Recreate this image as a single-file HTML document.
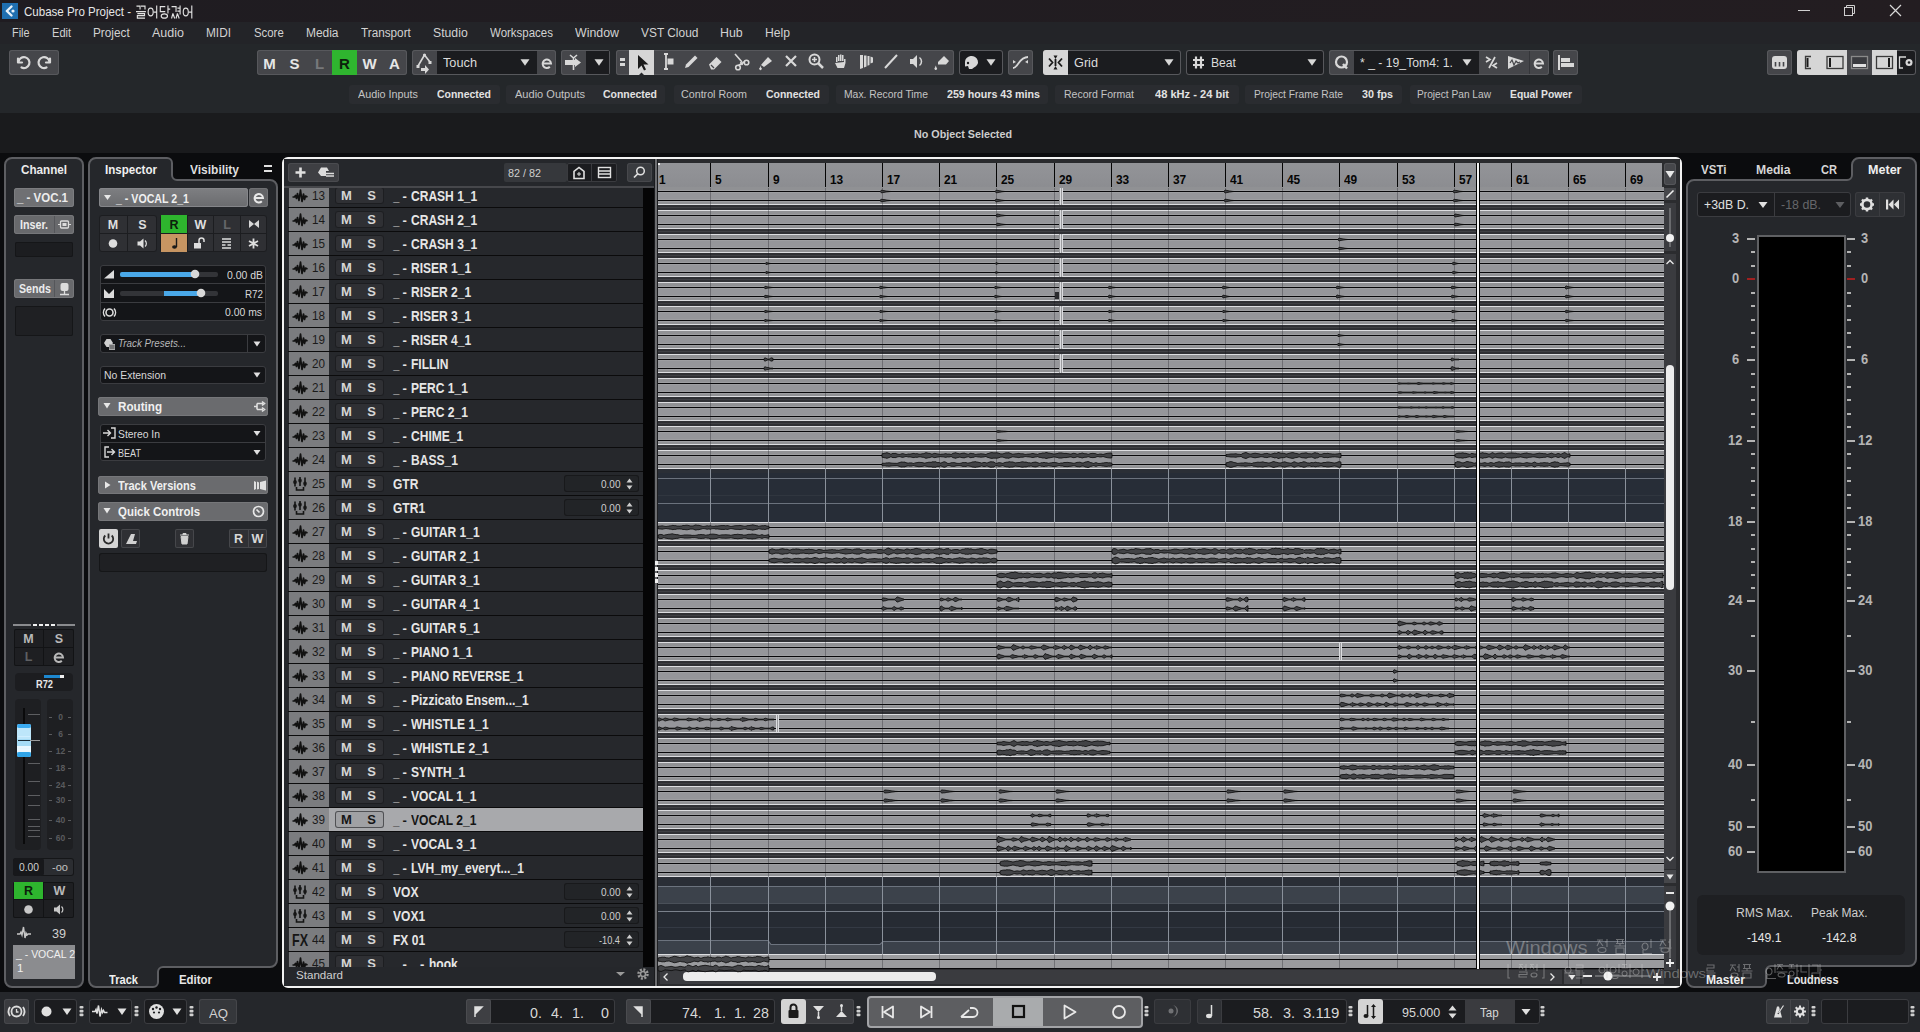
<!DOCTYPE html><html><head><meta charset="utf-8"><style>
html,body{margin:0;padding:0;}
body{width:1920px;height:1032px;overflow:hidden;position:relative;background:#0b0c0e;font-family:"Liberation Sans",sans-serif;}
.a{position:absolute;box-sizing:border-box;}
.t{white-space:nowrap;}
svg.a{overflow:visible;}
</style></head><body>
<div class="a" style="left:0px;top:0px;width:1920px;height:22px;background:linear-gradient(to right,#1f1c21,#231d21);"></div>
<div class="a" style="left:0px;top:22px;width:1920px;height:22px;background:#232428;"></div>
<div class="a" style="left:0px;top:44px;width:1920px;height:69px;background:#24272a;"></div>
<div class="a" style="left:0px;top:113px;width:1920px;height:40px;background:#1a1b1d;"></div>
<div class="a" style="left:0px;top:153px;width:1920px;height:839px;background:#0b0c0e;"></div>
<div class="a" style="left:0px;top:992px;width:1920px;height:40px;background:#25272b;"></div>
<svg class="a" style="left:2px;top:3px;" width="16" height="16" viewBox="0 0 16 16"><rect x="0" y="0" width="16" height="16" fill="#1f6fb0"/><path d="M9.5 3.5 L4.8 8 L9.5 12.5" stroke="#e8f2fa" stroke-width="2.4" fill="none" stroke-linecap="round" stroke-linejoin="round"/><circle cx="11" cy="8" r="1.6" fill="#e8f2fa"/></svg>
<div class="a t" style="left:24.00px;top:5.00px;font-size:13px;line-height:13px;color:#e6e6e6;transform:scaleX(0.8867);transform-origin:0 0;">Cubase Pro Project -</div>
<svg class="a" style="left:136px;top:5px;" width="64" height="14" viewBox="0 0 64 14"><g stroke="#e2e2e2" stroke-width="1.25" fill="none" transform="scale(0.9 1)">
<path d="M0.5 1h4v3.5M5.5 1h4.5v3.5M0 6.5h11M1.5 8.5h8v2.2h-8v2.3h8.5"/>
<g transform="translate(13 0)"><ellipse cx="3.3" cy="7" rx="2.8" ry="3.8"/><path d="M10 0.5v13M6.5 7h3.5"/></g>
<g transform="translate(26 0)"><path d="M6.5 1.5h-5.5v5h5.5M9.5 0.5v8M9.5 4h2.5"/><ellipse cx="5.5" cy="11" rx="3.5" ry="2.2"/></g>
<g transform="translate(39 0)"><path d="M0.5 1.5h5v5.5M10 0.5v9M7 3h3M7 6h3M2 8.5l-1.5 5M2 8.5l2 5M7 8.5l-1.5 5M7 8.5l2 5"/></g>
<g transform="translate(52 0)"><ellipse cx="3.3" cy="7" rx="2.8" ry="3.8"/><path d="M10 0.5v13M6.5 7h3.5"/></g>
</g></svg>
<div class="a" style="left:1798px;top:10px;width:12px;height:1px;background:#d0d0d0;"></div>
<svg class="a" style="left:1843px;top:4px;" width="14" height="14" viewBox="0 0 14 14"><rect x="1.5" y="3.5" width="8" height="8" fill="none" stroke="#d0d0d0" stroke-width="1"/><path d="M3.5 3.5V1.5h8v8h-2" fill="none" stroke="#d0d0d0" stroke-width="1"/></svg>
<svg class="a" style="left:1889px;top:4px;" width="14" height="14" viewBox="0 0 14 14"><path d="M1 1L12 12M12 1L1 12" stroke="#d8d8d8" stroke-width="1.2"/></svg>
<div class="a t" style="left:11.50px;top:27.42px;font-size:12.5px;line-height:12.5px;color:#d2d2d2;transform:scaleX(0.8688);transform-origin:0 0;">File</div>
<div class="a t" style="left:51.70px;top:27.42px;font-size:12.5px;line-height:12.5px;color:#d2d2d2;transform:scaleX(0.8867);transform-origin:0 0;">Edit</div>
<div class="a t" style="left:93.30px;top:27.42px;font-size:12.5px;line-height:12.5px;color:#d2d2d2;transform:scaleX(0.9433);transform-origin:0 0;">Project</div>
<div class="a t" style="left:152.00px;top:27.42px;font-size:12.5px;line-height:12.5px;color:#d2d2d2;">Audio</div>
<div class="a t" style="left:206.00px;top:27.42px;font-size:12.5px;line-height:12.5px;color:#d2d2d2;transform:scaleX(0.9475);transform-origin:0 0;">MIDI</div>
<div class="a t" style="left:254.00px;top:27.42px;font-size:12.5px;line-height:12.5px;color:#d2d2d2;transform:scaleX(0.9095);transform-origin:0 0;">Score</div>
<div class="a t" style="left:306.00px;top:27.42px;font-size:12.5px;line-height:12.5px;color:#d2d2d2;transform:scaleX(0.9546);transform-origin:0 0;">Media</div>
<div class="a t" style="left:361.00px;top:27.42px;font-size:12.5px;line-height:12.5px;color:#d2d2d2;transform:scaleX(0.9391);transform-origin:0 0;">Transport</div>
<div class="a t" style="left:433.00px;top:27.42px;font-size:12.5px;line-height:12.5px;color:#d2d2d2;transform:scaleX(0.9790);transform-origin:0 0;">Studio</div>
<div class="a t" style="left:490.00px;top:27.42px;font-size:12.5px;line-height:12.5px;color:#d2d2d2;transform:scaleX(0.9191);transform-origin:0 0;">Workspaces</div>
<div class="a t" style="left:575.00px;top:27.42px;font-size:12.5px;line-height:12.5px;color:#d2d2d2;transform:scaleX(0.9897);transform-origin:0 0;">Window</div>
<div class="a t" style="left:640.60px;top:27.42px;font-size:12.5px;line-height:12.5px;color:#d2d2d2;transform:scaleX(0.9532);transform-origin:0 0;">VST Cloud</div>
<div class="a t" style="left:720.00px;top:27.42px;font-size:12.5px;line-height:12.5px;color:#d2d2d2;transform:scaleX(0.9899);transform-origin:0 0;">Hub</div>
<div class="a t" style="left:765.00px;top:27.42px;font-size:12.5px;line-height:12.5px;color:#d2d2d2;transform:scaleX(0.9724);transform-origin:0 0;">Help</div>
<div class="a" style="left:9px;top:50px;width:50px;height:25px;background:#45464a;box-shadow:inset 0 0 0 1px #57585c;border-radius:3px;"></div>
<svg class="a" style="left:9px;top:50px;" width="50" height="25" viewBox="0 0 50 25"><g fill="none" stroke="#d8d8d8" stroke-width="2.2" stroke-linecap="round" stroke-linejoin="round">
<path d="M9 8.5v4h4"/><path d="M9.5 12a5.5 5.5 0 1 1 3 5.5"/>
<path d="M41 8.5v4h-4"/><path d="M40.5 12a5.5 5.5 0 1 0 -3 5.5"/></g></svg>
<div class="a" style="left:257px;top:50px;width:150px;height:25px;background:#45464a;box-shadow:inset 0 0 0 1px #57585c;border-radius:3px;"></div>
<div class="a" style="left:332px;top:50px;width:25px;height:25px;background:#2fb52f;"></div>
<div class="a t" style="left:263.25px;top:55.80px;font-size:15px;line-height:15px;color:#e6e6e6;font-weight:bold;">M</div>
<div class="a t" style="left:289.50px;top:55.80px;font-size:15px;line-height:15px;color:#e6e6e6;font-weight:bold;">S</div>
<div class="a t" style="left:314.92px;top:55.80px;font-size:15px;line-height:15px;color:#77787b;font-weight:bold;">L</div>
<div class="a t" style="left:339.08px;top:55.80px;font-size:15px;line-height:15px;color:#0c200c;font-weight:bold;">R</div>
<div class="a t" style="left:362.42px;top:55.80px;font-size:15px;line-height:15px;color:#e6e6e6;font-weight:bold;">W</div>
<div class="a t" style="left:389.08px;top:55.80px;font-size:15px;line-height:15px;color:#e6e6e6;font-weight:bold;">A</div>
<div class="a" style="left:412px;top:50px;width:144px;height:25px;background:#45464a;box-shadow:inset 0 0 0 1px #57585c;border-radius:3px;"></div>
<div class="a" style="left:437px;top:51px;width:100px;height:23px;background:#1b1c1f;"></div>
<svg class="a" style="left:412px;top:50px;" width="25" height="25" viewBox="0 0 25 25"><g stroke="#d8d8d8" stroke-width="1.6" fill="none"><path d="M12.5 5L6 16M12.5 5L18 12"/></g><circle cx="12.5" cy="5" r="1.6" fill="#d8d8d8"/><rect x="4.5" y="15" width="3" height="3" fill="#d8d8d8"/><rect x="16.5" y="11" width="3" height="3" fill="#d8d8d8"/><path d="M9 18h4v-3l4 4.5l-4 4.5v-3h-4z" fill="#d8d8d8"/></svg>
<div class="a t" style="left:443.00px;top:57.42px;font-size:12.5px;line-height:12.5px;color:#dcdcdc;transform:scaleX(1.0193);transform-origin:0 0;">Touch</div>
<svg class="a" style="left:520px;top:57px;" width="10" height="10" viewBox="0 0 10 10"><path d="M0.5 2.25H9.5L5 8.75z" fill="#d8d8d8"/></svg>
<svg class="a" style="left:537px;top:50px;" width="19" height="25" viewBox="0 0 19 25"><path d="M5.5 13.5h8.5a4.2 4.2 0 1 0 -1.2 3.2" fill="none" stroke="#d8d8d8" stroke-width="2"/></svg>
<div class="a" style="left:561px;top:50px;width:49px;height:25px;background:#45464a;box-shadow:inset 0 0 0 1px #57585c;border-radius:3px;"></div>
<div class="a" style="left:586px;top:51px;width:23px;height:23px;background:#1b1c1f;"></div>
<svg class="a" style="left:561px;top:50px;" width="25" height="25" viewBox="0 0 25 25"><path d="M4 10h6v5H4z M14 8l6 4.5l-6 4.5z" fill="#d8d8d8"/><path d="M9 5l3.5 3l3.5-3M12.5 8v12" stroke="#d8d8d8" stroke-width="1.6" fill="none"/><rect x="10" y="10" width="4" height="5" fill="#d8d8d8"/></svg>
<svg class="a" style="left:594px;top:57px;" width="10" height="10" viewBox="0 0 10 10"><path d="M0.5 2.25H9.5L5 8.75z" fill="#d8d8d8"/></svg>
<div class="a" style="left:616px;top:50px;width:338px;height:25px;background:#45464a;box-shadow:inset 0 0 0 1px #57585c;border-radius:3px;"></div>
<svg class="a" style="left:616px;top:50px;" width="13" height="25" viewBox="0 0 13 25"><rect x="4" y="8" width="5" height="3" fill="#d8d8d8"/><rect x="4" y="13" width="5" height="3" fill="#d8d8d8"/></svg>
<div class="a" style="left:629px;top:50px;width:25px;height:25px;background:#d6d6d6;"></div>
<svg class="a" style="left:629px;top:50px;" width="25" height="25" viewBox="0 0 25 25"><path d="M9 5v14l3.5-3.5l2.5 5l2-1l-2.5-5h5z" fill="#1a1a1a"/><path d="M10 25l2.5-2.5l2.5 2.5z" fill="#25272b"/></svg>
<svg class="a" style="left:654px;top:49px;" width="25" height="25" viewBox="0 0 25 25"><path d="M10 5h4M12 5v15M10 20h4" stroke="#d8d8d8" stroke-width="1.8" fill="none"/><rect x="13.5" y="9.5" width="6" height="6" fill="#d8d8d8"/></svg>
<svg class="a" style="left:679px;top:49px;" width="25" height="25" viewBox="0 0 25 25"><path d="M6 19l1-3.5l9-9l2.5 2.5l-9 9z" fill="#d8d8d8"/></svg>
<svg class="a" style="left:704px;top:49px;" width="25" height="25" viewBox="0 0 25 25"><path d="M5 15.5l7.5-7.5l5 5l-7.5 7.5h-3z" fill="#d8d8d8"/><path d="M7 16l3 3" stroke="#45464a" stroke-width="1.3"/></svg>
<svg class="a" style="left:729px;top:49px;" width="25" height="25" viewBox="0 0 25 25"><g stroke="#d8d8d8" stroke-width="1.6" fill="none"><path d="M6 5l7 8M11.5 13l2 3"/><circle cx="17.5" cy="13.5" r="2.3"/><circle cx="9" cy="18.5" r="2.3"/><path d="M16 12.5L9.5 16.5"/></g></svg>
<svg class="a" style="left:754px;top:49px;" width="25" height="25" viewBox="0 0 25 25"><path d="M7 16l7-8l4 4l-8 6z" fill="#d8d8d8"/><path d="M6 18.5a1.3 1.3 0 1 0 1 0l-.5-2z" fill="#d8d8d8"/></svg>
<svg class="a" style="left:779px;top:49px;" width="25" height="25" viewBox="0 0 25 25"><path d="M7 7l10 10M17 7L7 17" stroke="#d8d8d8" stroke-width="2.2"/></svg>
<svg class="a" style="left:804px;top:49px;" width="25" height="25" viewBox="0 0 25 25"><circle cx="10.5" cy="10.5" r="5" stroke="#d8d8d8" stroke-width="2" fill="none"/><path d="M14 14l5 5" stroke="#d8d8d8" stroke-width="2.5"/><path d="M10.5 8v5M8 10.5h5" stroke="#d8d8d8" stroke-width="1.6"/></svg>
<svg class="a" style="left:829px;top:49px;" width="25" height="25" viewBox="0 0 25 25"><path d="M7 13v-5h1.5v5M9 12v-6h1.5v6M11 12v-6.5h1.5v6.5M13 12v-6h1.5v6M15 13v-3h1.5v4l-1.5 5h-6.5l-2.5-5z" fill="#d8d8d8"/></svg>
<svg class="a" style="left:854px;top:49px;" width="25" height="25" viewBox="0 0 25 25"><path d="M6 6h3v13l-3 1zM10 6.5h2.5v11l-2.5 1zM13.5 7h2v9l-2 .8zM16.5 7.5l2.5 1v5l-2.5 1z" fill="#d8d8d8"/></svg>
<svg class="a" style="left:879px;top:49px;" width="25" height="25" viewBox="0 0 25 25"><path d="M6 19L18 6" stroke="#d8d8d8" stroke-width="2"/></svg>
<svg class="a" style="left:904px;top:49px;" width="25" height="25" viewBox="0 0 25 25"><path d="M6 10h3l4-4v13l-4-4h-3z" fill="#d8d8d8"/><path d="M15.5 8.5a5 5 0 0 1 0 8" stroke="#d8d8d8" stroke-width="1.5" fill="none"/></svg>
<svg class="a" style="left:929px;top:49px;" width="25" height="25" viewBox="0 0 25 25"><path d="M9 13l6-6l5 5l-3 3.5h-8z" fill="#d8d8d8"/><path d="M6 18.5a1.3 1.3 0 1 0 1.5 0l-.7-2z" fill="#d8d8d8"/></svg>
<div class="a" style="left:959px;top:50px;width:44px;height:25px;background:#1b1c1f;box-shadow:inset 0 0 0 1px #57585c;border-radius:3px;"></div>
<svg class="a" style="left:959px;top:50px;" width="25" height="25" viewBox="0 0 25 25"><path d="M6 12a6.5 6 0 1 1 9 5.5l-2 1.5h-3l-1-3l-3 .5z" fill="#d8d8d8"/><circle cx="9" cy="13" r="1.2" fill="#1b1c1f"/></svg>
<svg class="a" style="left:986px;top:57px;" width="10" height="10" viewBox="0 0 10 10"><path d="M0.5 2.25H9.5L5 8.75z" fill="#d8d8d8"/></svg>
<div class="a" style="left:1008px;top:50px;width:25px;height:25px;background:#45464a;box-shadow:inset 0 0 0 1px #57585c;border-radius:3px;"></div>
<svg class="a" style="left:1008px;top:50px;" width="25" height="25" viewBox="0 0 25 25"><path d="M5 18c5 0 6-11 15-11" stroke="#d8d8d8" stroke-width="1.8" fill="none"/><path d="M5 10l3 2l-3 1.5zM20 10l-3 2l3 1.5z" fill="#d8d8d8"/></svg>
<div class="a" style="left:1043px;top:50px;width:138px;height:25px;background:#1b1c1f;box-shadow:inset 0 0 0 1px #57585c;border-radius:3px;"></div>
<div class="a" style="left:1043px;top:50px;width:25px;height:25px;background:#d6d6d6;border-radius:3px;border-top-right-radius:0;border-bottom-right-radius:0;"></div>
<svg class="a" style="left:1043px;top:50px;" width="25" height="25" viewBox="0 0 25 25"><g stroke="#1a1a1a" stroke-width="1.8" fill="none"><path d="M6 8.5l3.5 4l-3.5 4M19 8.5l-3.5 4l3.5 4M12.5 9v7"/></g><path d="M10.5 5.5h4l-2 3.5zM10.5 19.5h4l-2-3.5z" fill="#1a1a1a"/></svg>
<div class="a t" style="left:1074.00px;top:57.42px;font-size:12.5px;line-height:12.5px;color:#dcdcdc;transform:scaleX(1.0163);transform-origin:0 0;">Grid</div>
<svg class="a" style="left:1164px;top:57px;" width="10" height="10" viewBox="0 0 10 10"><path d="M0.5 2.25H9.5L5 8.75z" fill="#d8d8d8"/></svg>
<div class="a" style="left:1186px;top:50px;width:138px;height:25px;background:#1b1c1f;box-shadow:inset 0 0 0 1px #57585c;border-radius:3px;"></div>
<svg class="a" style="left:1186px;top:50px;" width="25" height="25" viewBox="0 0 25 25"><path d="M10 6.5v12M15 6.5v12M7 10h11M7 15h11" stroke="#d8d8d8" stroke-width="2.2"/></svg>
<div class="a t" style="left:1211.00px;top:57.42px;font-size:12.5px;line-height:12.5px;color:#dcdcdc;transform:scaleX(0.9722);transform-origin:0 0;">Beat</div>
<svg class="a" style="left:1307px;top:57px;" width="10" height="10" viewBox="0 0 10 10"><path d="M0.5 2.25H9.5L5 8.75z" fill="#d8d8d8"/></svg>
<div class="a" style="left:1329px;top:50px;width:220px;height:25px;background:#45464a;box-shadow:inset 0 0 0 1px #57585c;border-radius:3px;"></div>
<div class="a" style="left:1354px;top:51px;width:125px;height:23px;background:#1b1c1f;"></div>
<svg class="a" style="left:1329px;top:50px;" width="25" height="25" viewBox="0 0 25 25"><circle cx="12.5" cy="12" r="5.5" stroke="#d8d8d8" stroke-width="2.2" fill="none"/><path d="M14 14l4 4.5" stroke="#d8d8d8" stroke-width="2.4"/></svg>
<div class="a t" style="left:1360.00px;top:57.42px;font-size:12.5px;line-height:12.5px;color:#dcdcdc;transform:scaleX(0.9770);transform-origin:0 0;">* _ - 19_Tom4: 1.</div>
<svg class="a" style="left:1462px;top:57px;" width="10" height="10" viewBox="0 0 10 10"><path d="M0.5 2.25H9.5L5 8.75z" fill="#d8d8d8"/></svg>
<svg class="a" style="left:1479px;top:50px;" width="25" height="25" viewBox="0 0 25 25"><path d="M7 7l4 2.5l-4 2.5M10 18l6-11M18 13l-4 2.5l4 2.5" stroke="#d8d8d8" stroke-width="1.7" fill="none"/></svg>
<svg class="a" style="left:1504px;top:50px;" width="25" height="25" viewBox="0 0 25 25"><path d="M4 6l16 5l-16 8z" fill="#d8d8d8"/><path d="M6 13l2-3l2 5l2-4l2 2l2-1" stroke="#45464a" stroke-width="1.2" fill="none"/></svg>
<div class="a" style="left:1529px;top:51px;width:1px;height:23px;background:#35363a;"></div>
<svg class="a" style="left:1529px;top:50px;" width="19" height="25" viewBox="0 0 19 25"><path d="M5.5 13.5h8.5a4.2 4.2 0 1 0 -1.2 3.2" fill="none" stroke="#d8d8d8" stroke-width="2"/></svg>
<div class="a" style="left:1553px;top:50px;width:25px;height:25px;background:#45464a;box-shadow:inset 0 0 0 1px #57585c;border-radius:3px;"></div>
<svg class="a" style="left:1553px;top:50px;" width="25" height="25" viewBox="0 0 25 25"><rect x="5" y="5" width="2" height="15" fill="#d8d8d8"/><rect x="8" y="8" width="9" height="4" fill="#d8d8d8"/><rect x="8" y="13" width="13" height="4" fill="#d8d8d8"/></svg>
<div class="a" style="left:1767px;top:50px;width:25px;height:25px;background:#45464a;box-shadow:inset 0 0 0 1px #57585c;border-radius:3px;"></div>
<svg class="a" style="left:1767px;top:50px;" width="25" height="25" viewBox="0 0 25 25"><rect x="5" y="6" width="15" height="13" rx="3" fill="#d8d8d8"/><path d="M8.5 12v4.5M12.5 12v4.5M16.5 12v4.5" stroke="#45464a" stroke-width="1.6"/></svg>
<div class="a" style="left:1797px;top:50px;width:119px;height:25px;background:#1b1c1f;box-shadow:inset 0 0 0 1px #57585c;border-radius:3px;"></div>
<div class="a" style="left:1797px;top:50px;width:50px;height:25px;background:#d6d6d6;border-radius:3px;border-top-right-radius:0;border-bottom-right-radius:0;"></div>
<div class="a" style="left:1847px;top:50px;width:25px;height:25px;background:#46474b;"></div>
<div class="a" style="left:1872px;top:50px;width:25px;height:25px;background:#d6d6d6;"></div>
<svg class="a" style="left:1797px;top:50px;" width="25" height="25" viewBox="0 0 25 25"><path d="M14 6.5H8.5v12H14" stroke="#3a3a3a" stroke-width="1.3" fill="none"/><rect x="9.5" y="8" width="2" height="9" fill="#1a1a1a"/></svg>
<svg class="a" style="left:1822px;top:50px;" width="25" height="25" viewBox="0 0 25 25"><rect x="5" y="6.5" width="16" height="12" stroke="#3a3a3a" stroke-width="1.3" fill="none"/><rect x="7" y="8" width="2" height="9" fill="#1a1a1a"/></svg>
<svg class="a" style="left:1847px;top:50px;" width="25" height="25" viewBox="0 0 25 25"><rect x="4.5" y="6.5" width="16" height="12" stroke="#8a8a8a" stroke-width="1.3" fill="#3a3b3f"/><rect x="6" y="14" width="13" height="3" fill="#e0e0e0"/></svg>
<svg class="a" style="left:1872px;top:50px;" width="25" height="25" viewBox="0 0 25 25"><rect x="4.5" y="6.5" width="16" height="12" stroke="#3a3a3a" stroke-width="1.3" fill="none"/><rect x="16" y="8" width="2" height="9" fill="#1a1a1a"/></svg>
<svg class="a" style="left:1897px;top:50px;" width="19" height="25" viewBox="0 0 19 25"><path d="M9 7H2.5v11H6" stroke="#d8d8d8" stroke-width="1.3" fill="none"/><circle cx="12" cy="12.5" r="3.5" fill="#d8d8d8"/><circle cx="12" cy="12.5" r="1.3" fill="#1b1c1f"/></svg>
<div class="a" style="left:349px;top:85px;width:151px;height:19px;background:#2a2c30;border-radius:3px;"></div>
<div class="a t" style="left:358.00px;top:89.27px;font-size:11.5px;line-height:11.5px;color:#c4c4c4;transform:scaleX(0.9384);transform-origin:0 0;">Audio Inputs</div>
<div class="a t" style="left:437.00px;top:89.27px;font-size:11.5px;line-height:11.5px;color:#e2e2e2;font-weight:bold;transform:scaleX(0.9087);transform-origin:0 0;">Connected</div>
<div class="a" style="left:506px;top:85px;width:159px;height:19px;background:#2a2c30;border-radius:3px;"></div>
<div class="a t" style="left:515.00px;top:89.27px;font-size:11.5px;line-height:11.5px;color:#c4c4c4;transform:scaleX(0.9605);transform-origin:0 0;">Audio Outputs</div>
<div class="a t" style="left:603.00px;top:89.27px;font-size:11.5px;line-height:11.5px;color:#e2e2e2;font-weight:bold;transform:scaleX(0.9087);transform-origin:0 0;">Connected</div>
<div class="a" style="left:674px;top:85px;width:155px;height:19px;background:#2a2c30;border-radius:3px;"></div>
<div class="a t" style="left:681.00px;top:89.27px;font-size:11.5px;line-height:11.5px;color:#c4c4c4;transform:scaleX(0.9303);transform-origin:0 0;">Control Room</div>
<div class="a t" style="left:766.00px;top:89.27px;font-size:11.5px;line-height:11.5px;color:#e2e2e2;font-weight:bold;transform:scaleX(0.9087);transform-origin:0 0;">Connected</div>
<div class="a" style="left:836px;top:85px;width:212px;height:19px;background:#2a2c30;border-radius:3px;"></div>
<div class="a t" style="left:844.00px;top:89.27px;font-size:11.5px;line-height:11.5px;color:#c4c4c4;transform:scaleX(0.9003);transform-origin:0 0;">Max. Record Time</div>
<div class="a t" style="left:947.00px;top:89.27px;font-size:11.5px;line-height:11.5px;color:#e2e2e2;font-weight:bold;transform:scaleX(0.9267);transform-origin:0 0;">259 hours 43 mins</div>
<div class="a" style="left:1055px;top:85px;width:184px;height:19px;background:#2a2c30;border-radius:3px;"></div>
<div class="a t" style="left:1064.00px;top:89.27px;font-size:11.5px;line-height:11.5px;color:#c4c4c4;transform:scaleX(0.9128);transform-origin:0 0;">Record Format</div>
<div class="a t" style="left:1155.00px;top:89.27px;font-size:11.5px;line-height:11.5px;color:#e2e2e2;font-weight:bold;transform:scaleX(0.9649);transform-origin:0 0;">48 kHz - 24 bit</div>
<div class="a" style="left:1245px;top:85px;width:157px;height:19px;background:#2a2c30;border-radius:3px;"></div>
<div class="a t" style="left:1254.00px;top:89.27px;font-size:11.5px;line-height:11.5px;color:#c4c4c4;transform:scaleX(0.8927);transform-origin:0 0;">Project Frame Rate</div>
<div class="a t" style="left:1362.00px;top:89.27px;font-size:11.5px;line-height:11.5px;color:#e2e2e2;font-weight:bold;transform:scaleX(0.9327);transform-origin:0 0;">30 fps</div>
<div class="a" style="left:1410px;top:85px;width:172px;height:19px;background:#2a2c30;border-radius:3px;"></div>
<div class="a t" style="left:1417.00px;top:89.27px;font-size:11.5px;line-height:11.5px;color:#c4c4c4;transform:scaleX(0.8837);transform-origin:0 0;">Project Pan Law</div>
<div class="a t" style="left:1510.00px;top:89.27px;font-size:11.5px;line-height:11.5px;color:#e2e2e2;font-weight:bold;transform:scaleX(0.8983);transform-origin:0 0;">Equal Power</div>
<div class="a t" style="left:914.00px;top:129.27px;font-size:11.5px;line-height:11.5px;color:#cdcdcd;font-weight:bold;transform:scaleX(0.9350);transform-origin:0 0;">No Object Selected</div>
<svg class="a" style="left:0px;top:150px;" width="90" height="845" viewBox="0 0 90 845"><path d="M12 8 H76 a7 7 0 0 1 7 7 V830 a7 7 0 0 1 -7 7 H12 a7 7 0 0 1 -7 -7 V15 a7 7 0 0 1 7 -7z" fill="#25272b" stroke="#5d5e62" stroke-width="2"/></svg>
<div class="a t" style="left:21.00px;top:163.00px;font-size:13px;line-height:13px;color:#ececec;font-weight:bold;transform:scaleX(0.8970);transform-origin:0 0;">Channel</div>
<div class="a" style="left:14px;top:188px;width:60px;height:19px;background:#6f7073;box-shadow:inset 0 0 0 1px #7c7d80;border-radius:3px;"></div>
<div class="a t" style="left:17.00px;top:192.42px;font-size:12.5px;line-height:12.5px;color:#ececec;font-weight:bold;transform:scaleX(0.9177);transform-origin:0 0;">_ - VOC.1</div>
<div class="a" style="left:14px;top:215px;width:60px;height:19px;background:#68696c;box-shadow:inset 0 0 0 1px #76777a;border-radius:3px;"></div>
<div class="a" style="left:54px;top:216px;width:1px;height:17px;background:#55565a;"></div>
<div class="a t" style="left:20.00px;top:219.42px;font-size:12.5px;line-height:12.5px;color:#ececec;font-weight:bold;transform:scaleX(0.8573);transform-origin:0 0;">Inser.</div>
<svg class="a" style="left:55px;top:215px;" width="19" height="19" viewBox="0 0 19 19"><rect x="5.5" y="6" width="8" height="7" rx="1" fill="none" stroke="#dcdcdc" stroke-width="1.3"/><rect x="7.5" y="8" width="4" height="3" fill="#dcdcdc"/><path d="M3 9.5h2.5M13.5 9.5h2.5" stroke="#dcdcdc" stroke-width="1.2"/></svg>
<div class="a" style="left:15px;top:242px;width:58px;height:15px;background:#1c1d20;box-shadow:inset 0 0 0 1px #151618;border-radius:2px;"></div>
<div class="a" style="left:14px;top:279px;width:60px;height:19px;background:#68696c;box-shadow:inset 0 0 0 1px #76777a;border-radius:3px;"></div>
<div class="a" style="left:54px;top:280px;width:1px;height:17px;background:#55565a;"></div>
<div class="a t" style="left:19.00px;top:283.42px;font-size:12.5px;line-height:12.5px;color:#ececec;font-weight:bold;transform:scaleX(0.8530);transform-origin:0 0;">Sends</div>
<svg class="a" style="left:55px;top:279px;" width="19" height="19" viewBox="0 0 19 19"><rect x="5.5" y="4" width="8" height="8" rx="2" fill="#dcdcdc"/><path d="M9.5 12v3M5 15.5h9" stroke="#dcdcdc" stroke-width="1.3"/></svg>
<div class="a" style="left:15px;top:306px;width:58px;height:30px;background:#1f2023;box-shadow:inset 0 0 0 1px #151618;border-radius:2px;"></div>
<div class="a" style="left:13px;top:624px;width:18px;height:2px;background:#8a8b8e;"></div>
<div class="a" style="left:33px;top:624px;width:4px;height:2px;background:#f0f0f0;"></div>
<div class="a" style="left:39px;top:624px;width:4px;height:2px;background:#f0f0f0;"></div>
<div class="a" style="left:45px;top:624px;width:4px;height:2px;background:#f0f0f0;"></div>
<div class="a" style="left:51px;top:624px;width:4px;height:2px;background:#f0f0f0;"></div>
<div class="a" style="left:57px;top:624px;width:18px;height:2px;background:#8a8b8e;"></div>
<div class="a" style="left:14px;top:629px;width:60px;height:37px;background:#1e1f22;box-shadow:inset 0 0 0 1px #121315;border-radius:2px;"></div>
<div class="a" style="left:43px;top:630px;width:1px;height:35px;background:#121315;"></div>
<div class="a" style="left:15px;top:647px;width:58px;height:1px;background:#121315;"></div>
<div class="a t" style="left:23.29px;top:633.42px;font-size:12.5px;line-height:12.5px;color:#b8b8b8;font-weight:bold;">M</div>
<div class="a t" style="left:54.83px;top:633.42px;font-size:12.5px;line-height:12.5px;color:#b8b8b8;font-weight:bold;">S</div>
<div class="a t" style="left:24.68px;top:651.42px;font-size:12.5px;line-height:12.5px;color:#5f6063;font-weight:bold;">L</div>
<svg class="a" style="left:44px;top:648px;" width="30" height="18" viewBox="0 0 30 18"><path d="M10.5 9.5h8.5a4.2 4.2 0 1 0 -1.2 3.2" fill="none" stroke="#b8b8b8" stroke-width="2"/></svg>
<div class="a" style="left:15px;top:673px;width:58px;height:18px;background:#1c1d20;border-radius:4px;"></div>
<div class="a" style="left:44px;top:675px;width:17px;height:3px;background:#1d88d0;"></div>
<div class="a" style="left:60px;top:675px;width:4px;height:3px;background:#f0f0f0;"></div>
<div class="a t" style="left:35.50px;top:679.27px;font-size:11.5px;line-height:11.5px;color:#e8e8e8;font-weight:bold;transform:scaleX(0.8058);transform-origin:0 0;">R72</div>
<div class="a" style="left:15px;top:699px;width:26px;height:151px;background:#1e1f22;border-radius:4px;"></div>
<div class="a" style="left:47px;top:699px;width:26px;height:151px;background:#1e1f22;border-radius:4px;"></div>
<div class="a" style="left:23px;top:708px;width:2px;height:136px;background:#0a0a0b;"></div>
<div class="a" style="left:28px;top:714px;width:12px;height:1px;background:#5d5e61;"></div>
<div class="a" style="left:28px;top:763px;width:12px;height:1px;background:#5d5e61;"></div>
<div class="a" style="left:28px;top:781px;width:12px;height:1px;background:#5d5e61;"></div>
<div class="a" style="left:28px;top:795px;width:12px;height:1px;background:#5d5e61;"></div>
<div class="a" style="left:28px;top:805px;width:12px;height:1px;background:#5d5e61;"></div>
<div class="a" style="left:28px;top:819px;width:12px;height:1px;background:#5d5e61;"></div>
<div class="a" style="left:28px;top:826px;width:12px;height:1px;background:#5d5e61;"></div>
<div class="a" style="left:28px;top:830px;width:12px;height:1px;background:#5d5e61;"></div>
<div class="a" style="left:28px;top:836px;width:12px;height:1px;background:#5d5e61;"></div>
<div class="a" style="left:17px;top:724px;width:14px;height:33px;background:#a6dcf6;border-radius:2px;"></div>
<div class="a" style="left:17px;top:724px;width:14px;height:4px;background:#3aaaf0;border-radius:2px;"></div>
<div class="a" style="left:17px;top:728px;width:14px;height:11px;background:#bde6fa;"></div>
<div class="a" style="left:17px;top:746px;width:14px;height:6px;background:#eaf8ff;"></div>
<div class="a" style="left:17px;top:752px;width:14px;height:5px;background:#2fa4e8;border-radius:2px;"></div>
<div class="a" style="left:18px;top:736px;width:12px;height:1px;background:#cfeeff;"></div>
<div class="a" style="left:18px;top:740px;width:12px;height:1px;background:#1a2a33;"></div>
<div class="a" style="left:30px;top:740px;width:10px;height:1px;background:#9a9a9a;"></div>
<div class="a" style="left:18px;top:748px;width:12px;height:1px;background:#e6f6ff;"></div>
<div class="a t" style="left:58.14px;top:713.30px;font-size:8.5px;line-height:8.5px;color:#5a5b5e;font-weight:bold;">0</div>
<div class="a" style="left:49px;top:717px;width:3px;height:1px;background:#5a5b5e;"></div>
<div class="a" style="left:68px;top:717px;width:3px;height:1px;background:#5a5b5e;"></div>
<div class="a t" style="left:58.14px;top:730.30px;font-size:8.5px;line-height:8.5px;color:#5a5b5e;font-weight:bold;">6</div>
<div class="a" style="left:49px;top:734px;width:3px;height:1px;background:#5a5b5e;"></div>
<div class="a" style="left:68px;top:734px;width:3px;height:1px;background:#5a5b5e;"></div>
<div class="a t" style="left:55.77px;top:747.30px;font-size:8.5px;line-height:8.5px;color:#5a5b5e;font-weight:bold;">12</div>
<div class="a" style="left:49px;top:751px;width:3px;height:1px;background:#5a5b5e;"></div>
<div class="a" style="left:68px;top:751px;width:3px;height:1px;background:#5a5b5e;"></div>
<div class="a t" style="left:55.77px;top:764.30px;font-size:8.5px;line-height:8.5px;color:#5a5b5e;font-weight:bold;">18</div>
<div class="a" style="left:49px;top:768px;width:3px;height:1px;background:#5a5b5e;"></div>
<div class="a" style="left:68px;top:768px;width:3px;height:1px;background:#5a5b5e;"></div>
<div class="a t" style="left:55.77px;top:781.30px;font-size:8.5px;line-height:8.5px;color:#5a5b5e;font-weight:bold;">24</div>
<div class="a" style="left:49px;top:785px;width:3px;height:1px;background:#5a5b5e;"></div>
<div class="a" style="left:68px;top:785px;width:3px;height:1px;background:#5a5b5e;"></div>
<div class="a t" style="left:55.77px;top:796.30px;font-size:8.5px;line-height:8.5px;color:#5a5b5e;font-weight:bold;">30</div>
<div class="a" style="left:49px;top:800px;width:3px;height:1px;background:#5a5b5e;"></div>
<div class="a" style="left:68px;top:800px;width:3px;height:1px;background:#5a5b5e;"></div>
<div class="a t" style="left:55.77px;top:816.30px;font-size:8.5px;line-height:8.5px;color:#5a5b5e;font-weight:bold;">40</div>
<div class="a" style="left:49px;top:820px;width:3px;height:1px;background:#5a5b5e;"></div>
<div class="a" style="left:68px;top:820px;width:3px;height:1px;background:#5a5b5e;"></div>
<div class="a t" style="left:55.77px;top:834.30px;font-size:8.5px;line-height:8.5px;color:#5a5b5e;font-weight:bold;">60</div>
<div class="a" style="left:49px;top:838px;width:3px;height:1px;background:#5a5b5e;"></div>
<div class="a" style="left:68px;top:838px;width:3px;height:1px;background:#5a5b5e;"></div>
<div class="a" style="left:13px;top:858px;width:61px;height:18px;background:#2b2d31;box-shadow:inset 0 0 0 1px #151618;border-radius:3px;"></div>
<div class="a" style="left:13px;top:858px;width:31px;height:18px;background:#17181b;border-radius:3px;"></div>
<div class="a t" style="left:18.50px;top:862.27px;font-size:11.5px;line-height:11.5px;color:#d0d0d0;transform:scaleX(0.8935);transform-origin:0 0;">0.00</div>
<div class="a t" style="left:51.50px;top:862.27px;font-size:11.5px;line-height:11.5px;color:#c0c0c0;transform:scaleX(0.9626);transform-origin:0 0;">-oo</div>
<div class="a" style="left:13px;top:882px;width:61px;height:36px;background:#1e1f22;box-shadow:inset 0 0 0 1px #121315;border-radius:2px;"></div>
<div class="a" style="left:14px;top:882px;width:29px;height:17px;background:#2eb52e;"></div>
<div class="a" style="left:43px;top:883px;width:1px;height:34px;background:#121315;"></div>
<div class="a" style="left:14px;top:899px;width:59px;height:1px;background:#121315;"></div>
<div class="a t" style="left:23.99px;top:885.42px;font-size:12.5px;line-height:12.5px;color:#0c200c;font-weight:bold;">R</div>
<div class="a t" style="left:53.60px;top:885.42px;font-size:12.5px;line-height:12.5px;color:#b8b8b8;font-weight:bold;">W</div>
<svg class="a" style="left:14px;top:900px;" width="29" height="18" viewBox="0 0 29 18"><circle cx="14.5" cy="9.5" r="4.3" fill="#c8c8c8"/></svg>
<svg class="a" style="left:44px;top:900px;" width="30" height="18" viewBox="0 0 30 18"><path d="M10 7.5h2.5l3.5-3v10l-3.5-3H10z" fill="#c8c8c8"/><path d="M17.5 6.5a4 4 0 0 1 0 6" stroke="#c8c8c8" stroke-width="1.2" fill="none"/></svg>
<svg class="a" style="left:16px;top:925px;" width="16" height="16" viewBox="0 0 16 16"><path d="M1 9h3l1-2l1 3l1.5-8l1.5 11l1-5l1 2l1-1h3" stroke="#c8c8c8" stroke-width="1.4" fill="none"/></svg>
<div class="a t" style="left:51.50px;top:928.42px;font-size:12.5px;line-height:12.5px;color:#d0d0d0;transform:scaleX(1.0069);transform-origin:0 0;">39</div>
<div class="a" style="left:13px;top:945px;width:62px;height:34px;background:#8b8c8f;"></div>
<div class="a t" style="left:16.00px;top:949.27px;font-size:11.5px;line-height:11.5px;color:#f0f0f0;transform:scaleX(0.9110);transform-origin:0 0;">_ - VOCAL 2</div>
<div class="a t" style="left:17.00px;top:963.27px;font-size:11.5px;line-height:11.5px;color:#f0f0f0;">1</div>
<svg class="a" style="left:80px;top:150px;" width="210" height="845" viewBox="0 0 210 845"><path d="M96 158 H167 a5 5 0 0 1 5 5 V175 a5 5 0 0 0 5 5 H270 a7 7 0 0 1 7 7 V960 a7 7 0 0 1 -7 7 H163 a5 5 0 0 0 -5 5 V982 a5 5 0 0 1 -5 5 H96 a7 7 0 0 1 -7 -7 V165 a7 7 0 0 1 7 -7z" transform="translate(-80 -150)" fill="#25272b" stroke="#5d5e62" stroke-width="2"/></svg>
<div class="a t" style="left:104.50px;top:163.00px;font-size:13px;line-height:13px;color:#f0f0f0;font-weight:bold;transform:scaleX(0.8887);transform-origin:0 0;">Inspector</div>
<div class="a t" style="left:190.00px;top:163.00px;font-size:13px;line-height:13px;color:#dedede;font-weight:bold;transform:scaleX(0.9206);transform-origin:0 0;">Visibility</div>
<div class="a" style="left:264px;top:165px;width:8px;height:2px;background:#e0e0e0;"></div>
<div class="a" style="left:264px;top:170px;width:8px;height:2px;background:#e0e0e0;"></div>
<div class="a" style="left:99px;top:188px;width:149px;height:19px;background:linear-gradient(#7e7f82,#6a6b6e);box-shadow:inset 0 0 0 1px #85868a;border-radius:3px;"></div>
<div class="a" style="left:249px;top:188px;width:19px;height:19px;background:#636467;box-shadow:inset 0 0 0 1px #707174;border-radius:3px;"></div>
<svg class="a" style="left:99px;top:188px;" width="20" height="19" viewBox="0 0 20 19"><path d="M5 7h7l-3.5 5z" fill="#e8e8e8"/></svg>
<div class="a t" style="left:116.00px;top:192.00px;font-size:13px;line-height:13px;color:#f0f0f0;font-weight:bold;transform:scaleX(0.8170);transform-origin:0 0;">_ - VOCAL 2_1</div>
<svg class="a" style="left:249px;top:188px;" width="19" height="19" viewBox="0 0 19 19"><path d="M5.5 10h8.5a4.2 4.2 0 1 0 -1.2 3.2" fill="none" stroke="#e8e8e8" stroke-width="2"/></svg>
<div class="a" style="left:99px;top:215px;width:58px;height:37px;background:#2f3034;box-shadow:inset 0 0 0 1px #1c1d20;border-radius:3px;"></div>
<div class="a" style="left:160px;top:215px;width:107px;height:37px;background:#2f3034;box-shadow:inset 0 0 0 1px #1c1d20;border-radius:3px;"></div>
<div class="a" style="left:127px;top:216px;width:1px;height:35px;background:#1c1d20;"></div>
<div class="a" style="left:100px;top:233px;width:56px;height:1px;background:#1c1d20;"></div>
<div class="a" style="left:161px;top:215px;width:26px;height:18px;background:#2eb52e;"></div>
<div class="a" style="left:161px;top:234px;width:26px;height:18px;background:#c79562;"></div>
<div class="a" style="left:187px;top:216px;width:1px;height:35px;background:#1c1d20;"></div>
<div class="a" style="left:213px;top:216px;width:1px;height:35px;background:#1c1d20;"></div>
<div class="a" style="left:240px;top:216px;width:1px;height:35px;background:#1c1d20;"></div>
<div class="a" style="left:161px;top:233px;width:105px;height:1px;background:#1c1d20;"></div>
<div class="a t" style="left:107.79px;top:218.92px;font-size:12.5px;line-height:12.5px;color:#dedede;font-weight:bold;">M</div>
<div class="a t" style="left:138.33px;top:218.92px;font-size:12.5px;line-height:12.5px;color:#dedede;font-weight:bold;">S</div>
<div class="a t" style="left:169.49px;top:218.92px;font-size:12.5px;line-height:12.5px;color:#0c200c;font-weight:bold;">R</div>
<div class="a t" style="left:194.60px;top:218.92px;font-size:12.5px;line-height:12.5px;color:#dedede;font-weight:bold;">W</div>
<div class="a t" style="left:223.18px;top:218.92px;font-size:12.5px;line-height:12.5px;color:#66676a;font-weight:bold;">L</div>
<svg class="a" style="left:240px;top:215px;" width="27" height="18" viewBox="0 0 27 18"><path d="M9 5l5 4l-5 4zM19 5l-5 4l5 4z" fill="#d8d8d8"/></svg>
<svg class="a" style="left:99px;top:234px;" width="28" height="18" viewBox="0 0 28 18"><circle cx="14" cy="9.5" r="4.3" fill="#dedede"/></svg>
<svg class="a" style="left:128px;top:234px;" width="29" height="18" viewBox="0 0 29 18"><path d="M9.5 7.5h2.5l3.5-3v10l-3.5-3H9.5z" fill="#dedede"/><path d="M17 6.5a4 4 0 0 1 0 6" stroke="#dedede" stroke-width="1.2" fill="none"/></svg>
<svg class="a" style="left:161px;top:234px;" width="26" height="18" viewBox="0 0 26 18"><path d="M15.5 4v9" stroke="#1a1a1a" stroke-width="1.4"/><ellipse cx="13.5" cy="13" rx="2.4" ry="1.7" fill="#1a1a1a"/></svg>
<svg class="a" style="left:187px;top:234px;" width="26" height="18" viewBox="0 0 26 18"><rect x="7" y="9" width="7" height="5.5" fill="#dedede"/><path d="M12 9V6.5a2.5 2.5 0 0 1 5 0V8" stroke="#dedede" stroke-width="1.5" fill="none"/></svg>
<svg class="a" style="left:213px;top:234px;" width="27" height="18" viewBox="0 0 27 18"><path d="M9 5h9M9 8h9M9 11h3.5M14.5 11h3.5M9 14h9" stroke="#dedede" stroke-width="1.4"/></svg>
<svg class="a" style="left:240px;top:234px;" width="27" height="18" viewBox="0 0 27 18"><path d="M13.5 4.5v10M9 7l9 5M18 7l-9 5" stroke="#dedede" stroke-width="1.8"/></svg>
<div class="a" style="left:100px;top:265px;width:166px;height:56px;background:#141518;box-shadow:inset 0 0 0 1px #3b3c40;border-radius:3px;"></div>
<div class="a" style="left:101px;top:283px;width:164px;height:1px;background:#3b3c40;"></div>
<div class="a" style="left:101px;top:302px;width:164px;height:1px;background:#3b3c40;"></div>
<svg class="a" style="left:100px;top:265px;" width="25" height="18" viewBox="0 0 25 18"><path d="M4 13.5L14 5v8.5z" fill="#dcdcdc"/></svg>
<div class="a" style="left:120px;top:272px;width:98px;height:5px;background:#333438;border-radius:2px;"></div>
<div class="a" style="left:120px;top:272px;width:75px;height:5px;background:#4aa8e8;border-radius:2px;"></div>
<svg class="a" style="left:190px;top:269px;" width="10" height="10" viewBox="0 0 10 10"><circle cx="5" cy="5" r="4.3" fill="#d8d8d8"/></svg>
<div class="a t" style="left:227.00px;top:270.27px;font-size:11.5px;line-height:11.5px;color:#d8d8d8;transform:scaleX(0.9081);transform-origin:0 0;">0.00 dB</div>
<svg class="a" style="left:100px;top:284px;" width="25" height="18" viewBox="0 0 25 18"><path d="M4 5l5 5l5-5v9H4z" fill="#dcdcdc"/></svg>
<div class="a" style="left:120px;top:291px;width:98px;height:5px;background:#333438;border-radius:2px;"></div>
<div class="a" style="left:164px;top:291px;width:37px;height:5px;background:#4aa8e8;"></div>
<svg class="a" style="left:196px;top:288px;" width="10" height="10" viewBox="0 0 10 10"><circle cx="5" cy="5" r="4.3" fill="#d8d8d8"/></svg>
<div class="a t" style="left:245.00px;top:289.27px;font-size:11.5px;line-height:11.5px;color:#d8d8d8;transform:scaleX(0.8532);transform-origin:0 0;">R72</div>
<svg class="a" style="left:100px;top:303px;" width="25" height="18" viewBox="0 0 25 18"><circle cx="9.5" cy="9.5" r="3.5" fill="none" stroke="#dcdcdc" stroke-width="1.6"/><path d="M5 5.5a6 6 0 0 0 0 8M14 5.5a6 6 0 0 1 0 8" stroke="#dcdcdc" stroke-width="1.5" fill="none"/></svg>
<div class="a t" style="left:225.00px;top:307.27px;font-size:11.5px;line-height:11.5px;color:#d8d8d8;transform:scaleX(0.9045);transform-origin:0 0;">0.00 ms</div>
<div class="a" style="left:100px;top:334px;width:166px;height:19px;background:#141518;box-shadow:inset 0 0 0 1px #3b3c40;border-radius:3px;"></div>
<div class="a" style="left:247px;top:335px;width:1px;height:17px;background:#3b3c40;"></div>
<svg class="a" style="left:100px;top:334px;" width="20" height="19" viewBox="0 0 20 19"><path d="M4 9l2.5-4h4l2.5 4l-2.5 4h-4z" fill="#d0d0d0"/><rect x="9" y="10" width="6" height="6" fill="#aaaaaa"/><path d="M9.5 12h5M9.5 14h5" stroke="#141518" stroke-width=".7"/></svg>
<div class="a t" style="left:118.00px;top:338.27px;font-size:11.5px;line-height:11.5px;color:#b8b8b8;font-style:italic;transform:scaleX(0.8536);transform-origin:0 0;">Track Presets...</div>
<svg class="a" style="left:248px;top:334px;" width="18" height="19" viewBox="0 0 18 19"><path d="M5.5 7.5h7l-3.5 5z" fill="#e0e0e0"/></svg>
<div class="a" style="left:100px;top:366px;width:166px;height:18px;background:#141518;box-shadow:inset 0 0 0 1px #3b3c40;border-radius:3px;"></div>
<div class="a t" style="left:104.00px;top:370.27px;font-size:11.5px;line-height:11.5px;color:#d8d8d8;transform:scaleX(0.9064);transform-origin:0 0;">No Extension</div>
<svg class="a" style="left:248px;top:365px;" width="18" height="19" viewBox="0 0 18 19"><path d="M5.5 7.5h7l-3.5 5z" fill="#e0e0e0"/></svg>
<div class="a" style="left:98px;top:397px;width:170px;height:19px;background:#6a6b6e;box-shadow:inset 0 0 0 1px #76777a;border-radius:3px;"></div>
<svg class="a" style="left:98px;top:397px;" width="20" height="19" viewBox="0 0 20 19"><path d="M5.5 6h7l-3.5 5.5z" fill="#e8e8e8"/></svg>
<div class="a t" style="left:117.50px;top:400.07px;font-size:13.5px;line-height:13.5px;color:#f0f0f0;font-weight:bold;transform:scaleX(0.8630);transform-origin:0 0;">Routing</div>
<svg class="a" style="left:250px;top:397px;" width="18" height="19" viewBox="0 0 18 19"><path d="M4 9.5h3M7 6.5v6M7 6.5h6M7 12.5h6M12 4.5l2.5 2l-2.5 2M12 10.5l2.5 2l-2.5 2" stroke="#e0e0e0" stroke-width="1.6" fill="none"/></svg>
<div class="a" style="left:100px;top:424px;width:166px;height:37px;background:#141518;box-shadow:inset 0 0 0 1px #3b3c40;border-radius:3px;"></div>
<div class="a" style="left:101px;top:442px;width:164px;height:1px;background:#3b3c40;"></div>
<svg class="a" style="left:100px;top:424px;" width="20" height="18" viewBox="0 0 20 18"><path d="M3 9h7M7.5 6l3 3l-3 3M11 4h4v10h-4" stroke="#d8d8d8" stroke-width="1.4" fill="none"/></svg>
<div class="a t" style="left:118.00px;top:429.27px;font-size:11.5px;line-height:11.5px;color:#d8d8d8;transform:scaleX(0.8999);transform-origin:0 0;">Stereo In</div>
<svg class="a" style="left:248px;top:424px;" width="18" height="18" viewBox="0 0 18 18"><path d="M5.5 7h7l-3.5 5z" fill="#e0e0e0"/></svg>
<svg class="a" style="left:100px;top:443px;" width="20" height="18" viewBox="0 0 20 18"><path d="M9 4H5v10h4M7 9h7M11.5 6l3 3l-3 3" stroke="#d8d8d8" stroke-width="1.4" fill="none"/></svg>
<div class="a t" style="left:118.00px;top:448.27px;font-size:11.5px;line-height:11.5px;color:#d8d8d8;transform:scaleX(0.7881);transform-origin:0 0;">BEAT</div>
<svg class="a" style="left:248px;top:443px;" width="18" height="18" viewBox="0 0 18 18"><path d="M5.5 7h7l-3.5 5z" fill="#e0e0e0"/></svg>
<div class="a" style="left:98px;top:476px;width:170px;height:18px;background:#6a6b6e;box-shadow:inset 0 0 0 1px #76777a;border-radius:3px;"></div>
<svg class="a" style="left:98px;top:476px;" width="20" height="18" viewBox="0 0 20 18"><path d="M7 5.5v7l5.5-3.5z" fill="#e8e8e8"/></svg>
<div class="a t" style="left:117.50px;top:479.07px;font-size:13.5px;line-height:13.5px;color:#f0f0f0;font-weight:bold;transform:scaleX(0.8184);transform-origin:0 0;">Track Versions</div>
<svg class="a" style="left:250px;top:476px;" width="18" height="18" viewBox="0 0 18 18"><path d="M4 5l2 1v7l-2 1zM7 5.5l2 1v6.5l-2 .5zM10 6l6-1.5v10l-6-1.5z" fill="#e0e0e0"/></svg>
<div class="a" style="left:98px;top:502px;width:170px;height:19px;background:#6a6b6e;box-shadow:inset 0 0 0 1px #76777a;border-radius:3px;"></div>
<svg class="a" style="left:98px;top:502px;" width="20" height="19" viewBox="0 0 20 19"><path d="M5.5 6h7l-3.5 5.5z" fill="#e8e8e8"/></svg>
<div class="a t" style="left:117.50px;top:505.07px;font-size:13.5px;line-height:13.5px;color:#f0f0f0;font-weight:bold;transform:scaleX(0.8474);transform-origin:0 0;">Quick Controls</div>
<svg class="a" style="left:250px;top:502px;" width="18" height="19" viewBox="0 0 18 19"><circle cx="8.5" cy="9.5" r="5" fill="none" stroke="#e8e8e8" stroke-width="1.7"/><path d="M6.5 7.5l3 3" stroke="#e8e8e8" stroke-width="1.7"/></svg>
<div class="a" style="left:99px;top:529px;width:19px;height:19px;background:#d4d4d4;border-radius:2px;"></div>
<svg class="a" style="left:99px;top:529px;" width="19" height="19" viewBox="0 0 19 19"><path d="M6.3 6.5a4.7 4.7 0 1 0 6.4 0" stroke="#2a2a2a" stroke-width="1.8" fill="none"/><path d="M9.5 4.5v5" stroke="#2a2a2a" stroke-width="1.8"/></svg>
<div class="a" style="left:121px;top:529px;width:19px;height:19px;background:#2f3034;box-shadow:inset 0 0 0 1px #46474b;border-radius:2px;"></div>
<svg class="a" style="left:121px;top:529px;" width="19" height="19" viewBox="0 0 19 19"><path d="M5 15h10l1-3h-4l2-7h-4z" fill="#d0d0d0"/></svg>
<div class="a" style="left:175px;top:529px;width:19px;height:19px;background:#2f3034;box-shadow:inset 0 0 0 1px #46474b;border-radius:2px;"></div>
<svg class="a" style="left:175px;top:529px;" width="19" height="19" viewBox="0 0 19 19"><path d="M5 6h9M8 6V4.5h3V6M6 7.5h7l-1 7.5H7z" stroke="#d0d0d0" stroke-width="1" fill="#d0d0d0"/></svg>
<div class="a" style="left:229px;top:529px;width:38px;height:19px;background:#2f3034;box-shadow:inset 0 0 0 1px #46474b;border-radius:2px;"></div>
<div class="a" style="left:248px;top:530px;width:1px;height:17px;background:#46474b;"></div>
<div class="a t" style="left:233.99px;top:533.42px;font-size:12.5px;line-height:12.5px;color:#d8d8d8;font-weight:bold;">R</div>
<div class="a t" style="left:251.60px;top:533.42px;font-size:12.5px;line-height:12.5px;color:#d8d8d8;font-weight:bold;">W</div>
<div class="a" style="left:99px;top:553px;width:168px;height:19px;background:#1f2023;box-shadow:inset 0 0 0 1px #151618;border-radius:3px;"></div>
<div class="a t" style="left:109.00px;top:973.00px;font-size:13px;line-height:13px;color:#f0f0f0;font-weight:bold;transform:scaleX(0.8536);transform-origin:0 0;">Track</div>
<div class="a t" style="left:178.50px;top:973.00px;font-size:13px;line-height:13px;color:#e6e6e6;font-weight:bold;transform:scaleX(0.8787);transform-origin:0 0;">Editor</div>
<div class="a" style="left:282px;top:157px;width:1400px;height:831px;background:#25272b;border-radius:6px;border:2px solid #f2f2f2;"></div>
<div class="a" style="left:288px;top:184px;width:355px;height:23px;background:#26282c;"></div>
<div class="a" style="left:289px;top:184px;width:40px;height:23px;background:#7b7c7f;"></div>
<div class="a" style="left:288px;top:184px;width:1px;height:23px;background:#2a2b2e;"></div>
<div class="a" style="left:288px;top:207px;width:355px;height:1px;background:#0b0b0c;"></div>
<div class="a" style="left:335px;top:187px;width:49px;height:17px;background:#2f3034;box-shadow:inset 0 0 0 1px #1d1e21;border-radius:3px;"></div>
<div class="a t" style="left:341.09px;top:188.50px;font-size:13px;line-height:13px;color:#d6d6d6;font-weight:bold;">M</div>
<div class="a t" style="left:367.16px;top:188.50px;font-size:13px;line-height:13px;color:#d6d6d6;font-weight:bold;">S</div>
<svg class="a" style="left:292px;top:189px;" width="16" height="14" viewBox="0 0 16 14"><path d="M0.5 8H2.5L3.5 6.5L4.5 9.5L5.5 4.5L7 11.5L8.5 1L10 12.5L11.5 5L12.5 10.5L13.5 7L15.5 8" stroke="#111111" stroke-width="1.7" fill="none" stroke-linejoin="round"/></svg>
<div class="a t" style="left:312.00px;top:189.00px;font-size:13px;line-height:13px;color:#1a1a1a;transform:scaleX(0.8990);transform-origin:0 0;">13</div>
<div class="a t" style="left:393.30px;top:191.69px;font-size:11px;line-height:11px;color:#e6e6e6;font-weight:bold;">_</div>
<div class="a t" style="left:402.50px;top:190.00px;font-size:13px;line-height:13px;color:#e6e6e6;font-weight:bold;">-</div>
<div class="a t" style="left:411.00px;top:188.73px;font-size:14.5px;line-height:14.5px;color:#e6e6e6;font-weight:bold;transform:scaleX(0.8300);transform-origin:0 0;">CRASH 1_1</div>
<div class="a" style="left:288px;top:208px;width:355px;height:23px;background:#26282c;"></div>
<div class="a" style="left:289px;top:208px;width:40px;height:23px;background:#7b7c7f;"></div>
<div class="a" style="left:288px;top:208px;width:1px;height:23px;background:#2a2b2e;"></div>
<div class="a" style="left:288px;top:231px;width:355px;height:1px;background:#0b0b0c;"></div>
<div class="a" style="left:335px;top:211px;width:49px;height:17px;background:#2f3034;box-shadow:inset 0 0 0 1px #1d1e21;border-radius:3px;"></div>
<div class="a t" style="left:341.09px;top:212.50px;font-size:13px;line-height:13px;color:#d6d6d6;font-weight:bold;">M</div>
<div class="a t" style="left:367.16px;top:212.50px;font-size:13px;line-height:13px;color:#d6d6d6;font-weight:bold;">S</div>
<svg class="a" style="left:292px;top:213px;" width="16" height="14" viewBox="0 0 16 14"><path d="M0.5 8H2.5L3.5 6.5L4.5 9.5L5.5 4.5L7 11.5L8.5 1L10 12.5L11.5 5L12.5 10.5L13.5 7L15.5 8" stroke="#111111" stroke-width="1.7" fill="none" stroke-linejoin="round"/></svg>
<div class="a t" style="left:312.00px;top:213.00px;font-size:13px;line-height:13px;color:#1a1a1a;transform:scaleX(0.8990);transform-origin:0 0;">14</div>
<div class="a t" style="left:393.30px;top:215.69px;font-size:11px;line-height:11px;color:#e6e6e6;font-weight:bold;">_</div>
<div class="a t" style="left:402.50px;top:214.00px;font-size:13px;line-height:13px;color:#e6e6e6;font-weight:bold;">-</div>
<div class="a t" style="left:411.00px;top:212.73px;font-size:14.5px;line-height:14.5px;color:#e6e6e6;font-weight:bold;transform:scaleX(0.8300);transform-origin:0 0;">CRASH 2_1</div>
<div class="a" style="left:288px;top:232px;width:355px;height:23px;background:#26282c;"></div>
<div class="a" style="left:289px;top:232px;width:40px;height:23px;background:#7b7c7f;"></div>
<div class="a" style="left:288px;top:232px;width:1px;height:23px;background:#2a2b2e;"></div>
<div class="a" style="left:288px;top:255px;width:355px;height:1px;background:#0b0b0c;"></div>
<div class="a" style="left:335px;top:235px;width:49px;height:17px;background:#2f3034;box-shadow:inset 0 0 0 1px #1d1e21;border-radius:3px;"></div>
<div class="a t" style="left:341.09px;top:236.50px;font-size:13px;line-height:13px;color:#d6d6d6;font-weight:bold;">M</div>
<div class="a t" style="left:367.16px;top:236.50px;font-size:13px;line-height:13px;color:#d6d6d6;font-weight:bold;">S</div>
<svg class="a" style="left:292px;top:237px;" width="16" height="14" viewBox="0 0 16 14"><path d="M0.5 8H2.5L3.5 6.5L4.5 9.5L5.5 4.5L7 11.5L8.5 1L10 12.5L11.5 5L12.5 10.5L13.5 7L15.5 8" stroke="#111111" stroke-width="1.7" fill="none" stroke-linejoin="round"/></svg>
<div class="a t" style="left:312.00px;top:237.00px;font-size:13px;line-height:13px;color:#1a1a1a;transform:scaleX(0.8990);transform-origin:0 0;">15</div>
<div class="a t" style="left:393.30px;top:239.69px;font-size:11px;line-height:11px;color:#e6e6e6;font-weight:bold;">_</div>
<div class="a t" style="left:402.50px;top:238.00px;font-size:13px;line-height:13px;color:#e6e6e6;font-weight:bold;">-</div>
<div class="a t" style="left:411.00px;top:236.73px;font-size:14.5px;line-height:14.5px;color:#e6e6e6;font-weight:bold;transform:scaleX(0.8300);transform-origin:0 0;">CRASH 3_1</div>
<div class="a" style="left:288px;top:256px;width:355px;height:23px;background:#26282c;"></div>
<div class="a" style="left:289px;top:256px;width:40px;height:23px;background:#7b7c7f;"></div>
<div class="a" style="left:288px;top:256px;width:1px;height:23px;background:#2a2b2e;"></div>
<div class="a" style="left:288px;top:279px;width:355px;height:1px;background:#0b0b0c;"></div>
<div class="a" style="left:335px;top:259px;width:49px;height:17px;background:#2f3034;box-shadow:inset 0 0 0 1px #1d1e21;border-radius:3px;"></div>
<div class="a t" style="left:341.09px;top:260.50px;font-size:13px;line-height:13px;color:#d6d6d6;font-weight:bold;">M</div>
<div class="a t" style="left:367.16px;top:260.50px;font-size:13px;line-height:13px;color:#d6d6d6;font-weight:bold;">S</div>
<svg class="a" style="left:292px;top:261px;" width="16" height="14" viewBox="0 0 16 14"><path d="M0.5 8H2.5L3.5 6.5L4.5 9.5L5.5 4.5L7 11.5L8.5 1L10 12.5L11.5 5L12.5 10.5L13.5 7L15.5 8" stroke="#111111" stroke-width="1.7" fill="none" stroke-linejoin="round"/></svg>
<div class="a t" style="left:312.00px;top:261.00px;font-size:13px;line-height:13px;color:#1a1a1a;transform:scaleX(0.8990);transform-origin:0 0;">16</div>
<div class="a t" style="left:393.30px;top:263.69px;font-size:11px;line-height:11px;color:#e6e6e6;font-weight:bold;">_</div>
<div class="a t" style="left:402.50px;top:262.00px;font-size:13px;line-height:13px;color:#e6e6e6;font-weight:bold;">-</div>
<div class="a t" style="left:411.00px;top:260.73px;font-size:14.5px;line-height:14.5px;color:#e6e6e6;font-weight:bold;transform:scaleX(0.8300);transform-origin:0 0;">RISER 1_1</div>
<div class="a" style="left:288px;top:280px;width:355px;height:23px;background:#26282c;"></div>
<div class="a" style="left:289px;top:280px;width:40px;height:23px;background:#7b7c7f;"></div>
<div class="a" style="left:288px;top:280px;width:1px;height:23px;background:#2a2b2e;"></div>
<div class="a" style="left:288px;top:303px;width:355px;height:1px;background:#0b0b0c;"></div>
<div class="a" style="left:335px;top:283px;width:49px;height:17px;background:#2f3034;box-shadow:inset 0 0 0 1px #1d1e21;border-radius:3px;"></div>
<div class="a t" style="left:341.09px;top:284.50px;font-size:13px;line-height:13px;color:#d6d6d6;font-weight:bold;">M</div>
<div class="a t" style="left:367.16px;top:284.50px;font-size:13px;line-height:13px;color:#d6d6d6;font-weight:bold;">S</div>
<svg class="a" style="left:292px;top:285px;" width="16" height="14" viewBox="0 0 16 14"><path d="M0.5 8H2.5L3.5 6.5L4.5 9.5L5.5 4.5L7 11.5L8.5 1L10 12.5L11.5 5L12.5 10.5L13.5 7L15.5 8" stroke="#111111" stroke-width="1.7" fill="none" stroke-linejoin="round"/></svg>
<div class="a t" style="left:312.00px;top:285.00px;font-size:13px;line-height:13px;color:#1a1a1a;transform:scaleX(0.8990);transform-origin:0 0;">17</div>
<div class="a t" style="left:393.30px;top:287.69px;font-size:11px;line-height:11px;color:#e6e6e6;font-weight:bold;">_</div>
<div class="a t" style="left:402.50px;top:286.00px;font-size:13px;line-height:13px;color:#e6e6e6;font-weight:bold;">-</div>
<div class="a t" style="left:411.00px;top:284.73px;font-size:14.5px;line-height:14.5px;color:#e6e6e6;font-weight:bold;transform:scaleX(0.8300);transform-origin:0 0;">RISER 2_1</div>
<div class="a" style="left:288px;top:304px;width:355px;height:23px;background:#26282c;"></div>
<div class="a" style="left:289px;top:304px;width:40px;height:23px;background:#7b7c7f;"></div>
<div class="a" style="left:288px;top:304px;width:1px;height:23px;background:#2a2b2e;"></div>
<div class="a" style="left:288px;top:327px;width:355px;height:1px;background:#0b0b0c;"></div>
<div class="a" style="left:335px;top:307px;width:49px;height:17px;background:#2f3034;box-shadow:inset 0 0 0 1px #1d1e21;border-radius:3px;"></div>
<div class="a t" style="left:341.09px;top:308.50px;font-size:13px;line-height:13px;color:#d6d6d6;font-weight:bold;">M</div>
<div class="a t" style="left:367.16px;top:308.50px;font-size:13px;line-height:13px;color:#d6d6d6;font-weight:bold;">S</div>
<svg class="a" style="left:292px;top:309px;" width="16" height="14" viewBox="0 0 16 14"><path d="M0.5 8H2.5L3.5 6.5L4.5 9.5L5.5 4.5L7 11.5L8.5 1L10 12.5L11.5 5L12.5 10.5L13.5 7L15.5 8" stroke="#111111" stroke-width="1.7" fill="none" stroke-linejoin="round"/></svg>
<div class="a t" style="left:312.00px;top:309.00px;font-size:13px;line-height:13px;color:#1a1a1a;transform:scaleX(0.8990);transform-origin:0 0;">18</div>
<div class="a t" style="left:393.30px;top:311.69px;font-size:11px;line-height:11px;color:#e6e6e6;font-weight:bold;">_</div>
<div class="a t" style="left:402.50px;top:310.00px;font-size:13px;line-height:13px;color:#e6e6e6;font-weight:bold;">-</div>
<div class="a t" style="left:411.00px;top:308.73px;font-size:14.5px;line-height:14.5px;color:#e6e6e6;font-weight:bold;transform:scaleX(0.8300);transform-origin:0 0;">RISER 3_1</div>
<div class="a" style="left:288px;top:328px;width:355px;height:23px;background:#26282c;"></div>
<div class="a" style="left:289px;top:328px;width:40px;height:23px;background:#7b7c7f;"></div>
<div class="a" style="left:288px;top:328px;width:1px;height:23px;background:#2a2b2e;"></div>
<div class="a" style="left:288px;top:351px;width:355px;height:1px;background:#0b0b0c;"></div>
<div class="a" style="left:335px;top:331px;width:49px;height:17px;background:#2f3034;box-shadow:inset 0 0 0 1px #1d1e21;border-radius:3px;"></div>
<div class="a t" style="left:341.09px;top:332.50px;font-size:13px;line-height:13px;color:#d6d6d6;font-weight:bold;">M</div>
<div class="a t" style="left:367.16px;top:332.50px;font-size:13px;line-height:13px;color:#d6d6d6;font-weight:bold;">S</div>
<svg class="a" style="left:292px;top:333px;" width="16" height="14" viewBox="0 0 16 14"><path d="M0.5 8H2.5L3.5 6.5L4.5 9.5L5.5 4.5L7 11.5L8.5 1L10 12.5L11.5 5L12.5 10.5L13.5 7L15.5 8" stroke="#111111" stroke-width="1.7" fill="none" stroke-linejoin="round"/></svg>
<div class="a t" style="left:312.00px;top:333.00px;font-size:13px;line-height:13px;color:#1a1a1a;transform:scaleX(0.8990);transform-origin:0 0;">19</div>
<div class="a t" style="left:393.30px;top:335.69px;font-size:11px;line-height:11px;color:#e6e6e6;font-weight:bold;">_</div>
<div class="a t" style="left:402.50px;top:334.00px;font-size:13px;line-height:13px;color:#e6e6e6;font-weight:bold;">-</div>
<div class="a t" style="left:411.00px;top:332.73px;font-size:14.5px;line-height:14.5px;color:#e6e6e6;font-weight:bold;transform:scaleX(0.8300);transform-origin:0 0;">RISER 4_1</div>
<div class="a" style="left:288px;top:352px;width:355px;height:23px;background:#26282c;"></div>
<div class="a" style="left:289px;top:352px;width:40px;height:23px;background:#7b7c7f;"></div>
<div class="a" style="left:288px;top:352px;width:1px;height:23px;background:#2a2b2e;"></div>
<div class="a" style="left:288px;top:375px;width:355px;height:1px;background:#0b0b0c;"></div>
<div class="a" style="left:335px;top:355px;width:49px;height:17px;background:#2f3034;box-shadow:inset 0 0 0 1px #1d1e21;border-radius:3px;"></div>
<div class="a t" style="left:341.09px;top:356.50px;font-size:13px;line-height:13px;color:#d6d6d6;font-weight:bold;">M</div>
<div class="a t" style="left:367.16px;top:356.50px;font-size:13px;line-height:13px;color:#d6d6d6;font-weight:bold;">S</div>
<svg class="a" style="left:292px;top:357px;" width="16" height="14" viewBox="0 0 16 14"><path d="M0.5 8H2.5L3.5 6.5L4.5 9.5L5.5 4.5L7 11.5L8.5 1L10 12.5L11.5 5L12.5 10.5L13.5 7L15.5 8" stroke="#111111" stroke-width="1.7" fill="none" stroke-linejoin="round"/></svg>
<div class="a t" style="left:312.00px;top:357.00px;font-size:13px;line-height:13px;color:#1a1a1a;transform:scaleX(0.8990);transform-origin:0 0;">20</div>
<div class="a t" style="left:393.30px;top:359.69px;font-size:11px;line-height:11px;color:#e6e6e6;font-weight:bold;">_</div>
<div class="a t" style="left:402.50px;top:358.00px;font-size:13px;line-height:13px;color:#e6e6e6;font-weight:bold;">-</div>
<div class="a t" style="left:411.00px;top:356.73px;font-size:14.5px;line-height:14.5px;color:#e6e6e6;font-weight:bold;transform:scaleX(0.8300);transform-origin:0 0;">FILLIN</div>
<div class="a" style="left:288px;top:376px;width:355px;height:23px;background:#26282c;"></div>
<div class="a" style="left:289px;top:376px;width:40px;height:23px;background:#7b7c7f;"></div>
<div class="a" style="left:288px;top:376px;width:1px;height:23px;background:#2a2b2e;"></div>
<div class="a" style="left:288px;top:399px;width:355px;height:1px;background:#0b0b0c;"></div>
<div class="a" style="left:335px;top:379px;width:49px;height:17px;background:#2f3034;box-shadow:inset 0 0 0 1px #1d1e21;border-radius:3px;"></div>
<div class="a t" style="left:341.09px;top:380.50px;font-size:13px;line-height:13px;color:#d6d6d6;font-weight:bold;">M</div>
<div class="a t" style="left:367.16px;top:380.50px;font-size:13px;line-height:13px;color:#d6d6d6;font-weight:bold;">S</div>
<svg class="a" style="left:292px;top:381px;" width="16" height="14" viewBox="0 0 16 14"><path d="M0.5 8H2.5L3.5 6.5L4.5 9.5L5.5 4.5L7 11.5L8.5 1L10 12.5L11.5 5L12.5 10.5L13.5 7L15.5 8" stroke="#111111" stroke-width="1.7" fill="none" stroke-linejoin="round"/></svg>
<div class="a t" style="left:312.00px;top:381.00px;font-size:13px;line-height:13px;color:#1a1a1a;transform:scaleX(0.8990);transform-origin:0 0;">21</div>
<div class="a t" style="left:393.30px;top:383.69px;font-size:11px;line-height:11px;color:#e6e6e6;font-weight:bold;">_</div>
<div class="a t" style="left:402.50px;top:382.00px;font-size:13px;line-height:13px;color:#e6e6e6;font-weight:bold;">-</div>
<div class="a t" style="left:411.00px;top:380.73px;font-size:14.5px;line-height:14.5px;color:#e6e6e6;font-weight:bold;transform:scaleX(0.8300);transform-origin:0 0;">PERC 1_1</div>
<div class="a" style="left:288px;top:400px;width:355px;height:23px;background:#26282c;"></div>
<div class="a" style="left:289px;top:400px;width:40px;height:23px;background:#7b7c7f;"></div>
<div class="a" style="left:288px;top:400px;width:1px;height:23px;background:#2a2b2e;"></div>
<div class="a" style="left:288px;top:423px;width:355px;height:1px;background:#0b0b0c;"></div>
<div class="a" style="left:335px;top:403px;width:49px;height:17px;background:#2f3034;box-shadow:inset 0 0 0 1px #1d1e21;border-radius:3px;"></div>
<div class="a t" style="left:341.09px;top:404.50px;font-size:13px;line-height:13px;color:#d6d6d6;font-weight:bold;">M</div>
<div class="a t" style="left:367.16px;top:404.50px;font-size:13px;line-height:13px;color:#d6d6d6;font-weight:bold;">S</div>
<svg class="a" style="left:292px;top:405px;" width="16" height="14" viewBox="0 0 16 14"><path d="M0.5 8H2.5L3.5 6.5L4.5 9.5L5.5 4.5L7 11.5L8.5 1L10 12.5L11.5 5L12.5 10.5L13.5 7L15.5 8" stroke="#111111" stroke-width="1.7" fill="none" stroke-linejoin="round"/></svg>
<div class="a t" style="left:312.00px;top:405.00px;font-size:13px;line-height:13px;color:#1a1a1a;transform:scaleX(0.8990);transform-origin:0 0;">22</div>
<div class="a t" style="left:393.30px;top:407.69px;font-size:11px;line-height:11px;color:#e6e6e6;font-weight:bold;">_</div>
<div class="a t" style="left:402.50px;top:406.00px;font-size:13px;line-height:13px;color:#e6e6e6;font-weight:bold;">-</div>
<div class="a t" style="left:411.00px;top:404.73px;font-size:14.5px;line-height:14.5px;color:#e6e6e6;font-weight:bold;transform:scaleX(0.8300);transform-origin:0 0;">PERC 2_1</div>
<div class="a" style="left:288px;top:424px;width:355px;height:23px;background:#26282c;"></div>
<div class="a" style="left:289px;top:424px;width:40px;height:23px;background:#7b7c7f;"></div>
<div class="a" style="left:288px;top:424px;width:1px;height:23px;background:#2a2b2e;"></div>
<div class="a" style="left:288px;top:447px;width:355px;height:1px;background:#0b0b0c;"></div>
<div class="a" style="left:335px;top:427px;width:49px;height:17px;background:#2f3034;box-shadow:inset 0 0 0 1px #1d1e21;border-radius:3px;"></div>
<div class="a t" style="left:341.09px;top:428.50px;font-size:13px;line-height:13px;color:#d6d6d6;font-weight:bold;">M</div>
<div class="a t" style="left:367.16px;top:428.50px;font-size:13px;line-height:13px;color:#d6d6d6;font-weight:bold;">S</div>
<svg class="a" style="left:292px;top:429px;" width="16" height="14" viewBox="0 0 16 14"><path d="M0.5 8H2.5L3.5 6.5L4.5 9.5L5.5 4.5L7 11.5L8.5 1L10 12.5L11.5 5L12.5 10.5L13.5 7L15.5 8" stroke="#111111" stroke-width="1.7" fill="none" stroke-linejoin="round"/></svg>
<div class="a t" style="left:312.00px;top:429.00px;font-size:13px;line-height:13px;color:#1a1a1a;transform:scaleX(0.8990);transform-origin:0 0;">23</div>
<div class="a t" style="left:393.30px;top:431.69px;font-size:11px;line-height:11px;color:#e6e6e6;font-weight:bold;">_</div>
<div class="a t" style="left:402.50px;top:430.00px;font-size:13px;line-height:13px;color:#e6e6e6;font-weight:bold;">-</div>
<div class="a t" style="left:411.00px;top:428.73px;font-size:14.5px;line-height:14.5px;color:#e6e6e6;font-weight:bold;transform:scaleX(0.8300);transform-origin:0 0;">CHIME_1</div>
<div class="a" style="left:288px;top:448px;width:355px;height:23px;background:#26282c;"></div>
<div class="a" style="left:289px;top:448px;width:40px;height:23px;background:#7b7c7f;"></div>
<div class="a" style="left:288px;top:448px;width:1px;height:23px;background:#2a2b2e;"></div>
<div class="a" style="left:288px;top:471px;width:355px;height:1px;background:#0b0b0c;"></div>
<div class="a" style="left:335px;top:451px;width:49px;height:17px;background:#2f3034;box-shadow:inset 0 0 0 1px #1d1e21;border-radius:3px;"></div>
<div class="a t" style="left:341.09px;top:452.50px;font-size:13px;line-height:13px;color:#d6d6d6;font-weight:bold;">M</div>
<div class="a t" style="left:367.16px;top:452.50px;font-size:13px;line-height:13px;color:#d6d6d6;font-weight:bold;">S</div>
<svg class="a" style="left:292px;top:453px;" width="16" height="14" viewBox="0 0 16 14"><path d="M0.5 8H2.5L3.5 6.5L4.5 9.5L5.5 4.5L7 11.5L8.5 1L10 12.5L11.5 5L12.5 10.5L13.5 7L15.5 8" stroke="#111111" stroke-width="1.7" fill="none" stroke-linejoin="round"/></svg>
<div class="a t" style="left:312.00px;top:453.00px;font-size:13px;line-height:13px;color:#1a1a1a;transform:scaleX(0.8990);transform-origin:0 0;">24</div>
<div class="a t" style="left:393.30px;top:455.69px;font-size:11px;line-height:11px;color:#e6e6e6;font-weight:bold;">_</div>
<div class="a t" style="left:402.50px;top:454.00px;font-size:13px;line-height:13px;color:#e6e6e6;font-weight:bold;">-</div>
<div class="a t" style="left:411.00px;top:452.73px;font-size:14.5px;line-height:14.5px;color:#e6e6e6;font-weight:bold;transform:scaleX(0.8300);transform-origin:0 0;">BASS_1</div>
<div class="a" style="left:288px;top:472px;width:355px;height:23px;background:#26282c;"></div>
<div class="a" style="left:289px;top:472px;width:40px;height:23px;background:#7b7c7f;"></div>
<div class="a" style="left:288px;top:472px;width:1px;height:23px;background:#2a2b2e;"></div>
<div class="a" style="left:288px;top:495px;width:355px;height:1px;background:#0b0b0c;"></div>
<div class="a" style="left:335px;top:475px;width:49px;height:17px;background:#2f3034;box-shadow:inset 0 0 0 1px #1d1e21;border-radius:3px;"></div>
<div class="a t" style="left:341.09px;top:476.50px;font-size:13px;line-height:13px;color:#d6d6d6;font-weight:bold;">M</div>
<div class="a t" style="left:367.16px;top:476.50px;font-size:13px;line-height:13px;color:#d6d6d6;font-weight:bold;">S</div>
<svg class="a" style="left:292px;top:476px;" width="16" height="16" viewBox="0 0 16 16"><path d="M3 1.5v9M8 1v9M13 1.5v9M4.5 11v3h7v-3" stroke="#151515" stroke-width="1.6" fill="none"/><rect x="1.3" y="4" width="3.4" height="4" rx="1.5" fill="#151515"/><rect x="6.3" y="2.5" width="3.4" height="4" rx="1.5" fill="#151515"/><rect x="11.3" y="5.5" width="3.4" height="4" rx="1.5" fill="#151515"/></svg>
<div class="a t" style="left:312.00px;top:477.00px;font-size:13px;line-height:13px;color:#1a1a1a;transform:scaleX(0.8990);transform-origin:0 0;">25</div>
<div class="a t" style="left:393.00px;top:476.73px;font-size:14.5px;line-height:14.5px;color:#e6e6e6;font-weight:bold;transform:scaleX(0.8300);transform-origin:0 0;">GTR</div>
<div class="a" style="left:564px;top:475px;width:75px;height:17px;background:#222427;box-shadow:inset 0 0 0 1px #18191b;border-radius:3px;"></div>
<div class="a t" style="left:600.50px;top:479.27px;font-size:11.5px;line-height:11.5px;color:#cfcfcf;transform:scaleX(0.8712);transform-origin:0 0;">0.00</div>
<svg class="a" style="left:625px;top:476px;" width="10" height="16" viewBox="0 0 10 16"><path d="M1.5 6.5h6l-3-4z M1.5 9.5h6l-3 4z" fill="#cfcfcf"/></svg>
<div class="a" style="left:288px;top:496px;width:355px;height:23px;background:#26282c;"></div>
<div class="a" style="left:289px;top:496px;width:40px;height:23px;background:#7b7c7f;"></div>
<div class="a" style="left:288px;top:496px;width:1px;height:23px;background:#2a2b2e;"></div>
<div class="a" style="left:288px;top:519px;width:355px;height:1px;background:#0b0b0c;"></div>
<div class="a" style="left:335px;top:499px;width:49px;height:17px;background:#2f3034;box-shadow:inset 0 0 0 1px #1d1e21;border-radius:3px;"></div>
<div class="a t" style="left:341.09px;top:500.50px;font-size:13px;line-height:13px;color:#d6d6d6;font-weight:bold;">M</div>
<div class="a t" style="left:367.16px;top:500.50px;font-size:13px;line-height:13px;color:#d6d6d6;font-weight:bold;">S</div>
<svg class="a" style="left:292px;top:500px;" width="16" height="16" viewBox="0 0 16 16"><path d="M3 1.5v9M8 1v9M13 1.5v9M4.5 11v3h7v-3" stroke="#151515" stroke-width="1.6" fill="none"/><rect x="1.3" y="4" width="3.4" height="4" rx="1.5" fill="#151515"/><rect x="6.3" y="2.5" width="3.4" height="4" rx="1.5" fill="#151515"/><rect x="11.3" y="5.5" width="3.4" height="4" rx="1.5" fill="#151515"/></svg>
<div class="a t" style="left:312.00px;top:501.00px;font-size:13px;line-height:13px;color:#1a1a1a;transform:scaleX(0.8990);transform-origin:0 0;">26</div>
<div class="a t" style="left:393.00px;top:500.73px;font-size:14.5px;line-height:14.5px;color:#e6e6e6;font-weight:bold;transform:scaleX(0.8300);transform-origin:0 0;">GTR1</div>
<div class="a" style="left:564px;top:499px;width:75px;height:17px;background:#222427;box-shadow:inset 0 0 0 1px #18191b;border-radius:3px;"></div>
<div class="a t" style="left:600.50px;top:503.27px;font-size:11.5px;line-height:11.5px;color:#cfcfcf;transform:scaleX(0.8712);transform-origin:0 0;">0.00</div>
<svg class="a" style="left:625px;top:500px;" width="10" height="16" viewBox="0 0 10 16"><path d="M1.5 6.5h6l-3-4z M1.5 9.5h6l-3 4z" fill="#cfcfcf"/></svg>
<div class="a" style="left:288px;top:520px;width:355px;height:23px;background:#26282c;"></div>
<div class="a" style="left:289px;top:520px;width:40px;height:23px;background:#7b7c7f;"></div>
<div class="a" style="left:288px;top:520px;width:1px;height:23px;background:#2a2b2e;"></div>
<div class="a" style="left:288px;top:543px;width:355px;height:1px;background:#0b0b0c;"></div>
<div class="a" style="left:335px;top:523px;width:49px;height:17px;background:#2f3034;box-shadow:inset 0 0 0 1px #1d1e21;border-radius:3px;"></div>
<div class="a t" style="left:341.09px;top:524.50px;font-size:13px;line-height:13px;color:#d6d6d6;font-weight:bold;">M</div>
<div class="a t" style="left:367.16px;top:524.50px;font-size:13px;line-height:13px;color:#d6d6d6;font-weight:bold;">S</div>
<svg class="a" style="left:292px;top:525px;" width="16" height="14" viewBox="0 0 16 14"><path d="M0.5 8H2.5L3.5 6.5L4.5 9.5L5.5 4.5L7 11.5L8.5 1L10 12.5L11.5 5L12.5 10.5L13.5 7L15.5 8" stroke="#111111" stroke-width="1.7" fill="none" stroke-linejoin="round"/></svg>
<div class="a t" style="left:312.00px;top:525.00px;font-size:13px;line-height:13px;color:#1a1a1a;transform:scaleX(0.8990);transform-origin:0 0;">27</div>
<div class="a t" style="left:393.30px;top:527.69px;font-size:11px;line-height:11px;color:#e6e6e6;font-weight:bold;">_</div>
<div class="a t" style="left:402.50px;top:526.00px;font-size:13px;line-height:13px;color:#e6e6e6;font-weight:bold;">-</div>
<div class="a t" style="left:411.00px;top:524.73px;font-size:14.5px;line-height:14.5px;color:#e6e6e6;font-weight:bold;transform:scaleX(0.8300);transform-origin:0 0;">GUITAR 1_1</div>
<div class="a" style="left:288px;top:544px;width:355px;height:23px;background:#26282c;"></div>
<div class="a" style="left:289px;top:544px;width:40px;height:23px;background:#7b7c7f;"></div>
<div class="a" style="left:288px;top:544px;width:1px;height:23px;background:#2a2b2e;"></div>
<div class="a" style="left:288px;top:567px;width:355px;height:1px;background:#0b0b0c;"></div>
<div class="a" style="left:335px;top:547px;width:49px;height:17px;background:#2f3034;box-shadow:inset 0 0 0 1px #1d1e21;border-radius:3px;"></div>
<div class="a t" style="left:341.09px;top:548.50px;font-size:13px;line-height:13px;color:#d6d6d6;font-weight:bold;">M</div>
<div class="a t" style="left:367.16px;top:548.50px;font-size:13px;line-height:13px;color:#d6d6d6;font-weight:bold;">S</div>
<svg class="a" style="left:292px;top:549px;" width="16" height="14" viewBox="0 0 16 14"><path d="M0.5 8H2.5L3.5 6.5L4.5 9.5L5.5 4.5L7 11.5L8.5 1L10 12.5L11.5 5L12.5 10.5L13.5 7L15.5 8" stroke="#111111" stroke-width="1.7" fill="none" stroke-linejoin="round"/></svg>
<div class="a t" style="left:312.00px;top:549.00px;font-size:13px;line-height:13px;color:#1a1a1a;transform:scaleX(0.8990);transform-origin:0 0;">28</div>
<div class="a t" style="left:393.30px;top:551.69px;font-size:11px;line-height:11px;color:#e6e6e6;font-weight:bold;">_</div>
<div class="a t" style="left:402.50px;top:550.00px;font-size:13px;line-height:13px;color:#e6e6e6;font-weight:bold;">-</div>
<div class="a t" style="left:411.00px;top:548.73px;font-size:14.5px;line-height:14.5px;color:#e6e6e6;font-weight:bold;transform:scaleX(0.8300);transform-origin:0 0;">GUITAR 2_1</div>
<div class="a" style="left:288px;top:568px;width:355px;height:23px;background:#26282c;"></div>
<div class="a" style="left:289px;top:568px;width:40px;height:23px;background:#7b7c7f;"></div>
<div class="a" style="left:288px;top:568px;width:1px;height:23px;background:#2a2b2e;"></div>
<div class="a" style="left:288px;top:591px;width:355px;height:1px;background:#0b0b0c;"></div>
<div class="a" style="left:335px;top:571px;width:49px;height:17px;background:#2f3034;box-shadow:inset 0 0 0 1px #1d1e21;border-radius:3px;"></div>
<div class="a t" style="left:341.09px;top:572.50px;font-size:13px;line-height:13px;color:#d6d6d6;font-weight:bold;">M</div>
<div class="a t" style="left:367.16px;top:572.50px;font-size:13px;line-height:13px;color:#d6d6d6;font-weight:bold;">S</div>
<svg class="a" style="left:292px;top:573px;" width="16" height="14" viewBox="0 0 16 14"><path d="M0.5 8H2.5L3.5 6.5L4.5 9.5L5.5 4.5L7 11.5L8.5 1L10 12.5L11.5 5L12.5 10.5L13.5 7L15.5 8" stroke="#111111" stroke-width="1.7" fill="none" stroke-linejoin="round"/></svg>
<div class="a t" style="left:312.00px;top:573.00px;font-size:13px;line-height:13px;color:#1a1a1a;transform:scaleX(0.8990);transform-origin:0 0;">29</div>
<div class="a t" style="left:393.30px;top:575.69px;font-size:11px;line-height:11px;color:#e6e6e6;font-weight:bold;">_</div>
<div class="a t" style="left:402.50px;top:574.00px;font-size:13px;line-height:13px;color:#e6e6e6;font-weight:bold;">-</div>
<div class="a t" style="left:411.00px;top:572.73px;font-size:14.5px;line-height:14.5px;color:#e6e6e6;font-weight:bold;transform:scaleX(0.8300);transform-origin:0 0;">GUITAR 3_1</div>
<div class="a" style="left:288px;top:592px;width:355px;height:23px;background:#26282c;"></div>
<div class="a" style="left:289px;top:592px;width:40px;height:23px;background:#7b7c7f;"></div>
<div class="a" style="left:288px;top:592px;width:1px;height:23px;background:#2a2b2e;"></div>
<div class="a" style="left:288px;top:615px;width:355px;height:1px;background:#0b0b0c;"></div>
<div class="a" style="left:335px;top:595px;width:49px;height:17px;background:#2f3034;box-shadow:inset 0 0 0 1px #1d1e21;border-radius:3px;"></div>
<div class="a t" style="left:341.09px;top:596.50px;font-size:13px;line-height:13px;color:#d6d6d6;font-weight:bold;">M</div>
<div class="a t" style="left:367.16px;top:596.50px;font-size:13px;line-height:13px;color:#d6d6d6;font-weight:bold;">S</div>
<svg class="a" style="left:292px;top:597px;" width="16" height="14" viewBox="0 0 16 14"><path d="M0.5 8H2.5L3.5 6.5L4.5 9.5L5.5 4.5L7 11.5L8.5 1L10 12.5L11.5 5L12.5 10.5L13.5 7L15.5 8" stroke="#111111" stroke-width="1.7" fill="none" stroke-linejoin="round"/></svg>
<div class="a t" style="left:312.00px;top:597.00px;font-size:13px;line-height:13px;color:#1a1a1a;transform:scaleX(0.8990);transform-origin:0 0;">30</div>
<div class="a t" style="left:393.30px;top:599.69px;font-size:11px;line-height:11px;color:#e6e6e6;font-weight:bold;">_</div>
<div class="a t" style="left:402.50px;top:598.00px;font-size:13px;line-height:13px;color:#e6e6e6;font-weight:bold;">-</div>
<div class="a t" style="left:411.00px;top:596.73px;font-size:14.5px;line-height:14.5px;color:#e6e6e6;font-weight:bold;transform:scaleX(0.8300);transform-origin:0 0;">GUITAR 4_1</div>
<div class="a" style="left:288px;top:616px;width:355px;height:23px;background:#26282c;"></div>
<div class="a" style="left:289px;top:616px;width:40px;height:23px;background:#7b7c7f;"></div>
<div class="a" style="left:288px;top:616px;width:1px;height:23px;background:#2a2b2e;"></div>
<div class="a" style="left:288px;top:639px;width:355px;height:1px;background:#0b0b0c;"></div>
<div class="a" style="left:335px;top:619px;width:49px;height:17px;background:#2f3034;box-shadow:inset 0 0 0 1px #1d1e21;border-radius:3px;"></div>
<div class="a t" style="left:341.09px;top:620.50px;font-size:13px;line-height:13px;color:#d6d6d6;font-weight:bold;">M</div>
<div class="a t" style="left:367.16px;top:620.50px;font-size:13px;line-height:13px;color:#d6d6d6;font-weight:bold;">S</div>
<svg class="a" style="left:292px;top:621px;" width="16" height="14" viewBox="0 0 16 14"><path d="M0.5 8H2.5L3.5 6.5L4.5 9.5L5.5 4.5L7 11.5L8.5 1L10 12.5L11.5 5L12.5 10.5L13.5 7L15.5 8" stroke="#111111" stroke-width="1.7" fill="none" stroke-linejoin="round"/></svg>
<div class="a t" style="left:312.00px;top:621.00px;font-size:13px;line-height:13px;color:#1a1a1a;transform:scaleX(0.8990);transform-origin:0 0;">31</div>
<div class="a t" style="left:393.30px;top:623.69px;font-size:11px;line-height:11px;color:#e6e6e6;font-weight:bold;">_</div>
<div class="a t" style="left:402.50px;top:622.00px;font-size:13px;line-height:13px;color:#e6e6e6;font-weight:bold;">-</div>
<div class="a t" style="left:411.00px;top:620.73px;font-size:14.5px;line-height:14.5px;color:#e6e6e6;font-weight:bold;transform:scaleX(0.8300);transform-origin:0 0;">GUITAR 5_1</div>
<div class="a" style="left:288px;top:640px;width:355px;height:23px;background:#26282c;"></div>
<div class="a" style="left:289px;top:640px;width:40px;height:23px;background:#7b7c7f;"></div>
<div class="a" style="left:288px;top:640px;width:1px;height:23px;background:#2a2b2e;"></div>
<div class="a" style="left:288px;top:663px;width:355px;height:1px;background:#0b0b0c;"></div>
<div class="a" style="left:335px;top:643px;width:49px;height:17px;background:#2f3034;box-shadow:inset 0 0 0 1px #1d1e21;border-radius:3px;"></div>
<div class="a t" style="left:341.09px;top:644.50px;font-size:13px;line-height:13px;color:#d6d6d6;font-weight:bold;">M</div>
<div class="a t" style="left:367.16px;top:644.50px;font-size:13px;line-height:13px;color:#d6d6d6;font-weight:bold;">S</div>
<svg class="a" style="left:292px;top:645px;" width="16" height="14" viewBox="0 0 16 14"><path d="M0.5 8H2.5L3.5 6.5L4.5 9.5L5.5 4.5L7 11.5L8.5 1L10 12.5L11.5 5L12.5 10.5L13.5 7L15.5 8" stroke="#111111" stroke-width="1.7" fill="none" stroke-linejoin="round"/></svg>
<div class="a t" style="left:312.00px;top:645.00px;font-size:13px;line-height:13px;color:#1a1a1a;transform:scaleX(0.8990);transform-origin:0 0;">32</div>
<div class="a t" style="left:393.30px;top:647.69px;font-size:11px;line-height:11px;color:#e6e6e6;font-weight:bold;">_</div>
<div class="a t" style="left:402.50px;top:646.00px;font-size:13px;line-height:13px;color:#e6e6e6;font-weight:bold;">-</div>
<div class="a t" style="left:411.00px;top:644.73px;font-size:14.5px;line-height:14.5px;color:#e6e6e6;font-weight:bold;transform:scaleX(0.8300);transform-origin:0 0;">PIANO 1_1</div>
<div class="a" style="left:288px;top:664px;width:355px;height:23px;background:#26282c;"></div>
<div class="a" style="left:289px;top:664px;width:40px;height:23px;background:#7b7c7f;"></div>
<div class="a" style="left:288px;top:664px;width:1px;height:23px;background:#2a2b2e;"></div>
<div class="a" style="left:288px;top:687px;width:355px;height:1px;background:#0b0b0c;"></div>
<div class="a" style="left:335px;top:667px;width:49px;height:17px;background:#2f3034;box-shadow:inset 0 0 0 1px #1d1e21;border-radius:3px;"></div>
<div class="a t" style="left:341.09px;top:668.50px;font-size:13px;line-height:13px;color:#d6d6d6;font-weight:bold;">M</div>
<div class="a t" style="left:367.16px;top:668.50px;font-size:13px;line-height:13px;color:#d6d6d6;font-weight:bold;">S</div>
<svg class="a" style="left:292px;top:669px;" width="16" height="14" viewBox="0 0 16 14"><path d="M0.5 8H2.5L3.5 6.5L4.5 9.5L5.5 4.5L7 11.5L8.5 1L10 12.5L11.5 5L12.5 10.5L13.5 7L15.5 8" stroke="#111111" stroke-width="1.7" fill="none" stroke-linejoin="round"/></svg>
<div class="a t" style="left:312.00px;top:669.00px;font-size:13px;line-height:13px;color:#1a1a1a;transform:scaleX(0.8990);transform-origin:0 0;">33</div>
<div class="a t" style="left:393.30px;top:671.69px;font-size:11px;line-height:11px;color:#e6e6e6;font-weight:bold;">_</div>
<div class="a t" style="left:402.50px;top:670.00px;font-size:13px;line-height:13px;color:#e6e6e6;font-weight:bold;">-</div>
<div class="a t" style="left:411.00px;top:668.73px;font-size:14.5px;line-height:14.5px;color:#e6e6e6;font-weight:bold;transform:scaleX(0.8300);transform-origin:0 0;">PIANO REVERSE_1</div>
<div class="a" style="left:288px;top:688px;width:355px;height:23px;background:#26282c;"></div>
<div class="a" style="left:289px;top:688px;width:40px;height:23px;background:#7b7c7f;"></div>
<div class="a" style="left:288px;top:688px;width:1px;height:23px;background:#2a2b2e;"></div>
<div class="a" style="left:288px;top:711px;width:355px;height:1px;background:#0b0b0c;"></div>
<div class="a" style="left:335px;top:691px;width:49px;height:17px;background:#2f3034;box-shadow:inset 0 0 0 1px #1d1e21;border-radius:3px;"></div>
<div class="a t" style="left:341.09px;top:692.50px;font-size:13px;line-height:13px;color:#d6d6d6;font-weight:bold;">M</div>
<div class="a t" style="left:367.16px;top:692.50px;font-size:13px;line-height:13px;color:#d6d6d6;font-weight:bold;">S</div>
<svg class="a" style="left:292px;top:693px;" width="16" height="14" viewBox="0 0 16 14"><path d="M0.5 8H2.5L3.5 6.5L4.5 9.5L5.5 4.5L7 11.5L8.5 1L10 12.5L11.5 5L12.5 10.5L13.5 7L15.5 8" stroke="#111111" stroke-width="1.7" fill="none" stroke-linejoin="round"/></svg>
<div class="a t" style="left:312.00px;top:693.00px;font-size:13px;line-height:13px;color:#1a1a1a;transform:scaleX(0.8990);transform-origin:0 0;">34</div>
<div class="a t" style="left:393.30px;top:695.69px;font-size:11px;line-height:11px;color:#e6e6e6;font-weight:bold;">_</div>
<div class="a t" style="left:402.50px;top:694.00px;font-size:13px;line-height:13px;color:#e6e6e6;font-weight:bold;">-</div>
<div class="a t" style="left:411.00px;top:692.73px;font-size:14.5px;line-height:14.5px;color:#e6e6e6;font-weight:bold;transform:scaleX(0.8300);transform-origin:0 0;">Pizzicato Ensem..._1</div>
<div class="a" style="left:288px;top:712px;width:355px;height:23px;background:#26282c;"></div>
<div class="a" style="left:289px;top:712px;width:40px;height:23px;background:#7b7c7f;"></div>
<div class="a" style="left:288px;top:712px;width:1px;height:23px;background:#2a2b2e;"></div>
<div class="a" style="left:288px;top:735px;width:355px;height:1px;background:#0b0b0c;"></div>
<div class="a" style="left:335px;top:715px;width:49px;height:17px;background:#2f3034;box-shadow:inset 0 0 0 1px #1d1e21;border-radius:3px;"></div>
<div class="a t" style="left:341.09px;top:716.50px;font-size:13px;line-height:13px;color:#d6d6d6;font-weight:bold;">M</div>
<div class="a t" style="left:367.16px;top:716.50px;font-size:13px;line-height:13px;color:#d6d6d6;font-weight:bold;">S</div>
<svg class="a" style="left:292px;top:717px;" width="16" height="14" viewBox="0 0 16 14"><path d="M0.5 8H2.5L3.5 6.5L4.5 9.5L5.5 4.5L7 11.5L8.5 1L10 12.5L11.5 5L12.5 10.5L13.5 7L15.5 8" stroke="#111111" stroke-width="1.7" fill="none" stroke-linejoin="round"/></svg>
<div class="a t" style="left:312.00px;top:717.00px;font-size:13px;line-height:13px;color:#1a1a1a;transform:scaleX(0.8990);transform-origin:0 0;">35</div>
<div class="a t" style="left:393.30px;top:719.69px;font-size:11px;line-height:11px;color:#e6e6e6;font-weight:bold;">_</div>
<div class="a t" style="left:402.50px;top:718.00px;font-size:13px;line-height:13px;color:#e6e6e6;font-weight:bold;">-</div>
<div class="a t" style="left:411.00px;top:716.73px;font-size:14.5px;line-height:14.5px;color:#e6e6e6;font-weight:bold;transform:scaleX(0.8300);transform-origin:0 0;">WHISTLE 1_1</div>
<div class="a" style="left:288px;top:736px;width:355px;height:23px;background:#26282c;"></div>
<div class="a" style="left:289px;top:736px;width:40px;height:23px;background:#7b7c7f;"></div>
<div class="a" style="left:288px;top:736px;width:1px;height:23px;background:#2a2b2e;"></div>
<div class="a" style="left:288px;top:759px;width:355px;height:1px;background:#0b0b0c;"></div>
<div class="a" style="left:335px;top:739px;width:49px;height:17px;background:#2f3034;box-shadow:inset 0 0 0 1px #1d1e21;border-radius:3px;"></div>
<div class="a t" style="left:341.09px;top:740.50px;font-size:13px;line-height:13px;color:#d6d6d6;font-weight:bold;">M</div>
<div class="a t" style="left:367.16px;top:740.50px;font-size:13px;line-height:13px;color:#d6d6d6;font-weight:bold;">S</div>
<svg class="a" style="left:292px;top:741px;" width="16" height="14" viewBox="0 0 16 14"><path d="M0.5 8H2.5L3.5 6.5L4.5 9.5L5.5 4.5L7 11.5L8.5 1L10 12.5L11.5 5L12.5 10.5L13.5 7L15.5 8" stroke="#111111" stroke-width="1.7" fill="none" stroke-linejoin="round"/></svg>
<div class="a t" style="left:312.00px;top:741.00px;font-size:13px;line-height:13px;color:#1a1a1a;transform:scaleX(0.8990);transform-origin:0 0;">36</div>
<div class="a t" style="left:393.30px;top:743.69px;font-size:11px;line-height:11px;color:#e6e6e6;font-weight:bold;">_</div>
<div class="a t" style="left:402.50px;top:742.00px;font-size:13px;line-height:13px;color:#e6e6e6;font-weight:bold;">-</div>
<div class="a t" style="left:411.00px;top:740.73px;font-size:14.5px;line-height:14.5px;color:#e6e6e6;font-weight:bold;transform:scaleX(0.8300);transform-origin:0 0;">WHISTLE 2_1</div>
<div class="a" style="left:288px;top:760px;width:355px;height:23px;background:#26282c;"></div>
<div class="a" style="left:289px;top:760px;width:40px;height:23px;background:#7b7c7f;"></div>
<div class="a" style="left:288px;top:760px;width:1px;height:23px;background:#2a2b2e;"></div>
<div class="a" style="left:288px;top:783px;width:355px;height:1px;background:#0b0b0c;"></div>
<div class="a" style="left:335px;top:763px;width:49px;height:17px;background:#2f3034;box-shadow:inset 0 0 0 1px #1d1e21;border-radius:3px;"></div>
<div class="a t" style="left:341.09px;top:764.50px;font-size:13px;line-height:13px;color:#d6d6d6;font-weight:bold;">M</div>
<div class="a t" style="left:367.16px;top:764.50px;font-size:13px;line-height:13px;color:#d6d6d6;font-weight:bold;">S</div>
<svg class="a" style="left:292px;top:765px;" width="16" height="14" viewBox="0 0 16 14"><path d="M0.5 8H2.5L3.5 6.5L4.5 9.5L5.5 4.5L7 11.5L8.5 1L10 12.5L11.5 5L12.5 10.5L13.5 7L15.5 8" stroke="#111111" stroke-width="1.7" fill="none" stroke-linejoin="round"/></svg>
<div class="a t" style="left:312.00px;top:765.00px;font-size:13px;line-height:13px;color:#1a1a1a;transform:scaleX(0.8990);transform-origin:0 0;">37</div>
<div class="a t" style="left:393.30px;top:767.69px;font-size:11px;line-height:11px;color:#e6e6e6;font-weight:bold;">_</div>
<div class="a t" style="left:402.50px;top:766.00px;font-size:13px;line-height:13px;color:#e6e6e6;font-weight:bold;">-</div>
<div class="a t" style="left:411.00px;top:764.73px;font-size:14.5px;line-height:14.5px;color:#e6e6e6;font-weight:bold;transform:scaleX(0.8300);transform-origin:0 0;">SYNTH_1</div>
<div class="a" style="left:288px;top:784px;width:355px;height:23px;background:#26282c;"></div>
<div class="a" style="left:289px;top:784px;width:40px;height:23px;background:#7b7c7f;"></div>
<div class="a" style="left:288px;top:784px;width:1px;height:23px;background:#2a2b2e;"></div>
<div class="a" style="left:288px;top:807px;width:355px;height:1px;background:#0b0b0c;"></div>
<div class="a" style="left:335px;top:787px;width:49px;height:17px;background:#2f3034;box-shadow:inset 0 0 0 1px #1d1e21;border-radius:3px;"></div>
<div class="a t" style="left:341.09px;top:788.50px;font-size:13px;line-height:13px;color:#d6d6d6;font-weight:bold;">M</div>
<div class="a t" style="left:367.16px;top:788.50px;font-size:13px;line-height:13px;color:#d6d6d6;font-weight:bold;">S</div>
<svg class="a" style="left:292px;top:789px;" width="16" height="14" viewBox="0 0 16 14"><path d="M0.5 8H2.5L3.5 6.5L4.5 9.5L5.5 4.5L7 11.5L8.5 1L10 12.5L11.5 5L12.5 10.5L13.5 7L15.5 8" stroke="#111111" stroke-width="1.7" fill="none" stroke-linejoin="round"/></svg>
<div class="a t" style="left:312.00px;top:789.00px;font-size:13px;line-height:13px;color:#1a1a1a;transform:scaleX(0.8990);transform-origin:0 0;">38</div>
<div class="a t" style="left:393.30px;top:791.69px;font-size:11px;line-height:11px;color:#e6e6e6;font-weight:bold;">_</div>
<div class="a t" style="left:402.50px;top:790.00px;font-size:13px;line-height:13px;color:#e6e6e6;font-weight:bold;">-</div>
<div class="a t" style="left:411.00px;top:788.73px;font-size:14.5px;line-height:14.5px;color:#e6e6e6;font-weight:bold;transform:scaleX(0.8300);transform-origin:0 0;">VOCAL 1_1</div>
<div class="a" style="left:288px;top:808px;width:355px;height:23px;background:#a8a9ac;"></div>
<div class="a" style="left:289px;top:808px;width:40px;height:23px;background:#8a8b8e;"></div>
<div class="a" style="left:288px;top:808px;width:1px;height:23px;background:#2a2b2e;"></div>
<div class="a" style="left:288px;top:831px;width:355px;height:1px;background:#0b0b0c;"></div>
<div class="a" style="left:335px;top:811px;width:49px;height:17px;background:#a0a1a4;box-shadow:inset 0 0 0 1px #505154;border-radius:3px;"></div>
<div class="a t" style="left:341.09px;top:812.50px;font-size:13px;line-height:13px;color:#151515;font-weight:bold;">M</div>
<div class="a t" style="left:367.16px;top:812.50px;font-size:13px;line-height:13px;color:#151515;font-weight:bold;">S</div>
<svg class="a" style="left:292px;top:813px;" width="16" height="14" viewBox="0 0 16 14"><path d="M0.5 8H2.5L3.5 6.5L4.5 9.5L5.5 4.5L7 11.5L8.5 1L10 12.5L11.5 5L12.5 10.5L13.5 7L15.5 8" stroke="#111111" stroke-width="1.7" fill="none" stroke-linejoin="round"/></svg>
<div class="a t" style="left:312.00px;top:813.00px;font-size:13px;line-height:13px;color:#1a1a1a;transform:scaleX(0.8990);transform-origin:0 0;">39</div>
<div class="a t" style="left:393.30px;top:815.69px;font-size:11px;line-height:11px;color:#151515;font-weight:bold;">_</div>
<div class="a t" style="left:402.50px;top:814.00px;font-size:13px;line-height:13px;color:#151515;font-weight:bold;">-</div>
<div class="a t" style="left:411.00px;top:812.73px;font-size:14.5px;line-height:14.5px;color:#151515;font-weight:bold;transform:scaleX(0.8300);transform-origin:0 0;">VOCAL 2_1</div>
<div class="a" style="left:288px;top:832px;width:355px;height:23px;background:#26282c;"></div>
<div class="a" style="left:289px;top:832px;width:40px;height:23px;background:#7b7c7f;"></div>
<div class="a" style="left:288px;top:832px;width:1px;height:23px;background:#2a2b2e;"></div>
<div class="a" style="left:288px;top:855px;width:355px;height:1px;background:#0b0b0c;"></div>
<div class="a" style="left:335px;top:835px;width:49px;height:17px;background:#2f3034;box-shadow:inset 0 0 0 1px #1d1e21;border-radius:3px;"></div>
<div class="a t" style="left:341.09px;top:836.50px;font-size:13px;line-height:13px;color:#d6d6d6;font-weight:bold;">M</div>
<div class="a t" style="left:367.16px;top:836.50px;font-size:13px;line-height:13px;color:#d6d6d6;font-weight:bold;">S</div>
<svg class="a" style="left:292px;top:837px;" width="16" height="14" viewBox="0 0 16 14"><path d="M0.5 8H2.5L3.5 6.5L4.5 9.5L5.5 4.5L7 11.5L8.5 1L10 12.5L11.5 5L12.5 10.5L13.5 7L15.5 8" stroke="#111111" stroke-width="1.7" fill="none" stroke-linejoin="round"/></svg>
<div class="a t" style="left:312.00px;top:837.00px;font-size:13px;line-height:13px;color:#1a1a1a;transform:scaleX(0.8990);transform-origin:0 0;">40</div>
<div class="a t" style="left:393.30px;top:839.69px;font-size:11px;line-height:11px;color:#e6e6e6;font-weight:bold;">_</div>
<div class="a t" style="left:402.50px;top:838.00px;font-size:13px;line-height:13px;color:#e6e6e6;font-weight:bold;">-</div>
<div class="a t" style="left:411.00px;top:836.73px;font-size:14.5px;line-height:14.5px;color:#e6e6e6;font-weight:bold;transform:scaleX(0.8300);transform-origin:0 0;">VOCAL 3_1</div>
<div class="a" style="left:288px;top:856px;width:355px;height:23px;background:#26282c;"></div>
<div class="a" style="left:289px;top:856px;width:40px;height:23px;background:#7b7c7f;"></div>
<div class="a" style="left:288px;top:856px;width:1px;height:23px;background:#2a2b2e;"></div>
<div class="a" style="left:288px;top:879px;width:355px;height:1px;background:#0b0b0c;"></div>
<div class="a" style="left:335px;top:859px;width:49px;height:17px;background:#2f3034;box-shadow:inset 0 0 0 1px #1d1e21;border-radius:3px;"></div>
<div class="a t" style="left:341.09px;top:860.50px;font-size:13px;line-height:13px;color:#d6d6d6;font-weight:bold;">M</div>
<div class="a t" style="left:367.16px;top:860.50px;font-size:13px;line-height:13px;color:#d6d6d6;font-weight:bold;">S</div>
<svg class="a" style="left:292px;top:861px;" width="16" height="14" viewBox="0 0 16 14"><path d="M0.5 8H2.5L3.5 6.5L4.5 9.5L5.5 4.5L7 11.5L8.5 1L10 12.5L11.5 5L12.5 10.5L13.5 7L15.5 8" stroke="#111111" stroke-width="1.7" fill="none" stroke-linejoin="round"/></svg>
<div class="a t" style="left:312.00px;top:861.00px;font-size:13px;line-height:13px;color:#1a1a1a;transform:scaleX(0.8990);transform-origin:0 0;">41</div>
<div class="a t" style="left:393.30px;top:863.69px;font-size:11px;line-height:11px;color:#e6e6e6;font-weight:bold;">_</div>
<div class="a t" style="left:402.50px;top:862.00px;font-size:13px;line-height:13px;color:#e6e6e6;font-weight:bold;">-</div>
<div class="a t" style="left:411.00px;top:860.73px;font-size:14.5px;line-height:14.5px;color:#e6e6e6;font-weight:bold;transform:scaleX(0.8300);transform-origin:0 0;">LVH_my_everyt..._1</div>
<div class="a" style="left:288px;top:880px;width:355px;height:23px;background:#26282c;"></div>
<div class="a" style="left:289px;top:880px;width:40px;height:23px;background:#7b7c7f;"></div>
<div class="a" style="left:288px;top:880px;width:1px;height:23px;background:#2a2b2e;"></div>
<div class="a" style="left:288px;top:903px;width:355px;height:1px;background:#0b0b0c;"></div>
<div class="a" style="left:335px;top:883px;width:49px;height:17px;background:#2f3034;box-shadow:inset 0 0 0 1px #1d1e21;border-radius:3px;"></div>
<div class="a t" style="left:341.09px;top:884.50px;font-size:13px;line-height:13px;color:#d6d6d6;font-weight:bold;">M</div>
<div class="a t" style="left:367.16px;top:884.50px;font-size:13px;line-height:13px;color:#d6d6d6;font-weight:bold;">S</div>
<svg class="a" style="left:292px;top:884px;" width="16" height="16" viewBox="0 0 16 16"><path d="M3 1.5v9M8 1v9M13 1.5v9M4.5 11v3h7v-3" stroke="#151515" stroke-width="1.6" fill="none"/><rect x="1.3" y="4" width="3.4" height="4" rx="1.5" fill="#151515"/><rect x="6.3" y="2.5" width="3.4" height="4" rx="1.5" fill="#151515"/><rect x="11.3" y="5.5" width="3.4" height="4" rx="1.5" fill="#151515"/></svg>
<div class="a t" style="left:312.00px;top:885.00px;font-size:13px;line-height:13px;color:#1a1a1a;transform:scaleX(0.8990);transform-origin:0 0;">42</div>
<div class="a t" style="left:393.00px;top:884.73px;font-size:14.5px;line-height:14.5px;color:#e6e6e6;font-weight:bold;transform:scaleX(0.8300);transform-origin:0 0;">VOX</div>
<div class="a" style="left:564px;top:883px;width:75px;height:17px;background:#222427;box-shadow:inset 0 0 0 1px #18191b;border-radius:3px;"></div>
<div class="a t" style="left:600.50px;top:887.27px;font-size:11.5px;line-height:11.5px;color:#cfcfcf;transform:scaleX(0.8712);transform-origin:0 0;">0.00</div>
<svg class="a" style="left:625px;top:884px;" width="10" height="16" viewBox="0 0 10 16"><path d="M1.5 6.5h6l-3-4z M1.5 9.5h6l-3 4z" fill="#cfcfcf"/></svg>
<div class="a" style="left:288px;top:904px;width:355px;height:23px;background:#26282c;"></div>
<div class="a" style="left:289px;top:904px;width:40px;height:23px;background:#7b7c7f;"></div>
<div class="a" style="left:288px;top:904px;width:1px;height:23px;background:#2a2b2e;"></div>
<div class="a" style="left:288px;top:927px;width:355px;height:1px;background:#0b0b0c;"></div>
<div class="a" style="left:335px;top:907px;width:49px;height:17px;background:#2f3034;box-shadow:inset 0 0 0 1px #1d1e21;border-radius:3px;"></div>
<div class="a t" style="left:341.09px;top:908.50px;font-size:13px;line-height:13px;color:#d6d6d6;font-weight:bold;">M</div>
<div class="a t" style="left:367.16px;top:908.50px;font-size:13px;line-height:13px;color:#d6d6d6;font-weight:bold;">S</div>
<svg class="a" style="left:292px;top:908px;" width="16" height="16" viewBox="0 0 16 16"><path d="M3 1.5v9M8 1v9M13 1.5v9M4.5 11v3h7v-3" stroke="#151515" stroke-width="1.6" fill="none"/><rect x="1.3" y="4" width="3.4" height="4" rx="1.5" fill="#151515"/><rect x="6.3" y="2.5" width="3.4" height="4" rx="1.5" fill="#151515"/><rect x="11.3" y="5.5" width="3.4" height="4" rx="1.5" fill="#151515"/></svg>
<div class="a t" style="left:312.00px;top:909.00px;font-size:13px;line-height:13px;color:#1a1a1a;transform:scaleX(0.8990);transform-origin:0 0;">43</div>
<div class="a t" style="left:393.00px;top:908.73px;font-size:14.5px;line-height:14.5px;color:#e6e6e6;font-weight:bold;transform:scaleX(0.8300);transform-origin:0 0;">VOX1</div>
<div class="a" style="left:564px;top:907px;width:75px;height:17px;background:#222427;box-shadow:inset 0 0 0 1px #18191b;border-radius:3px;"></div>
<div class="a t" style="left:600.50px;top:911.27px;font-size:11.5px;line-height:11.5px;color:#cfcfcf;transform:scaleX(0.8712);transform-origin:0 0;">0.00</div>
<svg class="a" style="left:625px;top:908px;" width="10" height="16" viewBox="0 0 10 16"><path d="M1.5 6.5h6l-3-4z M1.5 9.5h6l-3 4z" fill="#cfcfcf"/></svg>
<div class="a" style="left:288px;top:928px;width:355px;height:23px;background:#26282c;"></div>
<div class="a" style="left:289px;top:928px;width:40px;height:23px;background:#7b7c7f;"></div>
<div class="a" style="left:288px;top:928px;width:1px;height:23px;background:#2a2b2e;"></div>
<div class="a" style="left:288px;top:951px;width:355px;height:1px;background:#0b0b0c;"></div>
<div class="a" style="left:335px;top:931px;width:49px;height:17px;background:#2f3034;box-shadow:inset 0 0 0 1px #1d1e21;border-radius:3px;"></div>
<div class="a t" style="left:341.09px;top:932.50px;font-size:13px;line-height:13px;color:#d6d6d6;font-weight:bold;">M</div>
<div class="a t" style="left:367.16px;top:932.50px;font-size:13px;line-height:13px;color:#d6d6d6;font-weight:bold;">S</div>
<div class="a t" style="left:292.00px;top:931.53px;font-size:16.5px;line-height:16.5px;color:#151515;font-weight:bold;transform:scaleX(0.7588);transform-origin:0 0;">FX</div>
<div class="a t" style="left:312.00px;top:933.00px;font-size:13px;line-height:13px;color:#1a1a1a;transform:scaleX(0.8990);transform-origin:0 0;">44</div>
<div class="a t" style="left:393.00px;top:932.73px;font-size:14.5px;line-height:14.5px;color:#e6e6e6;font-weight:bold;transform:scaleX(0.8300);transform-origin:0 0;">FX 01</div>
<div class="a" style="left:564px;top:931px;width:75px;height:17px;background:#222427;box-shadow:inset 0 0 0 1px #18191b;border-radius:3px;"></div>
<div class="a t" style="left:599.00px;top:935.27px;font-size:11.5px;line-height:11.5px;color:#cfcfcf;transform:scaleX(0.8011);transform-origin:0 0;">-10.4</div>
<svg class="a" style="left:625px;top:932px;" width="10" height="16" viewBox="0 0 10 16"><path d="M1.5 6.5h6l-3-4z M1.5 9.5h6l-3 4z" fill="#cfcfcf"/></svg>
<div class="a" style="left:288px;top:952px;width:355px;height:23px;background:#26282c;"></div>
<div class="a" style="left:289px;top:952px;width:40px;height:23px;background:#7b7c7f;"></div>
<div class="a" style="left:288px;top:952px;width:1px;height:23px;background:#2a2b2e;"></div>
<div class="a" style="left:288px;top:975px;width:355px;height:1px;background:#0b0b0c;"></div>
<div class="a" style="left:335px;top:955px;width:49px;height:17px;background:#2f3034;box-shadow:inset 0 0 0 1px #1d1e21;border-radius:3px;"></div>
<div class="a t" style="left:341.09px;top:956.50px;font-size:13px;line-height:13px;color:#d6d6d6;font-weight:bold;">M</div>
<div class="a t" style="left:367.16px;top:956.50px;font-size:13px;line-height:13px;color:#d6d6d6;font-weight:bold;">S</div>
<svg class="a" style="left:292px;top:957px;" width="16" height="14" viewBox="0 0 16 14"><path d="M0.5 8H2.5L3.5 6.5L4.5 9.5L5.5 4.5L7 11.5L8.5 1L10 12.5L11.5 5L12.5 10.5L13.5 7L15.5 8" stroke="#111111" stroke-width="1.7" fill="none" stroke-linejoin="round"/></svg>
<div class="a t" style="left:312.00px;top:957.00px;font-size:13px;line-height:13px;color:#1a1a1a;transform:scaleX(0.8990);transform-origin:0 0;">45</div>
<div class="a t" style="left:393.30px;top:959.69px;font-size:11px;line-height:11px;color:#e6e6e6;font-weight:bold;">_</div>
<div class="a t" style="left:402.50px;top:958.00px;font-size:13px;line-height:13px;color:#e6e6e6;font-weight:bold;">-</div>
<div class="a t" style="left:411.00px;top:959.69px;font-size:11px;line-height:11px;color:#e6e6e6;font-weight:bold;">_</div>
<div class="a t" style="left:420.00px;top:958.00px;font-size:13px;line-height:13px;color:#e6e6e6;font-weight:bold;">-</div>
<div class="a t" style="left:429.00px;top:956.73px;font-size:14.5px;line-height:14.5px;color:#e6e6e6;font-weight:bold;transform:scaleX(0.8300);transform-origin:0 0;">hook</div>
<div class="a" style="left:284px;top:159px;width:371px;height:28px;background:#25272b;"></div>
<div class="a" style="left:284px;top:186px;width:371px;height:2px;background:#46474b;"></div>
<div class="a" style="left:288px;top:163px;width:51px;height:19px;background:#3e3f43;box-shadow:inset 0 0 0 1px #4a4b4f;border-radius:3px;"></div>
<svg class="a" style="left:288px;top:163px;" width="25" height="19" viewBox="0 0 25 19"><path d="M12.5 4.5v10M7.5 9.5h10" stroke="#e0e0e0" stroke-width="2.6"/></svg>
<svg class="a" style="left:313px;top:163px;" width="25" height="19" viewBox="0 0 25 19"><path d="M5 9.5l3-5h6l2 3.5h-3v5h-5z" fill="#dcdcdc"/><path d="M13 10.5h8M13 13h8" stroke="#dcdcdc" stroke-width="1.6"/></svg>
<div class="a" style="left:504px;top:163px;width:63px;height:19px;background:#36383c;border-radius:2px;"></div>
<div class="a t" style="left:508.00px;top:167.77px;font-size:11.5px;line-height:11.5px;color:#cfcfcf;transform:scaleX(0.9383);transform-origin:0 0;">82 / 82</div>
<div class="a" style="left:567px;top:163px;width:50px;height:19px;background:#1b1c1f;box-shadow:inset 0 0 0 1px #3a3b3f;border-radius:2px;"></div>
<div class="a" style="left:591px;top:164px;width:1px;height:17px;background:#3a3b3f;"></div>
<svg class="a" style="left:567px;top:163px;" width="24" height="19" viewBox="0 0 24 19"><path d="M7 15.5V8.5l5-4l5 4v7z" fill="none" stroke="#e0e0e0" stroke-width="1.6"/><path d="M12 9v4M10 11h4" stroke="#e0e0e0" stroke-width="1"/></svg>
<svg class="a" style="left:592px;top:163px;" width="25" height="19" viewBox="0 0 25 19"><rect x="6.5" y="4.5" width="12" height="10" fill="none" stroke="#e0e0e0" stroke-width="1.4"/><path d="M7 8h11M7 11h11" stroke="#e0e0e0" stroke-width="1.6"/></svg>
<div class="a" style="left:627px;top:163px;width:25px;height:19px;background:#3a3c40;box-shadow:inset 0 0 0 1px #47484c;border-radius:3px;"></div>
<svg class="a" style="left:627px;top:163px;" width="25" height="19" viewBox="0 0 25 19"><circle cx="13.5" cy="8" r="3.8" fill="none" stroke="#e0e0e0" stroke-width="1.5"/><path d="M11 10.5l-4 4" stroke="#e0e0e0" stroke-width="1.7"/></svg>
<div class="a" style="left:284px;top:967px;width:371px;height:19px;background:#25272b;"></div>
<div class="a t" style="left:296.00px;top:970.27px;font-size:11.5px;line-height:11.5px;color:#cfcfcf;transform:scaleX(1.0069);transform-origin:0 0;">Standard</div>
<svg class="a" style="left:614px;top:968px;" width="14" height="14" viewBox="0 0 14 14"><path d="M2 4h9l-4.5 4z" fill="#9a9a9a"/></svg>
<svg class="a" style="left:635px;top:966px;" width="16" height="16" viewBox="0 0 16 16"><circle cx="8" cy="8" r="4.5" fill="none" stroke="#9a9a9a" stroke-width="2.5" stroke-dasharray="2 1.5"/><circle cx="8" cy="8" r="2.5" fill="none" stroke="#9a9a9a" stroke-width="1.5"/></svg>
<div class="a" style="left:643px;top:188px;width:12px;height:779px;background:#050506;"></div>
<div class="a" style="left:654px;top:159px;width:1px;height:827px;background:#1a1b1e;"></div>
<div class="a" style="left:655px;top:159px;width:2px;height:827px;background:#6c6d70;"></div>
<div class="a" style="left:657px;top:159px;width:1px;height:827px;background:#1e1f22;"></div>
<div class="a" style="left:658px;top:188px;width:1006px;height:781px;background:#2b2d31;"></div>
<div class="a" style="left:658px;top:187px;width:1006px;height:782px;background:repeating-linear-gradient(to bottom,#dcdde0 0px,#dcdde0 1px,#909194 1px,#909194 4px,#9d9ea1 4px,#9d9ea1 5px,#070709 5px,#070709 6px,#9d9ea1 6px,#9d9ea1 7px,#95969a 7px,#95969a 13px,#9d9ea1 13px,#9d9ea1 14px,#070709 14px,#070709 15px,#9d9ea1 15px,#9d9ea1 16px,#909194 16px,#909194 18px,#dcdde0 18px,#dcdde0 19px,#2f3034 19px,#2f3034 21px,#3f4044 21px,#3f4044 22px,#2f3034 22px,#2f3034 24px);background-position:0 -1px;"></div>
<div class="a" style="left:710px;top:188px;width:1px;height:781px;background:rgba(20,20,25,0.30);"></div>
<div class="a" style="left:768px;top:188px;width:1px;height:781px;background:rgba(20,20,25,0.30);"></div>
<div class="a" style="left:825px;top:188px;width:1px;height:781px;background:rgba(20,20,25,0.30);"></div>
<div class="a" style="left:882px;top:188px;width:1px;height:781px;background:rgba(20,20,25,0.30);"></div>
<div class="a" style="left:939px;top:188px;width:1px;height:781px;background:rgba(20,20,25,0.30);"></div>
<div class="a" style="left:996px;top:188px;width:1px;height:781px;background:rgba(20,20,25,0.30);"></div>
<div class="a" style="left:1054px;top:188px;width:1px;height:781px;background:rgba(20,20,25,0.30);"></div>
<div class="a" style="left:1111px;top:188px;width:1px;height:781px;background:rgba(20,20,25,0.30);"></div>
<div class="a" style="left:1168px;top:188px;width:1px;height:781px;background:rgba(20,20,25,0.30);"></div>
<div class="a" style="left:1225px;top:188px;width:1px;height:781px;background:rgba(20,20,25,0.30);"></div>
<div class="a" style="left:1282px;top:188px;width:1px;height:781px;background:rgba(20,20,25,0.30);"></div>
<div class="a" style="left:1339px;top:188px;width:1px;height:781px;background:rgba(20,20,25,0.30);"></div>
<div class="a" style="left:1397px;top:188px;width:1px;height:781px;background:rgba(20,20,25,0.30);"></div>
<div class="a" style="left:1454px;top:188px;width:1px;height:781px;background:rgba(20,20,25,0.30);"></div>
<div class="a" style="left:1511px;top:188px;width:1px;height:781px;background:rgba(20,20,25,0.30);"></div>
<div class="a" style="left:1568px;top:188px;width:1px;height:781px;background:rgba(20,20,25,0.30);"></div>
<div class="a" style="left:1625px;top:188px;width:1px;height:781px;background:rgba(20,20,25,0.30);"></div>
<div class="a" style="left:658px;top:469px;width:1006px;height:53px;background:#272d37;"></div>
<div class="a" style="left:658px;top:469px;width:1006px;height:4px;background:#2b2f36;"></div>
<div class="a" style="left:658px;top:478px;width:1006px;height:1px;background:#6b727d;"></div>
<div class="a" style="left:658px;top:503px;width:1006px;height:1px;background:#6b727d;"></div>
<div class="a" style="left:658px;top:495px;width:1006px;height:1px;background:#30363f;"></div>
<div class="a" style="left:658px;top:877px;width:1006px;height:77px;background:#262b33;"></div>
<div class="a" style="left:658px;top:877px;width:1006px;height:9px;background:#2a2e36;"></div>
<div class="a" style="left:658px;top:886px;width:1006px;height:17px;background:#3c424b;"></div>
<div class="a" style="left:658px;top:886px;width:1006px;height:1px;background:#6c737e;"></div>
<div class="a" style="left:658px;top:903px;width:1006px;height:1px;background:#4a5059;"></div>
<div class="a" style="left:658px;top:904px;width:1006px;height:7px;background:#282d35;"></div>
<div class="a" style="left:658px;top:911px;width:1006px;height:1px;background:#7a818b;"></div>
<div class="a" style="left:658px;top:927px;width:1006px;height:1px;background:#343a44;"></div>
<svg class="a" style="left:658px;top:936px;" width="1006" height="18" viewBox="0 0 1006 18"><path d="M0 4H110L113 8H222L225 5H1006V18H0z" fill="#3b414a"/><path d="M0 4.5H110L113 8.5H222L225 5.5H1006" stroke="#6c737e" stroke-width="1.2" fill="none"/></svg>
<div class="a" style="left:658px;top:954px;width:1006px;height:15px;background:#9a9b9e;"></div>
<div class="a" style="left:658px;top:954px;width:1006px;height:1px;background:#dcdde0;"></div>
<div class="a" style="left:658px;top:959px;width:1006px;height:1px;background:#070709;"></div>
<div class="a" style="left:658px;top:968px;width:1006px;height:1px;background:#070709;"></div>
<div class="a" style="left:710px;top:469px;width:1px;height:53px;background:#8a919b;"></div>
<div class="a" style="left:710px;top:877px;width:1px;height:77px;background:#8a919b;"></div>
<div class="a" style="left:710px;top:954px;width:1px;height:15px;background:rgba(20,20,25,0.30);"></div>
<div class="a" style="left:768px;top:469px;width:1px;height:53px;background:#8a919b;"></div>
<div class="a" style="left:768px;top:877px;width:1px;height:77px;background:#8a919b;"></div>
<div class="a" style="left:768px;top:954px;width:1px;height:15px;background:rgba(20,20,25,0.30);"></div>
<div class="a" style="left:825px;top:469px;width:1px;height:53px;background:#8a919b;"></div>
<div class="a" style="left:825px;top:877px;width:1px;height:77px;background:#8a919b;"></div>
<div class="a" style="left:825px;top:954px;width:1px;height:15px;background:rgba(20,20,25,0.30);"></div>
<div class="a" style="left:882px;top:469px;width:1px;height:53px;background:#8a919b;"></div>
<div class="a" style="left:882px;top:877px;width:1px;height:77px;background:#8a919b;"></div>
<div class="a" style="left:882px;top:954px;width:1px;height:15px;background:rgba(20,20,25,0.30);"></div>
<div class="a" style="left:939px;top:469px;width:1px;height:53px;background:#8a919b;"></div>
<div class="a" style="left:939px;top:877px;width:1px;height:77px;background:#8a919b;"></div>
<div class="a" style="left:939px;top:954px;width:1px;height:15px;background:rgba(20,20,25,0.30);"></div>
<div class="a" style="left:996px;top:469px;width:1px;height:53px;background:#8a919b;"></div>
<div class="a" style="left:996px;top:877px;width:1px;height:77px;background:#8a919b;"></div>
<div class="a" style="left:996px;top:954px;width:1px;height:15px;background:rgba(20,20,25,0.30);"></div>
<div class="a" style="left:1054px;top:469px;width:1px;height:53px;background:#8a919b;"></div>
<div class="a" style="left:1054px;top:877px;width:1px;height:77px;background:#8a919b;"></div>
<div class="a" style="left:1054px;top:954px;width:1px;height:15px;background:rgba(20,20,25,0.30);"></div>
<div class="a" style="left:1111px;top:469px;width:1px;height:53px;background:#8a919b;"></div>
<div class="a" style="left:1111px;top:877px;width:1px;height:77px;background:#8a919b;"></div>
<div class="a" style="left:1111px;top:954px;width:1px;height:15px;background:rgba(20,20,25,0.30);"></div>
<div class="a" style="left:1168px;top:469px;width:1px;height:53px;background:#8a919b;"></div>
<div class="a" style="left:1168px;top:877px;width:1px;height:77px;background:#8a919b;"></div>
<div class="a" style="left:1168px;top:954px;width:1px;height:15px;background:rgba(20,20,25,0.30);"></div>
<div class="a" style="left:1225px;top:469px;width:1px;height:53px;background:#8a919b;"></div>
<div class="a" style="left:1225px;top:877px;width:1px;height:77px;background:#8a919b;"></div>
<div class="a" style="left:1225px;top:954px;width:1px;height:15px;background:rgba(20,20,25,0.30);"></div>
<div class="a" style="left:1282px;top:469px;width:1px;height:53px;background:#8a919b;"></div>
<div class="a" style="left:1282px;top:877px;width:1px;height:77px;background:#8a919b;"></div>
<div class="a" style="left:1282px;top:954px;width:1px;height:15px;background:rgba(20,20,25,0.30);"></div>
<div class="a" style="left:1339px;top:469px;width:1px;height:53px;background:#8a919b;"></div>
<div class="a" style="left:1339px;top:877px;width:1px;height:77px;background:#8a919b;"></div>
<div class="a" style="left:1339px;top:954px;width:1px;height:15px;background:rgba(20,20,25,0.30);"></div>
<div class="a" style="left:1397px;top:469px;width:1px;height:53px;background:#8a919b;"></div>
<div class="a" style="left:1397px;top:877px;width:1px;height:77px;background:#8a919b;"></div>
<div class="a" style="left:1397px;top:954px;width:1px;height:15px;background:rgba(20,20,25,0.30);"></div>
<div class="a" style="left:1454px;top:469px;width:1px;height:53px;background:#8a919b;"></div>
<div class="a" style="left:1454px;top:877px;width:1px;height:77px;background:#8a919b;"></div>
<div class="a" style="left:1454px;top:954px;width:1px;height:15px;background:rgba(20,20,25,0.30);"></div>
<div class="a" style="left:1511px;top:469px;width:1px;height:53px;background:#8a919b;"></div>
<div class="a" style="left:1511px;top:877px;width:1px;height:77px;background:#8a919b;"></div>
<div class="a" style="left:1511px;top:954px;width:1px;height:15px;background:rgba(20,20,25,0.30);"></div>
<div class="a" style="left:1568px;top:469px;width:1px;height:53px;background:#8a919b;"></div>
<div class="a" style="left:1568px;top:877px;width:1px;height:77px;background:#8a919b;"></div>
<div class="a" style="left:1568px;top:954px;width:1px;height:15px;background:rgba(20,20,25,0.30);"></div>
<div class="a" style="left:1625px;top:469px;width:1px;height:53px;background:#8a919b;"></div>
<div class="a" style="left:1625px;top:877px;width:1px;height:77px;background:#8a919b;"></div>
<div class="a" style="left:1625px;top:954px;width:1px;height:15px;background:rgba(20,20,25,0.30);"></div>
<div class="a" style="left:658px;top:159px;width:1006px;height:4px;background:#2a2b2e;"></div>
<div class="a" style="left:658px;top:163px;width:1004px;height:24px;background:linear-gradient(#939498,#8c8d91);"></div>
<div class="a" style="left:658px;top:163px;width:2px;height:2px;background:#f0f0f0;"></div>
<div class="a t" style="left:659.00px;top:174.42px;font-size:12.5px;line-height:12.5px;color:#050505;font-weight:bold;transform:scaleX(0.9500);transform-origin:0 0;">1</div>
<div class="a" style="left:710px;top:163px;width:1px;height:24px;background:#050505;"></div>
<div class="a t" style="left:715.30px;top:174.42px;font-size:12.5px;line-height:12.5px;color:#050505;font-weight:bold;transform:scaleX(0.9500);transform-origin:0 0;">5</div>
<div class="a" style="left:768px;top:163px;width:1px;height:24px;background:#050505;"></div>
<div class="a t" style="left:773.30px;top:174.42px;font-size:12.5px;line-height:12.5px;color:#050505;font-weight:bold;transform:scaleX(0.9500);transform-origin:0 0;">9</div>
<div class="a" style="left:825px;top:163px;width:1px;height:24px;background:#050505;"></div>
<div class="a t" style="left:830.30px;top:174.42px;font-size:12.5px;line-height:12.5px;color:#050505;font-weight:bold;transform:scaleX(0.9500);transform-origin:0 0;">13</div>
<div class="a" style="left:882px;top:163px;width:1px;height:24px;background:#050505;"></div>
<div class="a t" style="left:887.30px;top:174.42px;font-size:12.5px;line-height:12.5px;color:#050505;font-weight:bold;transform:scaleX(0.9500);transform-origin:0 0;">17</div>
<div class="a" style="left:939px;top:163px;width:1px;height:24px;background:#050505;"></div>
<div class="a t" style="left:944.30px;top:174.42px;font-size:12.5px;line-height:12.5px;color:#050505;font-weight:bold;transform:scaleX(0.9500);transform-origin:0 0;">21</div>
<div class="a" style="left:996px;top:163px;width:1px;height:24px;background:#050505;"></div>
<div class="a t" style="left:1001.30px;top:174.42px;font-size:12.5px;line-height:12.5px;color:#050505;font-weight:bold;transform:scaleX(0.9500);transform-origin:0 0;">25</div>
<div class="a" style="left:1054px;top:163px;width:1px;height:24px;background:#050505;"></div>
<div class="a t" style="left:1059.30px;top:174.42px;font-size:12.5px;line-height:12.5px;color:#050505;font-weight:bold;transform:scaleX(0.9500);transform-origin:0 0;">29</div>
<div class="a" style="left:1111px;top:163px;width:1px;height:24px;background:#050505;"></div>
<div class="a t" style="left:1116.30px;top:174.42px;font-size:12.5px;line-height:12.5px;color:#050505;font-weight:bold;transform:scaleX(0.9500);transform-origin:0 0;">33</div>
<div class="a" style="left:1168px;top:163px;width:1px;height:24px;background:#050505;"></div>
<div class="a t" style="left:1173.30px;top:174.42px;font-size:12.5px;line-height:12.5px;color:#050505;font-weight:bold;transform:scaleX(0.9500);transform-origin:0 0;">37</div>
<div class="a" style="left:1225px;top:163px;width:1px;height:24px;background:#050505;"></div>
<div class="a t" style="left:1230.30px;top:174.42px;font-size:12.5px;line-height:12.5px;color:#050505;font-weight:bold;transform:scaleX(0.9500);transform-origin:0 0;">41</div>
<div class="a" style="left:1282px;top:163px;width:1px;height:24px;background:#050505;"></div>
<div class="a t" style="left:1287.30px;top:174.42px;font-size:12.5px;line-height:12.5px;color:#050505;font-weight:bold;transform:scaleX(0.9500);transform-origin:0 0;">45</div>
<div class="a" style="left:1339px;top:163px;width:1px;height:24px;background:#050505;"></div>
<div class="a t" style="left:1344.30px;top:174.42px;font-size:12.5px;line-height:12.5px;color:#050505;font-weight:bold;transform:scaleX(0.9500);transform-origin:0 0;">49</div>
<div class="a" style="left:1397px;top:163px;width:1px;height:24px;background:#050505;"></div>
<div class="a t" style="left:1402.30px;top:174.42px;font-size:12.5px;line-height:12.5px;color:#050505;font-weight:bold;transform:scaleX(0.9500);transform-origin:0 0;">53</div>
<div class="a" style="left:1454px;top:163px;width:1px;height:24px;background:#050505;"></div>
<div class="a t" style="left:1459.30px;top:174.42px;font-size:12.5px;line-height:12.5px;color:#050505;font-weight:bold;transform:scaleX(0.9500);transform-origin:0 0;">57</div>
<div class="a" style="left:1511px;top:163px;width:1px;height:24px;background:#050505;"></div>
<div class="a t" style="left:1516.30px;top:174.42px;font-size:12.5px;line-height:12.5px;color:#050505;font-weight:bold;transform:scaleX(0.9500);transform-origin:0 0;">61</div>
<div class="a" style="left:1568px;top:163px;width:1px;height:24px;background:#050505;"></div>
<div class="a t" style="left:1573.30px;top:174.42px;font-size:12.5px;line-height:12.5px;color:#050505;font-weight:bold;transform:scaleX(0.9500);transform-origin:0 0;">65</div>
<div class="a" style="left:1625px;top:163px;width:1px;height:24px;background:#050505;"></div>
<div class="a t" style="left:1630.30px;top:174.42px;font-size:12.5px;line-height:12.5px;color:#050505;font-weight:bold;transform:scaleX(0.9500);transform-origin:0 0;">69</div>
<div class="a" style="left:1662px;top:159px;width:18px;height:28px;background:#2b2c2f;"></div>
<div class="a" style="left:1664px;top:163px;width:12px;height:22px;background:#46474b;box-shadow:inset 0 0 0 1px #55565a;border-radius:3px;"></div>
<svg class="a" style="left:1664px;top:163px;" width="12" height="22" viewBox="0 0 12 22"><path d="M1.5 8h9l-4.5 7z" fill="#e8e8e8"/></svg>
<div class="a" style="left:1664px;top:187px;width:16px;height:799px;background:#2b2c2f;"></div>
<div class="a" style="left:1664px;top:188px;width:12px;height:12px;background:#46474b;"></div>
<svg class="a" style="left:1664px;top:188px;" width="12" height="12" viewBox="0 0 12 12"><path d="M2.5 9.5l7-7" stroke="#f0f0f0" stroke-width="1.6"/></svg>
<div class="a" style="left:1664px;top:203px;width:12px;height:48px;background:#3a3b3f;"></div>
<div class="a" style="left:1669px;top:208px;width:2px;height:39px;background:#6a6b6e;"></div>
<svg class="a" style="left:1665px;top:233px;" width="10" height="10" viewBox="0 0 10 10"><circle cx="5" cy="5" r="4" fill="#f2f2f2"/></svg>
<div class="a" style="left:1664px;top:254px;width:12px;height:615px;background:#3a3b3f;"></div>
<svg class="a" style="left:1664px;top:256px;" width="12" height="12" viewBox="0 0 12 12"><path d="M2.5 8l3.5-3.5l3.5 3.5" stroke="#e8e8e8" stroke-width="1.3" fill="none"/></svg>
<div class="a" style="left:1666px;top:365px;width:8px;height:225px;background:#ececec;border-radius:4px;"></div>
<svg class="a" style="left:1664px;top:853px;" width="12" height="12" viewBox="0 0 12 12"><path d="M2.5 4l3.5 3.5l3.5-3.5" stroke="#e8e8e8" stroke-width="1.3" fill="none"/></svg>
<div class="a" style="left:1664px;top:870px;width:12px;height:13px;background:#46474b;"></div>
<svg class="a" style="left:1664px;top:870px;" width="12" height="13" viewBox="0 0 12 13"><path d="M2.5 4.5h7l-3.5 5z" fill="#e8e8e8"/></svg>
<div class="a" style="left:1664px;top:886px;width:12px;height:84px;background:#3a3b3f;"></div>
<div class="a" style="left:1666px;top:892px;width:8px;height:2px;background:#e8e8e8;"></div>
<div class="a" style="left:1669px;top:908px;width:2px;height:50px;background:#6a6b6e;"></div>
<svg class="a" style="left:1665px;top:901px;" width="10" height="10" viewBox="0 0 10 10"><circle cx="5" cy="5" r="4.5" fill="#f2f2f2"/></svg>
<svg class="a" style="left:1664px;top:957px;" width="12" height="12" viewBox="0 0 12 12"><path d="M6 2v8M2 6h8" stroke="#f0f0f0" stroke-width="1.8"/></svg>
<div class="a" style="left:658px;top:969px;width:1006px;height:17px;background:#2b2c2f;"></div>
<div class="a" style="left:660px;top:970px;width:902px;height:14px;background:#3a3b3f;"></div>
<svg class="a" style="left:660px;top:970px;" width="12" height="14" viewBox="0 0 12 14"><path d="M7.5 3.5l-3.5 3.5l3.5 3.5" stroke="#e8e8e8" stroke-width="1.3" fill="none"/></svg>
<div class="a" style="left:683px;top:972px;width:253px;height:9px;background:#ececec;border-radius:4px;"></div>
<div class="a" style="left:1564px;top:970px;width:16px;height:14px;background:#46474b;"></div>
<svg class="a" style="left:1564px;top:970px;" width="16" height="14" viewBox="0 0 16 14"><path d="M4.5 5h7l-3.5 5z" fill="#e8e8e8"/></svg>
<div class="a" style="left:1582px;top:970px;width:82px;height:14px;background:#3a3b3f;"></div>
<div class="a" style="left:1583px;top:975px;width:9px;height:2px;background:#e8e8e8;"></div>
<div class="a" style="left:1595px;top:975px;width:55px;height:2px;background:#6a6b6e;"></div>
<svg class="a" style="left:1603px;top:971px;" width="10" height="10" viewBox="0 0 10 10"><circle cx="5" cy="5" r="4.5" fill="#f2f2f2"/></svg>
<svg class="a" style="left:1651px;top:971px;" width="12" height="12" viewBox="0 0 12 12"><path d="M6 2v8M2 6h8" stroke="#f0f0f0" stroke-width="1.8"/></svg>
<div class="a" style="left:655px;top:561px;width:3px;height:4px;background:#f0f0f0;"></div>
<div class="a" style="left:655px;top:567px;width:3px;height:4px;background:#f0f0f0;"></div>
<div class="a" style="left:655px;top:573px;width:3px;height:4px;background:#f0f0f0;"></div>
<div class="a" style="left:655px;top:579px;width:3px;height:4px;background:#f0f0f0;"></div>
<svg class="a" style="left:1546px;top:970px;" width="12" height="14" viewBox="0 0 12 14"><path d="M4.5 3.5l3.5 3.5l-3.5 3.5" stroke="#e8e8e8" stroke-width="1.3" fill="none"/></svg>
<svg class="a" style="left:0;top:0" width="1920" height="1032" viewBox="0 0 1920 1032"><path d="M880 191.5L880 191.5 881 190.4 882 190.2 883 190.5 884 190.6 885 190.8 886 191.0 887 191.1 888 191.2 889 191.3 890 191.4 891 191.5 891 191.5 890 191.6 889 191.7 888 191.8 887 191.9 886 192.0 885 192.2 884 192.4 883 192.5 882 192.8 881 192.6 880 191.5Z M880 200.5L880 200.5 881 199.2 882 199.4 883 199.5 884 199.6 885 199.7 886 199.9 887 200.1 888 200.2 889 200.3 890 200.4 891 200.5 891 200.5 890 200.6 889 200.7 888 200.8 887 200.9 886 201.1 885 201.3 884 201.4 883 201.5 882 201.6 881 201.8 880 200.5Z M995 191.5L995 191.5 996 190.3 997 190.3 998 190.4 999 190.7 1000 190.8 1001 191.0 1002 191.2 1003 191.3 1004 191.4 1005 191.5 1005 191.5 1004 191.6 1003 191.7 1002 191.8 1001 192.0 1000 192.2 999 192.3 998 192.6 997 192.7 996 192.7 995 191.5Z M995 200.5L995 200.5 996 199.1 997 199.3 998 199.5 999 199.7 1000 199.8 1001 200.0 1002 200.1 1003 200.3 1004 200.4 1005 200.5 1005 200.5 1004 200.6 1003 200.7 1002 200.9 1001 201.0 1000 201.2 999 201.3 998 201.5 997 201.7 996 201.9 995 200.5Z M1224 191.5L1224 191.5 1225 190.0 1226 190.2 1227 190.5 1228 190.6 1229 190.9 1230 191.0 1231 191.1 1232 191.3 1233 191.4 1234 191.5 1234 191.5 1233 191.6 1232 191.7 1231 191.9 1230 192.0 1229 192.1 1228 192.4 1227 192.5 1226 192.8 1225 193.0 1224 191.5Z M1224 200.5L1224 200.5 1225 199.1 1226 199.3 1227 199.4 1228 199.7 1229 199.8 1230 200.0 1231 200.2 1232 200.3 1233 200.4 1234 200.5 1234 200.5 1233 200.6 1232 200.7 1231 200.8 1230 201.0 1229 201.2 1228 201.3 1227 201.6 1226 201.7 1225 201.9 1224 200.5Z M1453 191.5L1453 191.5 1454 190.1 1455 190.4 1456 190.4 1457 190.6 1458 190.8 1459 191.0 1460 191.2 1461 191.3 1462 191.4 1463 191.5 1463 191.5 1462 191.6 1461 191.7 1460 191.8 1459 192.0 1458 192.2 1457 192.4 1456 192.6 1455 192.6 1454 192.9 1453 191.5Z M1453 200.5L1453 200.5 1454 199.2 1455 199.4 1456 199.6 1457 199.6 1458 199.9 1459 200.0 1460 200.2 1461 200.3 1462 200.4 1463 200.5 1463 200.5 1462 200.6 1461 200.7 1460 200.8 1459 201.0 1458 201.1 1457 201.4 1456 201.4 1455 201.6 1454 201.8 1453 200.5Z M996 215.5L996 215.5 997 214.0 998 214.2 999 214.4 1000 214.7 1001 214.9 1002 215.0 1003 215.1 1004 215.3 1005 215.4 1006 215.5 1006 215.5 1005 215.6 1004 215.7 1003 215.9 1002 216.0 1001 216.1 1000 216.3 999 216.6 998 216.8 997 217.0 996 215.5Z M996 224.5L996 224.5 997 223.2 998 223.3 999 223.5 1000 223.7 1001 223.9 1002 224.0 1003 224.2 1004 224.3 1005 224.4 1006 224.5 1006 224.5 1005 224.6 1004 224.7 1003 224.8 1002 225.0 1001 225.1 1000 225.3 999 225.5 998 225.7 997 225.8 996 224.5Z M1454 215.5L1454 215.5 1455 214.0 1456 214.1 1457 214.5 1458 214.5 1459 214.7 1460 214.9 1461 215.1 1462 215.3 1463 215.4 1464 215.5 1464 215.5 1463 215.6 1462 215.7 1461 215.9 1460 216.1 1459 216.3 1458 216.5 1457 216.5 1456 216.9 1455 217.0 1454 215.5Z M1454 224.5L1454 224.5 1455 223.1 1456 223.3 1457 223.4 1458 223.6 1459 223.8 1460 224.0 1461 224.2 1462 224.3 1463 224.4 1464 224.5 1464 224.5 1463 224.6 1462 224.7 1461 224.8 1460 225.0 1459 225.2 1458 225.4 1457 225.6 1456 225.7 1455 225.9 1454 224.5Z M1338 239.5L1338 239.5 1339 238.0 1340 238.3 1341 238.6 1342 238.7 1343 238.9 1344 239.0 1345 239.2 1346 239.3 1347 239.4 1348 239.5 1348 239.5 1347 239.6 1346 239.7 1345 239.8 1344 240.0 1343 240.1 1342 240.3 1341 240.4 1340 240.7 1339 241.0 1338 239.5Z M1338 248.5L1338 248.5 1339 247.3 1340 247.4 1341 247.5 1342 247.7 1343 247.8 1344 248.0 1345 248.2 1346 248.3 1347 248.4 1348 248.5 1348 248.5 1347 248.6 1346 248.7 1345 248.8 1344 249.0 1343 249.2 1342 249.3 1341 249.5 1340 249.6 1339 249.7 1338 248.5Z M765 263.5L765 263.5 766 262.5 767 262.7 768 262.9 769 263.2 770 263.4 771 263.5 771 263.5 770 263.6 769 263.8 768 264.1 767 264.3 766 264.5 765 263.5Z M765 272.5L765 272.5 766 271.5 767 271.7 768 271.9 769 272.2 770 272.4 771 272.5 771 272.5 770 272.6 769 272.8 768 273.1 767 273.3 766 273.5 765 272.5Z M995 263.5L995 263.5 996 262.5 997 262.9 998 263.3 999 263.5 999 263.5 998 263.7 997 264.1 996 264.5 995 263.5Z M995 272.5L995 272.5 996 271.6 997 271.9 998 272.3 999 272.5 999 272.5 998 272.7 997 273.1 996 273.4 995 272.5Z M1452 263.5L1452 263.5 1453 262.2 1454 262.5 1455 262.7 1456 262.9 1457 263.2 1458 263.4 1459 263.5 1459 263.5 1458 263.6 1457 263.8 1456 264.1 1455 264.3 1454 264.5 1453 264.8 1452 263.5Z M1452 272.5L1452 272.5 1453 271.2 1454 271.5 1455 271.8 1456 272.0 1457 272.2 1458 272.4 1459 272.5 1459 272.5 1458 272.6 1457 272.8 1456 273.0 1455 273.2 1454 273.5 1453 273.8 1452 272.5Z M764 287.5L764 287.5 765 286.3 766 286.5 767 286.7 768 286.9 769 287.0 770 287.1 771 287.3 772 287.4 773 287.5 773 287.5 772 287.6 771 287.7 770 287.9 769 288.0 768 288.1 767 288.3 766 288.5 765 288.7 764 287.5Z M764 296.5L764 296.5 765 295.2 766 295.6 767 295.6 768 295.8 769 296.0 770 296.2 771 296.3 772 296.4 773 296.5 773 296.5 772 296.6 771 296.7 770 296.8 769 297.0 768 297.2 767 297.4 766 297.4 765 297.8 764 296.5Z M879 287.5L879 287.5 880 286.3 881 286.4 882 286.6 883 286.9 884 287.0 885 287.1 886 287.3 887 287.4 888 287.5 888 287.5 887 287.6 886 287.7 885 287.9 884 288.0 883 288.1 882 288.4 881 288.6 880 288.7 879 287.5Z M879 296.5L879 296.5 880 295.4 881 295.4 882 295.7 883 295.9 884 296.0 885 296.2 886 296.3 887 296.4 888 296.5 888 296.5 887 296.6 886 296.7 885 296.8 884 297.0 883 297.1 882 297.3 881 297.6 880 297.6 879 296.5Z M994 287.5L994 287.5 995 286.4 996 286.6 997 286.8 998 287.0 999 287.1 1000 287.3 1001 287.4 1002 287.5 1002 287.5 1001 287.6 1000 287.7 999 287.9 998 288.0 997 288.2 996 288.4 995 288.6 994 287.5Z M994 296.5L994 296.5 995 295.3 996 295.5 997 295.8 998 295.9 999 296.1 1000 296.3 1001 296.4 1002 296.5 1002 296.5 1001 296.6 1000 296.7 999 296.9 998 297.1 997 297.2 996 297.5 995 297.7 994 296.5Z M1108 287.5L1108 287.5 1109 286.2 1110 286.5 1111 286.6 1112 286.9 1113 287.1 1114 287.2 1115 287.4 1116 287.5 1116 287.5 1115 287.6 1114 287.8 1113 287.9 1112 288.1 1111 288.4 1110 288.5 1109 288.8 1108 287.5Z M1108 296.5L1108 296.5 1109 295.1 1110 295.3 1111 295.7 1112 295.8 1113 296.1 1114 296.2 1115 296.4 1116 296.5 1116 296.5 1115 296.6 1114 296.8 1113 296.9 1112 297.2 1111 297.3 1110 297.7 1109 297.9 1108 296.5Z M1222 287.5L1222 287.5 1223 286.1 1224 286.3 1225 286.6 1226 286.8 1227 287.0 1228 287.2 1229 287.4 1230 287.5 1230 287.5 1229 287.6 1228 287.8 1227 288.0 1226 288.2 1225 288.4 1224 288.7 1223 288.9 1222 287.5Z M1222 296.5L1222 296.5 1223 295.1 1224 295.3 1225 295.6 1226 295.8 1227 296.0 1228 296.2 1229 296.4 1230 296.5 1230 296.5 1229 296.6 1228 296.8 1227 297.0 1226 297.2 1225 297.4 1224 297.7 1223 297.9 1222 296.5Z M1336 287.5L1336 287.5 1337 286.1 1338 286.4 1339 286.6 1340 286.8 1341 287.0 1342 287.1 1343 287.3 1344 287.4 1345 287.5 1345 287.5 1344 287.6 1343 287.7 1342 287.9 1341 288.0 1340 288.2 1339 288.4 1338 288.6 1337 288.9 1336 287.5Z M1336 296.5L1336 296.5 1337 294.9 1338 295.3 1339 295.6 1340 295.7 1341 295.9 1342 296.1 1343 296.2 1344 296.4 1345 296.5 1345 296.5 1344 296.6 1343 296.8 1342 296.9 1341 297.1 1340 297.3 1339 297.4 1338 297.7 1337 298.1 1336 296.5Z M1451 287.5L1451 287.5 1452 286.0 1453 286.5 1454 286.6 1455 286.8 1456 287.1 1457 287.3 1458 287.4 1459 287.5 1459 287.5 1458 287.6 1457 287.7 1456 287.9 1455 288.2 1454 288.4 1453 288.5 1452 289.0 1451 287.5Z M1451 296.5L1451 296.5 1452 295.1 1453 295.4 1454 295.7 1455 295.9 1456 296.0 1457 296.2 1458 296.4 1459 296.5 1459 296.5 1458 296.6 1457 296.8 1456 297.0 1455 297.1 1454 297.3 1453 297.6 1452 297.9 1451 296.5Z M1565 287.5L1565 287.5 1566 285.8 1567 286.4 1568 286.6 1569 286.8 1570 286.9 1571 287.1 1572 287.3 1573 287.4 1574 287.5 1574 287.5 1573 287.6 1572 287.7 1571 287.9 1570 288.1 1569 288.2 1568 288.4 1567 288.6 1566 289.2 1565 287.5Z M1565 296.5L1565 296.5 1566 295.1 1567 295.4 1568 295.5 1569 295.7 1570 295.9 1571 296.1 1572 296.3 1573 296.4 1574 296.5 1574 296.5 1573 296.6 1572 296.7 1571 296.9 1570 297.1 1569 297.3 1568 297.5 1567 297.6 1566 297.9 1565 296.5Z M764 311.5L764 311.5 765 310.3 766 310.6 767 310.8 768 311.0 769 311.1 770 311.2 771 311.3 772 311.4 773 311.5 773 311.5 772 311.6 771 311.7 770 311.8 769 311.9 768 312.0 767 312.2 766 312.4 765 312.7 764 311.5Z M764 320.5L764 320.5 765 319.3 766 319.7 767 319.9 768 320.0 769 320.1 770 320.2 771 320.3 772 320.4 773 320.5 773 320.5 772 320.6 771 320.7 770 320.8 769 320.9 768 321.0 767 321.1 766 321.3 765 321.7 764 320.5Z M879 311.5L879 311.5 880 310.5 881 310.6 882 310.8 883 311.0 884 311.1 885 311.2 886 311.4 887 311.4 888 311.5 888 311.5 887 311.6 886 311.6 885 311.8 884 311.9 883 312.0 882 312.2 881 312.4 880 312.5 879 311.5Z M879 320.5L879 320.5 880 319.4 881 319.7 882 319.8 883 319.9 884 320.1 885 320.2 886 320.3 887 320.4 888 320.5 888 320.5 887 320.6 886 320.7 885 320.8 884 320.9 883 321.1 882 321.2 881 321.3 880 321.6 879 320.5Z M994 311.5L994 311.5 995 310.5 996 310.7 997 310.8 998 311.0 999 311.1 1000 311.3 1001 311.4 1002 311.5 1002 311.5 1001 311.6 1000 311.7 999 311.9 998 312.0 997 312.2 996 312.3 995 312.5 994 311.5Z M994 320.5L994 320.5 995 319.6 996 319.8 997 319.9 998 320.0 999 320.2 1000 320.3 1001 320.4 1002 320.5 1002 320.5 1001 320.6 1000 320.7 999 320.8 998 321.0 997 321.1 996 321.2 995 321.4 994 320.5Z M1108 311.5L1108 311.5 1109 310.3 1110 310.6 1111 310.8 1112 311.0 1113 311.1 1114 311.3 1115 311.4 1116 311.5 1116 311.5 1115 311.6 1114 311.7 1113 311.9 1112 312.0 1111 312.2 1110 312.4 1109 312.7 1108 311.5Z M1108 320.5L1108 320.5 1109 319.2 1110 319.6 1111 319.8 1112 319.9 1113 320.1 1114 320.3 1115 320.4 1116 320.5 1116 320.5 1115 320.6 1114 320.7 1113 320.9 1112 321.1 1111 321.2 1110 321.4 1109 321.8 1108 320.5Z M1222 311.5L1222 311.5 1223 310.4 1224 310.6 1225 310.8 1226 311.0 1227 311.1 1228 311.3 1229 311.4 1230 311.5 1230 311.5 1229 311.6 1228 311.7 1227 311.9 1226 312.0 1225 312.2 1224 312.4 1223 312.6 1222 311.5Z M1222 320.5L1222 320.5 1223 319.4 1224 319.6 1225 319.8 1226 319.9 1227 320.1 1228 320.3 1229 320.4 1230 320.5 1230 320.5 1229 320.6 1228 320.7 1227 320.9 1226 321.1 1225 321.2 1224 321.4 1223 321.6 1222 320.5Z M1451 311.5L1451 311.5 1452 310.4 1453 310.5 1454 310.8 1455 310.9 1456 311.1 1457 311.3 1458 311.4 1459 311.5 1459 311.5 1458 311.6 1457 311.7 1456 311.9 1455 312.1 1454 312.2 1453 312.5 1452 312.6 1451 311.5Z M1451 320.5L1451 320.5 1452 319.3 1453 319.5 1454 319.8 1455 319.9 1456 320.1 1457 320.3 1458 320.4 1459 320.5 1459 320.5 1458 320.6 1457 320.7 1456 320.9 1455 321.1 1454 321.2 1453 321.5 1452 321.7 1451 320.5Z M1565 311.5L1565 311.5 1566 310.1 1567 310.5 1568 310.7 1569 310.9 1570 311.1 1571 311.2 1572 311.3 1573 311.4 1574 311.5 1574 311.5 1573 311.6 1572 311.7 1571 311.8 1570 311.9 1569 312.1 1568 312.3 1567 312.5 1566 312.9 1565 311.5Z M1565 320.5L1565 320.5 1566 319.2 1567 319.5 1568 319.7 1569 319.9 1570 320.1 1571 320.2 1572 320.3 1573 320.4 1574 320.5 1574 320.5 1573 320.6 1572 320.7 1571 320.8 1570 320.9 1569 321.1 1568 321.3 1567 321.5 1566 321.8 1565 320.5Z M1337 335.5L1337 335.5 1338 334.5 1339 334.5 1340 334.8 1341 335.0 1342 335.1 1343 335.3 1344 335.4 1345 335.5 1345 335.5 1344 335.6 1343 335.7 1342 335.9 1341 336.0 1340 336.2 1339 336.5 1338 336.5 1337 335.5Z M1337 344.5L1337 344.5 1338 343.4 1339 343.6 1340 343.8 1341 343.9 1342 344.1 1343 344.3 1344 344.4 1345 344.5 1345 344.5 1344 344.6 1343 344.7 1342 344.9 1341 345.1 1340 345.2 1339 345.4 1338 345.6 1337 344.5Z M764 359.5L764 358.6 765 357.8 766 358.3 767 358.8 768 359.1 769 359.1 770 358.7 771 357.8 772 358.1 773 358.3 773 360.7 772 360.9 771 361.2 770 360.3 769 359.9 768 359.9 767 360.2 766 360.7 765 361.2 764 360.4Z M764 368.5L764 367.6 765 366.7 766 367.2 767 367.4 768 367.5 769 367.8 770 368.1 771 368.1 772 368.1 773 368.1 773 368.9 772 368.9 771 368.9 770 368.9 769 369.2 768 369.5 767 369.6 766 369.8 765 370.3 764 369.4Z M1451 359.5L1451 358.7 1452 357.9 1453 358.4 1454 359.1 1455 359.1 1456 359.1 1457 359.1 1458 359.1 1459 359.1 1459 359.9 1458 359.9 1457 359.9 1456 359.9 1455 359.9 1454 359.9 1453 360.6 1452 361.1 1451 360.3Z M1451 368.5L1451 367.4 1452 366.6 1453 366.8 1454 367.4 1455 367.8 1456 368.1 1457 368.1 1458 368.1 1459 368.1 1459 368.9 1458 368.9 1457 368.9 1456 368.9 1455 369.2 1454 369.6 1453 370.2 1452 370.4 1451 369.6Z M1398 383.5L1398 383.1 1399 382.7 1400 382.9 1401 383.0 1402 383.1 1403 383.1 1404 383.1 1405 383.1 1406 383.1 1407 383.1 1408 382.9 1409 383.0 1410 383.0 1411 383.1 1412 383.1 1413 383.1 1414 383.1 1415 383.1 1416 383.1 1417 383.0 1418 382.6 1419 382.5 1420 382.8 1421 382.9 1422 382.9 1423 383.1 1424 383.1 1425 383.1 1426 383.1 1427 383.1 1428 383.1 1429 383.1 1430 383.1 1431 383.1 1432 383.1 1433 382.7 1434 382.9 1435 383.0 1436 383.1 1437 383.1 1438 383.1 1439 383.1 1440 383.1 1441 383.1 1442 383.1 1443 382.7 1444 382.8 1445 382.9 1446 383.1 1447 383.1 1448 383.1 1449 383.1 1450 383.1 1451 382.6 1452 382.8 1453 383.1 1454 383.1 1454 383.9 1453 383.9 1452 384.2 1451 384.4 1450 383.9 1449 383.9 1448 383.9 1447 383.9 1446 383.9 1445 384.1 1444 384.2 1443 384.3 1442 383.9 1441 383.9 1440 383.9 1439 383.9 1438 383.9 1437 383.9 1436 383.9 1435 384.0 1434 384.1 1433 384.3 1432 383.9 1431 383.9 1430 383.9 1429 383.9 1428 383.9 1427 383.9 1426 383.9 1425 383.9 1424 383.9 1423 383.9 1422 384.1 1421 384.1 1420 384.2 1419 384.5 1418 384.4 1417 384.0 1416 383.9 1415 383.9 1414 383.9 1413 383.9 1412 383.9 1411 383.9 1410 384.0 1409 384.0 1408 384.1 1407 383.9 1406 383.9 1405 383.9 1404 383.9 1403 383.9 1402 383.9 1401 384.0 1400 384.1 1399 384.3 1398 383.9Z M1398 392.5L1398 392.1 1399 391.7 1400 391.8 1401 391.8 1402 392.0 1403 392.1 1404 392.1 1405 392.1 1406 392.1 1407 392.1 1408 392.1 1409 392.1 1410 392.1 1411 392.1 1412 392.1 1413 391.7 1414 391.8 1415 391.9 1416 391.9 1417 392.1 1418 392.1 1419 392.1 1420 392.1 1421 392.1 1422 392.1 1423 392.1 1424 392.1 1425 391.7 1426 392.0 1427 392.1 1428 392.1 1429 392.1 1430 392.1 1431 392.1 1432 392.1 1433 392.0 1434 391.4 1435 391.6 1436 391.8 1437 391.8 1438 392.0 1439 392.1 1440 392.1 1441 392.1 1442 392.1 1443 392.1 1444 392.1 1445 391.9 1446 392.0 1447 392.1 1448 392.1 1449 392.1 1450 392.1 1451 391.6 1452 391.6 1453 391.9 1454 391.9 1454 393.1 1453 393.1 1452 393.4 1451 393.4 1450 392.9 1449 392.9 1448 392.9 1447 392.9 1446 393.0 1445 393.1 1444 392.9 1443 392.9 1442 392.9 1441 392.9 1440 392.9 1439 392.9 1438 393.0 1437 393.2 1436 393.2 1435 393.4 1434 393.6 1433 393.0 1432 392.9 1431 392.9 1430 392.9 1429 392.9 1428 392.9 1427 392.9 1426 393.0 1425 393.3 1424 392.9 1423 392.9 1422 392.9 1421 392.9 1420 392.9 1419 392.9 1418 392.9 1417 392.9 1416 393.1 1415 393.1 1414 393.2 1413 393.3 1412 392.9 1411 392.9 1410 392.9 1409 392.9 1408 392.9 1407 392.9 1406 392.9 1405 392.9 1404 392.9 1403 392.9 1402 393.0 1401 393.2 1400 393.2 1399 393.3 1398 392.9Z M1398 407.5L1398 407.1 1399 406.7 1400 406.9 1401 407.0 1402 407.0 1403 407.1 1404 407.1 1405 407.1 1406 407.1 1407 407.1 1408 407.1 1409 407.1 1410 407.1 1411 406.7 1412 406.9 1413 407.0 1414 407.1 1415 407.1 1416 407.1 1417 407.1 1418 407.1 1419 406.8 1420 407.1 1421 407.1 1422 407.1 1423 407.1 1424 407.1 1425 407.1 1426 406.7 1427 406.9 1428 407.1 1429 407.1 1430 407.1 1431 407.1 1432 407.1 1433 407.1 1434 407.1 1435 407.1 1436 406.9 1437 407.1 1438 407.1 1439 407.1 1440 407.1 1441 407.1 1442 407.0 1443 406.6 1444 406.9 1445 407.1 1446 407.1 1447 407.1 1448 407.1 1449 407.1 1450 407.1 1451 407.0 1452 406.6 1453 406.8 1454 407.1 1454 407.9 1453 408.2 1452 408.4 1451 408.0 1450 407.9 1449 407.9 1448 407.9 1447 407.9 1446 407.9 1445 407.9 1444 408.1 1443 408.4 1442 408.0 1441 407.9 1440 407.9 1439 407.9 1438 407.9 1437 407.9 1436 408.1 1435 407.9 1434 407.9 1433 407.9 1432 407.9 1431 407.9 1430 407.9 1429 407.9 1428 407.9 1427 408.1 1426 408.3 1425 407.9 1424 407.9 1423 407.9 1422 407.9 1421 407.9 1420 407.9 1419 408.2 1418 407.9 1417 407.9 1416 407.9 1415 407.9 1414 407.9 1413 408.0 1412 408.1 1411 408.3 1410 407.9 1409 407.9 1408 407.9 1407 407.9 1406 407.9 1405 407.9 1404 407.9 1403 407.9 1402 408.0 1401 408.0 1400 408.1 1399 408.3 1398 407.9Z M1398 416.5L1398 416.1 1399 415.7 1400 415.9 1401 416.1 1402 416.1 1403 416.1 1404 416.1 1405 415.9 1406 415.6 1407 415.5 1408 415.7 1409 415.9 1410 416.0 1411 416.1 1412 416.1 1413 416.1 1414 416.1 1415 416.0 1416 415.5 1417 415.5 1418 415.7 1419 415.9 1420 416.1 1421 416.1 1422 416.1 1423 416.1 1424 416.1 1425 416.1 1426 415.8 1427 415.9 1428 416.0 1429 416.1 1430 416.1 1431 416.1 1432 416.0 1433 415.4 1434 415.4 1435 415.7 1436 415.8 1437 415.9 1438 416.0 1439 416.1 1440 416.1 1441 416.1 1442 416.1 1443 416.0 1444 415.5 1445 415.5 1446 415.8 1447 415.9 1448 416.0 1449 416.1 1450 416.1 1451 416.1 1452 416.1 1453 416.1 1454 416.1 1454 416.9 1453 416.9 1452 416.9 1451 416.9 1450 416.9 1449 416.9 1448 417.0 1447 417.1 1446 417.2 1445 417.5 1444 417.5 1443 417.0 1442 416.9 1441 416.9 1440 416.9 1439 416.9 1438 417.0 1437 417.1 1436 417.2 1435 417.3 1434 417.6 1433 417.6 1432 417.0 1431 416.9 1430 416.9 1429 416.9 1428 417.0 1427 417.1 1426 417.2 1425 416.9 1424 416.9 1423 416.9 1422 416.9 1421 416.9 1420 416.9 1419 417.1 1418 417.3 1417 417.5 1416 417.5 1415 417.0 1414 416.9 1413 416.9 1412 416.9 1411 416.9 1410 417.0 1409 417.1 1408 417.3 1407 417.5 1406 417.4 1405 417.1 1404 416.9 1403 416.9 1402 416.9 1401 416.9 1400 417.1 1399 417.3 1398 416.9Z M996 431.5L996 431.5 997 430.9 998 430.6 999 430.8 1000 430.8 1001 431.0 1002 431.0 1003 431.1 1004 431.2 1005 431.2 1006 431.3 1007 431.4 1008 431.5 1009 431.5 1009 431.5 1008 431.5 1007 431.6 1006 431.7 1005 431.8 1004 431.8 1003 431.9 1002 432.0 1001 432.0 1000 432.2 999 432.2 998 432.4 997 432.1 996 431.5Z M996 440.5L996 440.5 997 439.9 998 439.6 999 439.7 1000 439.8 1001 439.9 1002 440.1 1003 440.1 1004 440.2 1005 440.3 1006 440.3 1007 440.4 1008 440.5 1009 440.5 1009 440.5 1008 440.5 1007 440.6 1006 440.7 1005 440.7 1004 440.8 1003 440.9 1002 440.9 1001 441.1 1000 441.2 999 441.3 998 441.4 997 441.1 996 440.5Z M1455 431.5L1455 431.5 1456 430.9 1457 430.7 1458 430.7 1459 430.7 1460 430.9 1461 431.0 1462 431.0 1463 431.1 1464 431.2 1465 431.3 1466 431.4 1467 431.4 1468 431.5 1469 431.5 1469 431.5 1468 431.5 1467 431.6 1466 431.6 1465 431.7 1464 431.8 1463 431.9 1462 432.0 1461 432.0 1460 432.1 1459 432.3 1458 432.3 1457 432.3 1456 432.1 1455 431.5Z M1455 440.5L1455 440.5 1456 439.9 1457 439.7 1458 439.7 1459 439.7 1460 439.9 1461 440.0 1462 440.1 1463 440.2 1464 440.2 1465 440.3 1466 440.4 1467 440.4 1468 440.5 1469 440.5 1469 440.5 1468 440.5 1467 440.6 1466 440.6 1465 440.7 1464 440.8 1463 440.8 1462 440.9 1461 441.0 1460 441.1 1459 441.3 1458 441.3 1457 441.3 1456 441.1 1455 440.5Z M882 455.5L882 453.7 883 453.8 884 453.3 885 453.2 886 453.0 887 452.6 888 453.2 889 453.3 890 453.9 891 454.3 892 453.7 893 453.3 894 453.6 895 453.3 896 453.5 897 454.0 898 454.2 899 454.4 900 454.4 901 454.0 902 453.7 903 453.7 904 453.9 905 454.3 906 454.5 907 454.4 908 454.0 909 454.0 910 454.1 911 453.9 912 453.7 913 453.5 914 453.4 915 453.8 916 453.8 917 453.6 918 453.9 919 454.1 920 454.2 921 454.1 922 453.8 923 453.7 924 453.7 925 453.0 926 452.7 927 452.9 928 453.2 929 453.4 930 453.4 931 454.0 932 454.1 933 453.9 934 453.4 935 453.4 936 453.6 937 453.9 938 453.9 939 454.1 940 454.4 941 454.3 942 454.1 943 454.2 944 454.0 945 453.8 946 453.6 947 454.1 948 454.0 949 454.0 950 454.1 951 454.5 952 454.1 953 453.2 954 453.3 955 452.8 956 452.8 957 453.4 958 453.4 959 453.8 960 453.9 961 453.6 962 453.3 963 453.3 964 453.1 965 453.3 966 453.9 967 453.8 968 454.4 969 454.0 970 453.5 971 453.2 972 453.7 973 453.6 974 453.8 975 454.4 976 454.4 977 454.2 978 454.0 979 454.0 980 453.9 981 453.7 982 453.9 983 453.9 984 454.1 985 454.3 986 454.6 987 453.8 988 453.6 989 453.3 990 452.9 991 452.7 992 452.6 993 452.8 994 452.9 995 452.8 996 452.9 997 452.7 998 453.1 999 453.2 1000 453.8 1001 453.9 1002 453.9 1003 453.9 1004 453.4 1005 453.3 1006 452.7 1007 453.1 1008 452.7 1009 452.8 1010 453.3 1011 453.5 1012 454.1 1013 454.2 1014 454.0 1015 453.9 1016 453.7 1017 453.8 1018 453.4 1019 453.4 1020 453.7 1021 453.8 1022 453.8 1023 453.8 1024 454.1 1025 454.4 1026 454.4 1027 454.2 1028 454.1 1029 454.1 1030 453.9 1031 453.9 1032 453.4 1033 453.6 1034 453.6 1035 454.1 1036 453.9 1037 454.3 1038 454.4 1039 453.6 1040 453.7 1041 453.5 1042 453.2 1043 452.9 1044 453.2 1045 452.9 1046 452.5 1047 452.6 1048 453.0 1049 453.1 1050 453.2 1051 453.5 1052 453.6 1053 453.9 1054 454.0 1055 454.1 1056 453.6 1057 453.7 1058 453.3 1059 452.9 1060 453.0 1061 452.9 1062 453.0 1063 453.3 1064 453.4 1065 453.5 1066 453.3 1067 453.6 1068 453.7 1069 453.8 1070 454.1 1071 454.0 1072 453.8 1073 453.3 1074 453.4 1075 453.5 1076 453.8 1077 454.2 1078 454.2 1079 453.7 1080 453.6 1081 453.6 1082 452.9 1083 453.3 1084 453.6 1085 453.8 1086 453.7 1087 453.9 1088 454.3 1089 454.2 1090 453.7 1091 453.5 1092 453.5 1093 453.3 1094 453.6 1095 453.5 1096 453.9 1097 454.3 1098 454.5 1099 454.2 1100 454.0 1101 454.1 1102 454.1 1103 454.6 1104 454.1 1105 453.9 1106 453.6 1107 453.4 1108 453.2 1109 453.2 1110 453.0 1111 453.0 1112 453.5 1112 457.5 1111 458.0 1110 458.0 1109 457.8 1108 457.8 1107 457.6 1106 457.4 1105 457.1 1104 456.9 1103 456.4 1102 456.9 1101 456.9 1100 457.0 1099 456.8 1098 456.5 1097 456.7 1096 457.1 1095 457.5 1094 457.4 1093 457.7 1092 457.5 1091 457.5 1090 457.3 1089 456.8 1088 456.7 1087 457.1 1086 457.3 1085 457.2 1084 457.4 1083 457.7 1082 458.1 1081 457.4 1080 457.4 1079 457.3 1078 456.8 1077 456.8 1076 457.2 1075 457.5 1074 457.6 1073 457.7 1072 457.2 1071 457.0 1070 456.9 1069 457.2 1068 457.3 1067 457.4 1066 457.7 1065 457.5 1064 457.6 1063 457.7 1062 458.0 1061 458.1 1060 458.0 1059 458.1 1058 457.7 1057 457.3 1056 457.4 1055 456.9 1054 457.0 1053 457.1 1052 457.4 1051 457.5 1050 457.8 1049 457.9 1048 458.0 1047 458.4 1046 458.5 1045 458.1 1044 457.8 1043 458.1 1042 457.8 1041 457.5 1040 457.3 1039 457.4 1038 456.6 1037 456.7 1036 457.1 1035 456.9 1034 457.4 1033 457.4 1032 457.6 1031 457.1 1030 457.1 1029 456.9 1028 456.9 1027 456.8 1026 456.6 1025 456.6 1024 456.9 1023 457.2 1022 457.2 1021 457.2 1020 457.3 1019 457.6 1018 457.6 1017 457.2 1016 457.3 1015 457.1 1014 457.0 1013 456.8 1012 456.9 1011 457.5 1010 457.7 1009 458.2 1008 458.3 1007 457.9 1006 458.3 1005 457.7 1004 457.6 1003 457.1 1002 457.1 1001 457.1 1000 457.2 999 457.8 998 457.9 997 458.3 996 458.1 995 458.2 994 458.1 993 458.2 992 458.4 991 458.3 990 458.1 989 457.7 988 457.4 987 457.2 986 456.4 985 456.7 984 456.9 983 457.1 982 457.1 981 457.3 980 457.1 979 457.0 978 457.0 977 456.8 976 456.6 975 456.6 974 457.2 973 457.4 972 457.3 971 457.8 970 457.5 969 457.0 968 456.6 967 457.2 966 457.1 965 457.7 964 457.9 963 457.7 962 457.7 961 457.4 960 457.1 959 457.2 958 457.6 957 457.6 956 458.2 955 458.2 954 457.7 953 457.8 952 456.9 951 456.5 950 456.9 949 457.0 948 457.0 947 456.9 946 457.4 945 457.2 944 457.0 943 456.8 942 456.9 941 456.7 940 456.6 939 456.9 938 457.1 937 457.1 936 457.4 935 457.6 934 457.6 933 457.1 932 456.9 931 457.0 930 457.6 929 457.6 928 457.8 927 458.1 926 458.3 925 458.0 924 457.3 923 457.3 922 457.2 921 456.9 920 456.8 919 456.9 918 457.1 917 457.4 916 457.2 915 457.2 914 457.6 913 457.5 912 457.3 911 457.1 910 456.9 909 457.0 908 457.0 907 456.6 906 456.5 905 456.7 904 457.1 903 457.3 902 457.3 901 457.0 900 456.6 899 456.6 898 456.8 897 457.0 896 457.5 895 457.7 894 457.4 893 457.7 892 457.3 891 456.7 890 457.1 889 457.7 888 457.8 887 458.4 886 458.0 885 457.8 884 457.7 883 457.2 882 457.3Z M882 464.5L882 463.4 883 463.3 884 463.2 885 463.4 886 462.9 887 462.9 888 462.9 889 462.7 890 462.9 891 463.0 892 463.2 893 463.2 894 463.3 895 463.3 896 463.3 897 463.4 898 463.1 899 462.7 900 462.5 901 462.0 902 462.0 903 462.2 904 462.1 905 462.1 906 462.8 907 462.8 908 463.3 909 462.9 910 462.9 911 462.9 912 462.9 913 463.5 914 463.4 915 462.9 916 462.8 917 462.6 918 462.5 919 462.2 920 462.5 921 462.4 922 462.6 923 462.7 924 463.1 925 463.2 926 462.7 927 462.7 928 462.4 929 462.2 930 462.3 931 462.3 932 462.1 933 461.6 934 462.1 935 461.6 936 461.9 937 462.6 938 462.6 939 462.5 940 463.0 941 463.1 942 462.5 943 462.2 944 461.7 945 461.9 946 462.3 947 463.1 948 463.5 949 463.4 950 463.3 951 462.8 952 462.7 953 462.7 954 462.6 955 462.8 956 463.1 957 463.3 958 463.4 959 463.4 960 463.4 961 463.1 962 462.9 963 462.4 964 462.8 965 462.5 966 462.6 967 462.9 968 463.3 969 462.8 970 462.9 971 462.5 972 462.2 973 461.8 974 462.0 975 461.6 976 461.8 977 462.2 978 462.0 979 462.6 980 462.5 981 463.0 982 463.2 983 462.5 984 462.6 985 462.4 986 462.9 987 463.0 988 462.7 989 462.1 990 462.0 991 461.6 992 462.0 993 461.8 994 462.1 995 462.9 996 463.4 997 463.3 998 462.8 999 462.7 1000 462.7 1001 462.9 1002 463.2 1003 463.5 1004 462.7 1005 462.6 1006 462.2 1007 462.2 1008 462.1 1009 461.8 1010 461.7 1011 462.2 1012 461.8 1013 462.2 1014 462.3 1015 463.0 1016 462.8 1017 462.7 1018 462.6 1019 462.5 1020 462.5 1021 461.9 1022 461.9 1023 461.7 1024 462.2 1025 462.1 1026 462.1 1027 462.3 1028 462.8 1029 462.8 1030 462.8 1031 463.2 1032 462.7 1033 462.4 1034 462.3 1035 462.1 1036 462.1 1037 462.5 1038 462.8 1039 463.2 1040 463.4 1041 462.8 1042 462.7 1043 462.8 1044 462.2 1045 462.8 1046 462.8 1047 462.8 1048 463.2 1049 463.3 1050 462.9 1051 462.9 1052 462.7 1053 462.4 1054 462.6 1055 462.6 1056 462.6 1057 462.9 1058 463.2 1059 463.5 1060 463.3 1061 462.9 1062 463.1 1063 462.9 1064 462.5 1065 462.5 1066 462.5 1067 462.4 1068 462.4 1069 462.6 1070 462.7 1071 462.7 1072 463.0 1073 463.1 1074 463.4 1075 463.0 1076 462.8 1077 462.3 1078 462.4 1079 462.2 1080 462.2 1081 462.6 1082 463.0 1083 462.9 1084 462.8 1085 462.0 1086 462.0 1087 461.7 1088 461.5 1089 461.7 1090 462.4 1091 462.8 1092 462.7 1093 463.5 1094 463.3 1095 462.9 1096 462.6 1097 463.0 1098 463.4 1099 463.5 1100 463.4 1101 463.4 1102 463.0 1103 463.0 1104 462.9 1105 462.6 1106 462.7 1107 462.4 1108 462.9 1109 462.8 1110 462.8 1111 463.0 1112 463.2 1112 465.8 1111 466.0 1110 466.2 1109 466.2 1108 466.1 1107 466.6 1106 466.3 1105 466.4 1104 466.1 1103 466.0 1102 466.0 1101 465.6 1100 465.6 1099 465.5 1098 465.6 1097 466.0 1096 466.4 1095 466.1 1094 465.7 1093 465.5 1092 466.3 1091 466.2 1090 466.6 1089 467.3 1088 467.5 1087 467.3 1086 467.0 1085 467.0 1084 466.2 1083 466.1 1082 466.0 1081 466.4 1080 466.8 1079 466.8 1078 466.6 1077 466.7 1076 466.2 1075 466.0 1074 465.6 1073 465.9 1072 466.0 1071 466.3 1070 466.3 1069 466.4 1068 466.6 1067 466.6 1066 466.5 1065 466.5 1064 466.5 1063 466.1 1062 465.9 1061 466.1 1060 465.7 1059 465.5 1058 465.8 1057 466.1 1056 466.4 1055 466.4 1054 466.4 1053 466.6 1052 466.3 1051 466.1 1050 466.1 1049 465.7 1048 465.8 1047 466.2 1046 466.2 1045 466.2 1044 466.8 1043 466.2 1042 466.3 1041 466.2 1040 465.6 1039 465.8 1038 466.2 1037 466.5 1036 466.9 1035 466.9 1034 466.7 1033 466.6 1032 466.3 1031 465.8 1030 466.2 1029 466.2 1028 466.2 1027 466.7 1026 466.9 1025 466.9 1024 466.8 1023 467.3 1022 467.1 1021 467.1 1020 466.5 1019 466.5 1018 466.4 1017 466.3 1016 466.2 1015 466.0 1014 466.7 1013 466.8 1012 467.2 1011 466.8 1010 467.3 1009 467.2 1008 466.9 1007 466.8 1006 466.8 1005 466.4 1004 466.3 1003 465.5 1002 465.8 1001 466.1 1000 466.3 999 466.3 998 466.2 997 465.7 996 465.6 995 466.1 994 466.9 993 467.2 992 467.0 991 467.4 990 467.0 989 466.9 988 466.3 987 466.0 986 466.1 985 466.6 984 466.4 983 466.5 982 465.8 981 466.0 980 466.5 979 466.4 978 467.0 977 466.8 976 467.2 975 467.4 974 467.0 973 467.2 972 466.8 971 466.5 970 466.1 969 466.2 968 465.7 967 466.1 966 466.4 965 466.5 964 466.2 963 466.6 962 466.1 961 465.9 960 465.6 959 465.6 958 465.6 957 465.7 956 465.9 955 466.2 954 466.4 953 466.3 952 466.3 951 466.2 950 465.7 949 465.6 948 465.5 947 465.9 946 466.7 945 467.1 944 467.3 943 466.8 942 466.5 941 465.9 940 466.0 939 466.5 938 466.4 937 466.4 936 467.1 935 467.4 934 466.9 933 467.4 932 466.9 931 466.7 930 466.7 929 466.8 928 466.6 927 466.3 926 466.3 925 465.8 924 465.9 923 466.3 922 466.4 921 466.6 920 466.5 919 466.8 918 466.5 917 466.4 916 466.2 915 466.1 914 465.6 913 465.5 912 466.1 911 466.1 910 466.1 909 466.1 908 465.7 907 466.2 906 466.2 905 466.9 904 466.9 903 466.8 902 467.0 901 467.0 900 466.5 899 466.3 898 465.9 897 465.6 896 465.7 895 465.7 894 465.7 893 465.8 892 465.8 891 466.0 890 466.1 889 466.3 888 466.1 887 466.1 886 466.1 885 465.6 884 465.8 883 465.7 882 465.6Z M1226 455.5L1226 454.6 1227 454.4 1228 454.4 1229 454.2 1230 454.1 1231 453.9 1232 454.0 1233 453.9 1234 454.0 1235 453.8 1236 453.8 1237 454.0 1238 454.3 1239 454.2 1240 454.4 1241 454.6 1242 454.0 1243 453.2 1244 453.2 1245 452.6 1246 452.6 1247 452.8 1248 453.6 1249 453.7 1250 454.2 1251 453.9 1252 453.9 1253 453.4 1254 453.5 1255 453.1 1256 453.4 1257 453.5 1258 453.7 1259 453.8 1260 454.1 1261 454.3 1262 454.2 1263 454.1 1264 453.8 1265 453.5 1266 453.7 1267 453.2 1268 453.8 1269 453.9 1270 454.1 1271 454.4 1272 453.7 1273 453.8 1274 453.2 1275 453.1 1276 453.4 1277 453.3 1278 452.4 1279 452.6 1280 453.0 1281 453.2 1282 453.3 1283 453.4 1284 453.2 1285 453.7 1286 454.0 1287 454.1 1288 453.5 1289 453.4 1290 453.0 1291 452.9 1292 452.6 1293 452.7 1294 452.8 1295 453.4 1296 453.3 1297 453.6 1298 453.8 1299 454.2 1300 454.0 1301 453.6 1302 453.2 1303 453.3 1304 453.1 1305 453.0 1306 452.8 1307 453.1 1308 453.6 1309 453.8 1310 453.7 1311 453.9 1312 453.9 1313 453.4 1314 453.0 1315 452.6 1316 453.0 1317 453.2 1318 453.2 1319 454.1 1320 454.2 1321 454.3 1322 454.2 1323 453.7 1324 453.5 1325 453.4 1326 453.7 1327 453.4 1328 453.3 1329 453.7 1330 453.8 1331 453.8 1332 454.0 1333 454.1 1334 454.0 1335 454.3 1336 453.9 1337 454.0 1338 453.8 1339 453.7 1340 453.7 1341 453.4 1341 457.6 1340 457.3 1339 457.3 1338 457.2 1337 457.0 1336 457.1 1335 456.7 1334 457.0 1333 456.9 1332 457.0 1331 457.2 1330 457.2 1329 457.3 1328 457.7 1327 457.6 1326 457.3 1325 457.6 1324 457.5 1323 457.3 1322 456.8 1321 456.7 1320 456.8 1319 456.9 1318 457.8 1317 457.8 1316 458.0 1315 458.4 1314 458.0 1313 457.6 1312 457.1 1311 457.1 1310 457.3 1309 457.2 1308 457.4 1307 457.9 1306 458.2 1305 458.0 1304 457.9 1303 457.7 1302 457.8 1301 457.4 1300 457.0 1299 456.8 1298 457.2 1297 457.4 1296 457.7 1295 457.6 1294 458.2 1293 458.3 1292 458.4 1291 458.1 1290 458.0 1289 457.6 1288 457.5 1287 456.9 1286 457.0 1285 457.3 1284 457.8 1283 457.6 1282 457.7 1281 457.8 1280 458.0 1279 458.4 1278 458.6 1277 457.7 1276 457.6 1275 457.9 1274 457.8 1273 457.2 1272 457.3 1271 456.6 1270 456.9 1269 457.1 1268 457.2 1267 457.8 1266 457.3 1265 457.5 1264 457.2 1263 456.9 1262 456.8 1261 456.7 1260 456.9 1259 457.2 1258 457.3 1257 457.5 1256 457.6 1255 457.9 1254 457.5 1253 457.6 1252 457.1 1251 457.1 1250 456.8 1249 457.3 1248 457.4 1247 458.2 1246 458.4 1245 458.4 1244 457.8 1243 457.8 1242 457.0 1241 456.4 1240 456.6 1239 456.8 1238 456.7 1237 457.0 1236 457.2 1235 457.2 1234 457.0 1233 457.1 1232 457.0 1231 457.1 1230 456.9 1229 456.8 1228 456.6 1227 456.6 1226 456.4Z M1226 464.5L1226 462.9 1227 462.6 1228 462.5 1229 462.1 1230 461.6 1231 461.7 1232 461.7 1233 462.2 1234 462.5 1235 462.7 1236 462.8 1237 463.3 1238 463.4 1239 463.2 1240 463.2 1241 463.0 1242 463.0 1243 463.0 1244 463.0 1245 462.6 1246 462.9 1247 462.8 1248 463.2 1249 463.1 1250 463.2 1251 463.4 1252 463.6 1253 462.9 1254 462.7 1255 462.8 1256 462.4 1257 462.4 1258 462.0 1259 462.4 1260 462.2 1261 462.3 1262 461.9 1263 461.9 1264 462.2 1265 462.6 1266 462.5 1267 462.7 1268 462.9 1269 463.0 1270 462.8 1271 462.6 1272 462.0 1273 461.7 1274 461.5 1275 462.0 1276 462.2 1277 462.4 1278 462.7 1279 462.9 1280 462.9 1281 462.9 1282 462.5 1283 462.2 1284 461.9 1285 461.8 1286 462.3 1287 462.5 1288 462.9 1289 462.8 1290 463.2 1291 463.1 1292 462.9 1293 462.3 1294 461.8 1295 461.9 1296 462.5 1297 462.9 1298 463.0 1299 463.1 1300 462.6 1301 462.6 1302 462.5 1303 461.8 1304 461.8 1305 461.9 1306 462.3 1307 462.9 1308 462.9 1309 463.0 1310 463.1 1311 462.6 1312 462.5 1313 462.8 1314 462.7 1315 462.2 1316 462.2 1317 462.7 1318 462.7 1319 462.7 1320 463.1 1321 463.0 1322 463.1 1323 462.6 1324 462.5 1325 462.5 1326 462.5 1327 461.9 1328 462.3 1329 461.9 1330 462.5 1331 462.3 1332 462.7 1333 462.7 1334 463.1 1335 462.9 1336 462.7 1337 462.6 1338 461.8 1339 461.8 1340 461.7 1341 462.2 1341 466.8 1340 467.3 1339 467.2 1338 467.2 1337 466.4 1336 466.3 1335 466.1 1334 465.9 1333 466.3 1332 466.3 1331 466.7 1330 466.5 1329 467.1 1328 466.7 1327 467.1 1326 466.5 1325 466.5 1324 466.5 1323 466.4 1322 465.9 1321 466.0 1320 465.9 1319 466.3 1318 466.3 1317 466.3 1316 466.8 1315 466.8 1314 466.3 1313 466.2 1312 466.5 1311 466.4 1310 465.9 1309 466.0 1308 466.1 1307 466.1 1306 466.7 1305 467.1 1304 467.2 1303 467.2 1302 466.5 1301 466.4 1300 466.4 1299 465.9 1298 466.0 1297 466.1 1296 466.5 1295 467.1 1294 467.2 1293 466.7 1292 466.1 1291 465.9 1290 465.8 1289 466.2 1288 466.1 1287 466.5 1286 466.7 1285 467.2 1284 467.1 1283 466.8 1282 466.5 1281 466.1 1280 466.1 1279 466.1 1278 466.3 1277 466.6 1276 466.8 1275 467.0 1274 467.5 1273 467.3 1272 467.0 1271 466.4 1270 466.2 1269 466.0 1268 466.1 1267 466.3 1266 466.5 1265 466.4 1264 466.8 1263 467.1 1262 467.1 1261 466.7 1260 466.8 1259 466.6 1258 467.0 1257 466.6 1256 466.6 1255 466.2 1254 466.3 1253 466.1 1252 465.4 1251 465.6 1250 465.8 1249 465.9 1248 465.8 1247 466.2 1246 466.1 1245 466.4 1244 466.0 1243 466.0 1242 466.0 1241 466.0 1240 465.8 1239 465.8 1238 465.6 1237 465.7 1236 466.2 1235 466.3 1234 466.5 1233 466.8 1232 467.3 1231 467.3 1230 467.4 1229 466.9 1228 466.5 1227 466.4 1226 466.1Z M1455 455.5L1455 454.2 1456 453.9 1457 453.4 1458 453.4 1459 453.0 1460 453.3 1461 453.1 1462 453.0 1463 452.8 1464 453.3 1465 453.3 1466 453.3 1467 453.7 1468 453.9 1469 454.1 1470 454.4 1471 453.7 1472 453.3 1473 453.8 1474 453.7 1475 454.2 1476 453.8 1477 453.9 1478 453.8 1479 453.4 1480 453.1 1481 453.3 1482 452.8 1483 452.7 1484 453.3 1485 453.2 1486 453.3 1487 453.6 1488 453.9 1489 454.1 1490 453.9 1491 453.6 1492 452.7 1493 452.8 1494 453.5 1495 453.9 1496 453.8 1497 453.5 1498 453.2 1499 453.2 1500 453.0 1501 453.0 1502 452.8 1503 453.3 1504 453.5 1505 453.9 1506 454.0 1507 453.4 1508 453.4 1509 453.0 1510 453.2 1511 452.9 1512 453.1 1513 452.9 1514 453.3 1515 453.2 1516 453.2 1517 453.7 1518 453.8 1519 453.7 1520 454.1 1521 454.1 1522 453.7 1523 453.7 1524 453.3 1525 453.3 1526 453.1 1527 452.9 1528 453.5 1529 453.7 1530 453.7 1531 453.8 1532 454.0 1533 454.2 1534 454.1 1535 454.0 1536 453.8 1537 453.6 1538 453.5 1539 453.2 1540 453.2 1541 453.5 1542 453.4 1543 453.6 1544 453.8 1545 453.6 1546 453.9 1547 454.3 1548 454.3 1549 453.8 1550 453.8 1551 453.2 1552 453.2 1553 453.9 1554 453.9 1555 454.4 1556 454.3 1557 453.8 1558 453.5 1559 453.6 1560 454.1 1561 454.4 1562 453.7 1563 453.4 1564 452.7 1565 452.6 1566 453.5 1567 453.9 1568 454.3 1569 454.0 1570 453.8 1570 457.2 1569 457.0 1568 456.7 1567 457.1 1566 457.5 1565 458.4 1564 458.3 1563 457.6 1562 457.3 1561 456.6 1560 456.9 1559 457.4 1558 457.5 1557 457.2 1556 456.7 1555 456.6 1554 457.1 1553 457.1 1552 457.8 1551 457.8 1550 457.2 1549 457.2 1548 456.7 1547 456.7 1546 457.1 1545 457.4 1544 457.2 1543 457.4 1542 457.6 1541 457.5 1540 457.8 1539 457.8 1538 457.5 1537 457.4 1536 457.2 1535 457.0 1534 456.9 1533 456.8 1532 457.0 1531 457.2 1530 457.3 1529 457.3 1528 457.5 1527 458.1 1526 457.9 1525 457.7 1524 457.7 1523 457.3 1522 457.3 1521 456.9 1520 456.9 1519 457.3 1518 457.2 1517 457.3 1516 457.8 1515 457.8 1514 457.7 1513 458.1 1512 457.9 1511 458.1 1510 457.8 1509 458.0 1508 457.6 1507 457.6 1506 457.0 1505 457.1 1504 457.5 1503 457.7 1502 458.2 1501 458.0 1500 458.0 1499 457.8 1498 457.8 1497 457.5 1496 457.2 1495 457.1 1494 457.5 1493 458.2 1492 458.3 1491 457.4 1490 457.1 1489 456.9 1488 457.1 1487 457.4 1486 457.7 1485 457.8 1484 457.7 1483 458.3 1482 458.2 1481 457.7 1480 457.9 1479 457.6 1478 457.2 1477 457.1 1476 457.2 1475 456.8 1474 457.3 1473 457.2 1472 457.7 1471 457.3 1470 456.6 1469 456.9 1468 457.1 1467 457.3 1466 457.7 1465 457.7 1464 457.7 1463 458.2 1462 458.0 1461 457.9 1460 457.7 1459 458.0 1458 457.6 1457 457.6 1456 457.1 1455 456.8Z M1455 464.5L1455 462.6 1456 462.4 1457 461.8 1458 461.5 1459 462.0 1460 461.8 1461 462.7 1462 462.7 1463 463.0 1464 462.6 1465 462.5 1466 461.7 1467 461.6 1468 461.6 1469 461.9 1470 462.2 1471 462.1 1472 462.6 1473 462.8 1474 463.2 1475 463.1 1476 462.7 1477 462.3 1478 462.5 1479 462.9 1480 463.0 1481 463.4 1482 463.2 1483 463.0 1484 462.8 1485 462.6 1486 463.0 1487 463.2 1488 463.4 1489 463.1 1490 462.7 1491 462.5 1492 462.8 1493 463.0 1494 463.5 1495 462.8 1496 462.5 1497 462.3 1498 462.0 1499 461.7 1500 461.9 1501 462.3 1502 462.2 1503 462.5 1504 463.0 1505 462.2 1506 462.1 1507 462.0 1508 462.1 1509 461.7 1510 462.3 1511 462.9 1512 463.5 1513 463.4 1514 463.3 1515 462.9 1516 462.9 1517 463.0 1518 463.0 1519 462.9 1520 462.9 1521 463.1 1522 463.3 1523 463.4 1524 463.3 1525 463.0 1526 462.7 1527 462.6 1528 462.8 1529 463.1 1530 463.0 1531 463.4 1532 463.2 1533 462.8 1534 462.2 1535 462.0 1536 462.9 1537 463.2 1538 463.4 1539 463.4 1540 463.1 1541 462.8 1542 463.1 1543 462.7 1544 462.7 1545 462.6 1546 462.9 1547 462.8 1548 462.9 1549 463.4 1550 463.5 1551 462.7 1552 462.6 1553 462.1 1554 462.1 1555 461.6 1556 462.3 1557 462.0 1558 462.3 1559 462.9 1560 463.4 1561 463.5 1562 463.3 1563 463.3 1564 463.0 1565 463.1 1566 463.0 1567 462.8 1568 462.7 1569 463.2 1570 463.0 1570 466.0 1569 465.8 1568 466.3 1567 466.2 1566 466.0 1565 465.9 1564 466.0 1563 465.7 1562 465.7 1561 465.5 1560 465.6 1559 466.1 1558 466.7 1557 467.0 1556 466.7 1555 467.4 1554 466.9 1553 466.9 1552 466.4 1551 466.3 1550 465.5 1549 465.6 1548 466.1 1547 466.2 1546 466.1 1545 466.4 1544 466.3 1543 466.3 1542 465.9 1541 466.2 1540 465.9 1539 465.6 1538 465.6 1537 465.8 1536 466.1 1535 467.0 1534 466.8 1533 466.2 1532 465.8 1531 465.6 1530 466.0 1529 465.9 1528 466.2 1527 466.4 1526 466.3 1525 466.0 1524 465.7 1523 465.6 1522 465.7 1521 465.9 1520 466.1 1519 466.1 1518 466.0 1517 466.0 1516 466.1 1515 466.1 1514 465.7 1513 465.6 1512 465.5 1511 466.1 1510 466.7 1509 467.3 1508 466.9 1507 467.0 1506 466.9 1505 466.8 1504 466.0 1503 466.5 1502 466.8 1501 466.7 1500 467.1 1499 467.3 1498 467.0 1497 466.7 1496 466.5 1495 466.2 1494 465.5 1493 466.0 1492 466.2 1491 466.5 1490 466.3 1489 465.9 1488 465.6 1487 465.8 1486 466.0 1485 466.4 1484 466.2 1483 466.0 1482 465.8 1481 465.6 1480 466.0 1479 466.1 1478 466.5 1477 466.7 1476 466.3 1475 465.9 1474 465.8 1473 466.2 1472 466.4 1471 466.9 1470 466.8 1469 467.1 1468 467.4 1467 467.4 1466 467.3 1465 466.5 1464 466.4 1463 466.0 1462 466.3 1461 466.3 1460 467.2 1459 467.0 1458 467.5 1457 467.2 1456 466.6 1455 466.4Z M658 527.5L658 526.3 659 526.2 660 526.0 661 526.0 662 525.8 663 525.9 664 526.2 665 526.3 666 526.5 667 526.3 668 526.2 669 526.1 670 525.8 671 525.9 672 525.5 673 525.3 674 525.7 675 525.6 676 525.7 677 526.1 678 526.0 679 526.1 680 526.1 681 525.9 682 526.0 683 525.3 684 525.7 685 525.4 686 525.3 687 525.2 688 525.4 689 525.6 690 525.9 691 526.0 692 525.9 693 526.0 694 525.6 695 525.1 696 524.9 697 525.3 698 525.3 699 525.3 700 525.7 701 525.8 702 526.2 703 526.4 704 526.4 705 526.2 706 526.1 707 525.7 708 525.9 709 526.1 710 525.7 711 525.9 712 526.4 713 526.2 714 526.5 715 526.1 716 525.9 717 526.1 718 526.0 719 525.8 720 525.8 721 525.6 722 525.6 723 525.6 724 525.5 725 525.7 726 525.9 727 525.5 728 525.7 729 525.9 730 526.3 731 526.4 732 526.3 733 526.1 734 525.9 735 525.7 736 525.7 737 525.6 738 525.7 739 525.5 740 525.4 741 525.6 742 525.8 743 525.9 744 526.2 745 526.2 746 526.1 747 525.8 748 525.4 749 525.7 750 525.3 751 525.3 752 525.0 753 524.8 754 525.3 755 525.2 756 525.8 757 525.6 758 526.1 759 526.4 760 525.9 761 526.0 762 525.6 763 525.8 764 525.7 765 525.4 766 525.8 767 526.1 768 526.1 769 526.3 769 528.7 768 528.9 767 528.9 766 529.2 765 529.6 764 529.3 763 529.2 762 529.4 761 529.0 760 529.1 759 528.6 758 528.9 757 529.4 756 529.2 755 529.8 754 529.7 753 530.2 752 530.0 751 529.7 750 529.7 749 529.3 748 529.6 747 529.2 746 528.9 745 528.8 744 528.8 743 529.1 742 529.2 741 529.4 740 529.6 739 529.5 738 529.3 737 529.4 736 529.3 735 529.3 734 529.1 733 528.9 732 528.7 731 528.6 730 528.7 729 529.1 728 529.3 727 529.5 726 529.1 725 529.3 724 529.5 723 529.4 722 529.4 721 529.4 720 529.2 719 529.2 718 529.0 717 528.9 716 529.1 715 528.9 714 528.5 713 528.8 712 528.6 711 529.1 710 529.3 709 528.9 708 529.1 707 529.3 706 528.9 705 528.8 704 528.6 703 528.6 702 528.8 701 529.2 700 529.3 699 529.7 698 529.7 697 529.7 696 530.1 695 529.9 694 529.4 693 529.0 692 529.1 691 529.0 690 529.1 689 529.4 688 529.6 687 529.8 686 529.7 685 529.6 684 529.3 683 529.7 682 529.0 681 529.1 680 528.9 679 528.9 678 529.0 677 528.9 676 529.3 675 529.4 674 529.3 673 529.7 672 529.5 671 529.1 670 529.2 669 528.9 668 528.8 667 528.7 666 528.5 665 528.7 664 528.8 663 529.1 662 529.2 661 529.0 660 529.0 659 528.8 658 528.7Z M658 536.5L658 535.1 659 534.8 660 534.4 661 534.5 662 534.5 663 535.1 664 535.4 665 534.9 666 534.8 667 534.6 668 534.4 669 534.2 670 534.3 671 533.9 672 533.9 673 533.8 674 534.5 675 534.2 676 534.8 677 534.5 678 534.8 679 535.0 680 535.4 681 535.5 682 535.3 683 535.3 684 535.0 685 534.9 686 535.0 687 534.9 688 535.0 689 535.0 690 535.1 691 535.1 692 535.5 693 535.3 694 535.4 695 535.4 696 535.2 697 535.1 698 534.8 699 534.6 700 534.8 701 534.3 702 534.8 703 534.6 704 534.8 705 535.0 706 535.4 707 534.8 708 535.0 709 534.7 710 534.1 711 534.3 712 534.0 713 534.2 714 534.1 715 534.4 716 534.4 717 534.7 718 535.0 719 535.3 720 535.3 721 534.9 722 534.9 723 534.8 724 534.9 725 534.7 726 534.8 727 534.8 728 534.9 729 534.9 730 535.1 731 535.4 732 534.9 733 534.9 734 534.6 735 534.4 736 534.6 737 534.3 738 534.2 739 534.5 740 534.5 741 534.7 742 534.6 743 535.0 744 535.2 745 535.0 746 535.0 747 534.7 748 534.4 749 534.3 750 534.4 751 534.3 752 534.0 753 534.1 754 534.4 755 534.2 756 534.6 757 535.0 758 535.0 759 535.4 760 535.3 761 534.9 762 534.6 763 535.0 764 535.4 765 535.4 766 535.3 767 535.0 768 534.8 769 534.8 769 538.2 768 538.2 767 538.0 766 537.7 765 537.6 764 537.6 763 538.0 762 538.4 761 538.1 760 537.7 759 537.6 758 538.0 757 538.0 756 538.4 755 538.8 754 538.6 753 538.9 752 539.0 751 538.7 750 538.6 749 538.7 748 538.6 747 538.3 746 538.0 745 538.0 744 537.8 743 538.0 742 538.4 741 538.3 740 538.5 739 538.5 738 538.8 737 538.7 736 538.4 735 538.6 734 538.4 733 538.1 732 538.1 731 537.6 730 537.9 729 538.1 728 538.1 727 538.2 726 538.2 725 538.3 724 538.1 723 538.2 722 538.1 721 538.1 720 537.7 719 537.7 718 538.0 717 538.3 716 538.6 715 538.6 714 538.9 713 538.8 712 539.0 711 538.7 710 538.9 709 538.3 708 538.0 707 538.2 706 537.6 705 538.0 704 538.2 703 538.4 702 538.2 701 538.7 700 538.2 699 538.4 698 538.2 697 537.9 696 537.8 695 537.6 694 537.6 693 537.7 692 537.5 691 537.9 690 537.9 689 538.0 688 538.0 687 538.1 686 538.0 685 538.1 684 538.0 683 537.7 682 537.7 681 537.5 680 537.6 679 538.0 678 538.2 677 538.5 676 538.2 675 538.8 674 538.5 673 539.2 672 539.1 671 539.1 670 538.7 669 538.8 668 538.6 667 538.4 666 538.2 665 538.1 664 537.6 663 537.9 662 538.5 661 538.5 660 538.6 659 538.2 658 537.9Z M769 551.5L769 549.9 770 549.7 771 549.4 772 548.7 773 549.2 774 549.4 775 549.7 776 549.9 777 549.7 778 549.8 779 549.7 780 549.0 781 549.1 782 548.7 783 548.8 784 549.1 785 549.2 786 549.4 787 549.1 788 549.6 789 549.9 790 550.1 791 549.7 792 549.4 793 549.0 794 549.3 795 549.2 796 548.9 797 549.0 798 549.2 799 549.1 800 549.6 801 549.9 802 549.6 803 550.1 804 549.7 805 549.7 806 549.3 807 549.6 808 549.4 809 549.0 810 549.5 811 549.5 812 549.4 813 549.7 814 549.8 815 550.2 816 550.3 817 550.2 818 549.5 819 549.5 820 549.5 821 549.8 822 549.8 823 550.3 824 550.5 825 550.1 826 550.1 827 550.1 828 550.0 829 549.8 830 549.8 831 549.8 832 549.5 833 549.7 834 549.9 835 549.7 836 550.1 837 550.2 838 550.1 839 550.5 840 549.8 841 549.9 842 549.6 843 549.5 844 549.3 845 549.0 846 548.9 847 549.2 848 549.2 849 549.5 850 549.3 851 549.7 852 549.8 853 549.9 854 549.3 855 549.2 856 549.1 857 548.8 858 549.1 859 548.8 860 549.1 861 549.8 862 549.7 863 550.3 864 550.3 865 550.2 866 549.8 867 549.7 868 549.5 869 549.8 870 549.9 871 549.7 872 550.2 873 550.0 874 550.3 875 550.1 876 550.2 877 549.9 878 549.4 879 549.5 880 549.5 881 549.4 882 549.8 883 549.9 884 550.2 885 549.7 886 549.2 887 548.4 888 548.2 889 548.0 890 549.1 891 548.9 892 549.6 893 550.0 894 550.0 895 549.9 896 549.2 897 549.1 898 549.0 899 549.5 900 549.6 901 549.7 902 549.8 903 549.9 904 550.1 905 549.8 906 549.1 907 548.9 908 549.1 909 549.4 910 549.9 911 549.7 912 549.3 913 549.5 914 548.9 915 548.7 916 548.4 917 548.4 918 548.8 919 548.9 920 549.0 921 549.4 922 550.0 923 550.0 924 549.9 925 550.0 926 549.5 927 549.5 928 549.2 929 549.2 930 549.7 931 550.0 932 549.8 933 550.2 934 549.6 935 549.3 936 549.1 937 549.0 938 549.1 939 548.4 940 548.8 941 548.9 942 548.9 943 549.7 944 549.6 945 549.3 946 548.8 947 548.7 948 548.7 949 548.7 950 549.7 951 550.3 952 550.0 953 549.7 954 549.7 955 549.4 956 549.6 957 549.4 958 549.6 959 550.0 960 550.3 961 549.9 962 549.5 963 549.2 964 549.4 965 548.8 966 548.7 967 548.9 968 548.5 969 549.1 970 549.0 971 548.8 972 549.2 973 549.7 974 549.5 975 549.8 976 549.5 977 549.2 978 549.1 979 549.0 980 548.6 981 548.7 982 548.5 983 548.9 984 549.4 985 549.5 986 549.7 987 550.1 988 550.1 989 549.7 990 549.2 991 549.3 992 549.1 993 549.4 994 549.4 995 549.8 996 549.8 997 549.9 997 553.1 996 553.2 995 553.2 994 553.6 993 553.6 992 553.9 991 553.7 990 553.8 989 553.3 988 552.9 987 552.9 986 553.3 985 553.5 984 553.6 983 554.1 982 554.5 981 554.3 980 554.4 979 554.0 978 553.9 977 553.8 976 553.5 975 553.2 974 553.5 973 553.3 972 553.8 971 554.2 970 554.0 969 553.9 968 554.5 967 554.1 966 554.3 965 554.2 964 553.6 963 553.8 962 553.5 961 553.1 960 552.7 959 553.0 958 553.4 957 553.6 956 553.4 955 553.6 954 553.3 953 553.3 952 553.0 951 552.7 950 553.3 949 554.3 948 554.3 947 554.3 946 554.2 945 553.7 944 553.4 943 553.3 942 554.1 941 554.1 940 554.2 939 554.6 938 553.9 937 554.0 936 553.9 935 553.7 934 553.4 933 552.8 932 553.2 931 553.0 930 553.3 929 553.8 928 553.8 927 553.5 926 553.5 925 553.0 924 553.1 923 553.0 922 553.0 921 553.6 920 554.0 919 554.1 918 554.2 917 554.6 916 554.6 915 554.3 914 554.1 913 553.5 912 553.7 911 553.3 910 553.1 909 553.6 908 553.9 907 554.1 906 553.9 905 553.2 904 552.9 903 553.1 902 553.2 901 553.3 900 553.4 899 553.5 898 554.0 897 553.9 896 553.8 895 553.1 894 553.0 893 553.0 892 553.4 891 554.1 890 553.9 889 555.0 888 554.8 887 554.6 886 553.8 885 553.3 884 552.8 883 553.1 882 553.2 881 553.6 880 553.5 879 553.5 878 553.6 877 553.1 876 552.8 875 552.9 874 552.7 873 553.0 872 552.8 871 553.3 870 553.1 869 553.2 868 553.5 867 553.3 866 553.2 865 552.8 864 552.7 863 552.7 862 553.3 861 553.2 860 553.9 859 554.2 858 553.9 857 554.2 856 553.9 855 553.8 854 553.7 853 553.1 852 553.2 851 553.3 850 553.7 849 553.5 848 553.8 847 553.8 846 554.1 845 554.0 844 553.7 843 553.5 842 553.4 841 553.1 840 553.2 839 552.5 838 552.9 837 552.8 836 552.9 835 553.3 834 553.1 833 553.3 832 553.5 831 553.2 830 553.2 829 553.2 828 553.0 827 552.9 826 552.9 825 552.9 824 552.5 823 552.7 822 553.2 821 553.2 820 553.5 819 553.5 818 553.5 817 552.8 816 552.7 815 552.8 814 553.2 813 553.3 812 553.6 811 553.5 810 553.5 809 554.0 808 553.6 807 553.4 806 553.7 805 553.3 804 553.3 803 552.9 802 553.4 801 553.1 800 553.4 799 553.9 798 553.8 797 554.0 796 554.1 795 553.8 794 553.7 793 554.0 792 553.6 791 553.3 790 552.9 789 553.1 788 553.4 787 553.9 786 553.6 785 553.8 784 553.9 783 554.2 782 554.3 781 553.9 780 554.0 779 553.3 778 553.2 777 553.3 776 553.1 775 553.3 774 553.6 773 553.8 772 554.3 771 553.6 770 553.3 769 553.1Z M769 560.5L769 559.2 770 559.2 771 558.7 772 558.6 773 558.5 774 558.2 775 558.3 776 558.6 777 558.7 778 558.9 779 559.1 780 558.9 781 559.1 782 558.9 783 558.8 784 558.3 785 558.2 786 558.4 787 558.0 788 558.4 789 558.5 790 558.8 791 559.0 792 559.2 793 558.8 794 558.7 795 558.3 796 558.4 797 558.5 798 558.2 799 558.4 800 558.5 801 558.8 802 558.9 803 558.9 804 558.8 805 558.5 806 558.0 807 558.2 808 557.9 809 558.5 810 558.6 811 558.7 812 558.3 813 558.0 814 557.7 815 557.3 816 557.9 817 557.9 818 558.3 819 559.1 820 558.7 821 558.6 822 558.5 823 558.4 824 558.2 825 557.9 826 557.8 827 557.9 828 558.5 829 558.6 830 558.7 831 558.8 832 559.1 833 558.9 834 558.6 835 558.4 836 558.1 837 557.9 838 558.3 839 558.4 840 558.6 841 559.1 842 558.8 843 558.1 844 557.7 845 557.8 846 558.3 847 558.7 848 559.2 849 558.6 850 558.8 851 558.5 852 558.2 853 558.5 854 559.0 855 559.1 856 558.7 857 558.7 858 558.5 859 558.2 860 558.1 861 558.0 862 557.6 863 558.3 864 558.2 865 558.8 866 558.7 867 559.3 868 559.3 869 559.0 870 558.9 871 558.9 872 558.7 873 558.8 874 558.5 875 558.5 876 558.8 877 558.7 878 559.0 879 558.9 880 558.9 881 559.2 882 559.2 883 558.6 884 558.4 885 558.0 886 557.6 887 557.9 888 558.1 889 559.0 890 558.9 891 558.3 892 558.5 893 558.2 894 557.9 895 558.0 896 557.4 897 557.8 898 557.9 899 557.8 900 558.2 901 558.2 902 558.6 903 558.7 904 558.3 905 558.5 906 557.8 907 557.9 908 557.8 909 558.1 910 558.4 911 559.1 912 558.9 913 558.7 914 558.4 915 558.0 916 558.1 917 558.0 918 558.1 919 558.1 920 558.7 921 558.4 922 559.0 923 559.2 924 558.9 925 558.8 926 558.8 927 558.7 928 558.6 929 558.3 930 558.8 931 558.8 932 559.1 933 559.1 934 558.6 935 558.5 936 557.7 937 557.6 938 557.8 939 557.5 940 557.9 941 557.2 942 557.8 943 558.1 944 558.6 945 558.5 946 559.1 947 558.8 948 558.6 949 558.4 950 558.8 951 558.7 952 559.3 953 559.0 954 558.7 955 558.7 956 558.6 957 558.1 958 558.3 959 557.7 960 557.7 961 558.1 962 558.1 963 557.9 964 558.5 965 558.6 966 558.7 967 559.0 968 558.8 969 558.9 970 558.6 971 558.0 972 558.1 973 558.3 974 558.4 975 558.8 976 558.9 977 559.0 978 558.5 979 558.2 980 558.0 981 558.4 982 558.2 983 557.9 984 557.8 985 558.2 986 557.9 987 558.1 988 558.6 989 558.5 990 559.0 991 559.0 992 558.6 993 558.4 994 558.1 995 558.5 996 558.7 997 559.2 997 561.8 996 562.3 995 562.5 994 562.9 993 562.6 992 562.4 991 562.0 990 562.0 989 562.5 988 562.4 987 562.9 986 563.1 985 562.8 984 563.2 983 563.1 982 562.8 981 562.6 980 563.0 979 562.8 978 562.5 977 562.0 976 562.1 975 562.2 974 562.6 973 562.7 972 562.9 971 563.0 970 562.4 969 562.1 968 562.2 967 562.0 966 562.3 965 562.4 964 562.5 963 563.1 962 562.9 961 562.9 960 563.3 959 563.3 958 562.7 957 562.9 956 562.4 955 562.3 954 562.3 953 562.0 952 561.7 951 562.3 950 562.2 949 562.6 948 562.4 947 562.2 946 561.9 945 562.5 944 562.4 943 562.9 942 563.2 941 563.8 940 563.1 939 563.5 938 563.2 937 563.4 936 563.3 935 562.5 934 562.4 933 561.9 932 561.9 931 562.2 930 562.2 929 562.7 928 562.4 927 562.3 926 562.2 925 562.2 924 562.1 923 561.8 922 562.0 921 562.6 920 562.3 919 562.9 918 562.9 917 563.0 916 562.9 915 563.0 914 562.6 913 562.3 912 562.1 911 561.9 910 562.6 909 562.9 908 563.2 907 563.1 906 563.2 905 562.5 904 562.7 903 562.3 902 562.4 901 562.8 900 562.8 899 563.2 898 563.1 897 563.2 896 563.6 895 563.0 894 563.1 893 562.8 892 562.5 891 562.7 890 562.1 889 562.0 888 562.9 887 563.1 886 563.4 885 563.0 884 562.6 883 562.4 882 561.8 881 561.8 880 562.1 879 562.1 878 562.0 877 562.3 876 562.2 875 562.5 874 562.5 873 562.2 872 562.3 871 562.1 870 562.1 869 562.0 868 561.7 867 561.7 866 562.3 865 562.2 864 562.8 863 562.7 862 563.4 861 563.0 860 562.9 859 562.8 858 562.5 857 562.3 856 562.3 855 561.9 854 562.0 853 562.5 852 562.8 851 562.5 850 562.2 849 562.4 848 561.8 847 562.3 846 562.7 845 563.2 844 563.3 843 562.9 842 562.2 841 561.9 840 562.4 839 562.6 838 562.7 837 563.1 836 562.9 835 562.6 834 562.4 833 562.1 832 561.9 831 562.2 830 562.3 829 562.4 828 562.5 827 563.1 826 563.2 825 563.1 824 562.8 823 562.6 822 562.5 821 562.4 820 562.3 819 561.9 818 562.7 817 563.1 816 563.1 815 563.7 814 563.3 813 563.0 812 562.7 811 562.3 810 562.4 809 562.5 808 563.1 807 562.8 806 563.0 805 562.5 804 562.2 803 562.1 802 562.1 801 562.2 800 562.5 799 562.6 798 562.8 797 562.5 796 562.6 795 562.7 794 562.3 793 562.2 792 561.8 791 562.0 790 562.2 789 562.5 788 562.6 787 563.0 786 562.6 785 562.8 784 562.7 783 562.2 782 562.1 781 561.9 780 562.1 779 561.9 778 562.1 777 562.3 776 562.4 775 562.7 774 562.8 773 562.5 772 562.4 771 562.3 770 561.8 769 561.8Z M1112 551.5L1112 549.7 1113 548.9 1114 548.5 1115 548.7 1116 548.9 1117 549.6 1118 550.4 1119 549.9 1120 549.8 1121 549.7 1122 549.6 1123 549.3 1124 549.3 1125 549.6 1126 550.0 1127 550.0 1128 550.3 1129 549.7 1130 549.8 1131 549.3 1132 549.3 1133 549.5 1134 549.3 1135 548.8 1136 548.4 1137 549.0 1138 548.8 1139 549.2 1140 549.1 1141 549.8 1142 549.7 1143 549.7 1144 549.6 1145 549.1 1146 548.8 1147 548.8 1148 548.8 1149 548.8 1150 548.6 1151 548.6 1152 549.4 1153 549.6 1154 550.1 1155 549.6 1156 549.5 1157 549.6 1158 549.4 1159 549.7 1160 550.3 1161 550.5 1162 550.1 1163 550.1 1164 549.8 1165 549.9 1166 550.0 1167 550.0 1168 550.5 1169 549.9 1170 549.9 1171 549.9 1172 549.5 1173 549.6 1174 549.0 1175 549.2 1176 549.1 1177 549.2 1178 549.6 1179 549.6 1180 550.0 1181 549.8 1182 549.9 1183 549.6 1184 549.3 1185 549.0 1186 549.3 1187 549.2 1188 549.0 1189 548.6 1190 548.5 1191 549.0 1192 549.1 1193 549.3 1194 549.3 1195 549.4 1196 550.0 1197 550.0 1198 549.6 1199 549.3 1200 549.3 1201 549.5 1202 548.9 1203 548.8 1204 548.7 1205 548.7 1206 549.0 1207 549.2 1208 549.3 1209 549.6 1210 549.8 1211 549.8 1212 549.7 1213 549.4 1214 548.6 1215 548.9 1216 548.7 1217 549.6 1218 550.0 1219 550.3 1220 550.1 1221 549.6 1222 549.7 1223 549.5 1224 549.6 1225 549.8 1226 550.2 1227 550.0 1228 549.4 1229 549.2 1230 548.7 1231 549.1 1232 548.9 1233 549.3 1234 550.0 1235 549.9 1236 550.0 1237 549.4 1238 549.6 1239 549.1 1240 549.4 1241 549.3 1242 550.0 1243 550.1 1244 549.6 1245 549.2 1246 548.7 1247 549.1 1248 548.9 1249 548.1 1250 548.6 1251 548.6 1252 548.9 1253 549.0 1254 549.4 1255 549.4 1256 550.2 1257 550.2 1258 549.7 1259 549.5 1260 549.7 1261 549.3 1262 549.1 1263 549.5 1264 549.6 1265 549.7 1266 549.7 1267 550.2 1268 550.1 1269 549.7 1270 549.6 1271 548.9 1272 548.6 1273 548.5 1274 548.9 1275 548.1 1276 548.3 1277 548.4 1278 548.8 1279 548.3 1280 548.7 1281 548.8 1282 549.5 1283 549.3 1284 549.8 1285 548.9 1286 549.0 1287 548.7 1288 548.2 1289 549.0 1290 549.2 1291 549.3 1292 549.3 1293 549.6 1294 549.2 1295 548.5 1296 548.4 1297 548.8 1298 548.4 1299 548.8 1300 548.8 1301 549.3 1302 549.6 1303 549.3 1304 550.5 1305 550.0 1306 549.7 1307 549.8 1308 549.9 1309 549.7 1310 549.6 1311 549.7 1312 549.9 1313 549.9 1314 550.3 1315 549.8 1316 548.9 1317 548.7 1318 548.4 1319 548.8 1320 548.7 1321 548.0 1322 548.8 1323 548.7 1324 548.4 1325 549.2 1326 549.5 1327 549.4 1328 550.2 1329 550.1 1330 549.7 1331 549.6 1332 549.5 1333 549.3 1334 549.1 1335 549.4 1336 549.8 1337 550.0 1338 550.1 1339 549.6 1340 549.3 1341 549.0 1341 554.0 1340 553.7 1339 553.4 1338 552.9 1337 553.0 1336 553.2 1335 553.6 1334 553.9 1333 553.7 1332 553.5 1331 553.4 1330 553.3 1329 552.9 1328 552.8 1327 553.6 1326 553.5 1325 553.8 1324 554.6 1323 554.3 1322 554.2 1321 555.0 1320 554.3 1319 554.2 1318 554.6 1317 554.3 1316 554.1 1315 553.2 1314 552.7 1313 553.1 1312 553.1 1311 553.3 1310 553.4 1309 553.3 1308 553.1 1307 553.2 1306 553.3 1305 553.0 1304 552.5 1303 553.7 1302 553.4 1301 553.7 1300 554.2 1299 554.2 1298 554.6 1297 554.2 1296 554.6 1295 554.5 1294 553.8 1293 553.4 1292 553.7 1291 553.7 1290 553.8 1289 554.0 1288 554.8 1287 554.3 1286 554.0 1285 554.1 1284 553.2 1283 553.7 1282 553.5 1281 554.2 1280 554.3 1279 554.7 1278 554.2 1277 554.6 1276 554.7 1275 554.9 1274 554.1 1273 554.5 1272 554.4 1271 554.1 1270 553.4 1269 553.3 1268 552.9 1267 552.8 1266 553.3 1265 553.3 1264 553.4 1263 553.5 1262 553.9 1261 553.7 1260 553.3 1259 553.5 1258 553.3 1257 552.8 1256 552.8 1255 553.6 1254 553.6 1253 554.0 1252 554.1 1251 554.4 1250 554.4 1249 554.9 1248 554.1 1247 553.9 1246 554.3 1245 553.8 1244 553.4 1243 552.9 1242 553.0 1241 553.7 1240 553.6 1239 553.9 1238 553.4 1237 553.6 1236 553.0 1235 553.1 1234 553.0 1233 553.7 1232 554.1 1231 553.9 1230 554.3 1229 553.8 1228 553.6 1227 553.0 1226 552.8 1225 553.2 1224 553.4 1223 553.5 1222 553.3 1221 553.4 1220 552.9 1219 552.7 1218 553.0 1217 553.4 1216 554.3 1215 554.1 1214 554.4 1213 553.6 1212 553.3 1211 553.2 1210 553.2 1209 553.4 1208 553.7 1207 553.8 1206 554.0 1205 554.3 1204 554.3 1203 554.2 1202 554.1 1201 553.5 1200 553.7 1199 553.7 1198 553.4 1197 553.0 1196 553.0 1195 553.6 1194 553.7 1193 553.7 1192 553.9 1191 554.0 1190 554.5 1189 554.4 1188 554.0 1187 553.8 1186 553.7 1185 554.0 1184 553.7 1183 553.4 1182 553.1 1181 553.2 1180 553.0 1179 553.4 1178 553.4 1177 553.8 1176 553.9 1175 553.8 1174 554.0 1173 553.4 1172 553.5 1171 553.1 1170 553.1 1169 553.1 1168 552.5 1167 553.0 1166 553.0 1165 553.1 1164 553.2 1163 552.9 1162 552.9 1161 552.5 1160 552.7 1159 553.3 1158 553.6 1157 553.4 1156 553.5 1155 553.4 1154 552.9 1153 553.4 1152 553.6 1151 554.4 1150 554.4 1149 554.2 1148 554.2 1147 554.2 1146 554.2 1145 553.9 1144 553.4 1143 553.3 1142 553.3 1141 553.2 1140 553.9 1139 553.8 1138 554.2 1137 554.0 1136 554.6 1135 554.2 1134 553.7 1133 553.5 1132 553.7 1131 553.7 1130 553.2 1129 553.3 1128 552.7 1127 553.0 1126 553.0 1125 553.4 1124 553.7 1123 553.7 1122 553.4 1121 553.3 1120 553.2 1119 553.1 1118 552.6 1117 553.4 1116 554.1 1115 554.3 1114 554.5 1113 554.1 1112 553.3Z M1112 560.5L1112 558.5 1113 558.3 1114 557.7 1115 557.0 1116 557.2 1117 557.5 1118 557.8 1119 558.4 1120 559.2 1121 559.0 1122 558.8 1123 559.1 1124 558.7 1125 558.8 1126 558.5 1127 558.5 1128 558.6 1129 558.3 1130 558.9 1131 558.7 1132 558.7 1133 559.0 1134 559.1 1135 559.1 1136 558.5 1137 558.0 1138 558.0 1139 558.0 1140 557.0 1141 557.8 1142 557.8 1143 558.0 1144 558.9 1145 558.6 1146 558.4 1147 558.5 1148 557.9 1149 557.7 1150 557.9 1151 557.6 1152 557.6 1153 557.4 1154 558.3 1155 558.0 1156 558.4 1157 558.7 1158 559.0 1159 559.3 1160 558.8 1161 558.8 1162 558.5 1163 558.2 1164 558.0 1165 558.2 1166 558.8 1167 558.8 1168 558.8 1169 559.1 1170 558.9 1171 558.7 1172 558.4 1173 557.9 1174 558.3 1175 558.7 1176 559.0 1177 558.8 1178 558.7 1179 558.5 1180 558.3 1181 557.9 1182 557.9 1183 558.5 1184 558.4 1185 558.8 1186 559.0 1187 558.8 1188 558.3 1189 558.3 1190 557.9 1191 558.1 1192 558.1 1193 558.1 1194 558.6 1195 558.8 1196 559.2 1197 559.0 1198 558.7 1199 558.5 1200 558.6 1201 558.5 1202 558.1 1203 558.7 1204 558.6 1205 558.7 1206 559.1 1207 559.0 1208 558.9 1209 558.7 1210 558.4 1211 558.1 1212 558.2 1213 558.2 1214 558.2 1215 558.2 1216 558.8 1217 558.6 1218 559.0 1219 559.4 1220 559.0 1221 559.1 1222 558.8 1223 558.7 1224 558.6 1225 558.4 1226 558.7 1227 558.8 1228 559.3 1229 559.3 1230 558.8 1231 558.2 1232 558.5 1233 558.4 1234 557.9 1235 558.0 1236 557.4 1237 558.1 1238 558.1 1239 558.3 1240 558.3 1241 558.3 1242 558.9 1243 558.6 1244 558.6 1245 558.3 1246 558.2 1247 557.4 1248 557.8 1249 558.0 1250 557.7 1251 558.1 1252 558.7 1253 558.6 1254 559.1 1255 558.6 1256 558.5 1257 558.2 1258 557.7 1259 557.7 1260 557.8 1261 558.5 1262 558.5 1263 558.7 1264 559.2 1265 559.2 1266 559.0 1267 558.9 1268 558.5 1269 558.5 1270 558.4 1271 558.3 1272 558.6 1273 558.5 1274 558.3 1275 558.5 1276 558.6 1277 559.1 1278 559.3 1279 559.1 1280 558.6 1281 558.4 1282 558.3 1283 559.0 1284 559.0 1285 559.1 1286 559.0 1287 559.0 1288 558.7 1289 558.4 1290 558.4 1291 558.4 1292 558.7 1293 558.9 1294 558.9 1295 559.3 1296 558.6 1297 558.3 1298 557.6 1299 557.7 1300 557.1 1301 558.0 1302 558.0 1303 558.2 1304 558.9 1305 558.7 1306 558.5 1307 557.5 1308 557.2 1309 558.0 1310 558.3 1311 558.5 1312 558.6 1313 558.5 1314 557.8 1315 557.6 1316 557.5 1317 557.5 1318 558.0 1319 558.3 1320 558.6 1321 558.8 1322 558.8 1323 558.5 1324 557.9 1325 557.5 1326 557.9 1327 557.9 1328 557.9 1329 558.0 1330 558.2 1331 558.6 1332 558.8 1333 558.6 1334 558.3 1335 558.3 1336 557.6 1337 557.6 1338 557.8 1339 557.2 1340 557.9 1341 558.2 1341 562.8 1340 563.1 1339 563.8 1338 563.2 1337 563.4 1336 563.4 1335 562.7 1334 562.7 1333 562.4 1332 562.2 1331 562.4 1330 562.8 1329 563.0 1328 563.1 1327 563.1 1326 563.1 1325 563.5 1324 563.1 1323 562.5 1322 562.2 1321 562.2 1320 562.4 1319 562.7 1318 563.0 1317 563.5 1316 563.5 1315 563.4 1314 563.2 1313 562.5 1312 562.4 1311 562.5 1310 562.7 1309 563.0 1308 563.8 1307 563.5 1306 562.5 1305 562.3 1304 562.1 1303 562.8 1302 563.0 1301 563.0 1300 563.9 1299 563.3 1298 563.4 1297 562.7 1296 562.4 1295 561.7 1294 562.1 1293 562.1 1292 562.3 1291 562.6 1290 562.6 1289 562.6 1288 562.3 1287 562.0 1286 562.0 1285 561.9 1284 562.0 1283 562.0 1282 562.7 1281 562.6 1280 562.4 1279 561.9 1278 561.7 1277 561.9 1276 562.4 1275 562.5 1274 562.7 1273 562.5 1272 562.4 1271 562.7 1270 562.6 1269 562.5 1268 562.5 1267 562.1 1266 562.0 1265 561.8 1264 561.8 1263 562.3 1262 562.5 1261 562.5 1260 563.2 1259 563.3 1258 563.3 1257 562.8 1256 562.5 1255 562.4 1254 561.9 1253 562.4 1252 562.3 1251 562.9 1250 563.3 1249 563.0 1248 563.2 1247 563.6 1246 562.8 1245 562.7 1244 562.4 1243 562.4 1242 562.1 1241 562.7 1240 562.7 1239 562.7 1238 562.9 1237 562.9 1236 563.6 1235 563.0 1234 563.1 1233 562.6 1232 562.5 1231 562.8 1230 562.2 1229 561.7 1228 561.7 1227 562.2 1226 562.3 1225 562.6 1224 562.4 1223 562.3 1222 562.2 1221 561.9 1220 562.0 1219 561.6 1218 562.0 1217 562.4 1216 562.2 1215 562.8 1214 562.8 1213 562.8 1212 562.8 1211 562.9 1210 562.6 1209 562.3 1208 562.1 1207 562.0 1206 561.9 1205 562.3 1204 562.4 1203 562.3 1202 562.9 1201 562.5 1200 562.4 1199 562.5 1198 562.3 1197 562.0 1196 561.8 1195 562.2 1194 562.4 1193 562.9 1192 562.9 1191 562.9 1190 563.1 1189 562.7 1188 562.7 1187 562.2 1186 562.0 1185 562.2 1184 562.6 1183 562.5 1182 563.1 1181 563.1 1180 562.7 1179 562.5 1178 562.3 1177 562.2 1176 562.0 1175 562.3 1174 562.7 1173 563.1 1172 562.6 1171 562.3 1170 562.1 1169 561.9 1168 562.2 1167 562.2 1166 562.2 1165 562.8 1164 563.0 1163 562.8 1162 562.5 1161 562.2 1160 562.2 1159 561.7 1158 562.0 1157 562.3 1156 562.6 1155 563.0 1154 562.7 1153 563.6 1152 563.4 1151 563.4 1150 563.1 1149 563.3 1148 563.1 1147 562.5 1146 562.6 1145 562.4 1144 562.1 1143 563.0 1142 563.2 1141 563.2 1140 564.0 1139 563.0 1138 563.0 1137 563.0 1136 562.5 1135 561.9 1134 561.9 1133 562.0 1132 562.3 1131 562.3 1130 562.1 1129 562.7 1128 562.4 1127 562.5 1126 562.5 1125 562.2 1124 562.3 1123 561.9 1122 562.2 1121 562.0 1120 561.8 1119 562.6 1118 563.2 1117 563.5 1116 563.8 1115 564.0 1114 563.3 1113 562.7 1112 562.5Z M997 575.5L997 574.2 998 574.1 999 573.7 1000 573.4 1001 573.4 1002 573.3 1003 573.7 1004 573.6 1005 574.1 1006 574.0 1007 573.5 1008 573.4 1009 573.2 1010 572.7 1011 572.7 1012 572.2 1013 572.8 1014 572.3 1015 571.9 1016 572.3 1017 572.5 1018 573.0 1019 573.2 1020 573.3 1021 573.1 1022 573.3 1023 574.0 1024 573.5 1025 573.5 1026 573.3 1027 573.0 1028 573.2 1029 573.3 1030 573.7 1031 573.9 1032 574.1 1033 574.1 1034 573.7 1035 573.7 1036 573.7 1037 573.3 1038 573.5 1039 573.3 1040 573.3 1041 573.6 1042 573.8 1043 574.2 1044 574.2 1045 573.9 1046 573.7 1047 573.0 1048 573.3 1049 573.1 1050 573.5 1051 574.1 1052 573.6 1053 573.1 1054 572.8 1055 572.9 1056 573.0 1057 572.9 1058 572.1 1059 572.6 1060 572.3 1061 572.4 1062 572.9 1063 572.7 1064 573.2 1065 573.1 1066 573.3 1067 573.6 1068 574.1 1069 573.6 1070 573.4 1071 573.2 1072 573.2 1073 573.5 1074 573.8 1075 574.0 1076 574.3 1077 574.1 1078 574.2 1079 574.0 1080 573.6 1081 573.4 1082 573.5 1083 573.3 1084 573.6 1085 573.4 1086 573.7 1087 573.5 1088 573.9 1089 574.0 1090 573.9 1091 574.2 1092 573.9 1093 573.2 1094 572.9 1095 572.8 1096 572.9 1097 573.8 1098 574.0 1099 573.8 1100 573.3 1101 573.7 1102 572.9 1103 573.2 1104 573.4 1105 573.8 1106 573.9 1107 574.0 1108 574.1 1109 574.0 1110 574.1 1111 573.6 1112 573.6 1112 577.4 1111 577.4 1110 576.9 1109 577.0 1108 576.9 1107 577.0 1106 577.1 1105 577.2 1104 577.6 1103 577.8 1102 578.1 1101 577.3 1100 577.7 1099 577.2 1098 577.0 1097 577.2 1096 578.1 1095 578.2 1094 578.1 1093 577.8 1092 577.1 1091 576.8 1090 577.1 1089 577.0 1088 577.1 1087 577.5 1086 577.3 1085 577.6 1084 577.4 1083 577.7 1082 577.5 1081 577.6 1080 577.4 1079 577.0 1078 576.8 1077 576.9 1076 576.7 1075 577.0 1074 577.2 1073 577.5 1072 577.8 1071 577.8 1070 577.6 1069 577.4 1068 576.9 1067 577.4 1066 577.7 1065 577.9 1064 577.8 1063 578.3 1062 578.1 1061 578.6 1060 578.7 1059 578.4 1058 578.9 1057 578.1 1056 578.0 1055 578.1 1054 578.2 1053 577.9 1052 577.4 1051 576.9 1050 577.5 1049 577.9 1048 577.7 1047 578.0 1046 577.3 1045 577.1 1044 576.8 1043 576.8 1042 577.2 1041 577.4 1040 577.7 1039 577.7 1038 577.5 1037 577.7 1036 577.3 1035 577.3 1034 577.3 1033 576.9 1032 576.9 1031 577.1 1030 577.3 1029 577.7 1028 577.8 1027 578.0 1026 577.7 1025 577.5 1024 577.5 1023 577.0 1022 577.7 1021 577.9 1020 577.7 1019 577.8 1018 578.0 1017 578.5 1016 578.7 1015 579.1 1014 578.7 1013 578.2 1012 578.8 1011 578.3 1010 578.3 1009 577.8 1008 577.6 1007 577.5 1006 577.0 1005 576.9 1004 577.4 1003 577.3 1002 577.7 1001 577.6 1000 577.6 999 577.3 998 576.9 997 576.8Z M997 584.5L997 582.3 998 582.0 999 581.5 1000 580.9 1001 581.1 1002 581.8 1003 582.4 1004 582.8 1005 582.3 1006 581.9 1007 581.4 1008 580.9 1009 581.5 1010 581.6 1011 582.2 1012 582.5 1013 583.2 1014 582.9 1015 582.8 1016 582.7 1017 582.5 1018 582.4 1019 582.4 1020 582.6 1021 582.5 1022 582.6 1023 582.8 1024 583.2 1025 583.1 1026 582.7 1027 582.8 1028 582.2 1029 582.0 1030 581.8 1031 581.6 1032 581.9 1033 581.6 1034 581.8 1035 581.7 1036 582.1 1037 582.1 1038 582.4 1039 583.0 1040 582.5 1041 582.4 1042 582.0 1043 581.9 1044 582.0 1045 582.1 1046 581.5 1047 581.2 1048 581.6 1049 581.5 1050 581.5 1051 581.7 1052 582.4 1053 582.3 1054 582.8 1055 582.9 1056 583.0 1057 582.8 1058 582.7 1059 582.6 1060 582.4 1061 581.9 1062 581.9 1063 582.3 1064 582.5 1065 582.6 1066 582.5 1067 582.8 1068 582.9 1069 583.2 1070 583.2 1071 582.6 1072 582.8 1073 582.6 1074 582.4 1075 582.9 1076 583.1 1077 583.1 1078 582.3 1079 582.5 1080 582.3 1081 581.7 1082 581.5 1083 581.5 1084 581.1 1085 580.9 1086 581.5 1087 582.0 1088 581.5 1089 582.2 1090 582.3 1091 582.3 1092 582.5 1093 582.5 1094 582.4 1095 582.1 1096 581.9 1097 582.1 1098 581.4 1099 582.0 1100 582.0 1101 582.2 1102 582.6 1103 582.9 1104 583.0 1105 582.7 1106 582.6 1107 582.3 1108 582.0 1109 581.9 1110 582.3 1111 582.6 1112 582.6 1112 586.4 1111 586.4 1110 586.7 1109 587.1 1108 587.0 1107 586.7 1106 586.4 1105 586.3 1104 586.0 1103 586.1 1102 586.4 1101 586.8 1100 587.0 1099 587.0 1098 587.6 1097 586.9 1096 587.1 1095 586.9 1094 586.6 1093 586.5 1092 586.5 1091 586.7 1090 586.7 1089 586.8 1088 587.5 1087 587.0 1086 587.5 1085 588.1 1084 587.9 1083 587.5 1082 587.5 1081 587.3 1080 586.7 1079 586.5 1078 586.7 1077 585.9 1076 585.9 1075 586.1 1074 586.6 1073 586.4 1072 586.2 1071 586.4 1070 585.8 1069 585.8 1068 586.1 1067 586.2 1066 586.5 1065 586.4 1064 586.5 1063 586.7 1062 587.1 1061 587.1 1060 586.6 1059 586.4 1058 586.3 1057 586.2 1056 586.0 1055 586.1 1054 586.2 1053 586.7 1052 586.6 1051 587.3 1050 587.5 1049 587.5 1048 587.4 1047 587.8 1046 587.5 1045 586.9 1044 587.0 1043 587.1 1042 587.0 1041 586.6 1040 586.5 1039 586.0 1038 586.6 1037 586.9 1036 586.9 1035 587.3 1034 587.2 1033 587.4 1032 587.1 1031 587.4 1030 587.2 1029 587.0 1028 586.8 1027 586.2 1026 586.3 1025 585.9 1024 585.8 1023 586.2 1022 586.4 1021 586.5 1020 586.4 1019 586.6 1018 586.6 1017 586.5 1016 586.3 1015 586.2 1014 586.1 1013 585.8 1012 586.5 1011 586.8 1010 587.4 1009 587.5 1008 588.1 1007 587.6 1006 587.1 1005 586.7 1004 586.2 1003 586.6 1002 587.2 1001 587.9 1000 588.1 999 587.5 998 587.0 997 586.7Z M1455 575.5L1455 573.3 1456 573.2 1457 572.5 1458 572.6 1459 572.9 1460 573.7 1461 573.9 1462 573.5 1463 573.5 1464 572.7 1465 572.5 1466 573.0 1467 572.4 1468 572.4 1469 572.9 1470 572.8 1471 572.6 1472 572.9 1473 573.4 1474 573.3 1475 573.8 1476 574.3 1477 574.2 1478 574.2 1479 573.7 1480 573.7 1481 573.7 1482 573.3 1483 573.7 1484 573.5 1485 573.9 1486 573.7 1487 574.0 1488 574.4 1489 574.3 1490 574.1 1491 574.1 1492 573.7 1493 573.3 1494 573.2 1495 573.4 1496 573.8 1497 574.0 1498 573.6 1499 573.2 1500 572.5 1501 572.8 1502 572.4 1503 572.2 1504 572.6 1505 572.7 1506 572.9 1507 573.2 1508 573.2 1509 574.1 1510 574.0 1511 573.8 1512 573.7 1513 573.7 1514 573.2 1515 573.9 1516 573.9 1517 574.0 1518 574.2 1519 574.2 1520 573.9 1521 573.5 1522 573.5 1523 573.1 1524 573.0 1525 573.3 1526 573.0 1527 573.3 1528 573.1 1529 573.1 1530 573.5 1531 573.4 1532 573.7 1533 573.6 1534 573.8 1535 574.2 1536 574.0 1537 573.8 1538 573.7 1539 573.5 1540 573.8 1541 573.7 1542 573.3 1543 573.4 1544 573.9 1545 573.9 1546 573.8 1547 574.0 1548 574.1 1549 573.9 1550 573.8 1551 573.7 1552 573.1 1553 573.1 1554 573.0 1555 572.9 1556 572.9 1557 573.6 1558 573.6 1559 574.0 1560 574.0 1561 574.3 1562 574.3 1563 574.1 1564 574.1 1565 573.7 1566 573.6 1567 573.5 1568 573.4 1569 573.9 1570 573.9 1571 573.8 1572 574.2 1573 574.3 1574 574.4 1575 573.5 1576 573.0 1577 572.3 1578 572.9 1579 572.9 1580 573.6 1581 573.4 1582 573.1 1583 573.0 1584 572.8 1585 572.5 1586 572.1 1587 572.5 1588 572.3 1589 572.2 1590 572.1 1591 573.0 1592 573.2 1593 573.0 1594 573.5 1595 573.3 1596 574.3 1597 574.3 1598 574.0 1599 573.9 1600 573.6 1601 573.7 1602 573.8 1603 574.3 1604 574.2 1605 574.0 1606 573.2 1607 572.8 1608 572.8 1609 573.3 1610 573.4 1611 573.8 1612 573.4 1613 573.2 1614 573.2 1615 572.4 1616 572.8 1617 572.4 1618 572.7 1619 573.2 1620 573.1 1621 573.4 1622 574.3 1623 573.9 1624 574.0 1625 573.7 1626 573.5 1627 573.8 1628 573.6 1629 573.4 1630 573.4 1631 573.7 1632 573.6 1633 573.8 1634 574.0 1635 573.9 1636 574.1 1637 574.0 1638 573.9 1639 573.6 1640 573.5 1641 573.4 1642 572.9 1643 573.0 1644 572.9 1645 573.2 1646 573.0 1647 573.4 1648 573.5 1649 573.5 1650 573.6 1651 573.7 1652 573.4 1653 572.7 1654 572.7 1655 572.6 1656 573.2 1657 573.3 1658 573.8 1659 573.6 1660 573.5 1661 573.4 1662 573.3 1663 573.3 1663 577.7 1662 577.7 1661 577.6 1660 577.5 1659 577.4 1658 577.2 1657 577.7 1656 577.8 1655 578.4 1654 578.3 1653 578.3 1652 577.6 1651 577.3 1650 577.4 1649 577.5 1648 577.5 1647 577.6 1646 578.0 1645 577.8 1644 578.1 1643 578.0 1642 578.1 1641 577.6 1640 577.5 1639 577.4 1638 577.1 1637 577.0 1636 576.9 1635 577.1 1634 577.0 1633 577.2 1632 577.4 1631 577.3 1630 577.6 1629 577.6 1628 577.4 1627 577.2 1626 577.5 1625 577.3 1624 577.0 1623 577.1 1622 576.7 1621 577.6 1620 577.9 1619 577.8 1618 578.3 1617 578.6 1616 578.2 1615 578.6 1614 577.8 1613 577.8 1612 577.6 1611 577.2 1610 577.6 1609 577.7 1608 578.2 1607 578.2 1606 577.8 1605 577.0 1604 576.8 1603 576.7 1602 577.2 1601 577.3 1600 577.4 1599 577.1 1598 577.0 1597 576.7 1596 576.7 1595 577.7 1594 577.5 1593 578.0 1592 577.8 1591 578.0 1590 578.9 1589 578.8 1588 578.7 1587 578.5 1586 578.9 1585 578.5 1584 578.2 1583 578.0 1582 577.9 1581 577.6 1580 577.4 1579 578.1 1578 578.1 1577 578.7 1576 578.0 1575 577.5 1574 576.6 1573 576.7 1572 576.8 1571 577.2 1570 577.1 1569 577.1 1568 577.6 1567 577.5 1566 577.4 1565 577.3 1564 576.9 1563 576.9 1562 576.7 1561 576.7 1560 577.0 1559 577.0 1558 577.4 1557 577.4 1556 578.1 1555 578.1 1554 578.0 1553 577.9 1552 577.9 1551 577.3 1550 577.2 1549 577.1 1548 576.9 1547 577.0 1546 577.2 1545 577.1 1544 577.1 1543 577.6 1542 577.7 1541 577.3 1540 577.2 1539 577.5 1538 577.3 1537 577.2 1536 577.0 1535 576.8 1534 577.2 1533 577.4 1532 577.3 1531 577.6 1530 577.5 1529 577.9 1528 577.9 1527 577.7 1526 578.0 1525 577.7 1524 578.0 1523 577.9 1522 577.5 1521 577.5 1520 577.1 1519 576.8 1518 576.8 1517 577.0 1516 577.1 1515 577.1 1514 577.8 1513 577.3 1512 577.3 1511 577.2 1510 577.0 1509 576.9 1508 577.8 1507 577.8 1506 578.1 1505 578.3 1504 578.4 1503 578.8 1502 578.6 1501 578.2 1500 578.5 1499 577.8 1498 577.4 1497 577.0 1496 577.2 1495 577.6 1494 577.8 1493 577.7 1492 577.3 1491 576.9 1490 576.9 1489 576.7 1488 576.6 1487 577.0 1486 577.3 1485 577.1 1484 577.5 1483 577.3 1482 577.7 1481 577.3 1480 577.3 1479 577.3 1478 576.8 1477 576.8 1476 576.7 1475 577.2 1474 577.7 1473 577.6 1472 578.1 1471 578.4 1470 578.2 1469 578.1 1468 578.6 1467 578.6 1466 578.0 1465 578.5 1464 578.3 1463 577.5 1462 577.5 1461 577.1 1460 577.3 1459 578.1 1458 578.4 1457 578.5 1456 577.8 1455 577.7Z M1455 584.5L1455 582.8 1456 582.6 1457 581.8 1458 581.4 1459 581.7 1460 581.6 1461 582.4 1462 582.5 1463 582.2 1464 581.9 1465 581.9 1466 581.3 1467 581.7 1468 581.6 1469 581.0 1470 581.2 1471 581.6 1472 581.8 1473 582.2 1474 581.9 1475 582.3 1476 582.8 1477 582.8 1478 582.4 1479 582.2 1480 582.5 1481 582.4 1482 582.2 1483 581.9 1484 582.2 1485 582.5 1486 582.2 1487 582.4 1488 582.8 1489 583.2 1490 583.1 1491 582.8 1492 582.4 1493 582.0 1494 582.1 1495 581.9 1496 582.1 1497 582.0 1498 581.5 1499 582.1 1500 582.4 1501 582.2 1502 582.7 1503 582.8 1504 582.9 1505 582.4 1506 582.0 1507 581.8 1508 581.8 1509 581.4 1510 581.1 1511 581.6 1512 581.0 1513 580.9 1514 581.0 1515 581.4 1516 581.8 1517 581.8 1518 582.2 1519 582.7 1520 583.0 1521 582.7 1522 582.0 1523 582.3 1524 582.0 1525 581.5 1526 581.4 1527 581.7 1528 581.8 1529 582.4 1530 582.6 1531 582.3 1532 582.6 1533 583.0 1534 582.1 1535 581.7 1536 581.8 1537 582.7 1538 582.9 1539 582.6 1540 582.5 1541 582.4 1542 581.6 1543 581.9 1544 581.0 1545 581.1 1546 581.5 1547 581.0 1548 581.7 1549 581.6 1550 582.1 1551 581.8 1552 582.0 1553 582.3 1554 583.5 1555 582.8 1556 582.8 1557 582.5 1558 582.8 1559 583.2 1560 583.4 1561 583.1 1562 583.1 1563 582.9 1564 583.0 1565 582.5 1566 582.8 1567 582.3 1568 582.4 1569 582.7 1570 583.0 1571 582.9 1572 583.2 1573 583.3 1574 583.0 1575 582.3 1576 581.8 1577 582.0 1578 582.1 1579 582.1 1580 582.5 1581 583.1 1582 582.5 1583 582.5 1584 581.9 1585 582.0 1586 582.5 1587 583.2 1588 583.3 1589 582.9 1590 582.9 1591 582.6 1592 582.5 1593 582.8 1594 583.3 1595 582.4 1596 581.9 1597 581.4 1598 581.1 1599 581.0 1600 581.8 1601 581.6 1602 581.8 1603 582.5 1604 583.0 1605 582.8 1606 582.3 1607 582.6 1608 582.9 1609 583.2 1610 583.1 1611 582.9 1612 582.3 1613 582.2 1614 582.1 1615 581.9 1616 581.9 1617 582.1 1618 582.6 1619 582.6 1620 583.2 1621 583.4 1622 583.0 1623 582.9 1624 583.0 1625 582.7 1626 582.5 1627 582.4 1628 582.4 1629 582.7 1630 583.0 1631 582.8 1632 583.1 1633 583.1 1634 583.4 1635 583.3 1636 583.2 1637 583.1 1638 582.7 1639 582.8 1640 582.3 1641 582.2 1642 582.4 1643 582.4 1644 582.6 1645 582.7 1646 583.1 1647 583.0 1648 583.1 1649 583.1 1650 582.4 1651 582.3 1652 582.1 1653 582.2 1654 581.7 1655 582.3 1656 582.5 1657 582.7 1658 582.7 1659 582.9 1660 582.4 1661 581.4 1662 581.4 1663 581.7 1663 587.3 1662 587.6 1661 587.6 1660 586.6 1659 586.1 1658 586.3 1657 586.3 1656 586.5 1655 586.7 1654 587.3 1653 586.8 1652 586.9 1651 586.7 1650 586.6 1649 585.9 1648 585.9 1647 586.0 1646 585.9 1645 586.3 1644 586.4 1643 586.6 1642 586.6 1641 586.8 1640 586.7 1639 586.2 1638 586.3 1637 585.9 1636 585.8 1635 585.7 1634 585.6 1633 585.9 1632 585.9 1631 586.2 1630 586.0 1629 586.3 1628 586.6 1627 586.6 1626 586.5 1625 586.3 1624 586.0 1623 586.1 1622 586.0 1621 585.6 1620 585.8 1619 586.4 1618 586.4 1617 586.9 1616 587.1 1615 587.1 1614 586.9 1613 586.8 1612 586.7 1611 586.1 1610 585.9 1609 585.8 1608 586.1 1607 586.4 1606 586.7 1605 586.2 1604 586.0 1603 586.5 1602 587.2 1601 587.4 1600 587.2 1599 588.0 1598 587.9 1597 587.6 1596 587.1 1595 586.6 1594 585.7 1593 586.2 1592 586.5 1591 586.4 1590 586.1 1589 586.1 1588 585.7 1587 585.8 1586 586.5 1585 587.0 1584 587.1 1583 586.5 1582 586.5 1581 585.9 1580 586.5 1579 586.9 1578 586.9 1577 587.0 1576 587.2 1575 586.7 1574 586.0 1573 585.7 1572 585.8 1571 586.1 1570 586.0 1569 586.3 1568 586.6 1567 586.7 1566 586.2 1565 586.5 1564 586.0 1563 586.1 1562 585.9 1561 585.9 1560 585.6 1559 585.8 1558 586.2 1557 586.5 1556 586.2 1555 586.2 1554 585.5 1553 586.7 1552 587.0 1551 587.2 1550 586.9 1549 587.4 1548 587.3 1547 588.0 1546 587.5 1545 587.9 1544 588.0 1543 587.1 1542 587.4 1541 586.6 1540 586.5 1539 586.4 1538 586.1 1537 586.3 1536 587.2 1535 587.3 1534 586.9 1533 586.0 1532 586.4 1531 586.7 1530 586.4 1529 586.6 1528 587.2 1527 587.3 1526 587.6 1525 587.5 1524 587.0 1523 586.7 1522 587.0 1521 586.3 1520 586.0 1519 586.3 1518 586.8 1517 587.2 1516 587.2 1515 587.6 1514 588.0 1513 588.1 1512 588.0 1511 587.4 1510 587.9 1509 587.6 1508 587.2 1507 587.2 1506 587.0 1505 586.6 1504 586.1 1503 586.2 1502 586.3 1501 586.8 1500 586.6 1499 586.9 1498 587.5 1497 587.0 1496 586.9 1495 587.1 1494 586.9 1493 587.0 1492 586.6 1491 586.2 1490 585.9 1489 585.8 1488 586.2 1487 586.6 1486 586.8 1485 586.5 1484 586.8 1483 587.1 1482 586.8 1481 586.6 1480 586.5 1479 586.8 1478 586.6 1477 586.2 1476 586.2 1475 586.7 1474 587.1 1473 586.8 1472 587.2 1471 587.4 1470 587.8 1469 588.0 1468 587.4 1467 587.3 1466 587.7 1465 587.1 1464 587.1 1463 586.8 1462 586.5 1461 586.6 1460 587.4 1459 587.3 1458 587.6 1457 587.2 1456 586.4 1455 586.2Z M882 599.5L882 598.7 883 597.8 884 598.1 885 598.1 886 598.4 887 598.7 888 599.0 889 599.1 890 599.1 891 599.1 892 599.1 893 599.1 894 599.1 895 599.1 896 598.1 897 597.0 898 597.0 899 597.6 900 597.9 901 598.2 902 598.6 903 598.8 904 599.1 904 599.9 903 600.2 902 600.4 901 600.8 900 601.1 899 601.4 898 602.0 897 602.0 896 600.9 895 599.9 894 599.9 893 599.9 892 599.9 891 599.9 890 599.9 889 599.9 888 600.0 887 600.3 886 600.6 885 600.9 884 600.9 883 601.2 882 600.3Z M882 608.5L882 607.6 883 606.6 884 606.9 885 607.5 886 607.8 887 608.1 888 608.1 889 608.1 890 608.1 891 608.1 892 608.1 893 607.4 894 606.5 895 607.0 896 607.8 897 608.1 898 608.1 899 608.1 900 607.7 901 606.8 902 607.5 903 607.8 904 608.1 904 608.9 903 609.2 902 609.5 901 610.2 900 609.3 899 608.9 898 608.9 897 608.9 896 609.2 895 610.0 894 610.5 893 609.6 892 608.9 891 608.9 890 608.9 889 608.9 888 608.9 887 608.9 886 609.2 885 609.5 884 610.1 883 610.4 882 609.4Z M940 599.5L940 598.7 941 598.0 942 598.2 943 598.7 944 599.1 945 599.1 946 599.1 947 598.4 948 597.7 949 598.2 950 598.6 951 599.1 952 599.1 953 599.1 954 598.2 955 597.4 956 597.6 957 598.0 958 598.6 959 599.1 960 599.1 961 599.1 962 599.1 962 599.9 961 599.9 960 599.9 959 599.9 958 600.4 957 601.0 956 601.4 955 601.6 954 600.8 953 599.9 952 599.9 951 599.9 950 600.4 949 600.8 948 601.3 947 600.6 946 599.9 945 599.9 944 599.9 943 600.3 942 600.8 941 601.0 940 600.3Z M940 608.5L940 607.3 941 605.9 942 606.4 943 607.2 944 607.7 945 608.1 946 608.1 947 608.1 948 608.1 949 608.1 950 607.4 951 606.3 952 606.4 953 606.9 954 607.2 955 607.5 956 607.9 957 608.1 958 608.1 959 608.1 960 608.1 961 608.1 962 607.2 962 609.8 961 608.9 960 608.9 959 608.9 958 608.9 957 608.9 956 609.1 955 609.5 954 609.8 953 610.1 952 610.6 951 610.7 950 609.6 949 608.9 948 608.9 947 608.9 946 608.9 945 608.9 944 609.3 943 609.8 942 610.6 941 611.1 940 609.7Z M997 599.5L997 598.5 998 597.6 999 597.7 1000 598.0 1001 598.4 1002 598.8 1003 599.0 1004 599.1 1005 599.1 1006 599.1 1007 598.3 1008 597.2 1009 597.4 1010 597.5 1011 598.1 1012 598.4 1013 598.9 1014 599.1 1015 599.1 1016 599.1 1017 598.4 1018 597.4 1019 597.5 1019 601.5 1018 601.6 1017 600.6 1016 599.9 1015 599.9 1014 599.9 1013 600.1 1012 600.6 1011 600.9 1010 601.5 1009 601.6 1008 601.8 1007 600.7 1006 599.9 1005 599.9 1004 599.9 1003 600.0 1002 600.2 1001 600.6 1000 601.0 999 601.3 998 601.4 997 600.5Z M997 608.5L997 607.7 998 606.7 999 607.1 1000 607.6 1001 607.9 1002 608.1 1003 608.1 1004 608.1 1005 607.4 1006 606.3 1007 606.6 1008 606.6 1009 606.9 1010 607.2 1011 607.5 1012 607.8 1013 608.0 1014 608.1 1015 608.1 1016 608.1 1017 608.1 1018 608.1 1019 608.1 1019 608.9 1018 608.9 1017 608.9 1016 608.9 1015 608.9 1014 608.9 1013 609.0 1012 609.2 1011 609.5 1010 609.8 1009 610.1 1008 610.4 1007 610.4 1006 610.7 1005 609.6 1004 608.9 1003 608.9 1002 608.9 1001 609.1 1000 609.4 999 609.9 998 610.3 997 609.3Z M1055 599.5L1055 598.3 1056 597.1 1057 597.6 1058 597.8 1059 598.4 1060 598.8 1061 599.1 1062 599.1 1063 598.7 1064 597.9 1065 598.1 1066 598.5 1067 598.7 1068 599.0 1069 599.1 1070 599.1 1071 599.1 1072 598.3 1073 596.9 1074 597.3 1075 597.5 1076 598.1 1077 598.3 1077 600.7 1076 600.9 1075 601.5 1074 601.7 1073 602.1 1072 600.7 1071 599.9 1070 599.9 1069 599.9 1068 600.0 1067 600.3 1066 600.5 1065 600.9 1064 601.1 1063 600.3 1062 599.9 1061 599.9 1060 600.2 1059 600.6 1058 601.2 1057 601.4 1056 601.9 1055 600.7Z M1055 608.5L1055 607.5 1056 606.6 1057 607.5 1058 608.0 1059 608.1 1060 607.4 1061 606.4 1062 606.9 1063 607.5 1064 608.1 1065 608.1 1066 607.3 1067 606.1 1068 606.5 1069 607.0 1070 607.5 1071 608.1 1072 608.1 1073 608.1 1074 607.4 1075 606.6 1076 607.1 1077 607.9 1077 609.1 1076 609.9 1075 610.4 1074 609.6 1073 608.9 1072 608.9 1071 608.9 1070 609.5 1069 610.0 1068 610.5 1067 610.9 1066 609.7 1065 608.9 1064 608.9 1063 609.5 1062 610.1 1061 610.6 1060 609.6 1059 608.9 1058 609.0 1057 609.5 1056 610.4 1055 609.5Z M1226 599.5L1226 598.5 1227 597.6 1228 597.9 1229 597.9 1230 598.4 1231 598.7 1232 598.8 1233 599.1 1234 599.1 1235 599.1 1236 599.1 1237 599.1 1238 599.1 1239 598.3 1240 597.5 1241 598.2 1242 598.9 1243 599.1 1244 599.1 1245 598.3 1246 597.0 1247 597.4 1248 597.8 1248 601.2 1247 601.6 1246 602.0 1245 600.7 1244 599.9 1243 599.9 1242 600.1 1241 600.8 1240 601.5 1239 600.7 1238 599.9 1237 599.9 1236 599.9 1235 599.9 1234 599.9 1233 599.9 1232 600.2 1231 600.3 1230 600.6 1229 601.1 1228 601.1 1227 601.4 1226 600.5Z M1226 608.5L1226 607.6 1227 606.8 1228 607.2 1229 607.4 1230 607.7 1231 608.0 1232 608.1 1233 608.1 1234 607.3 1235 606.1 1236 606.2 1237 606.5 1238 607.1 1239 607.3 1240 607.6 1241 607.9 1242 608.1 1243 608.1 1244 608.1 1245 608.1 1246 607.0 1247 606.1 1248 605.7 1248 611.3 1247 610.9 1246 610.0 1245 608.9 1244 608.9 1243 608.9 1242 608.9 1241 609.1 1240 609.4 1239 609.7 1238 609.9 1237 610.5 1236 610.8 1235 610.9 1234 609.7 1233 608.9 1232 608.9 1231 609.0 1230 609.3 1229 609.6 1228 609.8 1227 610.2 1226 609.4Z M1283 599.5L1283 598.6 1284 597.3 1285 597.9 1286 598.1 1287 598.6 1288 598.9 1289 599.1 1290 599.1 1291 599.1 1292 598.6 1293 597.6 1294 598.1 1295 598.5 1296 598.9 1297 599.1 1298 599.1 1299 599.1 1300 599.1 1301 599.1 1302 599.1 1303 598.4 1304 597.6 1305 597.9 1305 601.1 1304 601.4 1303 600.6 1302 599.9 1301 599.9 1300 599.9 1299 599.9 1298 599.9 1297 599.9 1296 600.1 1295 600.5 1294 600.9 1293 601.4 1292 600.4 1291 599.9 1290 599.9 1289 599.9 1288 600.1 1287 600.4 1286 600.9 1285 601.1 1284 601.7 1283 600.4Z M1283 608.5L1283 607.4 1284 606.2 1285 606.1 1286 606.6 1287 606.9 1288 607.3 1289 607.6 1290 607.9 1291 608.1 1292 608.1 1293 608.1 1294 608.1 1295 607.5 1296 606.6 1297 606.6 1298 606.9 1299 607.3 1300 607.6 1301 607.9 1302 608.1 1303 608.1 1304 608.1 1305 607.7 1305 609.3 1304 608.9 1303 608.9 1302 608.9 1301 609.1 1300 609.4 1299 609.7 1298 610.1 1297 610.4 1296 610.4 1295 609.5 1294 608.9 1293 608.9 1292 608.9 1291 608.9 1290 609.1 1289 609.4 1288 609.7 1287 610.1 1286 610.4 1285 610.9 1284 610.8 1283 609.6Z M1455 599.5L1455 598.7 1456 597.8 1457 598.4 1458 599.1 1459 599.1 1460 598.3 1461 597.3 1462 598.0 1463 598.8 1464 599.1 1465 599.1 1466 599.1 1467 599.1 1468 598.6 1469 597.8 1470 597.9 1471 598.1 1472 598.2 1473 598.4 1474 598.7 1475 598.9 1476 599.1 1477 599.1 1477 599.9 1476 599.9 1475 600.1 1474 600.3 1473 600.6 1472 600.8 1471 600.9 1470 601.1 1469 601.2 1468 600.4 1467 599.9 1466 599.9 1465 599.9 1464 599.9 1463 600.2 1462 601.0 1461 601.7 1460 600.7 1459 599.9 1458 599.9 1457 600.6 1456 601.2 1455 600.3Z M1455 608.5L1455 607.5 1456 606.8 1457 607.4 1458 607.8 1459 608.1 1460 608.1 1461 607.6 1462 606.7 1463 607.3 1464 607.7 1465 608.1 1466 608.1 1467 608.1 1468 608.1 1469 608.1 1470 607.2 1471 605.8 1472 606.2 1473 606.5 1474 607.0 1475 607.0 1476 607.5 1477 607.6 1477 609.4 1476 609.5 1475 610.0 1474 610.0 1473 610.5 1472 610.8 1471 611.2 1470 609.8 1469 608.9 1468 608.9 1467 608.9 1466 608.9 1465 608.9 1464 609.3 1463 609.7 1462 610.3 1461 609.4 1460 608.9 1459 608.9 1458 609.2 1457 609.6 1456 610.2 1455 609.5Z M1512 599.5L1512 598.3 1513 597.2 1514 597.9 1515 598.5 1516 599.0 1517 599.1 1518 599.1 1519 599.1 1520 599.1 1521 599.1 1522 598.5 1523 597.7 1524 598.2 1525 598.5 1526 598.8 1527 599.1 1528 599.1 1529 599.1 1530 598.7 1531 598.0 1532 598.3 1533 598.7 1534 599.1 1534 599.9 1533 600.3 1532 600.7 1531 601.0 1530 600.3 1529 599.9 1528 599.9 1527 599.9 1526 600.2 1525 600.5 1524 600.8 1523 601.3 1522 600.5 1521 599.9 1520 599.9 1519 599.9 1518 599.9 1517 599.9 1516 600.0 1515 600.5 1514 601.1 1513 601.8 1512 600.7Z M1512 608.5L1512 607.5 1513 606.7 1514 606.8 1515 607.3 1516 607.7 1517 607.9 1518 608.1 1519 608.1 1520 608.1 1521 607.7 1522 606.7 1523 607.1 1524 607.3 1525 607.7 1526 608.0 1527 608.1 1528 608.1 1529 607.5 1530 606.6 1531 606.7 1532 607.1 1533 607.4 1534 607.7 1534 609.3 1533 609.6 1532 609.9 1531 610.3 1530 610.4 1529 609.5 1528 608.9 1527 608.9 1526 609.0 1525 609.3 1524 609.7 1523 609.9 1522 610.3 1521 609.3 1520 608.9 1519 608.9 1518 608.9 1517 609.1 1516 609.3 1515 609.7 1514 610.2 1513 610.3 1512 609.5Z M1398 623.5L1398 622.3 1399 621.0 1400 621.2 1401 621.7 1402 622.0 1403 622.1 1404 622.6 1405 622.7 1406 623.1 1407 623.1 1408 623.1 1409 623.1 1410 623.1 1411 623.1 1412 623.1 1413 622.6 1414 622.1 1415 622.3 1416 622.7 1417 623.1 1418 623.1 1419 623.1 1420 623.1 1421 623.1 1422 623.1 1423 622.6 1424 621.9 1425 622.5 1426 623.1 1427 623.1 1428 623.1 1429 622.7 1430 621.9 1431 622.0 1432 622.2 1433 622.6 1434 622.8 1435 623.0 1436 623.1 1437 623.1 1438 622.4 1439 621.7 1440 621.9 1441 622.5 1442 623.0 1443 623.1 1443 623.9 1442 624.0 1441 624.5 1440 625.1 1439 625.3 1438 624.6 1437 623.9 1436 623.9 1435 624.0 1434 624.2 1433 624.4 1432 624.8 1431 625.0 1430 625.1 1429 624.3 1428 623.9 1427 623.9 1426 623.9 1425 624.5 1424 625.1 1423 624.4 1422 623.9 1421 623.9 1420 623.9 1419 623.9 1418 623.9 1417 623.9 1416 624.3 1415 624.7 1414 624.9 1413 624.4 1412 623.9 1411 623.9 1410 623.9 1409 623.9 1408 623.9 1407 623.9 1406 623.9 1405 624.3 1404 624.4 1403 624.9 1402 625.0 1401 625.3 1400 625.8 1399 626.0 1398 624.7Z M1398 632.5L1398 631.4 1399 630.4 1400 630.9 1401 631.5 1402 632.1 1403 632.1 1404 632.1 1405 632.1 1406 632.1 1407 631.2 1408 630.1 1409 631.2 1410 631.8 1411 632.1 1412 632.1 1413 631.4 1414 630.1 1415 630.2 1416 630.6 1417 630.9 1418 631.4 1419 631.6 1420 631.8 1421 632.1 1422 632.1 1423 632.1 1424 631.2 1425 630.0 1426 630.9 1427 631.8 1428 632.1 1429 632.1 1430 632.1 1431 631.5 1432 630.7 1433 630.9 1434 630.9 1435 631.4 1436 631.7 1437 631.9 1438 632.1 1439 632.1 1440 631.7 1441 630.8 1442 630.9 1443 631.2 1443 633.8 1442 634.1 1441 634.2 1440 633.3 1439 632.9 1438 632.9 1437 633.1 1436 633.3 1435 633.6 1434 634.1 1433 634.1 1432 634.3 1431 633.5 1430 632.9 1429 632.9 1428 632.9 1427 633.2 1426 634.1 1425 635.0 1424 633.8 1423 632.9 1422 632.9 1421 632.9 1420 633.2 1419 633.4 1418 633.6 1417 634.1 1416 634.4 1415 634.8 1414 634.9 1413 633.6 1412 632.9 1411 632.9 1410 633.2 1409 633.8 1408 634.9 1407 633.8 1406 632.9 1405 632.9 1404 632.9 1403 632.9 1402 632.9 1401 633.5 1400 634.1 1399 634.6 1398 633.6Z M997 647.5L997 646.6 998 645.5 999 645.6 1000 646.1 1001 646.1 1002 646.5 1003 646.7 1004 646.8 1005 647.1 1006 647.1 1007 647.1 1008 647.1 1009 647.1 1010 647.1 1011 647.1 1012 646.1 1013 644.7 1014 644.9 1015 645.3 1016 645.9 1017 646.2 1018 646.5 1019 646.9 1020 647.1 1021 647.1 1022 646.6 1023 645.8 1024 646.6 1025 647.1 1026 647.1 1027 647.1 1028 647.1 1029 647.1 1030 646.6 1031 645.8 1032 646.0 1033 646.2 1034 646.5 1035 646.7 1036 646.8 1037 647.1 1038 647.1 1039 647.1 1040 647.1 1041 647.1 1042 646.2 1043 645.2 1044 645.1 1045 645.4 1046 645.9 1047 646.2 1048 646.6 1049 646.9 1050 647.1 1051 647.1 1052 647.1 1053 647.1 1054 646.4 1055 645.4 1056 645.9 1057 645.9 1058 646.5 1059 646.7 1060 647.0 1061 647.1 1062 647.1 1063 646.3 1064 645.3 1065 646.1 1066 646.6 1067 647.0 1068 647.1 1069 647.1 1070 646.1 1071 645.0 1072 645.6 1073 646.0 1074 646.5 1075 647.1 1076 647.1 1077 647.1 1078 647.1 1079 646.4 1080 645.1 1081 645.4 1082 645.7 1083 646.3 1084 646.4 1085 646.8 1086 647.1 1087 647.1 1088 647.1 1089 646.2 1090 645.1 1091 645.9 1092 646.8 1093 647.1 1094 647.1 1095 646.7 1096 645.7 1097 645.9 1098 646.2 1099 646.6 1100 646.8 1101 647.1 1102 647.1 1103 647.1 1104 646.6 1105 645.7 1106 646.1 1107 646.4 1108 646.6 1109 647.0 1110 647.1 1111 647.1 1112 647.1 1112 647.9 1111 647.9 1110 647.9 1109 648.0 1108 648.4 1107 648.6 1106 648.9 1105 649.3 1104 648.4 1103 647.9 1102 647.9 1101 647.9 1100 648.2 1099 648.4 1098 648.8 1097 649.1 1096 649.3 1095 648.3 1094 647.9 1093 647.9 1092 648.2 1091 649.1 1090 649.9 1089 648.8 1088 647.9 1087 647.9 1086 647.9 1085 648.2 1084 648.6 1083 648.7 1082 649.3 1081 649.6 1080 649.9 1079 648.6 1078 647.9 1077 647.9 1076 647.9 1075 647.9 1074 648.5 1073 649.0 1072 649.4 1071 650.0 1070 648.9 1069 647.9 1068 647.9 1067 648.0 1066 648.4 1065 648.9 1064 649.7 1063 648.7 1062 647.9 1061 647.9 1060 648.0 1059 648.3 1058 648.5 1057 649.1 1056 649.1 1055 649.6 1054 648.6 1053 647.9 1052 647.9 1051 647.9 1050 647.9 1049 648.1 1048 648.4 1047 648.8 1046 649.1 1045 649.6 1044 649.9 1043 649.8 1042 648.8 1041 647.9 1040 647.9 1039 647.9 1038 647.9 1037 647.9 1036 648.2 1035 648.3 1034 648.5 1033 648.8 1032 649.0 1031 649.2 1030 648.4 1029 647.9 1028 647.9 1027 647.9 1026 647.9 1025 647.9 1024 648.4 1023 649.2 1022 648.4 1021 647.9 1020 647.9 1019 648.1 1018 648.5 1017 648.8 1016 649.1 1015 649.7 1014 650.1 1013 650.3 1012 648.9 1011 647.9 1010 647.9 1009 647.9 1008 647.9 1007 647.9 1006 647.9 1005 647.9 1004 648.2 1003 648.3 1002 648.5 1001 648.9 1000 648.9 999 649.4 998 649.5 997 648.4Z M997 656.5L997 655.3 998 654.2 999 654.1 1000 654.7 1001 655.1 1002 655.2 1003 655.5 1004 655.9 1005 656.1 1006 656.1 1007 656.1 1008 656.1 1009 656.1 1010 656.1 1011 655.5 1012 654.7 1013 654.8 1014 655.1 1015 655.5 1016 655.5 1017 655.8 1018 656.0 1019 656.1 1020 656.1 1021 656.1 1022 656.1 1023 655.7 1024 654.7 1025 655.0 1026 655.3 1027 655.6 1028 656.0 1029 656.1 1030 656.1 1031 656.1 1032 656.1 1033 656.1 1034 655.5 1035 654.6 1036 655.1 1037 655.4 1038 655.9 1039 656.1 1040 656.1 1041 656.1 1042 656.1 1043 656.1 1044 655.2 1045 653.6 1046 654.0 1047 654.5 1048 654.6 1049 655.1 1050 655.4 1051 655.7 1052 655.9 1053 656.1 1054 656.1 1055 656.1 1056 656.1 1057 655.5 1058 654.3 1059 654.7 1060 655.0 1061 655.1 1062 655.5 1063 655.8 1064 656.0 1065 656.1 1066 656.1 1067 656.1 1068 656.1 1069 656.1 1070 655.4 1071 654.1 1072 654.5 1073 655.2 1074 655.4 1075 655.8 1076 656.1 1077 656.1 1078 656.1 1079 656.1 1080 655.5 1081 654.1 1082 654.7 1083 654.9 1084 655.2 1085 655.6 1086 656.0 1087 656.1 1088 656.1 1089 656.1 1090 656.1 1091 656.1 1092 656.1 1093 655.3 1094 654.2 1095 654.6 1096 655.3 1097 655.6 1098 656.1 1099 656.1 1100 656.1 1101 656.1 1102 656.1 1103 655.5 1104 654.7 1105 655.3 1106 656.0 1107 656.1 1108 656.1 1109 656.1 1110 656.1 1111 655.4 1112 654.7 1112 658.3 1111 657.6 1110 656.9 1109 656.9 1108 656.9 1107 656.9 1106 657.0 1105 657.7 1104 658.3 1103 657.5 1102 656.9 1101 656.9 1100 656.9 1099 656.9 1098 656.9 1097 657.4 1096 657.7 1095 658.4 1094 658.8 1093 657.7 1092 656.9 1091 656.9 1090 656.9 1089 656.9 1088 656.9 1087 656.9 1086 657.0 1085 657.4 1084 657.8 1083 658.1 1082 658.3 1081 658.9 1080 657.5 1079 656.9 1078 656.9 1077 656.9 1076 656.9 1075 657.2 1074 657.6 1073 657.8 1072 658.5 1071 658.9 1070 657.6 1069 656.9 1068 656.9 1067 656.9 1066 656.9 1065 656.9 1064 657.0 1063 657.2 1062 657.5 1061 657.9 1060 658.0 1059 658.3 1058 658.7 1057 657.5 1056 656.9 1055 656.9 1054 656.9 1053 656.9 1052 657.1 1051 657.3 1050 657.6 1049 657.9 1048 658.4 1047 658.5 1046 659.0 1045 659.4 1044 657.8 1043 656.9 1042 656.9 1041 656.9 1040 656.9 1039 656.9 1038 657.1 1037 657.6 1036 657.9 1035 658.4 1034 657.5 1033 656.9 1032 656.9 1031 656.9 1030 656.9 1029 656.9 1028 657.0 1027 657.4 1026 657.7 1025 658.0 1024 658.3 1023 657.3 1022 656.9 1021 656.9 1020 656.9 1019 656.9 1018 657.0 1017 657.2 1016 657.5 1015 657.5 1014 657.9 1013 658.2 1012 658.3 1011 657.5 1010 656.9 1009 656.9 1008 656.9 1007 656.9 1006 656.9 1005 656.9 1004 657.1 1003 657.5 1002 657.8 1001 657.9 1000 658.3 999 658.9 998 658.8 997 657.7Z M1398 647.5L1398 646.5 1399 645.4 1400 646.1 1401 646.5 1402 646.9 1403 647.1 1404 647.1 1405 647.1 1406 647.1 1407 646.6 1408 645.9 1409 646.1 1410 646.6 1411 647.1 1412 647.1 1413 647.1 1414 647.1 1415 647.1 1416 647.1 1417 646.4 1418 645.2 1419 646.3 1420 646.9 1421 647.1 1422 647.1 1423 647.1 1424 647.1 1425 646.3 1426 645.6 1427 646.3 1428 646.9 1429 647.1 1430 647.1 1431 646.7 1432 646.0 1433 646.6 1434 647.1 1435 647.1 1436 647.1 1437 646.4 1438 645.6 1439 645.9 1440 646.0 1441 646.4 1442 646.7 1443 647.0 1444 647.1 1445 647.1 1446 647.1 1447 646.7 1448 645.9 1449 646.2 1450 646.8 1451 647.1 1452 647.1 1453 646.4 1454 645.4 1455 645.6 1456 645.7 1457 646.0 1458 646.4 1459 646.6 1460 646.8 1461 647.0 1462 647.1 1463 647.1 1464 647.1 1465 646.6 1466 645.6 1467 646.2 1468 646.3 1469 646.6 1470 647.0 1471 647.1 1472 647.1 1473 647.1 1474 647.1 1475 647.1 1476 646.3 1477 645.0 1478 645.4 1479 645.5 1480 645.9 1481 646.2 1482 646.6 1483 647.0 1484 647.1 1485 647.1 1486 647.1 1487 646.3 1488 645.4 1489 645.3 1490 645.7 1491 645.9 1492 646.2 1493 646.4 1494 646.8 1495 647.0 1496 647.1 1497 647.1 1498 646.1 1499 645.1 1500 645.2 1501 645.8 1502 646.2 1503 646.7 1504 647.1 1505 647.1 1506 646.4 1507 645.2 1508 645.5 1509 645.6 1510 646.1 1511 646.4 1512 646.9 1513 647.1 1514 647.1 1515 646.4 1516 645.7 1517 646.3 1518 647.0 1519 647.1 1520 647.1 1521 647.1 1522 647.1 1523 647.1 1524 646.2 1525 644.8 1526 645.0 1527 645.5 1528 646.0 1529 646.3 1530 646.8 1531 647.1 1532 647.1 1533 646.4 1534 645.3 1535 646.3 1536 646.8 1537 647.1 1538 647.1 1539 646.4 1540 645.4 1541 645.6 1542 646.3 1543 646.7 1544 647.1 1545 647.1 1546 646.4 1547 645.4 1548 646.0 1549 646.6 1550 647.0 1551 647.1 1552 647.1 1553 646.4 1554 645.2 1555 645.2 1556 645.7 1557 646.1 1558 646.2 1559 646.6 1560 646.9 1561 647.1 1562 647.1 1563 647.1 1564 646.2 1565 644.8 1566 645.6 1567 646.3 1568 647.0 1569 647.1 1570 647.1 1570 647.9 1569 647.9 1568 648.0 1567 648.7 1566 649.4 1565 650.2 1564 648.8 1563 647.9 1562 647.9 1561 647.9 1560 648.1 1559 648.4 1558 648.8 1557 648.9 1556 649.3 1555 649.8 1554 649.8 1553 648.6 1552 647.9 1551 647.9 1550 648.0 1549 648.4 1548 649.0 1547 649.6 1546 648.6 1545 647.9 1544 647.9 1543 648.3 1542 648.7 1541 649.4 1540 649.6 1539 648.6 1538 647.9 1537 647.9 1536 648.2 1535 648.7 1534 649.7 1533 648.6 1532 647.9 1531 647.9 1530 648.2 1529 648.7 1528 649.0 1527 649.5 1526 650.0 1525 650.2 1524 648.8 1523 647.9 1522 647.9 1521 647.9 1520 647.9 1519 647.9 1518 648.0 1517 648.7 1516 649.3 1515 648.6 1514 647.9 1513 647.9 1512 648.1 1511 648.6 1510 648.9 1509 649.4 1508 649.5 1507 649.8 1506 648.6 1505 647.9 1504 647.9 1503 648.3 1502 648.8 1501 649.2 1500 649.8 1499 649.9 1498 648.9 1497 647.9 1496 647.9 1495 648.0 1494 648.2 1493 648.6 1492 648.8 1491 649.1 1490 649.3 1489 649.7 1488 649.6 1487 648.7 1486 647.9 1485 647.9 1484 647.9 1483 648.0 1482 648.4 1481 648.8 1480 649.1 1479 649.5 1478 649.6 1477 650.0 1476 648.7 1475 647.9 1474 647.9 1473 647.9 1472 647.9 1471 647.9 1470 648.0 1469 648.4 1468 648.7 1467 648.8 1466 649.4 1465 648.4 1464 647.9 1463 647.9 1462 647.9 1461 648.0 1460 648.2 1459 648.4 1458 648.6 1457 649.0 1456 649.3 1455 649.4 1454 649.6 1453 648.6 1452 647.9 1451 647.9 1450 648.2 1449 648.8 1448 649.1 1447 648.3 1446 647.9 1445 647.9 1444 647.9 1443 648.0 1442 648.3 1441 648.6 1440 649.0 1439 649.1 1438 649.4 1437 648.6 1436 647.9 1435 647.9 1434 647.9 1433 648.4 1432 649.0 1431 648.3 1430 647.9 1429 647.9 1428 648.1 1427 648.7 1426 649.4 1425 648.7 1424 647.9 1423 647.9 1422 647.9 1421 647.9 1420 648.1 1419 648.7 1418 649.8 1417 648.6 1416 647.9 1415 647.9 1414 647.9 1413 647.9 1412 647.9 1411 647.9 1410 648.4 1409 648.9 1408 649.1 1407 648.4 1406 647.9 1405 647.9 1404 647.9 1403 647.9 1402 648.1 1401 648.5 1400 648.9 1399 649.6 1398 648.5Z M1398 656.5L1398 655.6 1399 654.8 1400 655.3 1401 655.7 1402 656.1 1403 656.1 1404 656.1 1405 656.1 1406 656.1 1407 656.1 1408 655.3 1409 654.0 1410 654.7 1411 655.4 1412 656.0 1413 656.1 1414 656.1 1415 656.1 1416 656.1 1417 655.5 1418 654.4 1419 654.7 1420 655.0 1421 655.5 1422 655.9 1423 656.1 1424 656.1 1425 655.5 1426 654.6 1427 655.0 1428 655.6 1429 656.0 1430 656.1 1431 656.1 1432 656.1 1433 656.1 1434 655.2 1435 654.3 1436 654.9 1437 655.7 1438 656.1 1439 656.1 1440 656.1 1441 656.1 1442 655.5 1443 654.6 1444 655.0 1445 655.2 1446 655.4 1447 655.6 1448 655.8 1449 656.1 1450 656.1 1451 656.1 1452 656.1 1453 655.6 1454 654.7 1455 654.9 1456 655.4 1457 655.6 1458 655.8 1459 656.1 1460 656.1 1461 656.1 1462 655.7 1463 654.7 1464 655.3 1465 655.6 1466 656.0 1467 656.1 1468 656.1 1469 656.1 1470 656.1 1471 656.1 1472 656.1 1473 655.4 1474 654.2 1475 654.5 1476 654.6 1477 655.2 1478 655.4 1479 655.9 1480 656.1 1481 656.1 1482 656.1 1483 656.1 1484 655.2 1485 653.7 1486 654.3 1487 654.3 1488 654.7 1489 655.3 1490 655.5 1491 655.9 1492 656.1 1493 656.1 1494 655.0 1495 654.1 1496 654.9 1497 655.9 1498 656.1 1499 656.1 1500 656.1 1501 656.1 1502 656.1 1503 655.4 1504 654.7 1505 655.2 1506 655.7 1507 656.1 1508 656.1 1509 655.5 1510 654.8 1511 655.2 1512 655.7 1513 656.1 1514 656.1 1515 656.1 1516 655.5 1517 654.9 1518 654.9 1519 655.4 1520 655.6 1521 655.9 1522 656.1 1523 656.1 1524 656.1 1525 656.1 1526 656.1 1527 655.6 1528 654.7 1529 655.1 1530 655.0 1531 655.4 1532 655.7 1533 655.7 1534 656.0 1535 656.1 1536 656.1 1537 656.1 1538 656.1 1539 656.1 1540 655.6 1541 655.0 1542 654.9 1543 655.2 1544 655.4 1545 655.7 1546 655.9 1547 656.1 1548 656.1 1549 656.1 1550 656.1 1551 655.7 1552 654.7 1553 655.0 1554 655.4 1555 655.5 1556 655.9 1557 656.1 1558 656.1 1559 656.1 1560 656.1 1561 655.5 1562 654.6 1563 654.8 1564 655.0 1565 655.4 1566 655.7 1567 655.9 1568 656.1 1569 656.1 1570 656.1 1570 656.9 1569 656.9 1568 656.9 1567 657.1 1566 657.3 1565 657.6 1564 658.0 1563 658.2 1562 658.4 1561 657.5 1560 656.9 1559 656.9 1558 656.9 1557 656.9 1556 657.1 1555 657.5 1554 657.6 1553 658.0 1552 658.3 1551 657.3 1550 656.9 1549 656.9 1548 656.9 1547 656.9 1546 657.1 1545 657.3 1544 657.6 1543 657.8 1542 658.1 1541 658.0 1540 657.4 1539 656.9 1538 656.9 1537 656.9 1536 656.9 1535 656.9 1534 657.0 1533 657.3 1532 657.3 1531 657.6 1530 658.0 1529 657.9 1528 658.3 1527 657.4 1526 656.9 1525 656.9 1524 656.9 1523 656.9 1522 656.9 1521 657.1 1520 657.4 1519 657.6 1518 658.1 1517 658.1 1516 657.5 1515 656.9 1514 656.9 1513 656.9 1512 657.3 1511 657.8 1510 658.2 1509 657.5 1508 656.9 1507 656.9 1506 657.3 1505 657.8 1504 658.3 1503 657.6 1502 656.9 1501 656.9 1500 656.9 1499 656.9 1498 656.9 1497 657.1 1496 658.1 1495 658.9 1494 658.0 1493 656.9 1492 656.9 1491 657.1 1490 657.5 1489 657.7 1488 658.3 1487 658.7 1486 658.7 1485 659.3 1484 657.8 1483 656.9 1482 656.9 1481 656.9 1480 656.9 1479 657.1 1478 657.6 1477 657.8 1476 658.4 1475 658.5 1474 658.8 1473 657.6 1472 656.9 1471 656.9 1470 656.9 1469 656.9 1468 656.9 1467 656.9 1466 657.0 1465 657.4 1464 657.7 1463 658.3 1462 657.3 1461 656.9 1460 656.9 1459 656.9 1458 657.2 1457 657.4 1456 657.6 1455 658.1 1454 658.3 1453 657.4 1452 656.9 1451 656.9 1450 656.9 1449 656.9 1448 657.2 1447 657.4 1446 657.6 1445 657.8 1444 658.0 1443 658.4 1442 657.5 1441 656.9 1440 656.9 1439 656.9 1438 656.9 1437 657.3 1436 658.1 1435 658.7 1434 657.8 1433 656.9 1432 656.9 1431 656.9 1430 656.9 1429 657.0 1428 657.4 1427 658.0 1426 658.4 1425 657.5 1424 656.9 1423 656.9 1422 657.1 1421 657.5 1420 658.0 1419 658.3 1418 658.6 1417 657.5 1416 656.9 1415 656.9 1414 656.9 1413 656.9 1412 657.0 1411 657.6 1410 658.3 1409 659.0 1408 657.7 1407 656.9 1406 656.9 1405 656.9 1404 656.9 1403 656.9 1402 656.9 1401 657.3 1400 657.7 1399 658.2 1398 657.4Z M1393 671.5L1393 671.5 1394 669.7 1395 670.0 1396 670.6 1397 671.0 1398 671.3 1399 671.5 1399 671.5 1398 671.7 1397 672.0 1396 672.4 1395 673.0 1394 673.3 1393 671.5Z M1393 680.5L1393 680.5 1394 678.7 1395 679.2 1396 679.7 1397 680.0 1398 680.3 1399 680.5 1399 680.5 1398 680.7 1397 681.0 1396 681.3 1395 681.8 1394 682.3 1393 680.5Z M1340 695.5L1340 694.7 1341 694.0 1342 694.2 1343 694.3 1344 694.5 1345 694.7 1346 695.0 1347 695.1 1348 695.1 1349 695.1 1350 695.1 1351 694.6 1352 693.8 1353 694.4 1354 695.0 1355 695.1 1356 694.4 1357 693.6 1358 693.6 1359 694.0 1360 694.0 1361 694.3 1362 694.6 1363 694.8 1364 695.1 1365 695.1 1366 695.1 1367 695.1 1368 695.1 1369 695.1 1370 694.8 1371 693.9 1372 694.2 1373 694.5 1374 694.7 1375 695.0 1376 695.1 1377 695.1 1378 695.1 1379 695.1 1380 695.1 1381 694.6 1382 693.9 1383 694.4 1384 694.9 1385 695.1 1386 695.1 1387 695.1 1388 694.3 1389 693.0 1390 693.3 1391 693.5 1392 693.9 1393 694.1 1394 694.5 1395 694.8 1396 695.0 1397 695.1 1398 695.1 1399 695.1 1400 695.1 1401 694.5 1402 693.7 1403 694.1 1404 694.4 1405 694.8 1406 695.1 1407 695.1 1408 695.1 1409 694.6 1410 693.7 1411 694.4 1412 695.0 1413 695.1 1414 695.1 1415 694.3 1416 693.3 1417 693.5 1418 693.8 1419 694.0 1420 694.3 1421 694.7 1422 694.9 1423 695.1 1424 695.1 1425 695.1 1426 695.1 1427 694.7 1428 693.7 1429 693.9 1430 694.3 1431 694.5 1432 694.6 1433 694.9 1434 695.1 1435 695.1 1436 695.1 1437 695.1 1438 695.1 1439 694.8 1440 694.2 1441 694.1 1442 694.4 1443 694.6 1444 694.8 1445 695.1 1446 695.1 1447 695.1 1448 694.4 1449 693.3 1450 693.6 1451 693.9 1452 694.1 1453 694.4 1454 694.7 1454 696.3 1453 696.6 1452 696.9 1451 697.1 1450 697.4 1449 697.7 1448 696.6 1447 695.9 1446 695.9 1445 695.9 1444 696.2 1443 696.4 1442 696.6 1441 696.9 1440 696.8 1439 696.2 1438 695.9 1437 695.9 1436 695.9 1435 695.9 1434 695.9 1433 696.1 1432 696.4 1431 696.5 1430 696.7 1429 697.1 1428 697.3 1427 696.3 1426 695.9 1425 695.9 1424 695.9 1423 695.9 1422 696.1 1421 696.3 1420 696.7 1419 697.0 1418 697.2 1417 697.5 1416 697.7 1415 696.7 1414 695.9 1413 695.9 1412 696.0 1411 696.6 1410 697.3 1409 696.4 1408 695.9 1407 695.9 1406 695.9 1405 696.2 1404 696.6 1403 696.9 1402 697.3 1401 696.5 1400 695.9 1399 695.9 1398 695.9 1397 695.9 1396 696.0 1395 696.2 1394 696.5 1393 696.9 1392 697.1 1391 697.5 1390 697.7 1389 698.0 1388 696.7 1387 695.9 1386 695.9 1385 695.9 1384 696.1 1383 696.6 1382 697.1 1381 696.4 1380 695.9 1379 695.9 1378 695.9 1377 695.9 1376 695.9 1375 696.0 1374 696.3 1373 696.5 1372 696.8 1371 697.1 1370 696.2 1369 695.9 1368 695.9 1367 695.9 1366 695.9 1365 695.9 1364 695.9 1363 696.2 1362 696.4 1361 696.7 1360 697.0 1359 697.0 1358 697.4 1357 697.4 1356 696.6 1355 695.9 1354 696.0 1353 696.6 1352 697.2 1351 696.4 1350 695.9 1349 695.9 1348 695.9 1347 695.9 1346 696.0 1345 696.3 1344 696.5 1343 696.7 1342 696.8 1341 697.0 1340 696.3Z M1340 704.5L1340 703.4 1341 702.3 1342 702.5 1343 702.6 1344 702.8 1345 703.2 1346 703.6 1347 703.7 1348 704.1 1349 704.1 1350 704.1 1351 703.7 1352 702.6 1353 703.0 1354 703.4 1355 703.7 1356 703.9 1357 704.1 1358 704.1 1359 703.6 1360 702.9 1361 703.1 1362 703.3 1363 703.7 1364 703.9 1365 704.1 1366 704.1 1367 703.4 1368 702.5 1369 702.8 1370 702.9 1371 703.2 1372 703.7 1373 704.0 1374 704.1 1375 704.1 1376 703.6 1377 702.7 1378 703.0 1379 703.4 1380 703.6 1381 703.8 1382 704.1 1383 704.1 1384 704.1 1385 703.4 1386 702.0 1387 702.8 1388 703.2 1389 703.7 1390 704.1 1391 704.1 1392 704.1 1393 704.1 1394 703.5 1395 702.7 1396 703.2 1397 703.4 1398 703.8 1399 704.1 1400 704.1 1401 704.1 1402 704.1 1403 704.1 1404 704.1 1405 703.5 1406 702.8 1407 702.6 1408 702.8 1409 703.2 1410 703.4 1411 703.6 1412 703.9 1413 704.1 1414 704.1 1415 704.1 1416 703.4 1417 702.7 1418 703.3 1419 703.9 1420 704.1 1421 704.1 1422 704.1 1423 703.6 1424 702.9 1425 702.9 1426 703.3 1427 703.6 1428 703.8 1429 704.1 1430 704.1 1431 704.1 1432 704.1 1433 704.1 1434 704.1 1435 704.1 1436 703.6 1437 702.4 1438 702.7 1439 703.0 1440 703.3 1441 703.7 1442 703.9 1443 704.1 1444 704.1 1445 703.8 1446 702.8 1447 703.4 1448 703.7 1449 703.9 1450 704.1 1451 704.1 1452 704.1 1453 704.1 1454 703.7 1454 705.3 1453 704.9 1452 704.9 1451 704.9 1450 704.9 1449 705.1 1448 705.3 1447 705.6 1446 706.2 1445 705.2 1444 704.9 1443 704.9 1442 705.1 1441 705.3 1440 705.7 1439 706.0 1438 706.3 1437 706.6 1436 705.4 1435 704.9 1434 704.9 1433 704.9 1432 704.9 1431 704.9 1430 704.9 1429 704.9 1428 705.2 1427 705.4 1426 705.7 1425 706.1 1424 706.1 1423 705.4 1422 704.9 1421 704.9 1420 704.9 1419 705.1 1418 705.7 1417 706.3 1416 705.6 1415 704.9 1414 704.9 1413 704.9 1412 705.1 1411 705.4 1410 705.6 1409 705.8 1408 706.2 1407 706.4 1406 706.2 1405 705.5 1404 704.9 1403 704.9 1402 704.9 1401 704.9 1400 704.9 1399 704.9 1398 705.2 1397 705.6 1396 705.8 1395 706.3 1394 705.5 1393 704.9 1392 704.9 1391 704.9 1390 704.9 1389 705.3 1388 705.8 1387 706.2 1386 707.0 1385 705.6 1384 704.9 1383 704.9 1382 704.9 1381 705.2 1380 705.4 1379 705.6 1378 706.0 1377 706.3 1376 705.4 1375 704.9 1374 704.9 1373 705.0 1372 705.3 1371 705.8 1370 706.1 1369 706.2 1368 706.5 1367 705.6 1366 704.9 1365 704.9 1364 705.1 1363 705.3 1362 705.7 1361 705.9 1360 706.1 1359 705.4 1358 704.9 1357 704.9 1356 705.1 1355 705.3 1354 705.6 1353 706.0 1352 706.4 1351 705.3 1350 704.9 1349 704.9 1348 704.9 1347 705.3 1346 705.4 1345 705.8 1344 706.2 1343 706.4 1342 706.5 1341 706.7 1340 705.6Z M658 719.5L658 718.6 659 717.7 660 718.4 661 718.8 662 719.1 663 719.1 664 718.7 665 717.9 666 718.3 667 718.5 668 718.8 669 719.0 670 719.1 671 719.1 672 719.1 673 718.8 674 717.9 675 718.2 676 718.3 677 718.5 678 718.8 679 719.0 680 719.1 681 719.1 682 719.1 683 719.1 684 719.1 685 719.1 686 719.1 687 718.8 688 718.1 689 718.2 690 718.4 691 718.6 692 718.8 693 718.9 694 719.0 695 719.1 696 719.1 697 719.1 698 718.5 699 717.5 700 717.9 701 718.0 702 718.5 703 718.7 704 719.0 705 719.1 706 719.1 707 719.1 708 719.1 709 719.1 710 718.6 711 717.9 712 718.4 713 719.1 714 719.1 715 719.1 716 719.1 717 718.9 718 718.4 719 718.6 720 718.6 721 718.9 722 719.1 723 719.1 724 719.1 725 719.1 726 718.8 727 718.1 728 718.1 729 718.4 730 718.7 731 718.8 732 718.9 733 719.1 734 719.1 735 719.1 736 719.1 737 719.1 738 719.1 739 719.1 740 719.1 741 718.6 742 717.6 743 717.8 744 717.9 745 718.1 746 718.4 747 718.7 748 718.9 749 719.1 750 719.1 751 719.1 752 719.1 753 719.1 754 719.0 755 718.3 756 718.4 757 718.7 758 719.0 759 719.1 760 719.1 761 719.1 762 719.1 763 719.1 764 718.9 765 718.1 766 718.4 767 718.7 768 718.9 769 719.1 770 719.1 771 719.1 772 719.1 773 719.1 774 719.1 774 719.9 773 719.9 772 719.9 771 719.9 770 719.9 769 719.9 768 720.1 767 720.3 766 720.6 765 720.9 764 720.1 763 719.9 762 719.9 761 719.9 760 719.9 759 719.9 758 720.0 757 720.3 756 720.6 755 720.7 754 720.0 753 719.9 752 719.9 751 719.9 750 719.9 749 719.9 748 720.1 747 720.3 746 720.6 745 720.9 744 721.1 743 721.2 742 721.4 741 720.4 740 719.9 739 719.9 738 719.9 737 719.9 736 719.9 735 719.9 734 719.9 733 719.9 732 720.1 731 720.2 730 720.3 729 720.6 728 720.9 727 720.9 726 720.2 725 719.9 724 719.9 723 719.9 722 719.9 721 720.1 720 720.4 719 720.4 718 720.6 717 720.1 716 719.9 715 719.9 714 719.9 713 719.9 712 720.6 711 721.1 710 720.4 709 719.9 708 719.9 707 719.9 706 719.9 705 719.9 704 720.0 703 720.3 702 720.5 701 721.0 700 721.1 699 721.5 698 720.5 697 719.9 696 719.9 695 719.9 694 720.0 693 720.1 692 720.2 691 720.4 690 720.6 689 720.8 688 720.9 687 720.2 686 719.9 685 719.9 684 719.9 683 719.9 682 719.9 681 719.9 680 719.9 679 720.0 678 720.2 677 720.5 676 720.7 675 720.8 674 721.1 673 720.2 672 719.9 671 719.9 670 719.9 669 720.0 668 720.2 667 720.5 666 720.7 665 721.1 664 720.3 663 719.9 662 719.9 661 720.2 660 720.6 659 721.3 658 720.4Z M658 728.5L658 727.7 659 726.8 660 727.3 661 727.7 662 728.1 663 728.1 664 727.8 665 727.0 666 727.4 667 727.5 668 727.8 669 728.1 670 728.1 671 728.1 672 728.1 673 728.1 674 728.1 675 728.1 676 727.6 677 726.8 678 727.2 679 727.3 680 727.7 681 727.8 682 728.1 683 728.1 684 728.1 685 728.1 686 728.1 687 728.1 688 727.7 689 726.9 690 727.1 691 727.7 692 728.1 693 728.1 694 728.1 695 728.1 696 727.8 697 727.2 698 727.7 699 727.9 700 728.1 701 728.1 702 728.1 703 728.1 704 728.1 705 727.8 706 727.2 707 727.4 708 727.4 709 727.6 710 727.9 711 728.0 712 728.1 713 728.1 714 728.1 715 728.1 716 728.1 717 728.1 718 728.1 719 728.1 720 727.7 721 726.9 722 727.5 723 727.7 724 728.1 725 728.1 726 728.1 727 728.1 728 728.1 729 728.1 730 727.7 731 726.6 732 726.7 733 727.2 734 727.4 735 727.6 736 727.8 737 728.0 738 728.1 739 728.1 740 728.1 741 728.1 742 728.1 743 728.1 744 727.7 745 727.1 746 727.6 747 727.9 748 728.1 749 728.1 750 727.6 751 726.6 752 727.2 753 727.5 754 727.6 755 728.0 756 728.1 757 728.1 758 728.1 759 728.1 760 727.8 761 727.3 762 727.5 763 727.7 764 727.9 765 728.1 766 728.1 767 728.1 768 728.1 769 728.1 770 728.1 771 727.7 772 727.0 773 727.1 774 727.3 774 729.7 773 729.9 772 730.0 771 729.3 770 728.9 769 728.9 768 728.9 767 728.9 766 728.9 765 728.9 764 729.1 763 729.3 762 729.5 761 729.7 760 729.2 759 728.9 758 728.9 757 728.9 756 728.9 755 729.0 754 729.4 753 729.5 752 729.8 751 730.4 750 729.4 749 728.9 748 728.9 747 729.1 746 729.4 745 729.9 744 729.3 743 728.9 742 728.9 741 728.9 740 728.9 739 728.9 738 728.9 737 729.0 736 729.2 735 729.4 734 729.6 733 729.8 732 730.3 731 730.4 730 729.3 729 728.9 728 728.9 727 728.9 726 728.9 725 728.9 724 728.9 723 729.3 722 729.5 721 730.1 720 729.3 719 728.9 718 728.9 717 728.9 716 728.9 715 728.9 714 728.9 713 728.9 712 728.9 711 729.0 710 729.1 709 729.4 708 729.6 707 729.6 706 729.8 705 729.2 704 728.9 703 728.9 702 728.9 701 728.9 700 728.9 699 729.1 698 729.3 697 729.8 696 729.2 695 728.9 694 728.9 693 728.9 692 728.9 691 729.3 690 729.9 689 730.1 688 729.3 687 728.9 686 728.9 685 728.9 684 728.9 683 728.9 682 728.9 681 729.2 680 729.3 679 729.7 678 729.8 677 730.2 676 729.4 675 728.9 674 728.9 673 728.9 672 728.9 671 728.9 670 728.9 669 728.9 668 729.2 667 729.5 666 729.6 665 730.0 664 729.2 663 728.9 662 728.9 661 729.3 660 729.7 659 730.2 658 729.3Z M1340 719.5L1340 718.9 1341 718.1 1342 718.2 1343 718.5 1344 718.8 1345 719.0 1346 719.1 1347 719.1 1348 719.1 1349 719.1 1350 718.8 1351 718.2 1352 718.4 1353 718.5 1354 718.6 1355 718.8 1356 719.0 1357 719.1 1358 719.1 1359 719.1 1360 719.1 1361 719.1 1362 718.8 1363 718.1 1364 718.7 1365 719.1 1366 719.1 1367 718.8 1368 718.0 1369 718.7 1370 719.1 1371 719.1 1372 719.1 1373 718.8 1374 718.2 1375 718.5 1376 718.6 1377 718.8 1378 718.9 1379 719.1 1380 719.1 1381 719.1 1382 719.1 1383 718.8 1384 718.2 1385 718.4 1386 718.7 1387 719.0 1388 719.1 1389 719.1 1390 719.1 1391 719.1 1392 718.7 1393 717.9 1394 717.9 1395 718.2 1396 718.3 1397 718.6 1398 718.8 1399 719.0 1400 719.1 1401 719.1 1402 719.1 1403 718.7 1404 718.1 1405 718.6 1406 719.1 1407 719.1 1408 719.0 1409 718.3 1410 718.6 1411 718.6 1412 718.8 1413 718.9 1414 719.1 1415 719.1 1416 719.1 1417 719.1 1418 719.1 1419 719.1 1420 718.9 1421 718.0 1422 718.3 1423 718.6 1424 718.8 1425 718.9 1426 719.1 1427 719.1 1428 719.1 1429 719.1 1430 719.1 1431 719.1 1432 718.7 1433 718.2 1434 718.5 1435 718.7 1436 719.0 1437 719.1 1438 719.1 1439 719.1 1440 719.1 1441 719.1 1442 718.9 1443 718.4 1444 718.6 1445 718.9 1446 719.1 1447 719.1 1448 719.1 1449 719.1 1449 719.9 1448 719.9 1447 719.9 1446 719.9 1445 720.1 1444 720.4 1443 720.6 1442 720.1 1441 719.9 1440 719.9 1439 719.9 1438 719.9 1437 719.9 1436 720.0 1435 720.3 1434 720.5 1433 720.8 1432 720.3 1431 719.9 1430 719.9 1429 719.9 1428 719.9 1427 719.9 1426 719.9 1425 720.1 1424 720.2 1423 720.4 1422 720.7 1421 721.0 1420 720.1 1419 719.9 1418 719.9 1417 719.9 1416 719.9 1415 719.9 1414 719.9 1413 720.1 1412 720.2 1411 720.4 1410 720.4 1409 720.7 1408 720.0 1407 719.9 1406 719.9 1405 720.4 1404 720.9 1403 720.3 1402 719.9 1401 719.9 1400 719.9 1399 720.0 1398 720.2 1397 720.4 1396 720.7 1395 720.8 1394 721.1 1393 721.1 1392 720.3 1391 719.9 1390 719.9 1389 719.9 1388 719.9 1387 720.0 1386 720.3 1385 720.6 1384 720.8 1383 720.2 1382 719.9 1381 719.9 1380 719.9 1379 719.9 1378 720.1 1377 720.2 1376 720.4 1375 720.5 1374 720.8 1373 720.2 1372 719.9 1371 719.9 1370 719.9 1369 720.3 1368 721.0 1367 720.2 1366 719.9 1365 719.9 1364 720.3 1363 720.9 1362 720.2 1361 719.9 1360 719.9 1359 719.9 1358 719.9 1357 719.9 1356 720.0 1355 720.2 1354 720.4 1353 720.5 1352 720.6 1351 720.8 1350 720.2 1349 719.9 1348 719.9 1347 719.9 1346 719.9 1345 720.0 1344 720.2 1343 720.5 1342 720.8 1341 720.9 1340 720.1Z M1340 728.5L1340 727.9 1341 727.3 1342 727.4 1343 727.7 1344 727.9 1345 728.1 1346 728.1 1347 728.1 1348 728.1 1349 728.1 1350 728.1 1351 728.1 1352 727.6 1353 726.7 1354 727.1 1355 727.2 1356 727.6 1357 727.9 1358 728.0 1359 728.1 1360 728.1 1361 728.1 1362 728.1 1363 728.1 1364 728.1 1365 727.9 1366 727.6 1367 727.9 1368 728.1 1369 728.1 1370 728.1 1371 728.1 1372 728.1 1373 727.8 1374 727.0 1375 727.5 1376 727.8 1377 728.1 1378 728.1 1379 727.7 1380 726.8 1381 727.4 1382 727.7 1383 728.1 1384 728.1 1385 728.1 1386 728.1 1387 727.8 1388 727.0 1389 727.3 1390 727.6 1391 727.8 1392 728.1 1393 728.1 1394 728.1 1395 727.8 1396 727.1 1397 727.5 1398 727.9 1399 728.1 1400 728.1 1401 728.1 1402 728.1 1403 728.1 1404 727.9 1405 727.1 1406 727.4 1407 727.7 1408 727.9 1409 728.1 1410 728.1 1411 728.1 1412 728.1 1413 728.1 1414 728.1 1415 728.1 1416 727.8 1417 727.2 1418 727.6 1419 727.9 1420 728.1 1421 728.1 1422 728.1 1423 728.1 1424 728.0 1425 727.3 1426 727.6 1427 727.9 1428 728.1 1429 728.1 1430 728.1 1431 727.7 1432 727.1 1433 727.7 1434 728.1 1435 728.1 1436 728.1 1437 728.1 1438 728.1 1439 728.1 1440 727.8 1441 727.2 1442 727.1 1443 727.5 1444 727.5 1445 727.8 1446 728.0 1447 728.1 1448 728.1 1449 728.1 1449 728.9 1448 728.9 1447 728.9 1446 729.0 1445 729.2 1444 729.5 1443 729.5 1442 729.9 1441 729.8 1440 729.2 1439 728.9 1438 728.9 1437 728.9 1436 728.9 1435 728.9 1434 728.9 1433 729.3 1432 729.9 1431 729.3 1430 728.9 1429 728.9 1428 728.9 1427 729.1 1426 729.4 1425 729.7 1424 729.0 1423 728.9 1422 728.9 1421 728.9 1420 728.9 1419 729.1 1418 729.4 1417 729.8 1416 729.2 1415 728.9 1414 728.9 1413 728.9 1412 728.9 1411 728.9 1410 728.9 1409 728.9 1408 729.1 1407 729.3 1406 729.6 1405 729.9 1404 729.1 1403 728.9 1402 728.9 1401 728.9 1400 728.9 1399 728.9 1398 729.1 1397 729.5 1396 729.9 1395 729.2 1394 728.9 1393 728.9 1392 728.9 1391 729.2 1390 729.4 1389 729.7 1388 730.0 1387 729.2 1386 728.9 1385 728.9 1384 728.9 1383 728.9 1382 729.3 1381 729.6 1380 730.2 1379 729.3 1378 728.9 1377 728.9 1376 729.2 1375 729.5 1374 730.0 1373 729.2 1372 728.9 1371 728.9 1370 728.9 1369 728.9 1368 728.9 1367 729.1 1366 729.4 1365 729.1 1364 728.9 1363 728.9 1362 728.9 1361 728.9 1360 728.9 1359 728.9 1358 729.0 1357 729.1 1356 729.4 1355 729.8 1354 729.9 1353 730.3 1352 729.4 1351 728.9 1350 728.9 1349 728.9 1348 728.9 1347 728.9 1346 728.9 1345 728.9 1344 729.1 1343 729.3 1342 729.6 1341 729.7 1340 729.1Z M997 743.5L997 742.4 998 742.1 999 742.2 1000 742.1 1001 742.1 1002 742.0 1003 741.5 1004 741.6 1005 741.7 1006 742.0 1007 742.0 1008 742.3 1009 742.3 1010 742.4 1011 741.9 1012 741.5 1013 740.9 1014 740.6 1015 741.0 1016 741.7 1017 742.3 1018 742.2 1019 742.1 1020 741.9 1021 741.8 1022 741.5 1023 741.5 1024 741.7 1025 741.8 1026 741.5 1027 741.6 1028 741.7 1029 742.1 1030 742.2 1031 742.1 1032 742.4 1033 741.8 1034 741.3 1035 741.1 1036 741.2 1037 740.3 1038 740.8 1039 741.0 1040 741.0 1041 741.5 1042 741.5 1043 741.8 1044 742.1 1045 741.7 1046 741.5 1047 741.5 1048 741.7 1049 741.9 1050 742.2 1051 742.1 1052 741.9 1053 741.3 1054 741.3 1055 741.3 1056 740.6 1057 741.2 1058 740.5 1059 740.5 1060 740.6 1061 741.0 1062 741.1 1063 741.4 1064 741.7 1065 741.7 1066 741.9 1067 742.1 1068 741.6 1069 741.6 1070 741.4 1071 741.5 1072 741.4 1073 741.0 1074 741.2 1075 741.4 1076 741.6 1077 742.0 1078 741.9 1079 741.6 1080 741.5 1081 741.7 1082 740.9 1083 740.9 1084 741.0 1085 740.4 1086 740.6 1087 740.7 1088 741.3 1089 741.3 1090 741.7 1091 741.9 1092 742.1 1093 741.8 1094 741.5 1095 741.5 1096 741.1 1097 741.2 1098 740.8 1099 741.4 1100 741.2 1101 741.2 1102 741.3 1103 741.3 1104 741.6 1105 741.9 1106 742.0 1107 742.6 1108 742.3 1109 742.4 1110 742.0 1110 745.0 1109 744.6 1108 744.7 1107 744.4 1106 745.0 1105 745.1 1104 745.4 1103 745.7 1102 745.7 1101 745.8 1100 745.8 1099 745.6 1098 746.2 1097 745.8 1096 745.9 1095 745.5 1094 745.5 1093 745.2 1092 744.9 1091 745.1 1090 745.3 1089 745.7 1088 745.7 1087 746.3 1086 746.4 1085 746.6 1084 746.0 1083 746.1 1082 746.1 1081 745.3 1080 745.5 1079 745.4 1078 745.1 1077 745.0 1076 745.4 1075 745.6 1074 745.8 1073 746.0 1072 745.6 1071 745.5 1070 745.6 1069 745.4 1068 745.4 1067 744.9 1066 745.1 1065 745.3 1064 745.3 1063 745.6 1062 745.9 1061 746.0 1060 746.4 1059 746.5 1058 746.5 1057 745.8 1056 746.4 1055 745.7 1054 745.7 1053 745.7 1052 745.1 1051 744.9 1050 744.8 1049 745.1 1048 745.3 1047 745.5 1046 745.5 1045 745.3 1044 744.9 1043 745.2 1042 745.5 1041 745.5 1040 746.0 1039 746.0 1038 746.2 1037 746.7 1036 745.8 1035 745.9 1034 745.7 1033 745.2 1032 744.6 1031 744.9 1030 744.8 1029 744.9 1028 745.3 1027 745.4 1026 745.5 1025 745.2 1024 745.3 1023 745.5 1022 745.5 1021 745.2 1020 745.1 1019 744.9 1018 744.8 1017 744.7 1016 745.3 1015 746.0 1014 746.4 1013 746.1 1012 745.5 1011 745.1 1010 744.6 1009 744.7 1008 744.7 1007 745.0 1006 745.0 1005 745.3 1004 745.4 1003 745.5 1002 745.0 1001 744.9 1000 744.9 999 744.8 998 744.9 997 744.6Z M997 752.5L997 751.0 998 750.2 999 750.2 1000 750.2 1001 750.3 1002 750.8 1003 750.6 1004 750.5 1005 750.5 1006 749.9 1007 749.7 1008 750.1 1009 749.7 1010 749.3 1011 749.4 1012 750.2 1013 750.1 1014 750.1 1015 750.3 1016 750.9 1017 751.6 1018 751.4 1019 751.0 1020 751.2 1021 750.8 1022 750.9 1023 750.9 1024 750.9 1025 751.4 1026 751.4 1027 751.6 1028 750.8 1029 750.7 1030 749.8 1031 749.5 1032 749.8 1033 749.9 1034 750.4 1035 750.6 1036 751.2 1037 750.9 1038 750.9 1039 750.9 1040 750.6 1041 750.9 1042 751.5 1043 750.9 1044 750.4 1045 749.9 1046 750.1 1047 749.7 1048 749.9 1049 750.6 1050 750.8 1051 751.4 1052 751.3 1053 751.1 1054 751.0 1055 751.1 1056 750.8 1057 750.8 1058 750.9 1059 750.6 1060 751.0 1061 750.7 1062 751.1 1063 751.1 1064 751.4 1065 751.4 1066 751.3 1067 751.0 1068 751.2 1069 751.0 1070 750.8 1071 750.4 1072 750.7 1073 750.6 1074 750.1 1075 750.5 1076 750.3 1077 750.7 1078 750.7 1079 750.6 1080 750.7 1081 751.0 1082 751.2 1083 751.3 1084 750.8 1085 750.5 1086 750.6 1087 750.8 1088 751.3 1089 751.0 1090 750.5 1091 750.2 1092 750.1 1093 749.9 1094 750.1 1095 750.6 1096 750.7 1097 751.2 1098 751.3 1099 751.1 1100 751.0 1101 750.7 1102 750.6 1103 750.5 1104 750.6 1105 750.8 1106 750.7 1107 750.9 1108 751.1 1109 751.4 1110 751.2 1110 753.8 1109 753.6 1108 753.9 1107 754.1 1106 754.3 1105 754.2 1104 754.4 1103 754.5 1102 754.4 1101 754.3 1100 754.0 1099 753.9 1098 753.7 1097 753.8 1096 754.3 1095 754.4 1094 754.9 1093 755.1 1092 754.9 1091 754.8 1090 754.5 1089 754.0 1088 753.7 1087 754.2 1086 754.4 1085 754.5 1084 754.2 1083 753.7 1082 753.8 1081 754.0 1080 754.3 1079 754.4 1078 754.3 1077 754.3 1076 754.7 1075 754.5 1074 754.9 1073 754.4 1072 754.3 1071 754.6 1070 754.2 1069 754.0 1068 753.8 1067 754.0 1066 753.7 1065 753.6 1064 753.6 1063 753.9 1062 753.9 1061 754.3 1060 754.0 1059 754.4 1058 754.1 1057 754.2 1056 754.2 1055 753.9 1054 754.0 1053 753.9 1052 753.7 1051 753.6 1050 754.2 1049 754.4 1048 755.1 1047 755.3 1046 754.9 1045 755.1 1044 754.6 1043 754.1 1042 753.5 1041 754.1 1040 754.4 1039 754.1 1038 754.1 1037 754.1 1036 753.8 1035 754.4 1034 754.6 1033 755.1 1032 755.2 1031 755.5 1030 755.2 1029 754.3 1028 754.2 1027 753.4 1026 753.6 1025 753.6 1024 754.1 1023 754.1 1022 754.1 1021 754.2 1020 753.8 1019 754.0 1018 753.6 1017 753.4 1016 754.1 1015 754.7 1014 754.9 1013 754.9 1012 754.8 1011 755.6 1010 755.7 1009 755.3 1008 754.9 1007 755.3 1006 755.1 1005 754.5 1004 754.5 1003 754.4 1002 754.2 1001 754.7 1000 754.8 999 754.8 998 754.8 997 754.0Z M1455 743.5L1455 742.4 1456 742.0 1457 741.7 1458 741.4 1459 741.4 1460 741.5 1461 741.5 1462 741.8 1463 741.8 1464 742.0 1465 742.1 1466 742.0 1467 742.1 1468 741.6 1469 741.6 1470 741.3 1471 741.5 1472 741.0 1473 741.6 1474 741.1 1475 741.2 1476 741.6 1477 741.5 1478 742.0 1479 741.9 1480 742.2 1481 741.9 1482 741.6 1483 741.7 1484 741.2 1485 740.8 1486 741.1 1487 741.2 1488 741.2 1489 741.2 1490 741.4 1491 741.7 1492 742.0 1493 742.6 1494 742.3 1495 742.1 1496 742.0 1497 741.6 1498 741.8 1499 741.8 1500 741.9 1501 742.1 1502 742.0 1503 742.3 1504 742.4 1505 742.3 1506 741.9 1507 741.8 1508 742.0 1509 741.6 1510 741.5 1511 741.4 1512 741.4 1513 742.0 1514 742.0 1515 742.3 1516 742.4 1517 741.9 1518 741.7 1519 741.5 1520 741.6 1521 741.4 1522 740.8 1523 740.7 1524 741.0 1525 740.8 1526 741.1 1527 741.6 1528 741.9 1529 741.9 1530 742.3 1531 742.2 1532 742.0 1533 741.6 1534 741.7 1535 741.4 1536 741.5 1537 741.0 1538 741.5 1539 741.4 1540 741.7 1541 741.5 1542 741.5 1543 741.7 1544 741.9 1545 742.3 1546 741.8 1547 741.9 1548 741.6 1549 741.4 1550 741.4 1551 741.3 1552 740.7 1553 740.8 1554 740.9 1555 740.9 1556 741.2 1557 741.5 1558 741.2 1559 741.6 1560 741.6 1561 741.9 1562 742.3 1563 742.3 1564 741.9 1565 742.0 1566 741.6 1566 745.4 1565 745.0 1564 745.1 1563 744.7 1562 744.7 1561 745.1 1560 745.4 1559 745.4 1558 745.8 1557 745.5 1556 745.8 1555 746.1 1554 746.1 1553 746.2 1552 746.3 1551 745.7 1550 745.6 1549 745.6 1548 745.4 1547 745.1 1546 745.2 1545 744.7 1544 745.1 1543 745.3 1542 745.5 1541 745.5 1540 745.3 1539 745.6 1538 745.5 1537 746.0 1536 745.5 1535 745.6 1534 745.3 1533 745.4 1532 745.0 1531 744.8 1530 744.7 1529 745.1 1528 745.1 1527 745.4 1526 745.9 1525 746.2 1524 746.0 1523 746.3 1522 746.2 1521 745.6 1520 745.4 1519 745.5 1518 745.3 1517 745.1 1516 744.6 1515 744.7 1514 745.0 1513 745.0 1512 745.6 1511 745.6 1510 745.5 1509 745.4 1508 745.0 1507 745.2 1506 745.1 1505 744.7 1504 744.6 1503 744.7 1502 745.0 1501 744.9 1500 745.1 1499 745.2 1498 745.2 1497 745.4 1496 745.0 1495 744.9 1494 744.7 1493 744.4 1492 745.0 1491 745.3 1490 745.6 1489 745.8 1488 745.8 1487 745.8 1486 745.9 1485 746.2 1484 745.8 1483 745.3 1482 745.4 1481 745.1 1480 744.8 1479 745.1 1478 745.0 1477 745.5 1476 745.4 1475 745.8 1474 745.9 1473 745.4 1472 746.0 1471 745.5 1470 745.7 1469 745.4 1468 745.4 1467 744.9 1466 745.0 1465 744.9 1464 745.0 1463 745.2 1462 745.2 1461 745.5 1460 745.5 1459 745.6 1458 745.6 1457 745.3 1456 745.0 1455 744.6Z M1455 752.5L1455 751.2 1456 750.9 1457 751.1 1458 750.6 1459 750.7 1460 750.4 1461 750.4 1462 750.3 1463 750.4 1464 750.5 1465 750.7 1466 750.8 1467 750.9 1468 751.1 1469 751.4 1470 751.0 1471 750.8 1472 750.2 1473 750.3 1474 750.8 1475 751.1 1476 751.0 1477 750.6 1478 750.3 1479 750.3 1480 750.1 1481 750.3 1482 750.6 1483 751.2 1484 751.4 1485 751.1 1486 750.5 1487 750.7 1488 750.6 1489 750.5 1490 750.7 1491 750.8 1492 750.9 1493 751.0 1494 751.3 1495 751.2 1496 750.7 1497 750.5 1498 750.7 1499 750.5 1500 750.6 1501 750.9 1502 751.2 1503 751.2 1504 751.4 1505 750.9 1506 750.5 1507 750.8 1508 751.1 1509 751.3 1510 751.5 1511 751.0 1512 751.1 1513 751.0 1514 751.0 1515 750.7 1516 750.8 1517 750.7 1518 750.6 1519 750.5 1520 750.7 1521 750.9 1522 750.9 1523 750.9 1524 751.1 1525 751.3 1526 750.9 1527 750.7 1528 750.6 1529 750.6 1530 749.9 1531 750.0 1532 750.2 1533 749.5 1534 749.6 1535 750.4 1536 750.1 1537 750.5 1538 750.5 1539 750.5 1540 751.0 1541 751.4 1542 751.0 1543 751.0 1544 750.7 1545 750.6 1546 750.7 1547 750.5 1548 750.7 1549 750.7 1550 750.7 1551 750.9 1552 750.9 1553 751.1 1554 751.4 1555 751.2 1556 751.4 1557 751.2 1558 750.9 1559 750.9 1560 750.6 1561 750.9 1562 750.8 1563 750.6 1564 751.0 1565 750.8 1566 751.0 1566 754.0 1565 754.2 1564 754.0 1563 754.4 1562 754.2 1561 754.1 1560 754.4 1559 754.1 1558 754.1 1557 753.8 1556 753.6 1555 753.8 1554 753.6 1553 753.9 1552 754.1 1551 754.1 1550 754.3 1549 754.3 1548 754.3 1547 754.5 1546 754.3 1545 754.4 1544 754.3 1543 754.0 1542 754.0 1541 753.6 1540 754.0 1539 754.5 1538 754.5 1537 754.5 1536 754.9 1535 754.6 1534 755.4 1533 755.5 1532 754.8 1531 755.0 1530 755.1 1529 754.4 1528 754.4 1527 754.3 1526 754.1 1525 753.7 1524 753.9 1523 754.1 1522 754.1 1521 754.1 1520 754.3 1519 754.5 1518 754.4 1517 754.3 1516 754.2 1515 754.3 1514 754.0 1513 754.0 1512 753.9 1511 754.0 1510 753.5 1509 753.7 1508 753.9 1507 754.2 1506 754.5 1505 754.1 1504 753.6 1503 753.8 1502 753.8 1501 754.1 1500 754.4 1499 754.5 1498 754.3 1497 754.5 1496 754.3 1495 753.8 1494 753.7 1493 754.0 1492 754.1 1491 754.2 1490 754.3 1489 754.5 1488 754.4 1487 754.3 1486 754.5 1485 753.9 1484 753.6 1483 753.8 1482 754.4 1481 754.7 1480 754.9 1479 754.7 1478 754.7 1477 754.4 1476 754.0 1475 753.9 1474 754.2 1473 754.7 1472 754.8 1471 754.2 1470 754.0 1469 753.6 1468 753.9 1467 754.1 1466 754.2 1465 754.3 1464 754.5 1463 754.6 1462 754.7 1461 754.6 1460 754.6 1459 754.3 1458 754.4 1457 753.9 1456 754.1 1455 753.8Z M1340 767.5L1340 766.5 1341 766.1 1342 766.0 1343 765.9 1344 765.6 1345 766.1 1346 766.0 1347 766.3 1348 766.6 1349 766.0 1350 765.9 1351 765.4 1352 765.3 1353 765.0 1354 765.6 1355 765.3 1356 765.8 1357 766.0 1358 766.5 1359 766.2 1360 766.0 1361 766.2 1362 766.1 1363 765.9 1364 765.8 1365 765.8 1366 766.0 1367 765.9 1368 766.3 1369 766.2 1370 766.4 1371 766.4 1372 765.6 1373 765.5 1374 765.4 1375 765.6 1376 766.3 1377 766.3 1378 766.0 1379 765.8 1380 765.7 1381 766.1 1382 766.2 1383 766.4 1384 766.3 1385 766.1 1386 766.1 1387 765.9 1388 765.8 1389 766.3 1390 766.4 1391 766.7 1392 766.3 1393 765.8 1394 765.5 1395 765.5 1396 765.9 1397 765.8 1398 766.4 1399 766.2 1400 766.2 1401 765.9 1402 766.0 1403 766.0 1404 765.9 1405 765.4 1406 765.7 1407 765.9 1408 765.6 1409 765.9 1410 766.2 1411 766.2 1412 766.5 1413 766.5 1414 766.3 1415 765.9 1416 765.9 1417 765.6 1418 766.1 1419 766.3 1420 766.2 1421 765.7 1422 765.7 1423 765.3 1424 765.1 1425 765.1 1426 765.7 1427 765.9 1428 766.0 1429 766.1 1430 765.8 1431 765.7 1432 765.1 1433 764.9 1434 764.8 1435 764.8 1436 765.2 1437 765.4 1438 765.5 1439 765.9 1440 766.6 1441 766.3 1442 766.2 1443 766.3 1444 766.1 1445 765.8 1446 766.0 1447 765.9 1448 765.7 1449 765.8 1450 766.1 1451 766.1 1452 766.2 1453 766.2 1454 766.3 1454 768.7 1453 768.8 1452 768.8 1451 768.9 1450 768.9 1449 769.2 1448 769.3 1447 769.1 1446 769.0 1445 769.2 1444 768.9 1443 768.7 1442 768.8 1441 768.7 1440 768.4 1439 769.1 1438 769.5 1437 769.6 1436 769.8 1435 770.2 1434 770.2 1433 770.1 1432 769.9 1431 769.3 1430 769.2 1429 768.9 1428 769.0 1427 769.1 1426 769.3 1425 769.9 1424 769.9 1423 769.7 1422 769.3 1421 769.3 1420 768.8 1419 768.7 1418 768.9 1417 769.4 1416 769.1 1415 769.1 1414 768.7 1413 768.5 1412 768.5 1411 768.8 1410 768.8 1409 769.1 1408 769.4 1407 769.1 1406 769.3 1405 769.6 1404 769.1 1403 769.0 1402 769.0 1401 769.1 1400 768.8 1399 768.8 1398 768.6 1397 769.2 1396 769.1 1395 769.5 1394 769.5 1393 769.2 1392 768.7 1391 768.3 1390 768.6 1389 768.7 1388 769.2 1387 769.1 1386 768.9 1385 768.9 1384 768.7 1383 768.6 1382 768.8 1381 768.9 1380 769.3 1379 769.2 1378 769.0 1377 768.7 1376 768.7 1375 769.4 1374 769.6 1373 769.5 1372 769.4 1371 768.6 1370 768.6 1369 768.8 1368 768.7 1367 769.1 1366 769.0 1365 769.2 1364 769.2 1363 769.1 1362 768.9 1361 768.8 1360 769.0 1359 768.8 1358 768.5 1357 769.0 1356 769.2 1355 769.7 1354 769.4 1353 770.0 1352 769.7 1351 769.6 1350 769.1 1349 769.0 1348 768.4 1347 768.7 1346 769.0 1345 768.9 1344 769.4 1343 769.1 1342 769.0 1341 768.9 1340 768.5Z M1340 776.5L1340 775.2 1341 774.9 1342 774.6 1343 774.6 1344 774.5 1345 774.5 1346 774.1 1347 774.2 1348 774.8 1349 774.9 1350 775.2 1351 775.1 1352 774.4 1353 774.1 1354 773.9 1355 774.3 1356 774.8 1357 775.4 1358 775.1 1359 774.9 1360 774.7 1361 775.0 1362 774.6 1363 774.3 1364 774.6 1365 774.8 1366 775.1 1367 775.2 1368 775.1 1369 775.5 1370 775.2 1371 774.8 1372 774.6 1373 774.6 1374 774.7 1375 774.3 1376 774.3 1377 774.5 1378 774.2 1379 774.5 1380 775.0 1381 775.1 1382 775.2 1383 775.2 1384 774.8 1385 774.5 1386 774.4 1387 774.3 1388 773.9 1389 773.9 1390 774.3 1391 773.8 1392 774.5 1393 774.5 1394 774.2 1395 774.8 1396 774.8 1397 774.9 1398 775.5 1399 775.5 1400 775.4 1401 775.1 1402 774.9 1403 775.0 1404 775.0 1405 774.9 1406 775.2 1407 775.1 1408 775.4 1409 775.5 1410 775.6 1411 775.6 1412 775.5 1413 775.4 1414 775.2 1415 775.1 1416 774.9 1417 775.0 1418 774.9 1419 775.0 1420 774.9 1421 774.9 1422 775.2 1423 775.1 1424 775.5 1425 775.4 1426 775.5 1427 775.1 1428 775.0 1429 775.2 1430 774.7 1431 774.5 1432 774.5 1433 774.7 1434 774.7 1435 775.0 1436 774.9 1437 774.9 1438 775.2 1439 775.5 1440 775.2 1441 775.2 1442 774.9 1443 774.8 1444 774.4 1445 774.4 1446 774.4 1447 774.4 1448 774.4 1449 774.5 1450 774.5 1451 774.4 1452 774.5 1453 774.7 1454 774.8 1454 778.2 1453 778.3 1452 778.5 1451 778.6 1450 778.5 1449 778.5 1448 778.6 1447 778.6 1446 778.6 1445 778.6 1444 778.6 1443 778.2 1442 778.1 1441 777.8 1440 777.8 1439 777.5 1438 777.8 1437 778.1 1436 778.1 1435 778.0 1434 778.3 1433 778.3 1432 778.5 1431 778.5 1430 778.3 1429 777.8 1428 778.0 1427 777.9 1426 777.5 1425 777.6 1424 777.5 1423 777.9 1422 777.8 1421 778.1 1420 778.1 1419 778.0 1418 778.1 1417 778.0 1416 778.1 1415 777.9 1414 777.8 1413 777.6 1412 777.5 1411 777.4 1410 777.4 1409 777.5 1408 777.6 1407 777.9 1406 777.8 1405 778.1 1404 778.0 1403 778.0 1402 778.1 1401 777.9 1400 777.6 1399 777.5 1398 777.5 1397 778.1 1396 778.2 1395 778.2 1394 778.8 1393 778.5 1392 778.5 1391 779.2 1390 778.7 1389 779.1 1388 779.1 1387 778.7 1386 778.6 1385 778.5 1384 778.2 1383 777.8 1382 777.8 1381 777.9 1380 778.0 1379 778.5 1378 778.8 1377 778.5 1376 778.7 1375 778.7 1374 778.3 1373 778.4 1372 778.4 1371 778.2 1370 777.8 1369 777.5 1368 777.9 1367 777.8 1366 777.9 1365 778.2 1364 778.4 1363 778.7 1362 778.4 1361 778.0 1360 778.3 1359 778.1 1358 777.9 1357 777.6 1356 778.2 1355 778.7 1354 779.1 1353 778.9 1352 778.6 1351 777.9 1350 777.8 1349 778.1 1348 778.2 1347 778.8 1346 778.9 1345 778.5 1344 778.5 1343 778.4 1342 778.4 1341 778.1 1340 777.8Z M883 791.5L883 791.5 884 790.5 885 790.0 886 790.1 887 790.2 888 790.3 889 790.4 890 790.6 891 790.8 892 790.9 893 791.0 894 791.1 895 791.3 896 791.4 897 791.4 898 791.5 898 791.5 897 791.6 896 791.6 895 791.7 894 791.9 893 792.0 892 792.1 891 792.2 890 792.4 889 792.6 888 792.7 887 792.8 886 792.9 885 793.0 884 792.5 883 791.5Z M883 800.5L883 800.5 884 799.5 885 798.8 886 799.1 887 799.1 888 799.4 889 799.6 890 799.7 891 799.7 892 799.8 893 800.0 894 800.1 895 800.3 896 800.4 897 800.4 898 800.5 898 800.5 897 800.6 896 800.6 895 800.7 894 800.9 893 801.0 892 801.2 891 801.3 890 801.3 889 801.4 888 801.6 887 801.9 886 801.9 885 802.2 884 801.5 883 800.5Z M940 791.5L940 791.5 941 790.4 942 789.9 943 790.1 944 790.2 945 790.2 946 790.5 947 790.7 948 790.7 949 790.9 950 791.0 951 791.2 952 791.2 953 791.4 954 791.4 955 791.5 955 791.5 954 791.6 953 791.6 952 791.8 951 791.8 950 792.0 949 792.1 948 792.3 947 792.3 946 792.5 945 792.8 944 792.8 943 792.9 942 793.1 941 792.6 940 791.5Z M940 800.5L940 800.5 941 799.4 942 798.8 943 798.9 944 799.1 945 799.3 946 799.6 947 799.6 948 799.8 949 799.9 950 800.1 951 800.1 952 800.2 953 800.4 954 800.4 955 800.5 955 800.5 954 800.6 953 800.6 952 800.8 951 800.9 950 800.9 949 801.1 948 801.2 947 801.4 946 801.4 945 801.7 944 801.9 943 802.1 942 802.2 941 801.6 940 800.5Z M998 791.5L998 791.5 999 790.5 1000 789.8 1001 789.9 1002 790.2 1003 790.4 1004 790.4 1005 790.7 1006 790.8 1007 790.9 1008 791.0 1009 791.2 1010 791.3 1011 791.4 1012 791.4 1013 791.5 1013 791.5 1012 791.6 1011 791.6 1010 791.7 1009 791.8 1008 792.0 1007 792.1 1006 792.2 1005 792.3 1004 792.6 1003 792.6 1002 792.8 1001 793.1 1000 793.2 999 792.5 998 791.5Z M998 800.5L998 800.5 999 799.5 1000 798.9 1001 798.9 1002 799.1 1003 799.2 1004 799.4 1005 799.6 1006 799.7 1007 799.9 1008 800.1 1009 800.2 1010 800.3 1011 800.3 1012 800.4 1013 800.5 1013 800.5 1012 800.6 1011 800.7 1010 800.7 1009 800.8 1008 800.9 1007 801.1 1006 801.3 1005 801.4 1004 801.6 1003 801.8 1002 801.9 1001 802.1 1000 802.1 999 801.5 998 800.5Z M1055 791.5L1055 791.5 1056 790.5 1057 789.8 1058 789.9 1059 790.1 1060 790.2 1061 790.5 1062 790.7 1063 790.7 1064 790.9 1065 791.0 1066 791.2 1067 791.3 1068 791.3 1069 791.4 1070 791.5 1070 791.5 1069 791.6 1068 791.7 1067 791.7 1066 791.8 1065 792.0 1064 792.1 1063 792.3 1062 792.3 1061 792.5 1060 792.8 1059 792.9 1058 793.1 1057 793.2 1056 792.5 1055 791.5Z M1055 800.5L1055 800.5 1056 799.4 1057 798.9 1058 798.9 1059 799.1 1060 799.4 1061 799.4 1062 799.6 1063 799.7 1064 799.9 1065 800.0 1066 800.2 1067 800.3 1068 800.3 1069 800.4 1070 800.5 1070 800.5 1069 800.6 1068 800.7 1067 800.7 1066 800.8 1065 801.0 1064 801.1 1063 801.3 1062 801.4 1061 801.6 1060 801.6 1059 801.9 1058 802.1 1057 802.1 1056 801.6 1055 800.5Z M1226 791.5L1226 791.5 1227 790.5 1228 789.7 1229 790.2 1230 790.1 1231 790.3 1232 790.5 1233 790.6 1234 790.8 1235 790.9 1236 791.1 1237 791.1 1238 791.3 1239 791.4 1240 791.4 1241 791.5 1241 791.5 1240 791.6 1239 791.6 1238 791.7 1237 791.9 1236 791.9 1235 792.1 1234 792.2 1233 792.4 1232 792.5 1231 792.7 1230 792.9 1229 792.8 1228 793.3 1227 792.5 1226 791.5Z M1226 800.5L1226 800.5 1227 799.4 1228 798.7 1229 799.2 1230 799.3 1231 799.4 1232 799.4 1233 799.7 1234 799.8 1235 799.9 1236 800.1 1237 800.1 1238 800.2 1239 800.3 1240 800.4 1241 800.5 1241 800.5 1240 800.6 1239 800.7 1238 800.8 1237 800.9 1236 800.9 1235 801.1 1234 801.2 1233 801.3 1232 801.6 1231 801.6 1230 801.7 1229 801.8 1228 802.3 1227 801.6 1226 800.5Z M1283 791.5L1283 791.5 1284 790.3 1285 789.8 1286 790.0 1287 790.2 1288 790.3 1289 790.5 1290 790.6 1291 790.8 1292 790.8 1293 791.0 1294 791.1 1295 791.3 1296 791.3 1297 791.4 1298 791.5 1298 791.5 1297 791.6 1296 791.7 1295 791.7 1294 791.9 1293 792.0 1292 792.2 1291 792.2 1290 792.4 1289 792.5 1288 792.7 1287 792.8 1286 793.0 1285 793.2 1284 792.7 1283 791.5Z M1283 800.5L1283 800.5 1284 799.3 1285 798.8 1286 799.0 1287 799.1 1288 799.4 1289 799.5 1290 799.6 1291 799.7 1292 799.9 1293 800.0 1294 800.1 1295 800.3 1296 800.4 1297 800.4 1298 800.5 1298 800.5 1297 800.6 1296 800.6 1295 800.7 1294 800.9 1293 801.0 1292 801.1 1291 801.3 1290 801.4 1289 801.5 1288 801.6 1287 801.9 1286 802.0 1285 802.2 1284 801.7 1283 800.5Z M1455 791.5L1455 791.5 1456 790.5 1457 789.9 1458 790.2 1459 790.1 1460 790.2 1461 790.5 1462 790.6 1463 790.8 1464 790.9 1465 791.0 1466 791.1 1467 791.2 1468 791.3 1469 791.4 1470 791.5 1470 791.5 1469 791.6 1468 791.7 1467 791.8 1466 791.9 1465 792.0 1464 792.1 1463 792.2 1462 792.4 1461 792.5 1460 792.8 1459 792.9 1458 792.8 1457 793.1 1456 792.5 1455 791.5Z M1455 800.5L1455 800.5 1456 799.4 1457 799.0 1458 799.0 1459 799.0 1460 799.2 1461 799.4 1462 799.7 1463 799.8 1464 800.0 1465 800.0 1466 800.2 1467 800.3 1468 800.4 1469 800.4 1470 800.5 1470 800.5 1469 800.6 1468 800.6 1467 800.7 1466 800.8 1465 801.0 1464 801.0 1463 801.2 1462 801.3 1461 801.6 1460 801.8 1459 802.0 1458 802.0 1457 802.0 1456 801.6 1455 800.5Z M1512 791.5L1512 791.5 1513 790.4 1514 789.8 1515 790.0 1516 790.1 1517 790.3 1518 790.5 1519 790.7 1520 790.8 1521 790.9 1522 791.0 1523 791.2 1524 791.2 1525 791.3 1526 791.4 1527 791.5 1527 791.5 1526 791.6 1525 791.7 1524 791.8 1523 791.8 1522 792.0 1521 792.1 1520 792.2 1519 792.3 1518 792.5 1517 792.7 1516 792.9 1515 793.0 1514 793.2 1513 792.6 1512 791.5Z M1512 800.5L1512 800.5 1513 799.5 1514 798.9 1515 798.9 1516 799.0 1517 799.4 1518 799.6 1519 799.7 1520 799.8 1521 799.9 1522 800.1 1523 800.1 1524 800.3 1525 800.3 1526 800.4 1527 800.5 1527 800.5 1526 800.6 1525 800.7 1524 800.7 1523 800.9 1522 800.9 1521 801.1 1520 801.2 1519 801.3 1518 801.4 1517 801.6 1516 802.0 1515 802.1 1514 802.1 1513 801.5 1512 800.5Z M1031 815.5L1031 814.7 1032 813.7 1033 814.2 1034 814.7 1035 815.1 1036 815.1 1037 815.1 1038 814.9 1039 814.1 1040 814.4 1041 814.5 1042 814.8 1043 815.0 1044 815.1 1045 815.1 1046 815.1 1047 815.1 1048 815.1 1049 814.6 1050 814.0 1051 814.5 1051 816.5 1050 817.0 1049 816.4 1048 815.9 1047 815.9 1046 815.9 1045 815.9 1044 815.9 1043 816.0 1042 816.2 1041 816.5 1040 816.6 1039 816.9 1038 816.1 1037 815.9 1036 815.9 1035 815.9 1034 816.3 1033 816.8 1032 817.3 1031 816.3Z M1031 824.5L1031 823.7 1032 822.9 1033 822.9 1034 823.2 1035 823.4 1036 823.6 1037 823.7 1038 823.9 1039 824.1 1040 824.1 1041 824.1 1042 824.1 1043 824.1 1044 824.1 1045 824.1 1046 823.9 1047 823.0 1048 823.2 1049 823.4 1050 823.6 1051 823.8 1051 825.2 1050 825.4 1049 825.6 1048 825.8 1047 826.0 1046 825.1 1045 824.9 1044 824.9 1043 824.9 1042 824.9 1041 824.9 1040 824.9 1039 824.9 1038 825.1 1037 825.3 1036 825.4 1035 825.6 1034 825.8 1033 826.1 1032 826.1 1031 825.3Z M1087 815.5L1087 814.5 1088 813.8 1089 814.2 1090 814.6 1091 815.1 1092 815.1 1093 815.1 1094 815.1 1095 814.7 1096 813.7 1097 814.3 1098 814.3 1099 814.7 1100 815.0 1101 815.1 1102 815.1 1103 815.1 1104 815.1 1105 815.1 1106 814.9 1107 814.2 1108 814.5 1109 814.8 1109 816.2 1108 816.5 1107 816.8 1106 816.1 1105 815.9 1104 815.9 1103 815.9 1102 815.9 1101 815.9 1100 816.0 1099 816.3 1098 816.7 1097 816.7 1096 817.3 1095 816.3 1094 815.9 1093 815.9 1092 815.9 1091 815.9 1090 816.4 1089 816.8 1088 817.2 1087 816.5Z M1087 824.5L1087 823.7 1088 822.9 1089 822.8 1090 823.0 1091 823.2 1092 823.6 1093 823.8 1094 823.9 1095 824.1 1096 824.1 1097 824.1 1098 824.1 1099 824.1 1100 824.1 1101 823.8 1102 823.0 1103 823.5 1104 823.8 1105 824.0 1106 824.1 1107 824.1 1108 824.1 1109 824.1 1109 824.9 1108 824.9 1107 824.9 1106 824.9 1105 825.0 1104 825.2 1103 825.5 1102 826.0 1101 825.2 1100 824.9 1099 824.9 1098 824.9 1097 824.9 1096 824.9 1095 824.9 1094 825.1 1093 825.2 1092 825.4 1091 825.8 1090 826.0 1089 826.2 1088 826.1 1087 825.3Z M1483 815.5L1483 814.6 1484 813.6 1485 813.8 1486 814.2 1487 814.4 1488 814.7 1489 815.0 1490 815.1 1491 815.1 1492 814.7 1493 813.7 1494 814.1 1495 814.2 1496 814.4 1497 814.7 1498 815.0 1499 815.1 1500 815.1 1501 815.1 1502 815.1 1502 815.9 1501 815.9 1500 815.9 1499 815.9 1498 816.0 1497 816.3 1496 816.6 1495 816.8 1494 816.9 1493 817.3 1492 816.3 1491 815.9 1490 815.9 1489 816.0 1488 816.3 1487 816.6 1486 816.8 1485 817.2 1484 817.4 1483 816.4Z M1483 824.5L1483 823.6 1484 822.8 1485 823.2 1486 823.4 1487 823.7 1488 823.9 1489 824.1 1490 824.1 1491 824.1 1492 824.1 1493 823.8 1494 823.1 1495 823.5 1496 823.7 1497 824.0 1498 824.1 1499 824.1 1500 824.1 1501 824.1 1502 824.1 1502 824.9 1501 824.9 1500 824.9 1499 824.9 1498 824.9 1497 825.0 1496 825.3 1495 825.5 1494 825.9 1493 825.2 1492 824.9 1491 824.9 1490 824.9 1489 824.9 1488 825.1 1487 825.3 1486 825.6 1485 825.8 1484 826.2 1483 825.4Z M1540 815.5L1540 814.6 1541 813.9 1542 814.1 1543 814.2 1544 814.7 1545 814.8 1546 815.1 1547 815.1 1548 815.1 1549 815.1 1550 815.1 1551 815.1 1552 814.7 1553 814.2 1554 814.7 1555 815.1 1556 815.1 1557 815.1 1558 814.7 1559 813.9 1559 817.1 1558 816.3 1557 815.9 1556 815.9 1555 815.9 1554 816.3 1553 816.8 1552 816.3 1551 815.9 1550 815.9 1549 815.9 1548 815.9 1547 815.9 1546 815.9 1545 816.2 1544 816.3 1543 816.8 1542 816.9 1541 817.1 1540 816.4Z M1540 824.5L1540 823.7 1541 822.7 1542 823.3 1543 823.5 1544 823.8 1545 824.1 1546 824.1 1547 824.1 1548 824.1 1549 824.1 1550 824.1 1551 823.9 1552 823.4 1553 823.8 1554 824.1 1555 824.1 1556 824.1 1557 824.1 1558 824.1 1559 823.5 1559 825.5 1558 824.9 1557 824.9 1556 824.9 1555 824.9 1554 824.9 1553 825.2 1552 825.6 1551 825.1 1550 824.9 1549 824.9 1548 824.9 1547 824.9 1546 824.9 1545 824.9 1544 825.2 1543 825.5 1542 825.7 1541 826.3 1540 825.3Z M997 839.5L997 837.9 998 836.4 999 836.6 1000 837.3 1001 837.7 1002 837.7 1003 838.2 1004 838.5 1005 838.9 1006 839.1 1007 839.1 1008 839.1 1009 839.1 1010 839.1 1011 839.1 1012 838.6 1013 837.7 1014 838.1 1015 838.2 1016 838.6 1017 838.9 1018 839.1 1019 839.1 1020 838.1 1021 836.6 1022 836.8 1023 837.5 1024 837.9 1025 838.1 1026 838.2 1027 838.6 1028 838.9 1029 839.1 1030 839.1 1031 838.5 1032 837.1 1033 837.5 1034 837.7 1035 838.0 1036 838.4 1037 838.6 1038 839.0 1039 839.1 1040 839.1 1041 838.2 1042 837.1 1043 837.7 1044 838.2 1045 839.0 1046 839.1 1047 839.1 1048 838.0 1049 836.3 1050 836.9 1051 837.2 1052 837.9 1053 838.3 1054 838.7 1055 839.1 1056 839.1 1057 839.1 1058 839.1 1059 838.0 1060 837.0 1061 837.9 1062 838.7 1063 839.1 1064 838.5 1065 837.8 1066 838.2 1067 838.9 1068 839.1 1069 839.1 1070 838.1 1071 837.1 1072 838.1 1073 838.8 1074 839.1 1075 839.1 1076 839.1 1077 838.4 1078 837.5 1079 837.8 1080 838.5 1081 838.8 1082 839.1 1083 839.1 1084 839.1 1085 839.1 1086 838.3 1087 837.0 1088 837.8 1089 838.4 1090 839.0 1091 839.1 1092 839.1 1093 839.1 1094 838.5 1095 837.6 1096 838.0 1097 838.2 1098 838.4 1099 838.6 1100 838.9 1101 839.1 1102 839.1 1103 839.1 1104 839.1 1105 839.1 1106 838.4 1107 837.5 1108 837.9 1109 838.3 1110 838.7 1111 839.1 1112 839.1 1113 839.1 1114 839.1 1115 838.5 1116 837.7 1117 838.2 1118 838.8 1119 839.1 1120 839.1 1121 839.1 1122 839.1 1123 839.1 1124 838.4 1125 837.3 1126 837.8 1127 837.9 1128 838.2 1129 838.6 1130 838.8 1131 839.0 1131 840.0 1130 840.2 1129 840.4 1128 840.8 1127 841.1 1126 841.2 1125 841.7 1124 840.6 1123 839.9 1122 839.9 1121 839.9 1120 839.9 1119 839.9 1118 840.2 1117 840.8 1116 841.3 1115 840.5 1114 839.9 1113 839.9 1112 839.9 1111 839.9 1110 840.3 1109 840.7 1108 841.1 1107 841.5 1106 840.6 1105 839.9 1104 839.9 1103 839.9 1102 839.9 1101 839.9 1100 840.1 1099 840.4 1098 840.6 1097 840.8 1096 841.0 1095 841.4 1094 840.5 1093 839.9 1092 839.9 1091 839.9 1090 840.0 1089 840.6 1088 841.2 1087 842.0 1086 840.7 1085 839.9 1084 839.9 1083 839.9 1082 839.9 1081 840.2 1080 840.5 1079 841.2 1078 841.5 1077 840.6 1076 839.9 1075 839.9 1074 839.9 1073 840.2 1072 840.9 1071 841.9 1070 840.9 1069 839.9 1068 839.9 1067 840.1 1066 840.8 1065 841.2 1064 840.5 1063 839.9 1062 840.3 1061 841.1 1060 842.0 1059 841.0 1058 839.9 1057 839.9 1056 839.9 1055 839.9 1054 840.3 1053 840.7 1052 841.1 1051 841.8 1050 842.1 1049 842.7 1048 841.0 1047 839.9 1046 839.9 1045 840.0 1044 840.8 1043 841.3 1042 841.9 1041 840.8 1040 839.9 1039 839.9 1038 840.0 1037 840.4 1036 840.6 1035 841.0 1034 841.3 1033 841.5 1032 841.9 1031 840.5 1030 839.9 1029 839.9 1028 840.1 1027 840.4 1026 840.8 1025 840.9 1024 841.1 1023 841.5 1022 842.2 1021 842.4 1020 840.9 1019 839.9 1018 839.9 1017 840.1 1016 840.4 1015 840.8 1014 840.9 1013 841.3 1012 840.4 1011 839.9 1010 839.9 1009 839.9 1008 839.9 1007 839.9 1006 839.9 1005 840.1 1004 840.5 1003 840.8 1002 841.3 1001 841.3 1000 841.7 999 842.4 998 842.6 997 841.1Z M997 848.5L997 847.1 998 845.9 999 846.1 1000 846.7 1001 846.9 1002 847.2 1003 847.6 1004 847.9 1005 848.1 1006 848.1 1007 847.1 1008 845.9 1009 846.6 1010 847.5 1011 848.0 1012 848.1 1013 847.4 1014 846.2 1015 846.4 1016 846.7 1017 847.2 1018 847.3 1019 847.7 1020 848.0 1021 848.1 1022 848.1 1023 848.1 1024 847.4 1025 846.2 1026 846.6 1027 847.1 1028 847.4 1029 847.7 1030 848.1 1031 848.1 1032 848.1 1033 847.2 1034 846.5 1035 847.2 1036 847.8 1037 848.1 1038 847.2 1039 846.1 1040 847.0 1041 847.8 1042 848.1 1043 848.1 1044 848.1 1045 848.1 1046 847.3 1047 846.0 1048 846.3 1049 846.7 1050 847.2 1051 847.5 1052 847.9 1053 848.1 1054 848.1 1055 848.1 1056 847.5 1057 846.4 1058 847.1 1059 847.6 1060 848.1 1061 848.1 1062 848.1 1063 848.1 1064 848.1 1065 847.1 1066 845.5 1067 846.1 1068 846.7 1069 847.3 1070 847.7 1071 848.1 1072 848.1 1073 848.1 1074 848.1 1075 848.1 1076 847.5 1077 846.3 1078 846.6 1079 847.1 1080 847.5 1081 847.8 1082 848.1 1083 848.1 1084 848.1 1085 848.1 1086 848.1 1087 847.4 1088 846.2 1089 846.6 1090 847.2 1091 847.6 1092 848.1 1093 848.1 1094 848.1 1095 847.2 1096 845.9 1097 846.3 1098 846.9 1099 847.6 1100 848.0 1101 848.1 1102 848.1 1103 847.5 1104 846.3 1105 846.6 1106 847.1 1107 847.6 1108 847.8 1109 848.1 1110 848.1 1111 847.0 1112 845.5 1113 846.1 1114 846.1 1115 846.7 1116 847.0 1117 847.5 1118 847.8 1119 848.1 1120 848.1 1121 848.1 1122 847.4 1123 846.1 1124 846.8 1125 847.3 1126 848.0 1127 848.1 1128 848.1 1129 848.1 1130 848.1 1131 847.1 1131 849.9 1130 848.9 1129 848.9 1128 848.9 1127 848.9 1126 849.0 1125 849.7 1124 850.2 1123 850.9 1122 849.6 1121 848.9 1120 848.9 1119 848.9 1118 849.2 1117 849.5 1116 850.0 1115 850.3 1114 850.9 1113 850.9 1112 851.5 1111 850.0 1110 848.9 1109 848.9 1108 849.2 1107 849.4 1106 849.9 1105 850.4 1104 850.7 1103 849.5 1102 848.9 1101 848.9 1100 849.0 1099 849.4 1098 850.1 1097 850.7 1096 851.1 1095 849.8 1094 848.9 1093 848.9 1092 848.9 1091 849.4 1090 849.8 1089 850.4 1088 850.8 1087 849.6 1086 848.9 1085 848.9 1084 848.9 1083 848.9 1082 848.9 1081 849.2 1080 849.5 1079 849.9 1078 850.4 1077 850.7 1076 849.5 1075 848.9 1074 848.9 1073 848.9 1072 848.9 1071 848.9 1070 849.3 1069 849.7 1068 850.3 1067 850.9 1066 851.5 1065 849.9 1064 848.9 1063 848.9 1062 848.9 1061 848.9 1060 848.9 1059 849.4 1058 849.9 1057 850.6 1056 849.5 1055 848.9 1054 848.9 1053 848.9 1052 849.1 1051 849.5 1050 849.8 1049 850.3 1048 850.7 1047 851.0 1046 849.7 1045 848.9 1044 848.9 1043 848.9 1042 848.9 1041 849.2 1040 850.0 1039 850.9 1038 849.8 1037 848.9 1036 849.2 1035 849.8 1034 850.5 1033 849.8 1032 848.9 1031 848.9 1030 848.9 1029 849.3 1028 849.6 1027 849.9 1026 850.4 1025 850.8 1024 849.6 1023 848.9 1022 848.9 1021 848.9 1020 849.0 1019 849.3 1018 849.7 1017 849.8 1016 850.3 1015 850.6 1014 850.8 1013 849.6 1012 848.9 1011 849.0 1010 849.5 1009 850.4 1008 851.1 1007 849.9 1006 848.9 1005 848.9 1004 849.1 1003 849.4 1002 849.8 1001 850.1 1000 850.3 999 850.9 998 851.1 997 849.9Z M1455 839.5L1455 838.3 1456 837.1 1457 838.1 1458 838.9 1459 839.1 1460 839.1 1461 839.1 1462 837.9 1463 836.9 1464 837.2 1465 837.8 1466 838.6 1467 839.0 1468 839.1 1469 839.1 1470 838.5 1471 837.4 1472 837.6 1473 838.1 1474 838.6 1475 838.8 1476 839.1 1477 839.1 1478 839.1 1479 839.1 1480 838.2 1481 836.6 1482 836.8 1483 837.4 1484 837.9 1485 838.2 1486 838.7 1487 839.1 1488 839.1 1489 839.1 1490 838.2 1491 836.9 1492 836.8 1493 837.6 1494 837.8 1495 838.2 1496 838.6 1497 838.9 1498 839.1 1499 839.1 1500 838.3 1501 837.6 1502 837.9 1503 838.6 1504 839.1 1505 839.1 1506 839.1 1507 839.1 1508 839.1 1509 838.6 1510 837.3 1511 837.6 1512 837.8 1513 838.1 1514 838.5 1515 838.7 1516 838.8 1517 839.1 1518 839.1 1519 839.1 1520 839.1 1521 838.4 1522 837.5 1523 838.1 1524 838.9 1525 839.1 1526 838.3 1527 837.3 1528 837.2 1529 837.6 1530 837.9 1531 838.0 1532 838.4 1533 838.8 1534 839.0 1535 839.1 1536 839.1 1537 839.1 1538 839.1 1539 839.1 1540 839.1 1541 837.9 1542 837.1 1543 837.7 1544 838.7 1545 839.1 1546 839.1 1547 838.4 1548 837.0 1549 837.6 1550 837.9 1551 838.1 1552 838.5 1553 838.8 1554 839.1 1555 839.1 1555 839.9 1554 839.9 1553 840.2 1552 840.5 1551 840.9 1550 841.1 1549 841.4 1548 842.0 1547 840.6 1546 839.9 1545 839.9 1544 840.3 1543 841.3 1542 841.9 1541 841.1 1540 839.9 1539 839.9 1538 839.9 1537 839.9 1536 839.9 1535 839.9 1534 840.0 1533 840.2 1532 840.6 1531 841.0 1530 841.1 1529 841.4 1528 841.8 1527 841.7 1526 840.7 1525 839.9 1524 840.1 1523 840.9 1522 841.5 1521 840.6 1520 839.9 1519 839.9 1518 839.9 1517 839.9 1516 840.2 1515 840.3 1514 840.5 1513 840.9 1512 841.2 1511 841.4 1510 841.7 1509 840.4 1508 839.9 1507 839.9 1506 839.9 1505 839.9 1504 839.9 1503 840.4 1502 841.1 1501 841.4 1500 840.7 1499 839.9 1498 839.9 1497 840.1 1496 840.4 1495 840.8 1494 841.2 1493 841.4 1492 842.2 1491 842.1 1490 840.8 1489 839.9 1488 839.9 1487 839.9 1486 840.3 1485 840.8 1484 841.1 1483 841.6 1482 842.2 1481 842.4 1480 840.8 1479 839.9 1478 839.9 1477 839.9 1476 839.9 1475 840.2 1474 840.4 1473 840.9 1472 841.4 1471 841.6 1470 840.5 1469 839.9 1468 839.9 1467 840.0 1466 840.4 1465 841.2 1464 841.8 1463 842.1 1462 841.1 1461 839.9 1460 839.9 1459 839.9 1458 840.1 1457 840.9 1456 841.9 1455 840.7Z M1455 848.5L1455 847.4 1456 846.7 1457 847.0 1458 847.4 1459 847.7 1460 848.1 1461 848.1 1462 848.1 1463 847.3 1464 846.4 1465 846.7 1466 847.0 1467 847.3 1468 847.5 1469 847.9 1470 848.1 1471 848.1 1472 848.1 1473 848.1 1474 848.1 1475 847.4 1476 845.9 1477 846.8 1478 847.2 1479 847.7 1480 848.1 1481 848.1 1482 848.1 1483 848.1 1484 848.1 1485 847.3 1486 845.9 1487 846.3 1488 846.7 1489 847.0 1490 847.6 1491 847.8 1492 848.1 1493 848.1 1494 848.1 1495 848.1 1496 848.1 1497 847.6 1498 846.7 1499 846.9 1500 846.9 1501 847.3 1502 847.5 1503 847.9 1504 848.1 1505 848.1 1506 848.1 1507 848.1 1508 848.1 1509 847.4 1510 846.4 1511 847.2 1512 847.5 1513 848.1 1514 848.1 1515 848.1 1516 848.1 1517 847.4 1518 846.5 1519 846.7 1520 846.8 1521 847.1 1522 847.5 1523 847.7 1524 848.0 1525 848.1 1526 848.1 1527 848.1 1528 848.1 1529 848.1 1530 847.1 1531 846.0 1532 846.4 1533 847.0 1534 847.3 1535 847.7 1536 848.1 1537 848.1 1538 848.1 1539 848.1 1540 847.6 1541 846.7 1542 847.2 1543 847.7 1544 848.1 1545 848.1 1546 848.1 1547 848.1 1548 847.5 1549 846.2 1550 846.6 1551 846.8 1552 847.1 1553 847.5 1554 847.8 1555 848.0 1555 849.0 1554 849.2 1553 849.5 1552 849.9 1551 850.2 1550 850.4 1549 850.8 1548 849.5 1547 848.9 1546 848.9 1545 848.9 1544 848.9 1543 849.3 1542 849.8 1541 850.3 1540 849.4 1539 848.9 1538 848.9 1537 848.9 1536 848.9 1535 849.3 1534 849.7 1533 850.0 1532 850.6 1531 851.0 1530 849.9 1529 848.9 1528 848.9 1527 848.9 1526 848.9 1525 848.9 1524 849.0 1523 849.3 1522 849.5 1521 849.9 1520 850.2 1519 850.3 1518 850.5 1517 849.6 1516 848.9 1515 848.9 1514 848.9 1513 848.9 1512 849.5 1511 849.8 1510 850.6 1509 849.6 1508 848.9 1507 848.9 1506 848.9 1505 848.9 1504 848.9 1503 849.1 1502 849.5 1501 849.7 1500 850.1 1499 850.1 1498 850.3 1497 849.4 1496 848.9 1495 848.9 1494 848.9 1493 848.9 1492 848.9 1491 849.2 1490 849.4 1489 850.0 1488 850.3 1487 850.7 1486 851.1 1485 849.7 1484 848.9 1483 848.9 1482 848.9 1481 848.9 1480 848.9 1479 849.3 1478 849.8 1477 850.2 1476 851.1 1475 849.6 1474 848.9 1473 848.9 1472 848.9 1471 848.9 1470 848.9 1469 849.1 1468 849.5 1467 849.7 1466 850.0 1465 850.3 1464 850.6 1463 849.7 1462 848.9 1461 848.9 1460 848.9 1459 849.3 1458 849.6 1457 850.0 1456 850.3 1455 849.6Z M1000 863.5L1000 862.1 1001 861.5 1002 861.2 1003 861.1 1004 860.9 1005 860.7 1006 861.1 1007 860.6 1008 861.1 1009 861.0 1010 861.5 1011 861.5 1012 861.8 1013 862.1 1014 861.7 1015 861.7 1016 861.2 1017 861.2 1018 861.2 1019 860.7 1020 860.5 1021 860.5 1022 860.8 1023 860.8 1024 861.0 1025 861.6 1026 861.8 1027 862.0 1028 861.9 1029 861.9 1030 862.0 1031 861.5 1032 861.7 1033 861.1 1034 861.2 1035 860.9 1036 861.2 1037 861.5 1038 861.4 1039 861.5 1040 861.8 1041 862.0 1042 862.1 1043 862.5 1044 862.2 1045 862.0 1046 862.1 1047 861.9 1048 861.5 1049 861.7 1050 861.5 1051 861.8 1052 862.0 1053 861.9 1054 861.9 1055 862.1 1056 862.5 1057 862.1 1058 862.2 1059 861.8 1060 862.0 1061 861.6 1062 861.4 1063 861.5 1064 861.6 1065 861.2 1066 861.3 1067 861.6 1068 861.9 1069 861.7 1070 862.0 1071 862.1 1072 862.4 1073 862.2 1074 862.1 1075 862.2 1076 861.8 1077 862.0 1078 861.7 1079 861.9 1080 862.0 1081 862.1 1082 862.4 1083 862.4 1084 861.7 1085 861.8 1086 861.7 1087 861.3 1088 861.1 1089 860.7 1090 860.8 1091 861.0 1092 861.0 1092 866.0 1091 866.0 1090 866.2 1089 866.3 1088 865.9 1087 865.7 1086 865.3 1085 865.2 1084 865.3 1083 864.6 1082 864.6 1081 864.9 1080 865.0 1079 865.1 1078 865.3 1077 865.0 1076 865.2 1075 864.8 1074 864.9 1073 864.8 1072 864.6 1071 864.9 1070 865.0 1069 865.3 1068 865.1 1067 865.4 1066 865.7 1065 865.8 1064 865.4 1063 865.5 1062 865.6 1061 865.4 1060 865.0 1059 865.2 1058 864.8 1057 864.9 1056 864.5 1055 864.9 1054 865.1 1053 865.1 1052 865.0 1051 865.2 1050 865.5 1049 865.3 1048 865.5 1047 865.1 1046 864.9 1045 865.0 1044 864.8 1043 864.5 1042 864.9 1041 865.0 1040 865.2 1039 865.5 1038 865.6 1037 865.5 1036 865.8 1035 866.1 1034 865.8 1033 865.9 1032 865.3 1031 865.5 1030 865.0 1029 865.1 1028 865.1 1027 865.0 1026 865.2 1025 865.4 1024 866.0 1023 866.2 1022 866.2 1021 866.5 1020 866.5 1019 866.3 1018 865.8 1017 865.8 1016 865.8 1015 865.3 1014 865.3 1013 864.9 1012 865.2 1011 865.5 1010 865.5 1009 866.0 1008 865.9 1007 866.4 1006 865.9 1005 866.3 1004 866.1 1003 865.9 1002 865.8 1001 865.5 1000 864.9Z M1000 872.5L1000 871.0 1001 870.7 1002 870.3 1003 870.2 1004 870.0 1005 870.1 1006 870.0 1007 869.6 1008 870.0 1009 869.7 1010 870.0 1011 870.1 1012 870.7 1013 870.8 1014 871.5 1015 871.1 1016 871.1 1017 870.8 1018 871.0 1019 871.0 1020 871.3 1021 870.9 1022 870.6 1023 869.9 1024 869.9 1025 870.6 1026 870.7 1027 871.0 1028 870.6 1029 870.3 1030 870.4 1031 870.5 1032 869.9 1033 870.2 1034 870.4 1035 871.0 1036 871.2 1037 870.9 1038 871.1 1039 870.7 1040 870.7 1041 870.4 1042 870.2 1043 870.3 1044 870.7 1045 870.5 1046 871.0 1047 871.0 1048 870.7 1049 870.3 1050 869.8 1051 869.5 1052 869.6 1053 869.9 1054 870.6 1055 870.9 1056 871.1 1057 871.1 1058 870.7 1059 870.5 1060 870.6 1061 870.3 1062 870.2 1063 870.5 1064 870.9 1065 870.7 1066 871.2 1067 871.1 1068 870.8 1069 870.4 1070 869.9 1071 870.5 1072 870.7 1073 871.1 1074 871.4 1075 871.3 1076 870.9 1077 870.9 1078 870.7 1079 870.7 1080 871.0 1081 871.3 1082 871.0 1083 870.9 1084 871.0 1085 870.7 1086 870.4 1087 870.5 1088 870.1 1089 869.9 1090 870.5 1091 870.3 1092 870.3 1092 874.7 1091 874.7 1090 874.5 1089 875.1 1088 874.9 1087 874.5 1086 874.6 1085 874.3 1084 874.0 1083 874.1 1082 874.0 1081 873.7 1080 874.0 1079 874.3 1078 874.3 1077 874.1 1076 874.1 1075 873.7 1074 873.6 1073 873.9 1072 874.3 1071 874.5 1070 875.1 1069 874.6 1068 874.2 1067 873.9 1066 873.8 1065 874.3 1064 874.1 1063 874.5 1062 874.8 1061 874.7 1060 874.4 1059 874.5 1058 874.3 1057 873.9 1056 873.9 1055 874.1 1054 874.4 1053 875.1 1052 875.4 1051 875.5 1050 875.2 1049 874.7 1048 874.3 1047 874.0 1046 874.0 1045 874.5 1044 874.3 1043 874.7 1042 874.8 1041 874.6 1040 874.3 1039 874.3 1038 873.9 1037 874.1 1036 873.8 1035 874.0 1034 874.6 1033 874.8 1032 875.1 1031 874.5 1030 874.6 1029 874.7 1028 874.4 1027 874.0 1026 874.3 1025 874.4 1024 875.1 1023 875.1 1022 874.4 1021 874.1 1020 873.7 1019 874.0 1018 874.0 1017 874.2 1016 873.9 1015 873.9 1014 873.5 1013 874.2 1012 874.3 1011 874.9 1010 875.0 1009 875.3 1008 875.0 1007 875.4 1006 875.0 1005 874.9 1004 875.0 1003 874.8 1002 874.7 1001 874.3 1000 874.0Z M1457 863.5L1457 861.9 1458 861.7 1459 861.5 1460 861.0 1461 861.2 1462 860.5 1463 860.4 1464 860.9 1465 860.8 1466 861.3 1467 860.9 1468 861.4 1469 861.5 1470 861.9 1471 862.1 1472 861.8 1473 861.6 1474 861.5 1475 861.5 1476 861.7 1477 861.8 1478 862.0 1479 862.3 1480 862.1 1481 861.6 1482 861.4 1483 861.2 1484 861.3 1484 865.7 1483 865.8 1482 865.6 1481 865.4 1480 864.9 1479 864.7 1478 865.0 1477 865.2 1476 865.3 1475 865.5 1474 865.5 1473 865.4 1472 865.2 1471 864.9 1470 865.1 1469 865.5 1468 865.6 1467 866.1 1466 865.7 1465 866.2 1464 866.1 1463 866.6 1462 866.5 1461 865.8 1460 866.0 1459 865.5 1458 865.3 1457 865.1Z M1457 872.5L1457 870.8 1458 871.0 1459 870.8 1460 870.4 1461 870.1 1462 870.0 1463 870.0 1464 869.8 1465 869.7 1466 870.0 1467 869.9 1468 870.5 1469 870.7 1470 870.6 1471 871.0 1472 870.8 1473 871.2 1474 871.1 1475 870.9 1476 870.8 1477 870.3 1478 870.4 1479 870.3 1480 870.6 1481 870.8 1482 871.1 1483 871.6 1484 871.2 1484 873.8 1483 873.4 1482 873.9 1481 874.2 1480 874.4 1479 874.7 1478 874.6 1477 874.7 1476 874.2 1475 874.1 1474 873.9 1473 873.8 1472 874.2 1471 874.0 1470 874.4 1469 874.3 1468 874.5 1467 875.1 1466 875.0 1465 875.3 1464 875.2 1463 875.0 1462 875.0 1461 874.9 1460 874.6 1459 874.2 1458 874.0 1457 874.2Z M1490 863.5L1490 862.0 1491 861.8 1492 861.6 1493 861.5 1494 861.1 1495 861.3 1496 861.5 1497 861.3 1498 861.7 1499 861.9 1500 861.8 1501 861.8 1502 861.6 1503 860.8 1504 861.1 1505 860.6 1506 861.4 1507 861.5 1508 861.3 1509 861.8 1510 862.5 1511 862.3 1512 862.0 1513 862.1 1514 861.8 1515 862.0 1516 861.9 1517 861.5 1518 861.6 1519 861.9 1519 865.1 1518 865.4 1517 865.5 1516 865.1 1515 865.0 1514 865.2 1513 864.9 1512 865.0 1511 864.7 1510 864.5 1509 865.2 1508 865.7 1507 865.5 1506 865.6 1505 866.4 1504 865.9 1503 866.2 1502 865.4 1501 865.2 1500 865.2 1499 865.1 1498 865.3 1497 865.7 1496 865.5 1495 865.7 1494 865.9 1493 865.5 1492 865.4 1491 865.2 1490 865.0Z M1490 872.5L1490 871.1 1491 871.0 1492 871.1 1493 870.7 1494 870.6 1495 870.6 1496 870.3 1497 870.3 1498 870.9 1499 870.6 1500 870.8 1501 871.0 1502 871.2 1503 871.4 1504 871.4 1505 871.4 1506 871.0 1507 870.8 1508 870.9 1509 870.9 1510 870.7 1511 871.0 1512 870.7 1513 871.2 1514 871.1 1515 871.3 1516 871.5 1517 871.5 1518 870.6 1519 870.8 1519 874.2 1518 874.4 1517 873.5 1516 873.5 1515 873.7 1514 873.9 1513 873.8 1512 874.3 1511 874.0 1510 874.3 1509 874.1 1508 874.1 1507 874.2 1506 874.0 1505 873.6 1504 873.6 1503 873.6 1502 873.8 1501 874.0 1500 874.2 1499 874.4 1498 874.1 1497 874.7 1496 874.7 1495 874.4 1494 874.4 1493 874.3 1492 873.9 1491 874.0 1490 873.9Z M1540 863.5L1540 862.6 1541 862.2 1542 862.1 1543 862.1 1544 862.1 1545 861.9 1546 861.8 1547 861.8 1548 862.1 1549 862.1 1550 862.2 1551 862.3 1551 864.7 1550 864.8 1549 864.9 1548 864.9 1547 865.2 1546 865.2 1545 865.1 1544 864.9 1543 864.9 1542 864.9 1541 864.8 1540 864.4Z M1540 872.5L1540 871.1 1541 870.6 1542 870.3 1543 870.4 1544 870.9 1545 871.1 1546 870.9 1547 870.1 1548 869.8 1549 869.3 1550 869.7 1551 870.3 1551 874.7 1550 875.3 1549 875.7 1548 875.2 1547 874.9 1546 874.1 1545 873.9 1544 874.1 1543 874.6 1542 874.7 1541 874.4 1540 873.9Z M658 959.5L658 958.1 659 957.7 660 957.6 661 957.6 662 957.0 663 957.4 664 957.1 665 957.3 666 957.7 667 957.9 668 957.8 669 958.2 670 957.6 671 957.4 672 957.0 673 956.8 674 956.2 675 956.4 676 956.5 677 956.8 678 957.1 679 957.2 680 957.9 681 957.3 682 957.2 683 957.0 684 957.0 685 956.8 686 956.2 687 955.8 688 955.9 689 956.7 690 956.5 691 956.7 692 957.2 693 957.3 694 958.1 695 957.6 696 957.7 697 957.4 698 957.1 699 957.6 700 958.1 701 958.2 702 958.0 703 957.6 704 957.4 705 957.2 706 957.4 707 957.1 708 956.7 709 957.2 710 957.4 711 957.1 712 957.8 713 957.8 714 957.8 715 958.1 716 957.6 717 957.0 718 957.0 719 957.2 720 957.2 721 957.9 722 957.8 723 957.1 724 957.2 725 956.4 726 956.0 727 956.6 728 956.8 729 956.9 730 957.8 731 957.9 732 957.9 733 957.3 734 957.5 735 957.1 736 957.3 737 956.5 738 956.6 739 956.8 740 956.7 741 957.5 742 957.3 743 957.7 744 957.5 745 958.0 746 957.8 747 957.6 748 956.8 749 957.0 750 957.2 751 957.2 752 957.6 753 957.5 754 957.0 755 957.1 756 956.9 757 956.2 758 956.6 759 956.6 760 956.8 761 956.7 762 957.4 763 957.6 764 958.0 765 957.6 766 957.5 767 957.0 768 956.9 769 957.2 769 961.8 768 962.1 767 962.0 766 961.5 765 961.4 764 961.0 763 961.4 762 961.6 761 962.3 760 962.2 759 962.4 758 962.4 757 962.8 756 962.1 755 961.9 754 962.0 753 961.5 752 961.4 751 961.8 750 961.8 749 962.0 748 962.2 747 961.4 746 961.2 745 961.0 744 961.5 743 961.3 742 961.7 741 961.5 740 962.3 739 962.2 738 962.4 737 962.5 736 961.7 735 961.9 734 961.5 733 961.7 732 961.1 731 961.1 730 961.2 729 962.1 728 962.2 727 962.4 726 963.0 725 962.6 724 961.8 723 961.9 722 961.2 721 961.1 720 961.8 719 961.8 718 962.0 717 962.0 716 961.4 715 960.9 714 961.2 713 961.2 712 961.2 711 961.9 710 961.6 709 961.8 708 962.3 707 961.9 706 961.6 705 961.8 704 961.6 703 961.4 702 961.0 701 960.8 700 960.9 699 961.4 698 961.9 697 961.6 696 961.3 695 961.4 694 960.9 693 961.7 692 961.8 691 962.3 690 962.5 689 962.3 688 963.1 687 963.2 686 962.8 685 962.2 684 962.0 683 962.0 682 961.8 681 961.7 680 961.1 679 961.8 678 961.9 677 962.2 676 962.5 675 962.6 674 962.8 673 962.2 672 962.0 671 961.6 670 961.4 669 960.8 668 961.2 667 961.1 666 961.3 665 961.7 664 961.9 663 961.6 662 962.0 661 961.4 660 961.4 659 961.3 658 960.9Z M658 968.5L658 966.5 659 966.0 660 965.8 661 965.4 662 965.8 663 966.2 664 966.5 665 967.3 666 966.9 667 967.0 668 966.8 669 966.7 670 966.6 671 966.3 672 966.5 673 966.7 674 967.1 675 967.1 676 967.3 677 966.9 678 967.0 679 966.5 680 966.4 681 966.3 682 966.7 683 966.8 684 967.0 685 967.1 686 966.6 687 965.5 688 965.2 689 965.1 690 965.7 691 965.9 692 966.4 693 966.8 694 966.0 695 966.0 696 965.2 697 966.0 698 966.9 699 966.5 700 966.0 701 965.9 702 965.7 703 965.5 704 965.6 705 965.1 706 965.5 707 965.5 708 965.8 709 965.8 710 966.3 711 966.0 712 966.6 713 966.5 714 966.0 715 965.2 716 965.2 717 965.6 718 966.4 719 967.2 720 966.8 721 966.8 722 966.7 723 966.6 724 966.2 725 966.4 726 966.5 727 966.5 728 966.6 729 966.8 730 966.7 731 967.0 732 967.0 733 967.0 734 966.6 735 966.1 736 966.1 737 965.6 738 964.9 739 965.6 740 965.1 741 965.5 742 965.8 743 966.6 744 967.0 745 966.6 746 966.5 747 966.3 748 966.5 749 966.4 750 966.2 751 966.5 752 966.2 753 966.7 754 966.6 755 966.9 756 966.5 757 966.1 758 965.6 759 965.4 760 965.8 761 966.0 762 966.1 763 966.0 764 966.8 765 966.6 766 966.5 767 966.3 768 965.4 769 965.9 769 971.1 768 971.6 767 970.7 766 970.5 765 970.4 764 970.2 763 971.0 762 970.9 761 971.0 760 971.2 759 971.6 758 971.4 757 970.9 756 970.5 755 970.1 754 970.4 753 970.3 752 970.8 751 970.5 750 970.8 749 970.6 748 970.5 747 970.7 746 970.5 745 970.4 744 970.0 743 970.4 742 971.2 741 971.5 740 971.9 739 971.4 738 972.1 737 971.4 736 970.9 735 970.9 734 970.4 733 970.0 732 970.0 731 970.0 730 970.3 729 970.2 728 970.4 727 970.5 726 970.5 725 970.6 724 970.8 723 970.4 722 970.3 721 970.2 720 970.2 719 969.8 718 970.6 717 971.4 716 971.8 715 971.8 714 971.0 713 970.5 712 970.4 711 971.0 710 970.7 709 971.2 708 971.2 707 971.5 706 971.5 705 971.9 704 971.4 703 971.5 702 971.3 701 971.1 700 971.0 699 970.5 698 970.1 697 971.0 696 971.8 695 971.0 694 971.0 693 970.2 692 970.6 691 971.1 690 971.3 689 971.9 688 971.8 687 971.5 686 970.4 685 969.9 684 970.0 683 970.2 682 970.3 681 970.7 680 970.6 679 970.5 678 970.0 677 970.1 676 969.7 675 969.9 674 969.9 673 970.3 672 970.5 671 970.7 670 970.4 669 970.3 668 970.2 667 970.0 666 970.1 665 969.7 664 970.5 663 970.8 662 971.2 661 971.6 660 971.2 659 971.0 658 970.5Z" fill="#424346" stroke="#0a0a0a" stroke-width="0.8" stroke-linejoin="round"/></svg>
<div class="a" style="left:1059px;top:188px;width:4px;height:17px;background:#9a9b9e;"></div>
<div class="a" style="left:1060px;top:188px;width:1px;height:17px;background:#dcdde0;"></div>
<div class="a" style="left:1062px;top:188px;width:1px;height:17px;background:#dcdde0;"></div>
<div class="a" style="left:1059px;top:210px;width:4px;height:19px;background:#9a9b9e;"></div>
<div class="a" style="left:1060px;top:210px;width:1px;height:19px;background:#dcdde0;"></div>
<div class="a" style="left:1062px;top:210px;width:1px;height:19px;background:#dcdde0;"></div>
<div class="a" style="left:1059px;top:234px;width:4px;height:19px;background:#9a9b9e;"></div>
<div class="a" style="left:1060px;top:234px;width:1px;height:19px;background:#dcdde0;"></div>
<div class="a" style="left:1062px;top:234px;width:1px;height:19px;background:#dcdde0;"></div>
<div class="a" style="left:1059px;top:258px;width:4px;height:19px;background:#9a9b9e;"></div>
<div class="a" style="left:1060px;top:258px;width:1px;height:19px;background:#dcdde0;"></div>
<div class="a" style="left:1062px;top:258px;width:1px;height:19px;background:#dcdde0;"></div>
<div class="a" style="left:1059px;top:282px;width:4px;height:19px;background:#9a9b9e;"></div>
<div class="a" style="left:1060px;top:282px;width:1px;height:19px;background:#dcdde0;"></div>
<div class="a" style="left:1062px;top:282px;width:1px;height:19px;background:#dcdde0;"></div>
<div class="a" style="left:1059px;top:306px;width:4px;height:19px;background:#9a9b9e;"></div>
<div class="a" style="left:1060px;top:306px;width:1px;height:19px;background:#dcdde0;"></div>
<div class="a" style="left:1062px;top:306px;width:1px;height:19px;background:#dcdde0;"></div>
<div class="a" style="left:1059px;top:330px;width:4px;height:19px;background:#9a9b9e;"></div>
<div class="a" style="left:1060px;top:330px;width:1px;height:19px;background:#dcdde0;"></div>
<div class="a" style="left:1062px;top:330px;width:1px;height:19px;background:#dcdde0;"></div>
<div class="a" style="left:1059px;top:354px;width:4px;height:19px;background:#9a9b9e;"></div>
<div class="a" style="left:1060px;top:354px;width:1px;height:19px;background:#dcdde0;"></div>
<div class="a" style="left:1062px;top:354px;width:1px;height:19px;background:#dcdde0;"></div>
<div class="a" style="left:1055px;top:292px;width:4px;height:7px;background:#2a2b2e;"></div>
<div class="a" style="left:776px;top:714px;width:3px;height:19px;background:#dcdde0;"></div>
<div class="a" style="left:777px;top:715px;width:1px;height:17px;background:#9a9b9e;"></div>
<div class="a" style="left:1339px;top:642px;width:3px;height:19px;background:#dcdde0;"></div>
<div class="a" style="left:1340px;top:643px;width:1px;height:17px;background:#9a9b9e;"></div>
<div class="a" style="left:1476px;top:163px;width:4px;height:806px;background:#050505;"></div>
<div class="a" style="left:1477px;top:163px;width:2px;height:806px;background:#f4f4f4;"></div>
<svg class="a" style="left:1680px;top:150px;" width="240" height="845" viewBox="0 0 240 845"><g transform="translate(-1680 -150)"><path d="M1694 180 H1847 a5 5 0 0 0 5 -5 V165 a7 7 0 0 1 7 -7 H1909 a7 7 0 0 1 7 7 V959 a7 7 0 0 1 -7 7 H1771 a5 5 0 0 0 -5 5 V982 a5 5 0 0 1 -5 5 H1694 a7 7 0 0 1 -7 -7 V187 a7 7 0 0 1 7 -7z" fill="#25272b" stroke="#5d5e62" stroke-width="2"/></g></svg>
<div class="a t" style="left:1700.50px;top:163.00px;font-size:13px;line-height:13px;color:#d6d6d6;font-weight:bold;transform:scaleX(0.8897);transform-origin:0 0;">VSTi</div>
<div class="a t" style="left:1755.50px;top:163.00px;font-size:13px;line-height:13px;color:#d6d6d6;font-weight:bold;transform:scaleX(0.9364);transform-origin:0 0;">Media</div>
<div class="a t" style="left:1821.00px;top:163.00px;font-size:13px;line-height:13px;color:#d6d6d6;font-weight:bold;transform:scaleX(0.8521);transform-origin:0 0;">CR</div>
<div class="a t" style="left:1867.50px;top:163.00px;font-size:13px;line-height:13px;color:#f0f0f0;font-weight:bold;transform:scaleX(0.9660);transform-origin:0 0;">Meter</div>
<div class="a" style="left:1697px;top:192px;width:154px;height:25px;background:#1b1c1f;box-shadow:inset 0 0 0 1px #3b3c40;border-radius:3px;"></div>
<div class="a" style="left:1774px;top:193px;width:1px;height:23px;background:#3b3c40;"></div>
<div class="a t" style="left:1704.00px;top:199.42px;font-size:12.5px;line-height:12.5px;color:#e0e0e0;transform:scaleX(0.9887);transform-origin:0 0;">+3dB D.</div>
<svg class="a" style="left:1756px;top:198px;" width="14" height="14" viewBox="0 0 14 14"><path d="M2.5 4h9l-4.5 6z" fill="#e0e0e0"/></svg>
<div class="a t" style="left:1781.00px;top:199.42px;font-size:12.5px;line-height:12.5px;color:#66676a;transform:scaleX(0.9925);transform-origin:0 0;">-18 dB.</div>
<svg class="a" style="left:1833px;top:198px;" width="14" height="14" viewBox="0 0 14 14"><path d="M2.5 4h9l-4.5 6z" fill="#5d5e61"/></svg>
<div class="a" style="left:1855px;top:192px;width:50px;height:25px;background:#2e3034;box-shadow:inset 0 0 0 1px #3b3c40;border-radius:3px;"></div>
<div class="a" style="left:1879px;top:193px;width:1px;height:23px;background:#3b3c40;"></div>
<svg class="a" style="left:1855px;top:192px;" width="24" height="25" viewBox="0 0 24 25"><g transform="translate(12 12.5)"><circle r="4.6" fill="none" stroke="#e0e0e0" stroke-width="2.6"/><g stroke="#e0e0e0" stroke-width="2.4"><path d="M0 -7v3M0 4v3M-7 0h3M4 0h3M-5 -5l2 2M3 3l2 2M5 -5l-2 2M-3 3l-2 2"/></g></g></svg>
<svg class="a" style="left:1880px;top:192px;" width="25" height="25" viewBox="0 0 25 25"><rect x="6" y="7.5" width="2.2" height="10" fill="#e0e0e0"/><path d="M13.5 7.5v10l-5-5zM19 7.5v10l-5-5z" fill="#e0e0e0"/></svg>
<div class="a" style="left:1757px;top:235px;width:89px;height:638px;background:#000000;border:2px solid #5f6063;"></div>
<div class="a t" style="left:1731.92px;top:231.15px;font-size:14px;line-height:14px;color:#b4b4b4;font-weight:bold;transform:scaleX(0.9200);transform-origin:0 0;">3</div>
<div class="a t" style="left:1861.42px;top:231.15px;font-size:14px;line-height:14px;color:#b4b4b4;font-weight:bold;transform:scaleX(0.9200);transform-origin:0 0;">3</div>
<div class="a" style="left:1747px;top:238px;width:8px;height:2px;background:#b4b4b4;"></div>
<div class="a" style="left:1847px;top:238px;width:8px;height:2px;background:#b4b4b4;"></div>
<div class="a t" style="left:1731.92px;top:271.15px;font-size:14px;line-height:14px;color:#b4b4b4;font-weight:bold;transform:scaleX(0.9200);transform-origin:0 0;">0</div>
<div class="a t" style="left:1861.42px;top:271.15px;font-size:14px;line-height:14px;color:#b4b4b4;font-weight:bold;transform:scaleX(0.9200);transform-origin:0 0;">0</div>
<div class="a" style="left:1747px;top:278px;width:8px;height:2px;background:#a02020;"></div>
<div class="a" style="left:1847px;top:278px;width:8px;height:2px;background:#a02020;"></div>
<div class="a t" style="left:1731.92px;top:352.15px;font-size:14px;line-height:14px;color:#b4b4b4;font-weight:bold;transform:scaleX(0.9200);transform-origin:0 0;">6</div>
<div class="a t" style="left:1861.42px;top:352.15px;font-size:14px;line-height:14px;color:#b4b4b4;font-weight:bold;transform:scaleX(0.9200);transform-origin:0 0;">6</div>
<div class="a" style="left:1747px;top:359px;width:8px;height:2px;background:#b4b4b4;"></div>
<div class="a" style="left:1847px;top:359px;width:8px;height:2px;background:#b4b4b4;"></div>
<div class="a t" style="left:1728.34px;top:433.15px;font-size:14px;line-height:14px;color:#b4b4b4;font-weight:bold;transform:scaleX(0.9200);transform-origin:0 0;">12</div>
<div class="a t" style="left:1857.84px;top:433.15px;font-size:14px;line-height:14px;color:#b4b4b4;font-weight:bold;transform:scaleX(0.9200);transform-origin:0 0;">12</div>
<div class="a" style="left:1747px;top:440px;width:8px;height:2px;background:#b4b4b4;"></div>
<div class="a" style="left:1847px;top:440px;width:8px;height:2px;background:#b4b4b4;"></div>
<div class="a t" style="left:1728.34px;top:514.15px;font-size:14px;line-height:14px;color:#b4b4b4;font-weight:bold;transform:scaleX(0.9200);transform-origin:0 0;">18</div>
<div class="a t" style="left:1857.84px;top:514.15px;font-size:14px;line-height:14px;color:#b4b4b4;font-weight:bold;transform:scaleX(0.9200);transform-origin:0 0;">18</div>
<div class="a" style="left:1747px;top:521px;width:8px;height:2px;background:#b4b4b4;"></div>
<div class="a" style="left:1847px;top:521px;width:8px;height:2px;background:#b4b4b4;"></div>
<div class="a t" style="left:1728.34px;top:593.15px;font-size:14px;line-height:14px;color:#b4b4b4;font-weight:bold;transform:scaleX(0.9200);transform-origin:0 0;">24</div>
<div class="a t" style="left:1857.84px;top:593.15px;font-size:14px;line-height:14px;color:#b4b4b4;font-weight:bold;transform:scaleX(0.9200);transform-origin:0 0;">24</div>
<div class="a" style="left:1747px;top:600px;width:8px;height:2px;background:#b4b4b4;"></div>
<div class="a" style="left:1847px;top:600px;width:8px;height:2px;background:#b4b4b4;"></div>
<div class="a t" style="left:1728.34px;top:663.15px;font-size:14px;line-height:14px;color:#b4b4b4;font-weight:bold;transform:scaleX(0.9200);transform-origin:0 0;">30</div>
<div class="a t" style="left:1857.84px;top:663.15px;font-size:14px;line-height:14px;color:#b4b4b4;font-weight:bold;transform:scaleX(0.9200);transform-origin:0 0;">30</div>
<div class="a" style="left:1747px;top:670px;width:8px;height:2px;background:#b4b4b4;"></div>
<div class="a" style="left:1847px;top:670px;width:8px;height:2px;background:#b4b4b4;"></div>
<div class="a t" style="left:1728.34px;top:757.15px;font-size:14px;line-height:14px;color:#b4b4b4;font-weight:bold;transform:scaleX(0.9200);transform-origin:0 0;">40</div>
<div class="a t" style="left:1857.84px;top:757.15px;font-size:14px;line-height:14px;color:#b4b4b4;font-weight:bold;transform:scaleX(0.9200);transform-origin:0 0;">40</div>
<div class="a" style="left:1747px;top:764px;width:8px;height:2px;background:#b4b4b4;"></div>
<div class="a" style="left:1847px;top:764px;width:8px;height:2px;background:#b4b4b4;"></div>
<div class="a t" style="left:1728.34px;top:819.15px;font-size:14px;line-height:14px;color:#b4b4b4;font-weight:bold;transform:scaleX(0.9200);transform-origin:0 0;">50</div>
<div class="a t" style="left:1857.84px;top:819.15px;font-size:14px;line-height:14px;color:#b4b4b4;font-weight:bold;transform:scaleX(0.9200);transform-origin:0 0;">50</div>
<div class="a" style="left:1747px;top:826px;width:8px;height:2px;background:#b4b4b4;"></div>
<div class="a" style="left:1847px;top:826px;width:8px;height:2px;background:#b4b4b4;"></div>
<div class="a t" style="left:1728.34px;top:844.15px;font-size:14px;line-height:14px;color:#b4b4b4;font-weight:bold;transform:scaleX(0.9200);transform-origin:0 0;">60</div>
<div class="a t" style="left:1857.84px;top:844.15px;font-size:14px;line-height:14px;color:#b4b4b4;font-weight:bold;transform:scaleX(0.9200);transform-origin:0 0;">60</div>
<div class="a" style="left:1747px;top:851px;width:8px;height:2px;background:#b4b4b4;"></div>
<div class="a" style="left:1847px;top:851px;width:8px;height:2px;background:#b4b4b4;"></div>
<div class="a" style="left:1751px;top:251px;width:4px;height:2px;background:#b4b4b4;"></div>
<div class="a" style="left:1847px;top:251px;width:4px;height:2px;background:#b4b4b4;"></div>
<div class="a" style="left:1751px;top:265px;width:4px;height:2px;background:#b4b4b4;"></div>
<div class="a" style="left:1847px;top:265px;width:4px;height:2px;background:#b4b4b4;"></div>
<div class="a" style="left:1751px;top:292px;width:4px;height:2px;background:#b4b4b4;"></div>
<div class="a" style="left:1847px;top:292px;width:4px;height:2px;background:#b4b4b4;"></div>
<div class="a" style="left:1751px;top:305px;width:4px;height:2px;background:#b4b4b4;"></div>
<div class="a" style="left:1847px;top:305px;width:4px;height:2px;background:#b4b4b4;"></div>
<div class="a" style="left:1751px;top:319px;width:4px;height:2px;background:#b4b4b4;"></div>
<div class="a" style="left:1847px;top:319px;width:4px;height:2px;background:#b4b4b4;"></div>
<div class="a" style="left:1751px;top:332px;width:4px;height:2px;background:#b4b4b4;"></div>
<div class="a" style="left:1847px;top:332px;width:4px;height:2px;background:#b4b4b4;"></div>
<div class="a" style="left:1751px;top:346px;width:4px;height:2px;background:#b4b4b4;"></div>
<div class="a" style="left:1847px;top:346px;width:4px;height:2px;background:#b4b4b4;"></div>
<div class="a" style="left:1751px;top:373px;width:4px;height:2px;background:#b4b4b4;"></div>
<div class="a" style="left:1847px;top:373px;width:4px;height:2px;background:#b4b4b4;"></div>
<div class="a" style="left:1751px;top:386px;width:4px;height:2px;background:#b4b4b4;"></div>
<div class="a" style="left:1847px;top:386px;width:4px;height:2px;background:#b4b4b4;"></div>
<div class="a" style="left:1751px;top:399px;width:4px;height:2px;background:#b4b4b4;"></div>
<div class="a" style="left:1847px;top:399px;width:4px;height:2px;background:#b4b4b4;"></div>
<div class="a" style="left:1751px;top:413px;width:4px;height:2px;background:#b4b4b4;"></div>
<div class="a" style="left:1847px;top:413px;width:4px;height:2px;background:#b4b4b4;"></div>
<div class="a" style="left:1751px;top:426px;width:4px;height:2px;background:#b4b4b4;"></div>
<div class="a" style="left:1847px;top:426px;width:4px;height:2px;background:#b4b4b4;"></div>
<div class="a" style="left:1751px;top:453px;width:4px;height:2px;background:#b4b4b4;"></div>
<div class="a" style="left:1847px;top:453px;width:4px;height:2px;background:#b4b4b4;"></div>
<div class="a" style="left:1751px;top:467px;width:4px;height:2px;background:#b4b4b4;"></div>
<div class="a" style="left:1847px;top:467px;width:4px;height:2px;background:#b4b4b4;"></div>
<div class="a" style="left:1751px;top:480px;width:4px;height:2px;background:#b4b4b4;"></div>
<div class="a" style="left:1847px;top:480px;width:4px;height:2px;background:#b4b4b4;"></div>
<div class="a" style="left:1751px;top:494px;width:4px;height:2px;background:#b4b4b4;"></div>
<div class="a" style="left:1847px;top:494px;width:4px;height:2px;background:#b4b4b4;"></div>
<div class="a" style="left:1751px;top:507px;width:4px;height:2px;background:#b4b4b4;"></div>
<div class="a" style="left:1847px;top:507px;width:4px;height:2px;background:#b4b4b4;"></div>
<div class="a" style="left:1751px;top:534px;width:4px;height:2px;background:#b4b4b4;"></div>
<div class="a" style="left:1847px;top:534px;width:4px;height:2px;background:#b4b4b4;"></div>
<div class="a" style="left:1751px;top:548px;width:4px;height:2px;background:#b4b4b4;"></div>
<div class="a" style="left:1847px;top:548px;width:4px;height:2px;background:#b4b4b4;"></div>
<div class="a" style="left:1751px;top:561px;width:4px;height:2px;background:#b4b4b4;"></div>
<div class="a" style="left:1847px;top:561px;width:4px;height:2px;background:#b4b4b4;"></div>
<div class="a" style="left:1751px;top:574px;width:4px;height:2px;background:#b4b4b4;"></div>
<div class="a" style="left:1847px;top:574px;width:4px;height:2px;background:#b4b4b4;"></div>
<div class="a" style="left:1751px;top:587px;width:4px;height:2px;background:#b4b4b4;"></div>
<div class="a" style="left:1847px;top:587px;width:4px;height:2px;background:#b4b4b4;"></div>
<div class="a" style="left:1751px;top:635px;width:4px;height:2px;background:#b4b4b4;"></div>
<div class="a" style="left:1847px;top:635px;width:4px;height:2px;background:#b4b4b4;"></div>
<div class="a" style="left:1751px;top:721px;width:4px;height:2px;background:#b4b4b4;"></div>
<div class="a" style="left:1847px;top:721px;width:4px;height:2px;background:#b4b4b4;"></div>
<div class="a" style="left:1751px;top:799px;width:4px;height:2px;background:#b4b4b4;"></div>
<div class="a" style="left:1847px;top:799px;width:4px;height:2px;background:#b4b4b4;"></div>
<div class="a" style="left:1697px;top:895px;width:208px;height:60px;background:#1e1f22;border-radius:6px;"></div>
<div class="a t" style="left:1736.00px;top:907.42px;font-size:12.5px;line-height:12.5px;color:#cfcfcf;transform:scaleX(0.9771);transform-origin:0 0;">RMS Max.</div>
<div class="a t" style="left:1810.50px;top:907.42px;font-size:12.5px;line-height:12.5px;color:#cfcfcf;transform:scaleX(0.9568);transform-origin:0 0;">Peak Max.</div>
<div class="a t" style="left:1747.00px;top:932.42px;font-size:12.5px;line-height:12.5px;color:#e6e6e6;transform:scaleX(0.9734);transform-origin:0 0;">-149.1</div>
<div class="a t" style="left:1821.50px;top:932.42px;font-size:12.5px;line-height:12.5px;color:#e6e6e6;transform:scaleX(0.9734);transform-origin:0 0;">-142.8</div>
<div class="a t" style="left:1706.00px;top:973.00px;font-size:13px;line-height:13px;color:#f0f0f0;font-weight:bold;transform:scaleX(0.9306);transform-origin:0 0;">Master</div>
<div class="a t" style="left:1787.00px;top:973.00px;font-size:13px;line-height:13px;color:#e6e6e6;font-weight:bold;transform:scaleX(0.8388);transform-origin:0 0;">Loudness</div>
<div class="a t" style="left:1506.00px;top:939.26px;font-size:18px;line-height:18px;color:rgba(205,205,205,0.42);transform:scaleX(1.1161);transform-origin:0 0;">Windows</div>
<div class="a t" style="left:1645.70px;top:966.57px;font-size:13.5px;line-height:13.5px;color:rgba(205,205,205,0.42);transform:scaleX(1.0956);transform-origin:0 0;">Windows</div>
<svg class="a" style="left:1596px;top:938px;" width="14" height="16" viewBox="0 0 14 16"><path d="M1 2h6M4 2l-3 6M4 4l3 4M11 1v8M9 4h2M2 12a4 2.5 0 1 0 8 0a4 2.5 0 1 0 -8 0" stroke="rgba(205,205,205,0.42)" stroke-width="1.1" fill="none"/></svg>
<svg class="a" style="left:1614px;top:938px;" width="14" height="16" viewBox="0 0 14 16"><path d="M2 1.5h8M3.5 1.5v4M8.5 1.5v4M2 5.5h8M6 6v2M0.5 8h11M2 10h8v5.5H2z" stroke="rgba(205,205,205,0.42)" stroke-width="1.1" fill="none"/></svg>
<svg class="a" style="left:1641px;top:938px;" width="14" height="16" viewBox="0 0 14 16"><path d="M4 5a3 3.5 0 1 0 0.1 0M10 1v9M2 12v3.5h9" stroke="rgba(205,205,205,0.42)" stroke-width="1.1" fill="none"/></svg>
<svg class="a" style="left:1659px;top:938px;" width="14" height="16" viewBox="0 0 14 16"><path d="M1 2h6M4 2l-3 6M4 4l3 4M11 1v8M9 4h2M0.5 10h12M2 12a4 2.3 0 1 0 8 0a4 2.3 0 1 0 -8 0" stroke="rgba(205,205,205,0.42)" stroke-width="1.1" fill="none"/></svg>
<svg class="a" style="left:1506px;top:963px;" width="12" height="16" viewBox="0 0 12 16"><path d="M2 1v14h2" stroke="rgba(205,205,205,0.42)" stroke-width="1.1" fill="none"/></svg>
<svg class="a" style="left:1517.5px;top:963px;" width="12" height="16" viewBox="0 0 12 16"><path d="M1 1.5h4M3 1.5l-2 4M3 3l2 3M8 1v7M6 4h2M1 9h8v2.5H1v2.5h8" stroke="rgba(205,205,205,0.42)" stroke-width="1.1" fill="none"/></svg>
<svg class="a" style="left:1529.0px;top:963px;" width="12" height="16" viewBox="0 0 12 16"><path d="M1 1.5h4M3 1.5l-2 4M3 3l2 3M8 1v7M6 4h2M2 12a3 2 0 1 0 6 0a3 2 0 1 0 -6 0" stroke="rgba(205,205,205,0.42)" stroke-width="1.1" fill="none"/></svg>
<svg class="a" style="left:1540.5px;top:963px;" width="12" height="16" viewBox="0 0 12 16"><path d="M1 15h2V1" stroke="rgba(205,205,205,0.42)" stroke-width="1.1" fill="none"/></svg>
<svg class="a" style="left:1563.5px;top:963px;" width="12" height="16" viewBox="0 0 12 16"><path d="M4 4a3 3 0 1 0 0.1 0M0.5 10h9M5 10v4" stroke="rgba(205,205,205,0.42)" stroke-width="1.1" fill="none"/></svg>
<svg class="a" style="left:1575.0px;top:963px;" width="12" height="16" viewBox="0 0 12 16"><path d="M1 2h7v3H1v3h7M0.5 10h9M1 12h7v3H1" stroke="rgba(205,205,205,0.42)" stroke-width="1.1" fill="none"/></svg>
<svg class="a" style="left:1598.0px;top:963px;" width="12" height="16" viewBox="0 0 12 16"><path d="M4 4a3 3 0 1 0 0.1 0M9 1v14" stroke="rgba(205,205,205,0.42)" stroke-width="1.1" fill="none"/></svg>
<svg class="a" style="left:1609.5px;top:963px;" width="12" height="16" viewBox="0 0 12 16"><path d="M3 4a3 3 0 1 0 0.1 0M9 1v9M0.5 12h9M2 14a3 1.5 0 1 0 6 0" stroke="rgba(205,205,205,0.42)" stroke-width="1.1" fill="none"/></svg>
<svg class="a" style="left:1621.0px;top:963px;" width="12" height="16" viewBox="0 0 12 16"><path d="M1 1.5h5M3.5 1.5v3M0.5 5h7M3.5 8a2.5 2.5 0 1 0 .1 0M9 1v14M9 8h2" stroke="rgba(205,205,205,0.42)" stroke-width="1.1" fill="none"/></svg>
<svg class="a" style="left:1632.5px;top:963px;" width="12" height="16" viewBox="0 0 12 16"><path d="M3 6a3 3 0 1 0 0.1 0M9 1v14M9 7h2" stroke="rgba(205,205,205,0.42)" stroke-width="1.1" fill="none"/></svg>
<svg class="a" style="left:1706px;top:963px;" width="12" height="16" viewBox="0 0 12 16"><path d="M1 2h7v3H1v3h7M0.5 10h9M1 12h7v3H1" stroke="rgba(205,205,205,0.42)" stroke-width="1.1" fill="none"/></svg>
<svg class="a" style="left:1729.4px;top:963px;" width="12" height="16" viewBox="0 0 12 16"><path d="M1 2h6M4 2l-3 6M4 4l3 4M10 1v8M8 4h2M2 12a3.5 2 0 1 0 7 0a3.5 2 0 1 0 -7 0" stroke="rgba(205,205,205,0.42)" stroke-width="1.1" fill="none"/></svg>
<svg class="a" style="left:1741.1000000000001px;top:963px;" width="12" height="16" viewBox="0 0 12 16"><path d="M2 1.5h8M3.5 1.5v4M8.5 1.5v4M2 5.5h8M6 6v2M0.5 8h11M2 10h8v5H2z" stroke="rgba(205,205,205,0.42)" stroke-width="1.1" fill="none"/></svg>
<svg class="a" style="left:1764.5000000000002px;top:963px;" width="12" height="16" viewBox="0 0 12 16"><path d="M4 5a3 3.5 0 1 0 0.1 0M10 1v9M2 12v3.5h9" stroke="rgba(205,205,205,0.42)" stroke-width="1.1" fill="none"/></svg>
<svg class="a" style="left:1776.2000000000003px;top:963px;" width="12" height="16" viewBox="0 0 12 16"><path d="M1 1.5h6M4 1.5l-3 5M4 3l3 3.5M0.5 9h11M2 12a3.5 2 0 1 0 7 0a3.5 2 0 1 0 -7 0" stroke="rgba(205,205,205,0.42)" stroke-width="1.1" fill="none"/></svg>
<svg class="a" style="left:1787.9000000000003px;top:963px;" width="12" height="16" viewBox="0 0 12 16"><path d="M1 1.5h5M3.5 1.5v3M0.5 5h7M3.5 8a2.5 2.5 0 1 0 .1 0M9 1v14M9 8h2M2 12v3h8" stroke="rgba(205,205,205,0.42)" stroke-width="1.1" fill="none"/></svg>
<svg class="a" style="left:1799.6000000000004px;top:963px;" width="12" height="16" viewBox="0 0 12 16"><path d="M1 2v7h6M9 1v14" stroke="rgba(205,205,205,0.42)" stroke-width="1.1" fill="none"/></svg>
<svg class="a" style="left:1811.3000000000004px;top:963px;" width="12" height="16" viewBox="0 0 12 16"><path d="M1 2h6v7M0.5 10h9M1 10v5h7M9 1v14M9 7h2" stroke="rgba(205,205,205,0.42)" stroke-width="1.1" fill="none"/></svg>
<svg class="a" style="left:1823.0000000000005px;top:963px;" width="12" height="16" viewBox="0 0 12 16"><path d="M2 14h1" stroke="rgba(205,205,205,0.42)" stroke-width="1.1" fill="none"/></svg>
<div class="a" style="left:4px;top:999px;width:25px;height:25px;background:#3a3b3f;box-shadow:inset 0 0 0 1px #47484c;border-radius:3px;"></div>
<svg class="a" style="left:4px;top:999px;" width="25" height="25" viewBox="0 0 25 25"><circle cx="12.5" cy="12.5" r="5" fill="none" stroke="#dcdcdc" stroke-width="1.8"/><path d="M12.5 10v3h2" stroke="#dcdcdc" stroke-width="1.3" fill="none"/><path d="M6 8a8 8 0 0 0 0 9M19 8a8 8 0 0 1 0 9" stroke="#dcdcdc" stroke-width="1.8" fill="none"/></svg>
<div class="a" style="left:34px;top:999px;width:43px;height:25px;background:#1b1c1f;box-shadow:inset 0 0 0 1px #3b3c40;border-radius:3px;"></div>
<svg class="a" style="left:60px;top:1005px;" width="14" height="14" viewBox="0 0 14 14"><path d="M2.5 3.5h9l-4.5 6.5z" fill="#e0e0e0"/></svg>
<svg class="a" style="left:79px;top:1005px;" width="6" height="13" viewBox="0 0 6 13"><rect x="0.5" y="1" width="4" height="2.6" rx="1" fill="#d0d0d0"/><rect x="0.5" y="4.8" width="4" height="2.6" rx="1" fill="#d0d0d0"/><rect x="0.5" y="8.6" width="4" height="2.6" rx="1" fill="#d0d0d0"/></svg>
<div class="a" style="left:89px;top:999px;width:43px;height:25px;background:#1b1c1f;box-shadow:inset 0 0 0 1px #3b3c40;border-radius:3px;"></div>
<svg class="a" style="left:115px;top:1005px;" width="14" height="14" viewBox="0 0 14 14"><path d="M2.5 3.5h9l-4.5 6.5z" fill="#e0e0e0"/></svg>
<svg class="a" style="left:134px;top:1005px;" width="6" height="13" viewBox="0 0 6 13"><rect x="0.5" y="1" width="4" height="2.6" rx="1" fill="#d0d0d0"/><rect x="0.5" y="4.8" width="4" height="2.6" rx="1" fill="#d0d0d0"/><rect x="0.5" y="8.6" width="4" height="2.6" rx="1" fill="#d0d0d0"/></svg>
<div class="a" style="left:144px;top:999px;width:43px;height:25px;background:#1b1c1f;box-shadow:inset 0 0 0 1px #3b3c40;border-radius:3px;"></div>
<svg class="a" style="left:170px;top:1005px;" width="14" height="14" viewBox="0 0 14 14"><path d="M2.5 3.5h9l-4.5 6.5z" fill="#e0e0e0"/></svg>
<svg class="a" style="left:189px;top:1005px;" width="6" height="13" viewBox="0 0 6 13"><rect x="0.5" y="1" width="4" height="2.6" rx="1" fill="#d0d0d0"/><rect x="0.5" y="4.8" width="4" height="2.6" rx="1" fill="#d0d0d0"/><rect x="0.5" y="8.6" width="4" height="2.6" rx="1" fill="#d0d0d0"/></svg>
<svg class="a" style="left:34px;top:999px;" width="25" height="25" viewBox="0 0 25 25"><circle cx="12.5" cy="12.5" r="5" fill="#e0e0e0"/></svg>
<svg class="a" style="left:89px;top:999px;" width="25" height="25" viewBox="0 0 25 25"><path d="M3 12.5h3l1-2l1 4l1.5-8l1.5 11l1.5-7l1 3l1-2l1 2h3" stroke="#e0e0e0" stroke-width="1.5" fill="none"/></svg>
<svg class="a" style="left:144px;top:999px;" width="25" height="25" viewBox="0 0 25 25"><circle cx="12.5" cy="12.5" r="7.5" fill="#e0e0e0"/><circle cx="9" cy="10" r="1.2" fill="#1b1c1f"/><circle cx="12.5" cy="8.5" r="1.2" fill="#1b1c1f"/><circle cx="16" cy="10" r="1.2" fill="#1b1c1f"/><circle cx="10" cy="13.5" r="1.1" fill="#1b1c1f"/><circle cx="15" cy="13.5" r="1.1" fill="#1b1c1f"/></svg>
<div class="a" style="left:199px;top:999px;width:38px;height:25px;background:#35373b;box-shadow:inset 0 0 0 1px #45464a;border-radius:3px;"></div>
<div class="a t" style="left:208.50px;top:1006.57px;font-size:13.5px;line-height:13.5px;color:#d0d0d0;transform:scaleX(0.9741);transform-origin:0 0;">AQ</div>
<div class="a" style="left:466px;top:999px;width:149px;height:25px;background:#1b1c1f;box-shadow:inset 0 0 0 1px #3b3c40;border-radius:3px;"></div>
<div class="a" style="left:466px;top:999px;width:25px;height:25px;background:#3e3f43;box-shadow:inset 0 0 0 1px #4a4b4f;border-radius:3px;"></div>
<svg class="a" style="left:466px;top:999px;" width="25" height="25" viewBox="0 0 25 25"><path d="M9 8v10M9 8h7l-7 7z" fill="#e0e0e0" stroke="#e0e0e0" stroke-width="1.5"/></svg>
<div class="a t" style="left:530.00px;top:1004.80px;font-size:15px;line-height:15px;color:#d8d8d8;transform:scaleX(0.9500);transform-origin:0 0;">0.</div>
<div class="a t" style="left:551.00px;top:1004.80px;font-size:15px;line-height:15px;color:#d8d8d8;transform:scaleX(0.9500);transform-origin:0 0;">4.</div>
<div class="a t" style="left:571.50px;top:1004.80px;font-size:15px;line-height:15px;color:#d8d8d8;transform:scaleX(0.9500);transform-origin:0 0;">1.</div>
<div class="a t" style="left:600.50px;top:1004.80px;font-size:15px;line-height:15px;color:#d8d8d8;transform:scaleX(0.9500);transform-origin:0 0;">0</div>
<div class="a" style="left:626px;top:999px;width:149px;height:25px;background:#1b1c1f;box-shadow:inset 0 0 0 1px #3b3c40;border-radius:3px;"></div>
<div class="a" style="left:626px;top:999px;width:25px;height:25px;background:#3e3f43;box-shadow:inset 0 0 0 1px #4a4b4f;border-radius:3px;"></div>
<svg class="a" style="left:626px;top:999px;" width="25" height="25" viewBox="0 0 25 25"><path d="M16 8v10M16 8H9l7 7z" fill="#e0e0e0" stroke="#e0e0e0" stroke-width="1.5"/></svg>
<div class="a t" style="left:682.30px;top:1004.80px;font-size:15px;line-height:15px;color:#d8d8d8;transform:scaleX(0.9500);transform-origin:0 0;">74.</div>
<div class="a t" style="left:713.60px;top:1004.80px;font-size:15px;line-height:15px;color:#d8d8d8;transform:scaleX(0.9500);transform-origin:0 0;">1.</div>
<div class="a t" style="left:734.00px;top:1004.80px;font-size:15px;line-height:15px;color:#d8d8d8;transform:scaleX(0.9500);transform-origin:0 0;">1.</div>
<div class="a t" style="left:753.00px;top:1004.80px;font-size:15px;line-height:15px;color:#d8d8d8;transform:scaleX(0.9500);transform-origin:0 0;">28</div>
<div class="a" style="left:781px;top:999px;width:73px;height:25px;background:#3a3b3f;box-shadow:inset 0 0 0 1px #47484c;border-radius:3px;"></div>
<div class="a" style="left:781px;top:999px;width:25px;height:25px;background:#d4d4d4;border-radius:3px;"></div>
<svg class="a" style="left:781px;top:999px;" width="25" height="25" viewBox="0 0 25 25"><rect x="7.5" y="11" width="10" height="8" rx="1" fill="#1a1a1a"/><path d="M9.5 11V8.5a3 3 0 0 1 6 0V11" stroke="#1a1a1a" stroke-width="2" fill="none"/></svg>
<svg class="a" style="left:806px;top:999px;" width="25" height="25" viewBox="0 0 25 25"><path d="M7 7h11l-5.5 6z" fill="#e0e0e0"/><path d="M12.5 13v5" stroke="#e0e0e0" stroke-width="1.5"/><circle cx="12.5" cy="18.5" r="1.5" fill="#e0e0e0"/></svg>
<svg class="a" style="left:829px;top:999px;" width="25" height="25" viewBox="0 0 25 25"><path d="M7 18h11l-5.5-6z" fill="#e0e0e0"/><path d="M12.5 12V7" stroke="#e0e0e0" stroke-width="1.5"/><circle cx="12.5" cy="6.5" r="1.5" fill="#e0e0e0"/></svg>
<svg class="a" style="left:856px;top:1005px;" width="6" height="13" viewBox="0 0 6 13"><rect x="0.5" y="1" width="4" height="2.6" rx="1" fill="#d0d0d0"/><rect x="0.5" y="4.8" width="4" height="2.6" rx="1" fill="#d0d0d0"/><rect x="0.5" y="8.6" width="4" height="2.6" rx="1" fill="#d0d0d0"/></svg>
<div class="a" style="left:867px;top:996px;width:276px;height:32px;background:#5d5e61;border-radius:4px;border:2px solid #a3a4a7;"></div>
<div class="a" style="left:993px;top:998px;width:50px;height:28px;background:#a9abad;"></div>
<svg class="a" style="left:868px;top:998px;" width="40" height="28" viewBox="0 0 40 28"><path d="M14.5 8v12" stroke="#e8e8e8" stroke-width="1.8"/><path d="M25 8.5v11l-9-5.5z" fill="none" stroke="#e8e8e8" stroke-width="1.8" stroke-linejoin="round"/></svg>
<svg class="a" style="left:906px;top:998px;" width="40" height="28" viewBox="0 0 40 28"><path d="M25.5 8v12" stroke="#e8e8e8" stroke-width="1.8"/><path d="M15 8.5v11l9-5.5z" fill="none" stroke="#e8e8e8" stroke-width="1.8" stroke-linejoin="round"/></svg>
<svg class="a" style="left:944px;top:998px;" width="49" height="28" viewBox="0 0 49 28"><path d="M17 19h12a4.5 4.5 0 0 0 0 -9h-3M17 19l8-7" stroke="#e8e8e8" stroke-width="1.8" fill="none"/></svg>
<svg class="a" style="left:993px;top:998px;" width="50" height="28" viewBox="0 0 50 28"><rect x="20" y="8" width="11" height="11" fill="none" stroke="#111" stroke-width="2.2"/></svg>
<svg class="a" style="left:1043px;top:998px;" width="50" height="28" viewBox="0 0 50 28"><path d="M21.5 7.5v13l11-6.5z" fill="none" stroke="#e8e8e8" stroke-width="1.8" stroke-linejoin="round"/></svg>
<svg class="a" style="left:1093px;top:998px;" width="50" height="28" viewBox="0 0 50 28"><circle cx="26" cy="14" r="6" fill="none" stroke="#e8e8e8" stroke-width="1.8"/></svg>
<svg class="a" style="left:1144px;top:1005px;" width="6" height="13" viewBox="0 0 6 13"><rect x="0.5" y="1" width="4" height="2.6" rx="1" fill="#d0d0d0"/><rect x="0.5" y="4.8" width="4" height="2.6" rx="1" fill="#d0d0d0"/><rect x="0.5" y="8.6" width="4" height="2.6" rx="1" fill="#d0d0d0"/></svg>
<div class="a" style="left:1154px;top:999px;width:37px;height:25px;background:#2e3034;box-shadow:inset 0 0 0 1px #3b3c40;border-radius:3px;"></div>
<svg class="a" style="left:1154px;top:999px;" width="37" height="25" viewBox="0 0 37 25"><circle cx="17" cy="12" r="2.5" fill="#707174"/><path d="M18 6a6 6 0 1 1 0 12a4.5 6 0 0 0 0 -12z" fill="#707174"/></svg>
<div class="a" style="left:1197px;top:999px;width:150px;height:25px;background:#1b1c1f;box-shadow:inset 0 0 0 1px #3b3c40;border-radius:3px;"></div>
<div class="a" style="left:1197px;top:999px;width:25px;height:25px;background:#2e3034;box-shadow:inset 0 0 0 1px #3b3c40;border-radius:3px;"></div>
<svg class="a" style="left:1197px;top:999px;" width="25" height="25" viewBox="0 0 25 25"><path d="M14.5 6v11" stroke="#e0e0e0" stroke-width="1.5"/><ellipse cx="12" cy="17" rx="3" ry="2.2" fill="#e0e0e0"/></svg>
<div class="a t" style="left:1252.50px;top:1004.80px;font-size:15px;line-height:15px;color:#d8d8d8;transform:scaleX(0.9591);transform-origin:0 0;">58.</div>
<div class="a t" style="left:1282.50px;top:1004.80px;font-size:15px;line-height:15px;color:#d8d8d8;transform:scaleX(0.9593);transform-origin:0 0;">3.</div>
<div class="a t" style="left:1303.00px;top:1004.80px;font-size:15px;line-height:15px;color:#d8d8d8;">3.119</div>
<svg class="a" style="left:1348px;top:1005px;" width="6" height="13" viewBox="0 0 6 13"><rect x="0.5" y="1" width="4" height="2.6" rx="1" fill="#d0d0d0"/><rect x="0.5" y="4.8" width="4" height="2.6" rx="1" fill="#d0d0d0"/><rect x="0.5" y="8.6" width="4" height="2.6" rx="1" fill="#d0d0d0"/></svg>
<div class="a" style="left:1358px;top:999px;width:182px;height:25px;background:#1b1c1f;box-shadow:inset 0 0 0 1px #3b3c40;border-radius:3px;"></div>
<div class="a" style="left:1358px;top:999px;width:25px;height:25px;background:#d4d4d4;border-radius:3px;"></div>
<svg class="a" style="left:1358px;top:999px;" width="25" height="25" viewBox="0 0 25 25"><path d="M9.5 6v11M15.5 8v11" stroke="#1a1a1a" stroke-width="1.5"/><ellipse cx="8" cy="17" rx="2.5" ry="2" fill="#1a1a1a"/><path d="M13 8l2.5-3l2.5 3zM13 17l2.5 3l2.5-3z" fill="#1a1a1a"/></svg>
<div class="a t" style="left:1401.70px;top:1005.57px;font-size:13.5px;line-height:13.5px;color:#d8d8d8;transform:scaleX(0.9275);transform-origin:0 0;">95.000</div>
<svg class="a" style="left:1446px;top:1003px;" width="14" height="18" viewBox="0 0 14 18"><path d="M2.5 7.5h8l-4-5z M2.5 10.5h8l-4 5z" fill="#dcdcdc"/></svg>
<div class="a" style="left:1465px;top:999px;width:50px;height:25px;background:#3a3b3f;"></div>
<div class="a t" style="left:1480.40px;top:1006.00px;font-size:13px;line-height:13px;color:#d8d8d8;transform:scaleX(0.8874);transform-origin:0 0;">Tap</div>
<svg class="a" style="left:1519px;top:1005px;" width="14" height="14" viewBox="0 0 14 14"><path d="M2.5 4h9l-4.5 6z" fill="#e0e0e0"/></svg>
<svg class="a" style="left:1540px;top:1005px;" width="6" height="13" viewBox="0 0 6 13"><rect x="0.5" y="1" width="4" height="2.6" rx="1" fill="#d0d0d0"/><rect x="0.5" y="4.8" width="4" height="2.6" rx="1" fill="#d0d0d0"/><rect x="0.5" y="8.6" width="4" height="2.6" rx="1" fill="#d0d0d0"/></svg>
<div class="a" style="left:1766px;top:999px;width:43px;height:25px;background:#35373b;box-shadow:inset 0 0 0 1px #45464a;border-radius:3px;"></div>
<div class="a" style="left:1790px;top:1000px;width:1px;height:23px;background:#45464a;"></div>
<svg class="a" style="left:1766px;top:999px;" width="24" height="25" viewBox="0 0 24 25"><path d="M8 18.5l3-11h2l3 11z" fill="#e0e0e0"/><path d="M12 15l4.5-8" stroke="#35373b" stroke-width="1.3"/><path d="M12.5 14l5-7.5" stroke="#e0e0e0" stroke-width="1.2"/></svg>
<svg class="a" style="left:1791px;top:999px;" width="18" height="25" viewBox="0 0 18 25"><g transform="translate(9 12.5)"><circle r="3.2" fill="none" stroke="#e0e0e0" stroke-width="2.2"/><path d="M0 -6v2.5M0 3.5v2.5M-6 0h2.5M3.5 0h2.5M-4.3 -4.3l1.8 1.8M2.5 2.5l1.8 1.8M4.3 -4.3l-1.8 1.8M-2.5 2.5l-1.8 1.8" stroke="#e0e0e0" stroke-width="2"/></g></svg>
<svg class="a" style="left:1811px;top:1005px;" width="6" height="13" viewBox="0 0 6 13"><rect x="0.5" y="1" width="4" height="2.6" rx="1" fill="#d0d0d0"/><rect x="0.5" y="4.8" width="4" height="2.6" rx="1" fill="#d0d0d0"/><rect x="0.5" y="8.6" width="4" height="2.6" rx="1" fill="#d0d0d0"/></svg>
<div class="a" style="left:1821px;top:999px;width:88px;height:25px;background:#1b1c1f;box-shadow:inset 0 0 0 1px #3b3c40;border-radius:3px;"></div>
<div class="a" style="left:1847px;top:1000px;width:1px;height:23px;background:#3b3c40;"></div>
<svg class="a" style="left:1910px;top:1005px;" width="6" height="13" viewBox="0 0 6 13"><rect x="0.5" y="1" width="4" height="2.6" rx="1" fill="#d0d0d0"/><rect x="0.5" y="4.8" width="4" height="2.6" rx="1" fill="#d0d0d0"/><rect x="0.5" y="8.6" width="4" height="2.6" rx="1" fill="#d0d0d0"/></svg>
</body></html>
